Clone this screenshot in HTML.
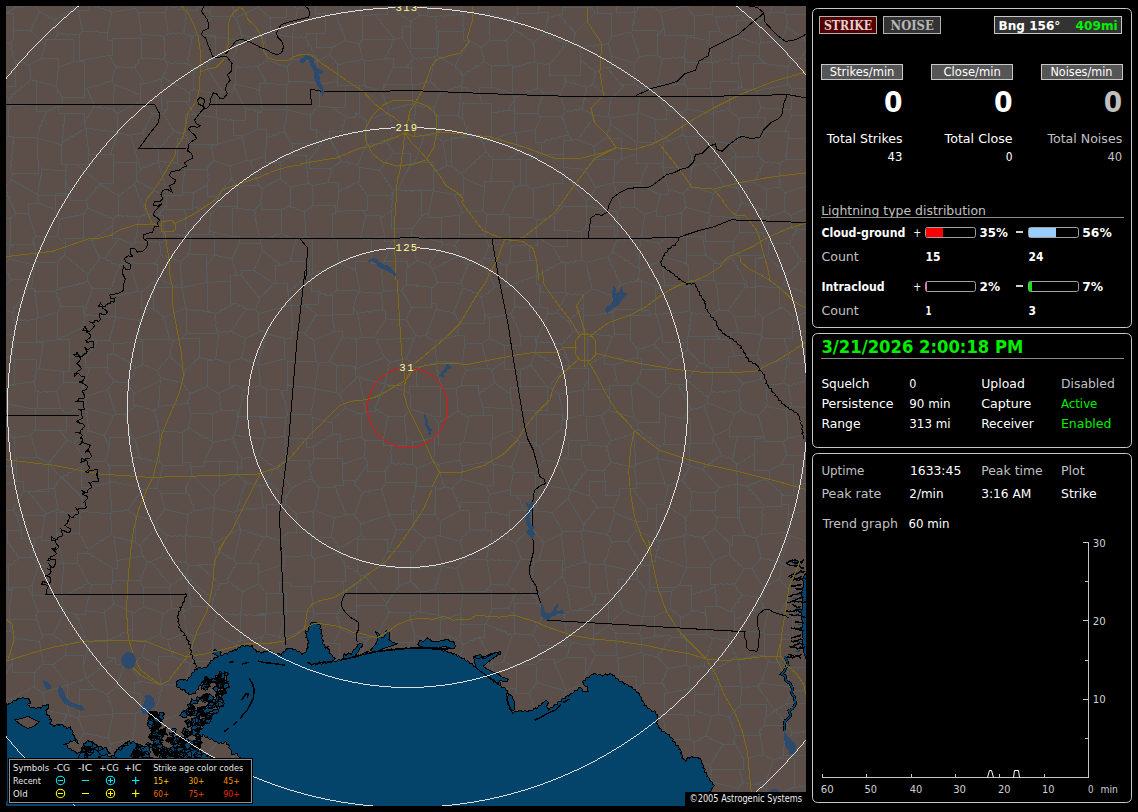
<!DOCTYPE html>
<html><head><meta charset="utf-8"><title>Lightning Monitor</title>
<style>
html,body{margin:0;padding:0;background:#000;overflow:hidden}
svg{display:block}
text{font-family:"DejaVu Sans","Liberation Sans",sans-serif;white-space:pre}
</style></head><body>
<svg width="1138" height="812" viewBox="0 0 1138 812">
<rect width="1138" height="812" fill="#000"/>
<defs><clipPath id="mc"><rect x="6" y="6" width="800" height="800"/></clipPath></defs>
<g clip-path="url(#mc)" shape-rendering="crispEdges">
<rect x="6" y="6" width="800" height="800" fill="#5c4f4a"/>
<path d="M804.5 -17.2 L819.6 13.0 M-13.0 487.7 L-11.2 487.8 L-8.1 486.2 L-5.6 487.2 L-3.4 485.2 L-0.1 485.9 L1.5 484.6 L5.0 484.3 L6.7 484.2 L9.9 482.7 L12.1 483.5 L14.7 481.4 L17.3 481.5 M-13.3 487.9 L-13.3 490.1 L-10.6 492.4 L-10.8 495.3 L-8.2 496.8 L-8.0 500.2 L-5.9 501.5 L-4.9 504.9 L-3.8 506.4 L-1.8 509.4 L-1.2 511.7 M23.1 491.3 L23.1 481.5 L17.3 481.5 M23.4 490.9 L22.3 494.4 L20.4 495.7 L20.0 499.1 L17.5 500.5 L17.4 503.6 L14.5 505.4 L14.5 507.9 L12.4 510.2 M12.4 510.2 L-1.2 511.7 M-9.7 739.9 L-10.9 741.3 L-10.9 744.6 L-13.2 746.3 L-12.6 749.1 L-15.0 751.4 L-14.7 753.4 L-16.3 756.5 L-17.2 757.9 L-17.6 761.3 L-18.6 763.3 M-9.3 739.6 L-13.9 737.3 M691.2 313.7 L694.4 312.8 L696.7 314.5 L698.9 313.2 L702.1 314.3 L703.7 314.4 L707.0 313.8 L709.0 315.2 L711.6 314.2 M690.8 313.6 L691.3 315.4 L690.7 318.8 L690.0 320.3 L690.6 323.7 L689.0 325.7 L690.2 328.2 L688.7 331.2 L689.0 332.9 L688.9 336.3 L687.7 337.9 L687.9 340.8 M711.6 314.2 L717.7 336.3 M717.7 336.3 L687.9 336.3 L687.9 340.8 M742.2 594.5 L744.4 596.3 L746.7 595.1 L749.9 596.4 L751.5 596.3 L754.9 596.1 L756.7 597.5 L759.5 597.3 M742.0 595.2 L734.2 584.8 M734.2 584.8 L744.5 568.7 M763.2 587.1 L763.2 597.3 L759.5 597.3 M763.2 587.1 L751.8 568.6 M751.8 568.6 L744.5 568.7 M781.7 564.6 L779.2 579.5 M781.7 564.6 L780.4 562.0 M780.4 562.0 L761.2 558.2 M761.2 558.2 L751.8 568.6 M779.2 579.5 L763.2 587.1 M813.3 297.9 L812.6 299.9 L814.3 302.8 L813.1 305.5 L814.6 307.9 M-15.7 35.5 L-15.7 9.3 L-9.3 9.3 M-9.3 9.3 L-10.2 8.3 M55.7 -14.9 L55.7 -9.0 L40.0 -9.0 M40.0 -9.0 L39.9 -9.1 M804.5 -17.2 L792.2 -17.2 L792.2 -17.6 M-7.6 808.1 L-15.1 820.3 M-18.6 763.3 L-18.6 769.7 L-11.1 769.7 M-9.4 781.4 L-8.2 778.1 L-10.3 775.6 L-9.6 772.4 L-11.1 769.7 M-7.5 708.1 L-11.8 710.7 M11.9 698.6 L11.9 707.0 L9.6 707.0 M11.9 698.6 L2.1 698.6 L2.1 682.2 M9.6 707.8 L6.7 706.1 L4.0 707.8 L0.9 706.4 L-1.5 708.2 L-4.9 707.4 L-7.5 708.1 M2.0 681.2 L-0.1 681.7 L-3.4 680.3 L-5.1 680.0 L-8.7 679.7 L-10.4 678.4 L-13.8 679.0 L-16.1 678.0 M-14.1 737.8 L-14.4 734.2 L-13.3 732.3 L-14.4 729.1 L-12.7 726.8 L-14.0 724.1 L-12.3 721.1 L-13.2 719.1 L-12.4 715.6 L-12.1 713.9 L-11.8 710.7 M780.4 562.0 L790.0 535.6 M761.2 558.2 L756.0 537.5 M790.0 535.6 L787.6 532.1 M787.6 532.1 L761.4 534.5 M756.0 537.5 L761.4 534.5 M715.2 561.1 L716.7 559.2 L720.3 558.7 L721.7 557.3 L725.0 556.0 L726.8 555.5 L729.5 554.0 M714.6 560.2 L702.7 537.8 M713.7 528.1 L712.6 531.0 L709.3 532.1 L708.2 535.0 L704.6 535.9 L702.7 537.8 M714.5 528.9 L732.9 545.9 M732.9 545.9 L729.5 545.9 L729.5 554.0 M744.5 569.3 L741.9 566.9 L741.0 565.3 L737.9 563.7 L737.4 561.2 L734.3 560.4 L733.3 557.3 L731.0 556.7 L729.5 554.0 M745.9 535.5 L747.6 535.9 L751.2 536.2 L752.8 537.7 L756.0 537.5 M745.5 535.1 L732.9 535.1 L732.9 545.9 M815.1 633.0 L813.7 631.4 L813.4 627.9 L813.4 626.2 L811.7 623.2 L812.7 620.7 L810.7 618.6 L810.6 615.8 M810.6 615.8 L814.4 610.3 M794.4 317.8 L792.1 331.2 M794.4 317.8 L813.9 308.5 M812.9 308.8 L813.9 310.7 L813.5 314.3 L813.2 316.0 L814.0 319.5 L812.8 321.6 L814.4 324.6 L812.9 327.1 L814.5 329.6 L813.2 332.7 L814.5 334.7 L813.8 338.2 L813.9 340.4 M792.1 331.2 L813.9 331.2 L813.9 340.4 M781.4 306.7 L784.4 308.9 L785.5 310.5 L788.8 312.1 L789.6 314.5 L792.8 315.7 L794.4 317.8 M782.0 308.0 L778.7 308.1 L777.4 310.2 L773.8 311.0 L772.5 312.5 L769.2 314.1 L767.5 314.8 L764.9 317.3 L762.8 318.4 M761.8 335.0 L762.8 318.4 M761.8 335.0 L762.2 335.6 M762.2 335.6 L762.2 338.9 L784.3 338.9 M784.3 338.9 L792.1 338.9 L792.1 331.2 M781.5 307.2 L779.9 307.2 L779.9 287.8 M810.7 295.0 L813.3 297.5 M810.7 295.0 L783.7 284.4 M814.6 307.9 L813.9 308.5 M783.7 284.4 L779.9 287.8 M813.9 340.4 L818.6 345.2 M-17.2 82.7 L-14.1 86.1 M10.0 -11.5 L-8.1 -11.5 L-8.1 -6.8 M10.0 -11.5 L14.4 -18.7 M-9.3 9.3 L-9.3 13.3 L6.7 13.3 M-10.2 8.3 L-8.1 8.3 L-8.1 -6.8 M6.7 13.3 L15.3 7.6 M15.3 7.6 L10.0 -11.5 M40.0 -9.0 L35.8 4.2 M36.3 5.0 L32.8 4.9 L31.2 5.2 L27.9 6.3 L25.8 5.5 L23.1 7.4 L20.3 6.2 L18.3 8.1 L15.3 7.6 M39.9 -9.1 L14.4 -18.7 M509.1 -15.2 L516.8 -12.4 M509.1 -15.2 L494.1 -16.6 M516.8 -12.4 L517.7 -12.4 L517.7 13.9 M494.1 -16.6 L493.8 -16.2 M493.8 -16.2 L488.5 13.3 M517.7 13.9 L513.1 19.8 M513.1 19.8 L490.1 14.4 M488.5 13.3 L490.1 14.4 M533.0 -19.2 L516.8 -12.4 M463.8 16.8 L461.1 14.0 M463.8 16.8 L463.8 13.3 L488.5 13.3 M464.2 -10.1 L464.2 -16.2 L493.8 -16.2 M464.2 -10.1 L459.7 -10.1 L459.7 -1.2 M459.7 -1.2 L461.1 -1.2 L461.1 14.0 M533.0 -19.2 L539.2 -12.1 M517.7 13.9 L538.4 13.9 L538.4 12.1 M539.0 -12.6 L539.9 -9.1 L538.7 -7.0 L540.1 -3.9 L538.5 -1.3 L539.9 1.2 L538.4 4.3 L539.3 6.3 L538.4 9.9 L538.4 12.1 M738.4 332.4 L734.4 316.2 M738.2 333.4 L741.1 332.1 L743.7 333.9 L746.0 332.7 L749.2 334.0 L750.9 333.9 L754.5 333.9 L756.2 335.0 L759.4 334.0 L761.8 335.0 M762.2 318.8 L761.8 315.7 L758.9 314.7 L757.9 311.4 L755.5 310.2 M734.4 316.2 L755.5 316.2 L755.5 310.2 M711.6 314.2 L719.3 309.6 M717.7 336.3 L720.7 339.0 M738.4 332.4 L730.1 332.4 L730.1 340.4 M730.1 340.4 L720.7 339.0 M719.3 309.6 L719.3 310.4 L728.0 310.4 M734.4 316.2 L728.0 310.4 M819.6 13.0 L818.4 14.1 M818.2 13.7 L819.3 17.0 L818.2 19.1 L819.9 21.9 L818.5 24.7 L820.0 26.8 L819.1 30.2 L819.7 31.9 L820.0 35.4 L819.5 37.6 M-15.9 332.9 L-19.8 332.9 L-19.8 317.2 M-15.9 332.9 L-12.1 335.2 M-14.7 358.1 L-14.7 335.2 L-12.1 335.2 M-14.0 440.2 L-14.0 413.5 L-10.6 413.5 M-14.0 440.2 L-9.7 444.7 M-9.7 444.7 L10.7 436.8 M10.8 436.3 L11.0 434.5 L9.0 431.8 L9.9 429.3 L7.7 427.4 L8.1 424.1 L7.0 422.7 L6.0 419.4 L6.3 417.6 L4.2 415.1 L4.9 412.3 L3.4 410.2 M3.4 410.2 L-10.6 410.2 L-10.6 413.5 M16.3 470.3 L14.4 468.6 M16.3 470.3 L16.3 457.3 L37.5 457.3 M14.4 468.6 L14.5 437.8 M14.1 436.8 L17.5 437.6 L19.3 436.7 L23.0 436.8 L24.7 436.7 L28.3 436.0 L30.5 435.7 M38.4 457.3 L36.2 455.1 L36.8 452.0 L35.2 450.5 L34.6 447.1 L34.5 445.5 L32.5 442.8 L33.2 440.1 L31.1 438.5 L30.5 435.7 M16.3 470.3 L16.3 481.5 L17.3 481.5 M23.1 491.3 L25.7 491.3 M25.7 491.3 L48.5 491.3 L48.5 463.1 M37.8 457.7 L39.8 458.7 L43.6 460.2 L45.5 461.1 L48.5 463.1 M14.5 437.8 L10.7 436.8 M8.8 404.1 L32.0 408.8 M8.8 404.1 L8.8 410.2 L3.4 410.2 M32.1 408.9 L32.0 408.8 M32.1 408.9 L35.0 408.9 L35.0 429.5 M30.5 435.7 L35.0 429.5 M159.1 430.8 L159.1 462.3 L160.3 462.3 M159.1 430.8 L158.8 430.5 M158.8 430.5 L135.0 439.4 M160.6 463.1 L157.2 462.0 L155.6 461.5 L152.0 461.4 L150.3 459.8 L147.1 460.6 L145.0 458.4 L142.3 459.4 L139.8 457.9 M135.0 439.4 L139.8 457.9 M564.1 205.1 L561.7 208.1 L560.1 209.3 L557.8 212.4 L555.8 213.3 L554.1 216.3 M563.5 205.2 L563.5 206.0 L585.7 206.0 M585.7 206.0 L586.1 206.0 L586.1 226.4 M567.1 230.4 L554.1 230.4 L554.1 216.3 M567.1 230.4 L581.3 231.8 M581.3 231.8 L586.1 226.4 M585.7 206.0 L585.9 205.7 M586.1 226.4 L614.6 226.4 L614.6 235.3 M614.6 235.3 L617.5 235.3 L617.5 211.6 M585.9 205.7 L617.5 211.6 M263.4 -15.2 L263.4 -14.7 L243.3 -14.7 M54.9 -14.4 L58.4 -13.7 L59.6 -11.0 L62.8 -10.5 L64.2 -7.4 L66.5 -5.9 M67.2 -5.2 L68.5 -7.0 L72.0 -7.9 L73.5 -8.9 L76.6 -10.8 L78.6 -11.0 L81.1 -13.7 L83.8 -13.5 L85.6 -16.2 L88.8 -16.2 L90.9 -17.7 M-16.3 486.2 L-14.9 483.0 L-14.6 481.4 L-14.3 477.9 L-12.9 476.2 L-13.6 473.0 L-11.5 470.9 L-12.4 468.3 L-10.5 465.5 L-10.9 463.5 L-9.8 460.6 M-10.5 459.4 L-9.8 460.6 M-13.5 487.5 L-15.4 486.1 M-1.2 511.7 L-10.5 511.7 L-10.5 521.1 M-9.7 444.7 L-9.7 459.4 L-10.5 459.4 M14.4 468.6 L-9.8 460.6 M-18.8 641.4 L-18.2 644.8 L-18.4 646.5 L-16.6 649.3 L-17.6 651.8 L-15.7 653.8 L-16.0 656.7 M-9.5 542.4 L-12.3 539.1 M-10.4 542.2 L-8.6 545.2 L-9.9 547.9 L-8.1 550.5 L-9.3 553.6 L-7.9 555.7 L-8.8 558.8 M-8.8 558.8 L-10.2 560.8 M-10.5 521.1 L-12.3 521.1 L-12.3 539.1 M15.2 638.4 L10.1 628.9 M15.2 638.4 L9.7 654.0 M9.7 654.0 L9.7 656.7 L-16.0 656.7 M-12.0 631.1 L10.1 631.1 L10.1 628.9 M-12.0 631.1 L-19.4 631.1 L-19.4 642.0 M1.1 682.0 L3.3 679.5 L4.0 678.0 L5.0 674.7 L7.1 673.6 L7.0 670.6 L9.6 668.6 L9.8 666.8 L11.4 663.8 L12.8 662.2 M12.8 662.2 L12.8 654.0 L9.7 654.0 M11.9 698.6 L33.9 686.6 M12.8 662.2 L12.8 672.1 L34.7 672.1 M34.8 686.3 L34.0 684.1 L34.8 680.4 L34.1 678.4 L34.4 674.5 L34.7 672.1 M67.0 714.6 L46.9 710.4 M67.0 714.6 L54.3 739.5 M54.6 738.7 L51.3 740.1 L48.9 738.7 L45.9 740.1 L43.1 738.4 L40.5 738.6 M40.5 738.6 L40.5 716.3 L41.0 716.3 M41.0 716.3 L41.0 710.4 L46.9 710.4 M9.6 707.0 L11.8 712.0 M11.4 711.4 L15.0 711.9 L16.7 712.8 L20.2 712.2 L22.2 714.0 L25.2 712.9 L27.8 714.9 L30.2 714.0 L33.3 715.8 L35.3 715.3 L38.7 716.2 L41.0 716.3 M33.9 686.6 L42.7 693.1 M42.7 693.1 L46.9 710.4 M12.4 510.2 L17.2 516.0 M-9.5 542.4 L7.5 542.4 L7.5 542.7 M17.2 516.0 L21.5 530.8 M7.5 542.7 L7.5 530.8 L21.5 530.8 M160.3 462.3 L163.4 465.4 M163.4 465.4 L156.6 488.1 M156.6 488.1 L142.0 489.4 M139.8 457.9 L131.6 457.9 L131.6 465.0 M131.6 465.0 L139.9 487.3 M142.0 489.4 L139.9 487.3 M487.0 823.6 L463.7 817.9 M487.0 823.6 L487.0 816.7 L494.1 816.7 M494.1 816.7 L480.6 789.2 M460.6 796.9 L480.6 789.2 M460.6 796.9 L459.5 796.9 L459.5 807.3 M459.5 807.3 L459.5 817.9 L463.7 817.9 M494.1 816.7 L494.1 814.3 L508.2 814.3 M480.6 789.2 L482.7 786.3 M482.4 786.9 L485.7 785.5 L488.0 786.7 L491.0 785.1 L493.8 786.6 L496.2 785.1 L499.5 786.4 L501.5 785.6 L505.1 786.3 L507.4 786.0 M515.5 797.1 L514.5 795.5 L512.3 792.5 L511.4 790.7 L508.6 788.1 L507.4 786.0 M515.6 797.6 L514.0 797.6 L514.0 806.6 M514.0 806.6 L508.2 806.6 L508.2 814.3 M459.8 757.1 L461.7 753.9 L461.6 751.9 L463.1 748.3 L463.6 746.5 L464.3 742.8 L465.0 741.1 L465.2 737.7 M460.8 757.0 L462.9 760.7 M462.9 760.7 L480.7 760.7 L480.7 768.6 M485.5 735.7 L471.6 733.5 M485.5 735.7 L492.0 758.5 M492.7 758.6 L490.2 760.9 L488.4 761.5 L486.9 764.5 L484.1 764.9 L483.4 767.3 L480.7 768.6 M465.2 737.7 L471.6 733.5 M460.2 796.7 L459.6 794.5 L456.5 793.6 L455.6 790.7 L453.2 790.2 L451.2 788.1 M450.7 788.4 L451.9 784.9 L453.2 783.5 L453.7 779.9 L455.8 778.5 L455.8 775.1 L458.4 773.5 L458.1 770.4 L460.7 768.3 L460.5 765.8 L462.8 763.1 L462.9 760.7 M483.3 785.8 L482.7 784.3 L481.8 780.9 L482.7 778.9 L480.9 776.2 L482.1 773.4 L480.6 771.6 L480.7 768.6 M484.7 624.2 L461.6 624.2 L461.6 615.2 M484.7 624.2 L484.7 637.1 L479.9 637.1 M462.1 615.5 L460.4 617.7 L461.9 620.4 L460.3 623.4 L461.2 625.4 L460.5 628.9 L460.5 630.6 L460.8 634.1 L459.7 636.1 L461.0 639.1 L460.5 641.7 M480.1 636.6 L477.6 638.9 L474.8 638.5 L473.1 640.9 L469.7 641.0 L468.3 642.5 L464.9 643.7 L462.8 644.2 M460.5 641.7 L462.8 644.2 M468.0 667.1 L492.3 664.2 M468.0 667.1 L460.4 656.6 M492.7 663.9 L492.3 664.2 M493.7 663.5 L491.1 661.8 L491.0 658.4 L489.0 657.1 L488.0 653.6 L487.1 652.2 L485.1 649.1 L484.9 647.1 L482.4 644.7 L482.6 641.9 L480.1 640.1 L479.9 637.1 M461.6 656.7 L460.6 654.4 L462.2 651.4 L462.2 649.7 L462.2 646.3 L462.8 644.2 M439.7 634.2 L443.2 633.9 L445.0 636.2 L448.1 635.5 L450.4 638.0 L452.9 637.6 L455.9 639.7 L457.6 640.2 L460.5 641.7 M440.2 633.5 L440.2 640.1 L433.5 640.1 M460.9 656.9 L457.5 657.5 L455.5 656.5 L452.8 658.1 L450.0 656.8 L448.1 658.1 L444.6 657.6 L443.0 657.5 L439.7 658.6 L437.4 658.1 M433.5 640.1 L437.4 640.1 L437.4 658.1 M487.9 702.4 L487.9 714.3 L499.9 714.3 M487.9 702.4 L469.0 713.0 M469.0 713.0 L471.6 713.0 L471.6 733.5 M485.5 735.7 L489.0 733.5 M489.0 733.5 L499.9 733.5 L499.9 714.3 M445.2 709.2 L463.6 709.0 M445.6 708.7 L444.9 707.0 L443.8 703.5 L444.2 701.4 L442.2 698.4 L443.0 695.8 L440.7 693.4 L441.4 690.3 L439.1 688.4 L439.2 685.3 M463.6 709.0 L465.1 709.0 L465.1 686.8 M439.2 685.3 L461.2 685.3 L461.2 681.4 M465.1 686.8 L461.2 681.4 M487.6 693.5 L465.1 686.8 M487.6 693.5 L487.6 702.4 L487.9 702.4 M469.0 713.0 L463.6 709.0 M487.6 693.5 L491.1 688.3 M491.5 687.8 L491.5 686.1 L491.4 682.5 L492.4 680.6 L491.4 677.3 L493.0 675.1 L491.5 672.3 L493.1 669.3 L492.2 667.3 L492.3 664.2 M469.0 667.2 L466.7 669.9 L466.3 671.6 L464.7 674.8 L463.4 676.2 L462.9 679.6 L461.2 681.4 M465.2 737.7 L441.7 729.6 M445.2 709.2 L441.9 714.3 M441.9 714.3 L441.7 729.6 M437.3 757.9 L434.0 757.9 L434.0 735.9 M437.3 757.9 L460.8 757.9 L460.8 757.0 M441.7 729.6 L434.0 735.9 M451.2 788.1 L440.6 788.1 L440.6 785.7 M437.3 757.9 L435.8 759.8 M440.6 785.7 L435.8 759.8 M565.9 263.1 L565.8 292.5 M566.0 262.5 L568.5 263.6 L570.8 261.5 L574.0 262.3 L575.7 260.9 L579.2 260.6 L581.2 259.8 M581.2 259.8 L586.6 262.3 M586.5 262.9 L586.7 264.6 L587.7 268.1 L587.3 270.2 L589.1 273.2 L588.2 275.8 L590.4 278.3 L589.5 281.3 L591.7 283.4 L591.2 286.8 L592.0 289.1 M566.8 294.3 L565.8 292.5 M566.4 294.1 L570.0 293.8 L571.9 294.9 L575.3 293.8 L577.5 295.4 L580.4 294.1 L583.1 295.4 M583.1 295.4 L592.0 289.1 M684.3 517.3 L686.0 520.4 L684.6 523.1 L686.3 525.7 L684.9 528.9 L686.2 531.1 L685.2 534.2 M685.2 517.5 L690.0 513.2 M685.2 534.2 L702.7 537.8 M690.0 513.2 L690.0 510.4 L711.2 510.4 M714.5 528.9 L717.7 518.7 M717.7 518.7 L711.2 510.4 M690.0 513.2 L691.6 491.9 M691.6 491.9 L715.2 492.5 M711.2 510.4 L715.2 510.4 L715.2 492.5 M811.4 589.0 L811.4 569.2 L812.7 569.2 M811.4 589.0 L815.5 594.2 M812.7 569.2 L813.4 568.1 M814.4 610.3 L815.5 610.3 L815.5 594.2 M781.7 564.6 L812.7 569.2 M792.1 592.1 L789.9 589.5 L788.8 588.3 L785.8 586.8 L785.1 584.2 L782.4 583.8 L780.9 580.8 L779.2 579.5 M792.4 591.2 L792.4 589.0 L811.4 589.0 M809.3 542.0 L813.4 568.1 M809.3 542.0 L821.0 534.9 M809.3 542.0 L790.0 535.6 M483.2 407.6 L478.9 394.2 M483.2 407.6 L512.0 408.6 M495.0 382.5 L492.0 384.7 L490.3 385.6 L487.9 388.3 L485.5 388.5 L483.5 391.4 L480.6 391.6 L478.9 394.2 M494.3 382.4 L510.5 394.2 M511.3 408.5 L512.8 405.8 L511.0 402.8 L512.1 399.9 L509.9 397.2 L510.5 394.2 M687.9 340.8 L687.0 342.6 M687.0 342.6 L687.5 349.7 M720.7 339.0 L704.8 339.0 L704.8 363.9 M687.5 349.7 L699.8 362.6 M704.8 363.9 L699.8 362.6 M818.6 345.2 L811.9 361.7 M784.3 338.9 L789.1 356.6 M789.1 356.6 L789.1 363.1 L809.3 363.1 M811.9 361.7 L809.3 363.1 M788.1 384.9 L791.1 385.8 L793.3 383.6 L796.7 384.3 L798.5 382.2 L802.1 382.3 L804.2 381.0 M788.2 385.6 L783.6 383.5 M789.1 356.6 L787.2 358.4 M804.2 381.0 L809.3 363.1 M784.7 383.7 L783.5 381.1 L785.3 378.3 L784.8 376.5 L785.3 373.0 L786.2 371.5 L785.5 368.2 L787.3 366.1 L786.2 363.6 L787.8 360.6 L787.2 358.4 M188.4 403.7 L187.5 400.9 L189.6 398.5 L189.2 396.5 L189.9 393.7 M187.4 403.4 L191.2 412.6 M189.9 393.7 L207.2 386.4 M207.2 386.4 L218.3 393.6 M218.4 393.1 L219.6 396.7 L219.1 398.8 L220.7 402.1 L219.6 404.5 L221.3 407.5 L221.1 410.2 M221.1 410.2 L211.9 413.8 M191.2 412.6 L191.2 413.8 L211.9 413.8 M-14.1 143.7 L-9.3 139.2 M35.8 4.2 L39.3 12.2 M38.9 11.9 L42.5 13.1 L43.8 14.8 L47.3 15.3 L48.7 17.7 L51.9 17.9 L53.8 20.0 M66.5 -5.9 L73.6 -5.9 L73.6 8.3 M54.5 21.0 L55.6 18.8 L58.9 17.6 L60.3 16.8 L62.9 14.5 L65.2 14.6 L66.8 11.8 L70.0 11.7 L71.1 9.7 L73.6 8.3 M-16.1 36.5 L-13.3 35.8 L-10.8 37.9 L-9.0 37.8 L-5.7 38.7 L-4.2 40.1 L-1.1 39.5 L1.0 41.7 L3.2 41.1 L6.3 42.5 L7.8 43.2 L10.8 43.6 M11.7 55.9 L13.2 52.9 L11.0 49.6 L11.4 47.0 L10.8 43.6 M-13.9 87.1 L-11.4 85.9 L-7.9 87.0 L-5.5 85.6 L-2.2 86.7 M-2.2 86.7 L15.4 86.7 L15.4 60.4 M12.4 56.0 L15.4 60.4 M6.7 13.3 L13.9 13.3 L13.9 37.1 M39.3 12.2 L30.5 30.8 M30.5 30.8 L13.9 30.8 L13.9 37.1 M10.8 43.6 L13.9 37.1 M459.7 -1.2 L433.8 -1.2 L433.8 -13.5 M539.2 -12.1 L561.1 -5.2 M560.4 -5.7 L563.3 -7.1 L563.5 -9.5 L566.2 -11.8 L567.0 -13.3 L568.7 -16.3 L570.2 -18.0 M469.2 134.9 L473.6 137.7 M469.2 134.9 L442.9 141.5 M473.6 137.7 L451.8 137.7 L451.8 166.6 M442.9 141.5 L446.9 165.5 M451.8 166.6 L446.9 165.5 M355.0 112.7 L357.8 114.9 L359.2 116.0 L362.6 117.1 L363.7 119.3 L366.3 120.4 M355.0 113.6 L355.0 117.9 L346.5 117.9 M347.5 118.2 L344.4 120.3 L344.5 123.4 L341.9 125.8 L342.6 129.0 L340.5 131.5 M366.1 145.3 L366.1 131.5 L340.5 131.5 M366.1 145.3 L368.1 143.7 M368.1 143.7 L366.3 143.7 L366.3 120.4 M368.4 144.8 L370.6 143.5 L374.1 144.3 L376.0 143.5 L379.8 143.5 L381.6 143.4 L385.3 142.7 L387.7 143.3 M388.3 112.3 L385.9 114.6 L382.9 113.9 L381.4 115.9 L378.0 116.0 L376.5 117.0 L373.3 118.3 L371.4 118.1 L368.7 120.3 L366.3 120.4 M387.8 113.7 L388.8 115.2 L390.1 118.6 L390.1 120.4 L392.2 123.3 L391.7 125.8 L394.1 127.8 L394.7 130.5 M387.4 143.7 L388.6 140.0 L390.4 138.6 L391.5 135.0 L393.8 133.7 L394.7 130.5 M270.3 17.7 L271.2 33.4 M269.9 18.6 L268.1 15.6 L266.5 14.7 L263.7 12.5 L263.0 10.7 L259.8 9.3 L258.6 7.1 M258.6 7.1 L235.5 17.8 M264.1 36.6 L262.2 37.1 L258.5 36.5 L256.7 36.4 L252.9 36.6 L251.1 36.0 L247.5 37.0 L245.4 35.8 L242.3 35.9 M264.5 37.3 L271.2 33.4 M235.8 17.2 L237.1 20.6 L237.3 22.5 L239.3 25.6 L238.8 28.1 L241.1 30.6 L240.4 33.6 L242.3 35.9 M719.3 309.6 L716.4 283.2 M728.0 310.4 L744.6 288.2 M716.4 283.2 L744.6 283.2 L744.6 288.2 M810.7 295.0 L809.2 261.3 M783.7 284.4 L786.4 274.3 M809.2 261.3 L809.2 261.1 L801.0 261.1 M786.7 273.9 L788.4 273.0 L791.0 270.3 L792.9 269.5 L794.8 266.3 L797.2 265.6 L798.5 262.3 L801.0 261.1 M809.2 261.3 L810.6 260.9 M810.6 260.9 L810.6 231.0 L813.8 231.0 M816.6 229.6 L813.8 231.0 M364.1 457.1 L342.6 464.3 M364.1 457.1 L367.9 462.9 M342.6 464.3 L342.6 480.3 L343.7 480.3 M343.7 480.3 L354.3 480.3 L354.3 483.8 M354.3 483.8 L367.9 462.9 M-7.6 808.1 L-7.6 806.0 L14.3 806.0 M-8.6 781.3 L-8.6 784.6 L6.1 784.6 M6.1 784.6 L14.5 797.9 M14.3 806.0 L14.3 797.9 L14.5 797.9 M14.3 806.0 L18.0 812.5 M34.1 743.2 L34.1 763.8 L35.2 763.8 M34.1 743.2 L10.5 743.2 L10.5 735.2 M5.3 755.1 L4.5 740.1 M5.3 755.1 L15.7 755.1 L15.7 768.4 M15.7 768.4 L15.7 766.4 L33.5 766.4 M4.5 740.1 L10.5 735.2 M33.5 766.4 L35.2 763.8 M11.8 712.0 L10.5 712.0 L10.5 735.2 M40.5 738.6 L34.1 743.2 M-9.3 739.6 L-9.3 740.1 L4.5 740.1 M-11.1 769.7 L5.3 755.1 M5.1 784.3 L7.9 782.1 L8.3 780.2 L10.4 777.2 L11.6 775.9 L12.8 772.5 L14.9 771.4 L15.7 768.4 M14.5 797.9 L36.5 783.5 M36.5 783.5 L33.5 783.5 L33.5 766.4 M135.9 760.8 L135.9 757.0 L109.7 757.0 M135.9 760.8 L137.5 763.9 M109.7 757.0 L109.7 779.1 L115.7 779.1 M138.5 763.7 L137.0 767.0 L136.9 768.7 L136.6 772.3 L135.2 774.0 L135.9 777.3 L133.9 779.4 L134.9 782.1 L133.6 784.8 M115.7 779.1 L133.6 779.1 L133.6 784.8 M139.2 320.6 L115.3 317.0 M139.2 320.6 L139.2 339.9 L143.8 339.9 M142.7 341.5 L143.8 339.9 M142.7 341.5 L113.3 343.9 M113.3 343.9 L109.4 340.5 M108.4 340.5 L110.5 337.7 L110.1 335.6 L111.7 332.4 L112.0 330.6 L112.7 327.1 L113.9 325.5 L113.6 322.0 L115.6 320.1 L115.1 317.1 M115.3 317.0 L115.1 317.1 M163.9 317.1 L153.5 309.0 M163.8 317.6 L163.5 319.5 L165.6 322.0 L164.8 324.7 L166.7 326.4 L166.8 329.8 L167.4 331.2 L168.9 334.3 L168.3 336.4 L169.8 338.8 M153.5 309.0 L148.4 308.6 M148.9 309.2 L146.2 310.3 L146.1 312.7 L143.5 315.0 L142.5 316.2 L141.4 319.4 L139.2 320.6 M169.8 338.8 L169.8 339.9 L143.8 339.9 M115.0 355.7 L118.0 355.6 L120.0 358.3 L122.7 358.3 L125.2 360.8 L127.3 361.1 L130.3 363.4 L131.7 364.4 L135.0 366.1 L136.7 367.8 M115.5 354.6 L113.3 354.6 L113.3 343.9 M136.7 367.8 L142.6 364.4 M142.6 364.4 L142.6 341.5 L142.7 341.5 M-10.1 299.7 L11.6 279.8 M-12.5 265.6 L4.3 264.9 M12.1 280.0 L9.5 277.4 L9.6 274.8 L6.9 272.9 L7.0 269.6 L4.7 268.0 L4.3 264.9 M-18.8 317.7 L-18.8 314.9 L-16.0 312.7 L-15.7 310.7 L-13.7 307.7 L-12.6 306.2 L-11.3 302.8 L-9.6 301.2 M-9.6 301.2 L-10.1 299.7 M-13.8 263.7 L-12.5 265.6 M-13.8 263.7 L-9.2 263.7 L-9.2 234.2 M9.2 259.0 L4.3 264.9 M9.2 259.0 L9.2 246.4 L12.0 246.4 M11.6 247.2 L9.8 244.3 L7.3 244.2 L4.9 241.5 L3.0 241.1 L-0.0 239.1 L-1.5 238.0 L-4.9 236.7 L-6.2 235.0 L-9.2 234.2 M34.8 265.2 L9.2 259.0 M34.8 265.2 L37.1 262.7 M38.2 262.5 L36.3 260.4 L37.0 257.1 L35.8 255.4 L35.5 251.9 L35.4 250.3 L34.0 247.0 L34.9 244.8 L32.9 242.3 L33.1 239.6 M33.1 239.6 L33.1 244.6 L14.1 244.6 M12.0 246.4 L14.1 244.6 M-9.2 234.2 L-10.5 232.0 M-10.4 362.9 L12.5 355.9 M-11.2 363.2 L-10.9 365.0 L-11.3 368.6 L-12.3 370.2 L-11.6 373.6 L-13.4 375.6 L-12.2 378.5 L-13.0 381.1 M-13.0 381.1 L5.2 388.0 M14.3 359.2 L12.5 355.9 M14.3 359.2 L14.3 385.3 L7.8 385.3 M7.8 385.3 L5.2 388.0 M-14.7 358.1 L-10.4 362.9 M10.5 333.6 L7.3 335.3 L4.7 334.1 L2.0 335.9 L-1.1 334.4 L-3.5 335.9 L-6.9 334.6 L-8.9 335.5 L-12.1 335.2 M10.2 334.4 L14.3 342.0 M14.9 341.6 L14.2 345.3 L13.8 347.1 L13.3 350.8 L12.4 352.6 L12.5 355.9 M-18.9 384.0 L-13.0 381.1 M8.6 403.8 L9.3 401.5 L7.2 398.6 L8.0 396.0 L5.6 393.5 L6.3 390.5 L5.2 388.0 M161.0 493.5 L185.5 493.5 L185.5 488.7 M161.0 493.5 L164.7 509.3 M164.7 509.3 L188.0 514.5 M188.0 514.5 L194.3 510.1 M186.2 488.0 L186.7 491.5 L187.5 492.9 L189.3 495.9 L189.0 498.1 L191.5 500.2 L191.1 503.3 L193.1 504.7 L193.6 508.1 L194.3 510.1 M159.1 430.8 L182.7 432.4 M163.4 465.4 L182.9 465.4 L182.9 462.2 M182.9 462.2 L182.7 432.4 M191.2 412.6 L188.2 427.8 M211.9 413.8 L212.0 413.8 L212.0 441.1 M212.6 440.5 L209.1 440.4 L207.5 437.9 L204.4 438.1 L202.5 435.4 L199.9 435.4 L197.3 432.9 L195.5 432.5 L192.4 430.5 L191.1 429.2 L188.2 427.8 M133.9 393.5 L160.3 380.5 M133.9 393.5 L133.9 405.8 L136.3 405.8 M136.2 404.8 L139.2 406.6 L141.0 406.6 L144.5 407.3 L146.0 408.6 L149.4 408.3 L151.3 410.4 L154.1 410.4 M160.3 380.5 L158.7 406.4 M158.7 406.4 L154.1 410.4 M158.8 430.0 L159.1 428.2 L157.3 425.3 L158.2 422.8 L156.2 420.7 L156.7 417.4 L155.5 415.9 L154.9 412.4 L154.1 410.4 M125.8 414.9 L126.1 416.6 L127.5 419.9 L126.9 422.2 L129.0 424.8 L128.2 427.7 L130.3 429.8 L129.8 433.1 L131.4 434.8 L132.1 437.8 M125.1 414.2 L128.0 412.0 L129.6 411.2 L131.8 408.3 L134.3 407.9 L136.3 405.8 M135.0 439.4 L132.1 437.8 M187.4 403.4 L158.7 406.4 M182.7 432.4 L188.2 427.8 M43.0 342.7 L39.3 368.7 M43.0 342.7 L14.3 342.7 L14.3 342.0 M14.3 359.2 L36.5 359.2 L36.5 370.4 M36.5 370.4 L39.3 368.7 M7.8 385.3 L33.6 381.6 M35.6 370.0 L36.6 373.6 L34.7 375.8 L35.4 379.2 L33.6 381.6 M32.0 408.8 L37.4 408.8 L37.4 392.5 M34.4 381.0 L34.3 384.8 L35.7 386.6 L35.8 390.4 L37.4 392.5 M125.9 414.4 L115.9 414.2 M104.6 435.2 L105.3 433.6 L106.6 430.2 L108.0 428.8 L108.6 425.2 L110.5 423.7 L110.3 420.3 L112.7 418.5 L113.0 415.6 M104.1 435.5 L109.4 446.5 M109.4 446.5 L109.4 437.8 L132.1 437.8 M115.9 414.2 L113.0 415.6 M104.1 435.5 L88.8 430.9 M89.8 430.9 L87.9 428.5 L89.0 425.4 L87.6 423.7 L87.6 420.2 L87.8 418.5 L86.3 415.5 L87.4 413.1 L85.5 410.8 L85.6 408.1 M113.0 415.6 L85.6 408.1 M60.5 430.9 L66.9 440.4 M60.5 430.9 L35.0 430.9 L35.0 429.5 M48.5 463.1 L48.8 463.2 M48.8 463.2 L66.9 440.4 M25.7 491.3 L28.6 492.2 M28.6 492.2 L54.5 488.1 M54.0 488.4 L56.0 484.8 L57.3 483.1 L59.8 479.9 L60.6 477.4 M47.9 464.0 L50.6 464.8 L51.7 468.0 L53.5 468.9 L55.7 471.8 L56.7 473.2 L59.5 475.4 L60.6 477.4 M567.1 230.4 L567.1 246.7 L553.4 246.7 M554.7 217.1 L551.2 217.0 L549.7 217.8 L546.2 218.6 L544.4 218.3 L541.5 220.2 L538.9 219.3 L536.5 220.4 M536.5 220.4 L536.5 237.3 L537.1 237.3 M537.1 237.3 L553.4 246.7 M581.3 231.8 L581.2 259.8 M565.9 263.1 L561.7 261.8 M562.4 261.8 L559.4 259.4 L559.3 256.8 L556.5 254.6 L556.8 251.6 L554.2 249.4 L553.4 246.7 M563.9 167.6 L563.9 154.2 L541.2 154.2 M563.9 167.6 L563.9 140.1 L572.6 140.1 M572.6 140.1 L568.1 135.3 M568.5 136.2 L565.1 135.3 L563.3 137.0 L559.7 136.9 L558.0 137.7 L554.5 138.8 L552.4 138.5 L549.4 140.5 L546.9 139.8 L544.4 142.2 L541.7 142.3 M541.2 154.2 L541.7 154.2 L541.7 142.3 M537.5 113.7 L540.6 119.0 M537.5 113.7 L514.2 113.7 L514.2 100.7 M540.6 119.0 L535.2 129.8 M535.2 129.8 L515.9 132.8 M515.9 132.8 L514.3 131.8 M514.3 131.8 L514.3 110.9 L507.4 110.9 M507.7 110.6 L509.3 109.0 L510.7 105.2 L512.0 103.5 L514.2 100.7 M562.3 116.0 L540.6 116.0 L540.6 119.0 M562.6 116.3 L562.0 118.5 L564.3 120.6 L563.6 123.7 L565.3 125.2 L565.8 128.6 L566.1 130.2 L568.1 133.0 L568.1 135.3 M541.7 142.3 L535.2 142.3 L535.2 129.8 M531.8 159.1 L541.2 154.2 M531.8 159.1 L531.8 153.1 L517.2 153.1 M517.2 152.7 L518.1 150.8 L516.5 148.0 L517.8 145.2 L516.4 143.3 L516.8 139.9 L516.7 138.3 L515.7 135.0 L515.9 132.8 M491.7 113.1 L491.7 139.3 L479.7 139.3 M491.1 112.8 L494.7 112.1 L496.6 112.6 L499.6 110.9 L502.2 112.0 L504.5 110.1 L507.4 110.9 M479.7 139.3 L483.3 142.9 M483.3 142.9 L514.3 131.8 M565.8 292.5 L540.4 292.5 L540.4 284.8 M537.1 276.2 L538.3 274.5 L541.5 273.1 L543.2 272.6 L545.7 270.1 L548.3 270.3 L549.9 267.7 L553.1 267.7 L554.4 265.4 L557.8 264.7 L559.1 263.6 L561.7 261.8 M536.3 275.5 L536.0 276.3 M536.0 276.3 L536.0 284.8 L540.4 284.8 M556.6 311.8 L555.0 313.0 L551.6 313.2 L550.0 313.1 L547.2 314.2 M557.0 313.2 L557.8 309.8 L559.8 308.5 L559.8 305.3 L562.4 303.6 L562.3 301.2 L564.6 298.5 L565.1 296.9 L566.8 294.3 M547.2 314.2 L547.2 307.3 L539.8 307.3 M540.4 284.8 L539.8 284.8 L539.8 307.3 M520.4 336.2 L535.9 336.2 L535.9 341.6 M520.3 335.8 L519.9 334.0 L518.2 330.7 L518.3 328.6 L516.0 325.9 L516.4 323.3 L513.7 321.1 L514.1 318.0 L511.5 316.4 L511.2 313.3 M535.9 341.6 L547.2 314.2 M511.2 313.3 L514.4 307.5 M540.1 306.5 L537.2 307.9 L534.6 306.4 L532.5 307.8 L529.2 306.8 L527.6 307.4 L524.1 307.6 L522.3 306.6 L519.4 308.0 L516.7 306.4 L514.4 307.5 M506.7 265.2 L504.9 265.0 L501.4 264.1 L499.9 262.5 L496.6 262.8 L494.7 260.4 L491.8 261.0 L489.4 258.7 L487.1 259.1 L484.3 258.0 M506.9 266.0 L506.9 285.2 L511.7 285.2 M495.8 286.6 L495.8 286.9 L510.5 286.9 M495.3 287.4 L494.0 284.0 L493.1 282.5 L491.1 279.5 L490.9 277.4 L488.2 275.3 L488.4 272.3 L485.8 270.8 L485.5 267.3 L483.6 266.1 L482.6 262.6 L480.9 261.0 M480.9 261.0 L484.3 258.0 M511.7 285.2 L510.5 286.9 M462.7 288.4 L466.3 288.1 L468.1 290.6 L471.3 290.2 L473.4 293.0 L476.2 292.9 L478.5 295.8 L481.1 296.3 M463.3 287.5 L461.2 283.3 M467.9 263.9 L468.0 267.1 L465.6 269.0 L466.0 271.3 L464.1 274.1 L463.6 275.6 L463.0 279.0 L461.0 280.4 L461.2 283.3 M468.3 264.5 L480.9 261.0 M481.7 296.3 L483.4 295.9 L485.4 293.2 L488.1 293.2 L489.1 290.7 L492.4 289.8 L493.4 288.5 L495.8 286.6 M535.4 275.4 L534.0 277.1 L530.5 277.7 L529.0 278.4 L525.9 280.0 L523.8 279.7 L521.5 282.0 L518.6 281.4 L516.9 283.6 L513.5 283.7 L511.7 285.2 M514.4 307.5 L514.4 286.9 L510.5 286.9 M509.6 262.1 L511.2 244.9 M510.1 262.4 L511.8 262.8 L514.9 261.4 L517.3 262.7 L519.4 261.1 L522.7 261.9 L524.3 261.3 L527.7 260.6 L529.8 260.6 M511.6 245.7 L513.3 245.1 L516.9 245.0 L518.6 245.9 L521.8 244.7 L524.1 246.3 L526.6 244.8 L529.4 245.3 M529.8 260.6 L529.4 245.3 M506.9 266.0 L509.6 262.1 M484.3 258.0 L488.8 246.0 M488.8 246.0 L509.2 243.4 M509.2 243.4 L511.2 244.9 M536.3 275.5 L536.3 260.6 L529.8 260.6 M537.1 237.3 L537.1 245.3 L529.4 245.3 M468.8 263.6 L466.1 262.7 L464.3 259.4 L461.4 258.6 L459.9 255.5 M461.2 283.3 L437.2 282.2 M437.4 281.6 L436.7 280.0 L435.2 276.6 L435.3 274.5 L433.0 271.7 L432.4 269.4 M459.3 254.5 L458.0 256.9 L454.6 257.2 L453.4 258.6 L450.2 260.1 L448.4 260.3 L446.1 262.8 L443.3 262.5 L441.9 265.0 L438.5 265.3 L437.3 266.7 L434.2 268.3 L432.4 269.4 M339.6 394.2 L357.8 376.9 M339.6 394.2 L336.6 392.7 M357.8 376.9 L355.9 376.9 L355.9 368.7 M354.0 366.0 L355.9 368.7 M354.4 365.9 L351.1 366.6 L349.0 365.0 L346.6 366.4 L343.6 365.0 L341.9 365.5 L338.4 365.4 L336.4 365.3 M336.6 392.7 L336.4 365.3 M342.5 336.9 L344.5 338.4 L348.4 337.8 L350.5 338.9 L354.3 338.3 L356.7 339.7 M342.1 337.1 L329.3 361.8 M354.0 366.0 L356.7 366.0 L356.7 339.7 M329.3 361.8 L336.4 365.3 M336.6 392.7 L315.4 389.1 M318.6 363.4 L314.8 388.3 M318.6 363.4 L329.3 361.8 M315.4 389.1 L314.8 388.3 M404.0 416.5 L406.8 438.8 M404.0 416.5 L388.0 416.2 M388.0 416.2 L383.1 440.8 M383.1 440.8 L383.1 445.6 L391.4 445.6 M391.4 445.6 L406.8 445.6 L406.8 438.8 M-2.1 588.2 L-12.3 580.9 M-10.2 560.8 L-12.3 580.9 M143.0 606.3 L143.5 587.2 M142.6 607.4 L145.5 606.7 L148.0 609.0 L150.2 608.7 L153.5 610.2 L155.2 610.5 L158.7 611.4 L160.2 612.8 L163.2 613.5 M143.5 587.2 L169.5 587.8 M169.5 587.8 L171.9 608.5 M171.9 608.5 L163.2 613.5 M139.7 580.8 L143.5 587.2 M139.7 580.8 L113.3 580.8 L113.3 582.1 M111.3 584.7 L113.3 582.1 M111.3 584.7 L113.5 603.5 M113.5 603.5 L133.2 612.8 M132.6 612.1 L136.3 612.0 L137.8 609.3 L141.3 608.7 L143.0 606.3 M10.1 628.9 L10.1 619.8 L11.8 619.8 M9.2 610.7 L9.2 619.8 L11.8 619.8 M-8.8 558.8 L8.1 567.0 M8.0 541.9 L9.5 545.1 L10.7 546.4 L13.2 548.8 L13.6 551.1 L16.5 552.6 L16.8 555.7 L18.9 557.4 M18.8 556.7 L17.1 560.2 L14.7 560.9 L12.9 564.0 L9.9 564.4 L8.1 567.0 M-2.1 588.2 L11.9 588.2 L11.9 590.7 M8.1 567.0 L8.1 590.7 L11.9 590.7 M9.2 610.7 L12.0 590.8 M11.9 590.7 L12.0 590.8 M21.5 530.8 L21.5 538.9 L35.1 538.9 M18.9 557.4 L31.5 557.6 M35.1 538.9 L31.5 557.6 M57.9 509.5 L46.4 513.8 M57.9 509.5 L65.2 512.8 M65.2 512.8 L56.6 512.8 L56.6 540.0 M45.1 515.4 L41.7 535.6 M45.1 515.4 L46.4 513.8 M41.7 535.6 L41.7 540.0 L56.6 540.0 M28.6 492.2 L46.4 513.8 M54.5 488.1 L57.9 509.5 M80.2 512.2 L78.2 513.3 L74.8 512.8 L73.3 512.5 L69.9 513.2 L67.9 511.8 L65.2 512.8 M80.4 513.3 L82.9 511.6 M61.8 477.4 L60.6 477.4 M61.8 477.4 L81.9 497.5 M81.9 497.5 L82.9 497.5 L82.9 511.6 M78.7 533.2 L80.3 530.7 L79.1 528.7 L79.6 525.4 L80.0 523.8 L79.1 520.5 L80.6 518.4 L79.2 516.0 L80.4 513.3 M79.5 533.3 L57.0 533.3 L57.0 540.4 M57.0 540.4 L56.6 540.0 M17.2 516.0 L45.1 515.4 M35.1 538.9 L41.7 535.6 M63.6 563.9 L60.9 562.6 L58.8 564.4 L55.5 563.7 L53.8 564.5 L50.4 565.1 L48.5 564.6 L45.6 566.3 L42.9 565.2 L40.9 566.9 L38.0 566.7 M63.6 563.2 L57.0 540.4 M31.5 557.0 L33.9 559.9 L34.5 561.8 L37.2 564.2 L38.0 566.7 M440.2 633.5 L440.2 619.0 L443.6 619.0 M461.6 615.2 L460.2 614.0 M443.0 618.2 L446.8 618.2 L448.6 617.2 L452.5 617.0 L454.3 616.0 L458.0 615.1 L460.2 614.0 M486.0 590.5 L486.0 591.1 L463.4 591.1 M486.0 590.5 L491.2 590.5 L491.2 609.7 M484.7 624.2 L485.7 623.7 M486.2 624.2 L486.1 621.0 L488.5 619.2 L488.1 617.0 L490.0 614.1 L490.8 612.7 L491.2 609.7 M460.2 614.0 L463.4 591.1 M364.6 575.7 L379.1 567.4 M364.6 575.7 L386.8 603.2 M379.1 567.4 L398.3 567.4 L398.3 586.5 M398.3 586.5 L386.8 603.2 M414.8 636.2 L414.8 642.5 L409.4 642.5 M415.1 635.6 L414.5 634.0 L413.2 630.7 L413.8 628.5 L411.7 625.8 L412.6 623.1 L410.5 621.0 L410.1 618.2 M409.4 642.5 L381.9 642.5 L381.9 638.4 M381.9 638.4 L377.3 635.2 M376.4 634.9 L379.0 632.8 L379.0 630.7 L381.1 627.8 L382.0 626.4 L383.0 623.1 L385.0 621.8 L385.0 618.6 L387.6 616.9 L387.4 614.4 L389.2 612.0 M410.1 618.2 L410.1 612.0 L389.2 612.0 M377.3 635.2 L370.6 637.5 M370.6 637.5 L356.4 637.5 L356.4 611.8 M364.2 605.7 L364.2 605.6 L386.5 605.6 M364.2 605.7 L356.4 605.7 L356.4 611.8 M389.2 612.0 L386.5 605.6 M414.8 636.2 L433.5 640.1 M409.4 642.5 L407.3 660.7 M437.4 658.1 L437.4 665.4 L433.4 665.4 M433.4 665.4 L433.4 660.7 L407.3 660.7 M439.2 685.3 L436.4 683.6 M433.4 665.4 L436.4 683.6 M394.0 665.1 L381.9 638.4 M394.0 665.1 L394.0 663.3 L404.5 663.3 M404.5 663.3 L407.3 660.7 M459.5 807.3 L437.0 814.2 M440.6 785.7 L430.1 785.7 L430.1 790.5 M430.1 790.5 L437.0 814.2 M437.0 814.2 L437.0 821.4 L431.9 821.4 M514.0 806.6 L542.7 818.7 M776.8 812.5 L780.3 816.0 M776.8 812.5 L776.8 792.9 L782.7 792.9 M780.3 816.0 L814.7 805.2 M782.7 792.9 L794.0 787.3 M794.0 787.3 L807.7 786.3 M808.6 785.9 L808.2 789.0 L809.9 790.4 L810.7 793.7 L811.0 795.4 L813.1 798.0 L812.5 800.6 L814.7 802.3 L814.7 805.2 M754.2 784.6 L763.3 784.6 L763.3 813.0 M754.2 784.6 L766.4 780.1 M763.3 814.0 L766.0 812.3 L769.0 813.6 L771.1 812.2 L774.6 812.8 L776.8 812.5 M766.4 780.1 L766.4 792.9 L782.7 792.9 M820.5 811.7 L814.7 811.7 L814.7 805.2 M808.7 784.4 L807.7 786.3 M807.5 760.5 L808.7 784.4 M807.5 760.5 L809.8 758.1 M809.8 758.1 L827.6 754.0 M817.1 681.9 L815.5 678.7 L816.0 676.5 L813.8 674.0 L814.6 671.0 L812.6 669.2 L812.7 665.7 L811.7 664.2 L811.4 661.0 M813.1 633.0 L812.6 635.3 L809.6 637.4 L808.8 639.1 L806.3 641.8 L804.8 643.5 M804.8 643.5 L809.1 659.6 M811.4 661.0 L809.1 659.6 M792.4 591.2 L781.3 610.0 M810.6 615.8 L792.6 618.7 M792.6 618.7 L792.6 610.0 L781.3 610.0 M791.9 691.2 L811.2 689.4 M791.9 691.2 L789.3 686.6 M817.1 681.4 L811.2 681.4 L811.2 689.4 M809.1 659.6 L809.1 667.8 L786.6 667.8 M789.3 686.6 L786.6 667.8 M491.1 688.3 L515.5 688.3 L515.5 691.7 M499.9 714.3 L504.7 713.9 M515.5 691.7 L504.7 713.9 M492.5 663.1 L495.7 664.1 L497.8 662.1 L501.3 662.6 L503.5 661.0 M485.7 624.7 L487.7 624.7 L490.8 626.4 L492.3 627.3 L495.8 628.0 L497.1 629.9 L500.4 629.7 L502.2 632.2 L505.0 631.7 L507.5 634.1 L509.5 634.0 L512.3 635.3 M503.5 661.0 L512.3 635.3 M491.2 609.7 L491.2 608.1 L508.6 608.1 M508.6 608.1 L514.7 615.7 M514.7 615.7 L514.7 633.7 L515.3 633.7 M512.3 635.3 L515.3 633.7 M513.9 469.3 L510.2 490.0 M513.9 469.3 L513.9 472.4 L534.9 472.4 M535.4 475.9 L534.9 472.4 M535.4 475.9 L535.4 495.1 L517.4 495.1 M517.4 495.1 L510.2 495.1 L510.2 490.0 M485.9 485.4 L489.6 494.3 M485.9 485.4 L493.4 485.4 L493.4 464.1 M489.6 494.3 L510.2 490.0 M493.4 464.1 L511.7 467.2 M511.7 467.2 L513.9 469.3 M525.0 510.3 L531.9 512.7 M525.9 510.1 L522.9 508.0 L522.9 505.1 L520.1 503.2 L520.2 499.9 L517.9 498.2 L517.4 495.1 M531.9 512.7 L536.1 510.9 M539.9 485.2 L540.0 487.0 L539.3 490.5 L538.5 492.2 L539.0 495.6 L537.2 497.6 L538.2 500.4 L536.3 503.2 L537.1 505.3 L535.9 508.6 L536.1 510.9 M540.5 484.9 L540.5 475.9 L535.4 475.9 M557.1 312.8 L568.2 321.6 M583.1 295.4 L583.9 307.6 M567.5 321.5 L570.1 319.1 L571.9 318.4 L573.6 315.4 L576.2 315.0 L577.2 312.0 L580.4 311.1 L581.1 309.0 L583.9 307.6 M691.6 491.9 L682.3 480.2 M719.2 487.9 L715.2 492.5 M719.2 487.9 L702.8 469.1 M702.8 469.1 L689.8 466.1 M681.4 479.9 L684.2 477.9 L684.2 475.6 L686.6 472.9 L687.2 471.2 L688.9 468.1 L689.8 466.1 M745.5 535.1 L739.0 519.2 M762.0 534.1 L761.7 532.2 L761.9 528.6 L762.5 526.8 L761.9 523.1 L763.0 521.1 L761.6 517.8 L763.1 515.4 L761.5 512.5 L763.1 509.7 L762.8 507.1 M739.0 519.2 L739.0 507.1 L762.8 507.1 M717.7 518.7 L717.7 517.5 L737.1 517.5 M739.0 519.2 L737.1 517.5 M714.5 435.4 L712.8 438.1 M715.2 436.2 L716.6 434.3 L720.1 433.4 L721.6 432.3 L724.8 430.5 L726.6 430.2 L729.2 428.3 M712.8 438.1 L722.0 455.2 M729.2 428.3 L729.2 436.9 L737.9 436.9 M736.7 436.9 L737.5 439.2 L736.0 442.4 L735.8 444.1 L735.4 447.6 L734.3 449.2 L734.7 452.7 L733.0 454.5 L733.9 457.6 L732.6 460.0 M721.6 456.3 L724.8 455.8 L727.2 458.2 L730.4 457.7 L732.6 460.0 M485.9 485.4 L461.7 479.2 M493.4 464.1 L491.7 461.3 M461.7 479.2 L462.2 465.8 M491.7 461.3 L462.2 465.8 M589.0 495.9 L589.0 481.8 L605.3 481.8 M589.0 495.9 L597.2 507.4 M597.2 507.4 L613.1 507.4 L613.1 509.5 M613.1 509.5 L619.3 495.1 M619.3 495.1 L605.3 495.1 L605.3 481.8 M656.2 509.0 L647.2 508.5 M656.2 509.0 L656.2 504.7 L664.2 504.7 M647.2 508.5 L633.0 488.8 M664.2 504.7 L668.2 485.9 M668.2 485.9 L665.1 483.7 M665.1 483.7 L636.3 483.7 L636.3 481.0 M636.3 481.0 L636.3 488.8 L633.0 488.8 M635.8 530.6 L659.8 540.2 M635.8 530.6 L634.5 521.0 M659.8 540.2 L656.2 540.2 L656.2 509.0 M634.5 521.0 L647.2 521.0 L647.2 508.5 M685.2 517.5 L664.2 504.7 M683.8 535.7 L685.2 534.2 M683.8 535.7 L660.3 540.8 M660.3 540.8 L659.8 540.2 M634.5 521.0 L614.8 513.1 M614.8 513.1 L613.1 509.5 M619.3 495.1 L619.3 488.8 L633.0 488.8 M682.3 480.2 L668.2 485.9 M540.5 484.9 L569.7 489.4 M536.1 510.9 L552.3 512.6 M568.0 497.9 L552.3 512.6 M568.0 497.9 L571.0 490.7 M569.7 489.4 L571.0 490.7 M589.0 495.9 L572.0 490.4 M603.9 470.9 L605.3 481.8 M603.9 470.9 L587.0 470.1 M571.2 489.9 L574.1 488.4 L574.3 486.4 L576.7 483.8 L577.8 482.7 L578.8 479.5 L581.4 478.5 L581.5 475.7 L584.3 473.9 L584.8 472.3 L587.0 470.1 M597.2 507.4 L583.9 525.0 M568.0 497.9 L583.9 525.0 M572.0 490.4 L571.0 490.7 M611.6 295.6 L614.2 309.6 M611.6 295.6 L620.6 284.7 M614.2 309.6 L641.3 309.6 L641.3 310.5 M641.3 310.5 L641.3 281.4 L635.5 281.4 M621.2 285.0 L622.7 284.6 L625.9 283.1 L628.1 283.8 L630.4 281.7 L633.4 282.5 L635.5 281.4 M586.6 262.3 L607.8 256.8 M611.3 295.1 L609.8 294.3 L606.3 294.1 L604.7 292.1 L601.8 292.8 L599.4 290.5 L597.4 290.8 L594.2 289.4 L592.0 289.1 M620.0 284.8 L620.4 282.0 L618.1 280.5 L617.9 277.1 L616.5 275.9 L615.2 272.6 L614.9 270.9 L612.5 268.5 L612.9 265.8 L610.5 264.2 L610.5 260.9 L608.9 259.6 L607.8 256.8 M614.6 235.3 L617.0 239.5 M616.4 239.0 L616.6 242.2 L614.2 244.0 L614.5 246.3 L612.6 249.2 L612.3 251.3 M607.8 256.8 L612.3 251.3 M691.7 313.3 L689.9 311.3 M689.9 311.3 L689.9 286.2 L687.7 286.2 M716.4 283.2 L713.8 280.3 M713.8 280.3 L688.1 280.3 L688.1 285.6 M687.7 286.2 L688.1 285.6 M531.3 364.9 L527.8 366.4 L525.9 366.9 L522.6 368.7 L520.3 369.3 M530.7 364.7 L547.1 386.5 M547.1 386.5 L515.7 386.5 L515.7 387.3 M520.3 369.3 L520.3 387.3 L515.7 387.3 M591.4 444.0 L594.2 445.7 L596.1 445.1 L599.5 445.7 L601.1 446.4 L604.4 445.8 L606.6 447.1 M591.4 445.0 L581.3 445.0 L581.3 459.5 M603.9 470.9 L610.7 462.4 M586.7 470.8 L585.4 467.0 L584.2 465.3 L583.1 461.4 L581.3 459.5 M607.4 446.8 L606.6 450.0 L608.3 451.7 L608.3 455.3 L609.0 456.9 L610.3 460.2 L610.7 462.4 M635.3 481.3 L636.5 477.9 L634.9 475.8 L635.6 472.2 L634.2 470.3 L633.7 467.2 M610.7 462.4 L633.7 467.2 M690.1 443.0 L712.8 443.0 L712.8 438.1 M690.1 443.0 L690.1 418.1 L682.9 418.1 M683.8 418.8 L684.5 416.0 L687.6 414.3 L688.2 411.7 L691.0 410.0 M714.5 435.4 L704.0 406.1 M691.0 410.0 L704.0 406.1 M810.2 466.9 L810.2 455.1 L785.9 455.1 M809.4 466.5 L810.4 469.9 L808.4 472.2 L809.5 475.0 L807.7 477.9 L808.4 480.2 L806.9 483.1 M781.6 464.0 L793.0 464.0 L793.0 485.5 M781.6 464.0 L785.9 455.1 M793.0 485.5 L806.9 483.1 M815.1 490.9 L809.5 508.8 M787.2 532.6 L787.2 528.9 L787.9 527.1 L787.4 523.5 L788.8 521.5 L788.0 518.1 L788.8 515.6 M820.7 534.6 L821.0 532.3 L818.4 530.4 L818.6 527.2 L816.8 525.9 L815.9 522.5 L815.3 520.9 L813.1 518.2 L813.5 515.7 L811.0 513.9 L811.2 510.7 L809.3 509.0 M788.1 515.1 L791.7 514.2 L793.4 514.0 L796.6 512.2 L798.9 512.8 L801.6 510.7 L804.4 511.5 L806.5 509.3 L809.3 509.0 M809.3 509.0 L809.5 508.8 M161.1 378.5 L157.4 370.5 M160.9 377.7 L164.3 378.8 L166.0 379.4 L169.6 379.4 L171.4 380.9 L174.7 380.1 L177.0 382.3 L179.6 381.4 L182.4 382.6 M157.4 370.5 L169.6 356.4 M169.6 356.4 L185.6 370.1 M182.4 382.6 L185.6 370.1 M135.8 367.2 L135.8 370.6 L133.1 372.5 L133.2 375.6 L130.2 377.6 L130.0 380.2 L127.6 382.5 M127.6 382.5 L133.9 393.5 M142.6 364.4 L157.4 370.5 M160.3 380.5 L161.1 378.5 M189.9 393.7 L182.4 382.6 M169.8 338.8 L172.9 340.5 M173.8 340.7 L171.7 343.3 L172.4 345.5 L170.8 348.8 L170.6 350.6 L170.2 354.2 L169.6 356.4 M199.0 357.7 L199.0 338.8 L181.9 338.8 M199.0 357.7 L185.6 370.1 M181.9 338.8 L172.9 340.5 M207.2 386.4 L207.2 360.1 L213.8 360.1 M213.8 360.1 L199.0 357.7 M54.6 39.5 L57.8 34.2 M54.6 39.5 L73.9 39.5 L73.9 61.7 M57.4 34.5 L60.9 33.6 L63.0 34.8 L66.0 33.4 L68.7 35.1 L71.0 33.7 L74.3 35.1 L76.2 34.4 L79.3 35.1 M79.3 35.1 L80.0 60.6 M73.9 61.7 L79.0 61.7 M80.0 60.6 L79.0 61.7 M53.8 20.0 L57.8 34.2 M45.7 45.6 L30.5 30.8 M45.7 45.6 L45.7 39.5 L54.6 39.5 M82.6 31.4 L79.3 35.1 M82.6 31.4 L78.3 10.3 M73.6 8.3 L78.3 10.3 M112.4 40.9 L107.7 40.9 L107.7 32.4 M112.4 40.9 L112.4 55.4 L109.2 55.4 M107.7 32.4 L82.6 31.4 M109.2 55.4 L80.0 60.6 M637.4 142.3 L655.7 142.3 L655.7 131.1 M637.4 142.3 L637.0 142.3 L637.0 113.8 M637.0 113.8 L638.5 112.7 M638.5 112.7 L655.5 119.6 M656.7 131.2 L654.8 128.1 L656.1 125.3 L654.3 122.5 L655.5 119.6 M433.8 -13.5 L432.9 -13.2 M421.9 -18.4 L432.9 -13.2 M390.0 -14.0 L390.7 -12.6 M390.7 -12.6 L408.3 -11.3 M421.9 -18.4 L421.9 -11.3 L408.3 -11.3 M393.7 39.9 L362.3 40.0 M393.4 39.4 L393.3 42.8 L391.0 44.3 L391.4 47.1 L389.2 49.6 L388.8 51.3 L387.9 54.6 L386.0 56.0 L385.8 58.9 M362.3 40.0 L358.9 44.1 M385.8 58.9 L364.4 61.0 M364.4 61.0 L363.7 59.8 M358.7 44.7 L359.3 46.4 L360.5 49.8 L360.4 51.8 L362.4 54.8 L361.9 57.2 L363.7 59.8 M570.2 -18.0 L589.2 -18.0 L589.2 -15.7 M593.2 -19.4 L589.2 -15.7 M561.1 -5.2 L562.9 -5.2 L562.9 5.8 M562.9 5.8 L562.9 7.9 L591.5 7.9 M589.2 -15.7 L591.5 7.9 M491.7 113.1 L491.7 103.4 L481.9 103.4 M479.7 139.3 L473.6 137.7 M469.0 134.6 L469.2 132.4 L466.7 129.8 L467.1 127.0 L464.4 125.1 L464.6 121.9 L462.9 119.8 M481.9 103.4 L462.9 103.4 L462.9 119.8 M491.5 87.5 L479.7 87.5 L479.7 95.3 M491.0 88.1 L494.4 87.6 L496.5 89.8 L499.3 88.9 L502.0 91.0 L504.2 90.6 L507.5 92.1 L509.2 92.5 L512.1 93.7 M514.2 100.7 L514.2 97.9 M514.2 97.9 L512.1 93.7 M481.9 103.4 L479.7 95.3 M337.8 211.4 L338.2 191.4 M337.8 211.4 L362.1 210.1 M367.0 195.3 L367.0 210.1 L362.1 210.1 M367.0 195.3 L357.6 181.7 M357.7 181.2 L355.3 183.8 L352.7 183.7 L350.8 186.4 L347.7 186.3 L346.2 188.7 L342.7 189.0 L341.3 190.6 L338.2 191.4 M366.1 145.3 L357.8 164.6 M329.9 138.4 L329.9 131.5 L340.5 131.5 M329.9 138.4 L341.4 160.9 M341.7 160.7 L343.6 162.5 L347.1 161.8 L349.2 163.7 L352.4 162.7 L355.0 164.6 L357.8 164.6 M357.6 181.7 L359.1 181.7 L359.1 167.2 M342.2 161.5 L338.6 162.6 L337.4 164.6 L333.8 166.0 L332.4 168.2 M359.1 167.2 L357.8 164.6 M338.2 191.4 L338.2 182.6 L327.8 182.6 M332.2 168.6 L330.7 170.0 L331.3 173.2 L329.1 175.3 L329.6 177.5 L328.3 180.6 L327.8 182.6 M386.6 143.9 L389.7 145.6 L390.0 148.9 L392.8 150.6 L393.2 153.8 M359.1 167.2 L379.3 170.3 M392.9 154.2 L390.8 155.0 L389.9 158.3 L387.1 159.3 L386.6 162.2 L383.6 163.8 L383.3 166.2 L380.5 168.4 L379.3 170.3 M393.0 191.1 L393.0 195.3 L367.0 195.3 M393.0 191.1 L393.4 190.7 M379.3 170.3 L393.4 190.7 M317.5 -2.3 L318.5 -4.2 L321.7 -5.8 L323.1 -6.8 L325.6 -9.3 L327.8 -9.6 L329.5 -12.5 L332.5 -12.8 L333.5 -15.5 L336.1 -16.7 M316.7 -2.9 L315.7 -0.5 M263.7 -14.8 L282.1 -8.3 M263.3 -15.3 L263.8 -12.1 L261.6 -10.1 L262.4 -7.8 L260.9 -4.7 L260.5 -3.2 L260.4 0.2 L258.7 1.8 L259.6 4.7 L258.6 7.1 M270.3 17.7 L286.8 17.7 L286.8 2.0 M286.8 2.0 L282.1 -8.3 M263.4 -15.2 L263.7 -14.8 M361.6 -19.2 L360.7 9.4 M361.1 -20.3 L359.5 -18.3 L356.1 -18.0 L354.6 -17.2 L351.5 -15.6 L349.4 -15.9 L347.2 -13.6 L344.2 -14.1 L342.3 -12.2 M342.3 -12.2 L341.5 9.8 M361.0 8.8 L357.7 10.3 L355.4 9.1 L352.4 10.8 L349.7 9.2 L347.2 10.8 L343.9 9.5 L341.5 9.8 M336.1 -16.7 L342.3 -12.2 M359.7 86.8 L359.7 113.6 L355.0 113.6 M359.7 86.8 L359.7 85.7 L345.8 85.7 M347.0 116.9 L344.8 116.6 L342.4 114.2 L341.2 113.1 L338.0 112.0 L337.1 109.6 L334.2 109.4 L332.4 107.3 M345.8 85.7 L345.8 107.3 L332.4 107.3 M243.3 -14.7 L243.3 -2.9 L233.8 -2.9 M216.6 -13.6 L216.6 -2.9 L233.8 -2.9 M235.5 17.8 L232.7 15.4 M234.6 -3.3 L233.9 0.2 L233.7 1.9 L234.2 5.3 L232.9 7.3 L234.2 10.2 L232.5 12.9 L232.7 15.4 M259.4 89.7 L235.1 84.1 M259.4 89.7 L259.4 83.5 L266.6 83.5 M238.1 67.4 L235.1 67.4 L235.1 84.1 M238.2 66.6 L240.7 68.1 L242.7 66.6 L246.0 67.5 L247.6 67.2 L250.9 66.4 L253.0 67.6 L255.5 66.0 L258.1 67.1 M258.1 67.1 L266.6 83.5 M286.7 109.6 L262.3 109.6 L262.3 111.2 M286.7 109.6 L286.9 84.8 M258.3 89.7 L260.3 92.2 L259.4 95.4 L261.0 97.3 L260.7 100.9 L261.5 102.6 L262.1 106.2 L261.8 108.1 L262.3 111.2 M266.6 83.5 L286.9 84.8 M809.4 43.3 L801.5 58.3 M809.1 42.9 L808.2 41.3 L804.9 40.6 L803.8 37.9 L801.3 37.8 L799.1 35.2 L797.7 34.4 L794.5 33.0 L793.6 30.9 L790.5 30.6 L789.0 27.9 L786.8 27.1 M801.5 58.3 L790.2 58.3 L790.2 62.7 M790.2 62.7 L781.0 40.9 M781.0 40.9 L786.8 27.1 M818.4 14.1 L786.6 15.0 M819.3 37.9 L816.9 38.1 L814.3 41.0 L812.0 41.3 L809.4 43.3 M786.8 26.6 L787.1 24.5 L787.0 20.6 L786.6 18.5 L786.6 15.0 M765.9 -19.3 L790.2 -15.5 M765.1 -19.7 L764.0 -17.7 L760.7 -15.7 L759.7 -13.8 L756.6 -11.5 L754.7 -10.0 M754.7 -10.0 L771.0 -10.0 L771.0 11.9 M791.0 -15.8 L789.9 -12.4 L789.6 -10.7 L789.5 -7.1 L788.0 -5.4 L788.7 -2.1 L786.6 -0.0 L787.6 2.9 L785.5 5.5 L786.3 7.7 L784.8 11.0 L785.0 13.3 M784.6 13.3 L782.6 12.2 L779.1 13.1 L776.9 11.7 L773.6 13.1 L771.0 11.9 M792.2 -17.6 L790.2 -15.5 M748.1 -10.7 L754.7 -10.0 M748.1 -10.7 L740.9 -10.7 L740.9 -6.0 M740.9 -6.0 L741.5 15.4 M741.5 15.4 L745.2 20.3 M745.2 20.3 L758.5 20.3 L758.5 21.3 M758.5 21.3 L771.0 11.9 M786.6 15.0 L785.0 13.3 M780.5 40.2 L778.9 41.0 L775.4 41.4 L773.6 40.9 L770.7 42.6 L768.1 41.4 L766.0 43.1 L762.6 42.4 L760.6 43.3 M760.6 43.3 L758.5 21.3 M686.3 36.4 L709.8 41.0 M686.7 35.9 L686.6 39.5 L685.3 41.2 L686.4 44.4 L684.5 46.7 L685.7 49.1 L684.1 52.1 L684.5 54.0 L683.6 56.9 M683.6 56.9 L685.7 59.5 M685.7 59.5 L685.7 62.2 L711.8 62.2 M712.1 62.6 L710.8 59.4 L712.0 56.9 L710.1 54.5 L711.1 51.3 L710.0 49.5 L710.0 45.9 L709.8 44.2 L709.8 41.0 M712.6 62.7 L712.6 81.5 L712.0 81.5 M712.6 62.7 L711.8 62.2 M712.0 81.5 L710.2 83.4 M687.8 88.3 L710.2 88.3 L710.2 83.4 M687.8 88.3 L684.9 84.4 M684.9 84.4 L684.9 59.5 L685.7 59.5 M566.7 43.7 L574.6 41.4 M566.7 43.7 L543.9 33.8 M574.6 41.4 L575.1 33.0 M575.1 33.0 L558.6 14.1 M543.9 33.8 L548.0 18.3 M548.0 18.3 L558.6 14.1 M580.4 47.0 L574.6 41.4 M580.7 48.1 L582.5 46.6 L586.0 46.7 L587.7 46.7 L590.8 45.3 L593.1 46.4 L595.5 44.5 L598.6 45.5 L600.3 44.3 L603.8 44.1 L605.5 44.3 L608.3 43.3 M608.3 43.3 L611.4 36.9 M611.4 36.9 L611.4 13.6 L597.8 13.6 M595.3 12.8 L597.8 13.6 M595.3 12.8 L575.1 33.0 M562.9 5.8 L562.9 14.1 L558.6 14.1 M591.5 7.9 L595.3 12.8 M538.4 12.1 L548.0 12.1 L548.0 18.3 M748.8 286.5 L746.2 284.8 L746.1 281.6 L744.3 280.4 L743.0 277.2 L742.5 275.5 L740.0 273.1 L740.2 270.6 L737.5 269.0 L737.5 265.8 L735.5 264.6 L734.4 261.3 L733.6 259.9 L731.8 257.4 M747.9 286.8 L752.9 287.5 M755.0 286.4 L755.0 258.9 L760.2 258.9 M755.0 286.4 L752.9 287.5 M760.2 258.9 L760.2 255.6 L733.0 255.6 M733.0 255.6 L731.8 257.4 M713.8 280.3 L713.8 263.9 L718.8 263.9 M744.6 288.2 L747.9 286.8 M718.8 263.9 L731.8 257.4 M755.5 310.2 L755.5 287.5 L752.9 287.5 M779.9 287.8 L755.0 286.4 M765.5 254.8 L786.4 274.3 M765.5 254.8 L760.2 258.9 M638.7 268.3 L639.6 270.8 M639.6 268.6 L638.3 265.6 L640.0 263.0 L638.6 260.6 L640.0 257.4 L639.2 255.5 L639.8 251.9 L640.0 250.2 L639.7 246.6 L640.9 244.8 L639.9 241.5 L641.1 239.1 M639.6 270.8 L662.1 259.9 M641.1 239.1 L641.3 239.0 M640.9 240.0 L644.0 239.1 L646.5 241.2 L648.9 240.4 L652.1 242.0 L653.9 242.0 L657.5 242.5 L659.6 243.5 M659.6 243.5 L663.6 257.1 M663.6 257.1 L662.1 259.9 M635.5 281.4 L637.9 279.8 M637.9 279.8 L639.6 270.8 M612.7 250.5 L614.4 253.3 L616.7 253.5 L619.1 256.1 L620.6 256.8 L623.9 258.3 L624.9 260.3 L628.1 260.8 L629.4 263.5 L632.2 263.6 L634.1 266.4 L636.1 266.8 L638.7 268.3 M617.5 239.9 L619.2 240.1 L622.7 239.2 L624.8 240.2 L627.9 238.7 L630.4 240.1 L632.9 238.3 L636.0 239.6 L638.0 238.4 L641.1 239.1 M659.0 288.0 L664.7 285.0 M658.7 287.8 L657.3 286.2 L654.1 286.5 L652.3 284.2 L649.8 284.7 L647.0 282.9 L645.5 282.4 L642.1 281.7 L640.7 280.0 L637.9 279.8 M664.7 285.0 L662.1 259.9 M816.6 229.6 L818.3 214.5 M813.8 231.0 L797.2 228.9 M818.3 214.5 L812.9 204.4 M813.0 203.8 L810.6 206.5 L807.9 206.3 L806.1 209.1 L802.9 209.0 L801.4 211.3 L797.9 211.7 L796.5 213.3 L793.0 214.4 L791.0 215.3 M791.0 215.3 L791.0 228.9 L797.2 228.9 M765.5 254.8 L768.8 254.8 L768.8 243.0 M800.3 261.4 L800.3 258.3 L797.8 257.2 L796.9 253.8 L795.6 252.6 L793.6 249.6 L793.3 247.7 L790.5 245.6 L789.6 243.4 M768.7 244.1 L771.2 242.6 L774.3 244.0 L776.1 243.1 L779.6 243.5 L781.3 243.8 L784.7 242.9 L786.8 244.2 L789.6 243.4 M790.5 244.0 L790.3 240.8 L792.9 238.7 L792.6 236.0 L795.1 233.5 L795.3 231.5 L797.2 228.9 M816.2 111.0 L809.6 117.6 M816.2 111.0 L808.2 88.5 M809.6 117.6 L809.6 115.4 L791.5 115.4 M808.2 88.5 L791.4 88.4 M791.4 88.4 L791.4 109.8 L789.3 109.8 M791.5 115.4 L789.3 109.8 M819.9 84.1 L819.9 68.0 L821.5 68.0 M807.5 87.8 L810.9 87.2 L812.4 86.8 L815.2 84.9 L817.5 85.4 L819.9 84.1 M788.6 84.6 L791.4 88.4 M788.6 84.6 L787.5 84.6 L787.5 67.4 M800.9 58.6 L804.6 58.9 L806.2 61.1 L809.6 60.9 L811.4 63.6 L814.3 63.3 L816.6 66.0 L818.9 66.2 L821.5 68.0 M787.5 67.4 L790.2 62.7 M80.0 533.4 L79.9 536.1 L82.4 537.5 L82.6 540.9 L84.6 542.0 L85.7 545.4 L86.5 546.9 L88.5 549.3 M82.9 511.6 L110.7 513.9 M110.7 513.9 L111.6 534.3 M110.9 533.8 L109.8 535.3 L107.1 537.4 L105.2 537.6 L103.5 540.4 L100.6 540.6 L99.6 542.8 L96.4 543.9 L95.2 545.0 L92.8 547.4 L90.4 547.5 L88.5 549.3 M111.3 584.7 L91.4 584.8 M112.4 582.6 L113.0 578.9 L112.5 577.0 L112.6 573.3 L112.7 571.4 L111.9 568.2 M91.4 584.8 L88.4 583.0 M88.4 583.0 L77.4 562.5 M77.4 562.5 L77.4 553.2 L87.4 553.2 M111.6 567.9 L110.5 566.2 L107.2 565.7 L105.7 563.0 L103.1 563.1 L100.9 560.4 L99.1 560.0 L96.0 558.3 L94.9 556.7 L91.5 556.0 L90.3 553.6 L87.4 553.2 M77.4 562.5 L77.4 563.4 L64.1 563.4 M64.1 563.4 L63.6 563.2 M88.5 549.3 L87.4 553.2 M148.3 561.5 L146.1 564.2 L146.0 566.0 L144.6 569.2 L143.5 570.7 L143.2 574.1 L141.1 575.7 L141.6 578.6 L139.7 580.8 M147.3 561.4 L142.8 556.1 M111.9 568.2 L117.0 568.2 L117.0 560.5 M142.8 556.1 L117.0 560.5 M111.6 534.3 L113.8 536.6 M117.0 560.5 L113.8 536.6 M147.3 561.4 L151.1 561.3 M169.5 587.8 L171.0 585.3 M150.7 562.1 L152.3 563.0 L154.6 565.7 L155.2 567.5 L158.1 569.2 L158.4 571.9 L161.3 572.9 L162.1 576.1 L164.1 576.9 L166.0 579.9 L166.9 581.3 L169.7 583.4 L171.0 585.3 M311.1 654.6 L312.9 654.6 L312.9 678.7 M311.1 654.6 L333.5 663.0 M312.9 678.7 L333.0 682.4 M333.5 663.0 L333.0 682.4 M315.7 643.0 L313.7 640.0 L314.1 637.6 L311.8 634.9 L312.7 632.1 L310.5 629.7 L310.6 626.8 M315.3 642.7 L310.6 653.8 M310.0 626.4 L308.6 627.5 L305.3 628.9 L303.4 629.0 L300.7 631.3 L298.0 630.9 L296.2 633.4 L292.9 633.2 L291.5 635.1 L288.0 635.8 L286.5 636.6 L283.4 638.5 L281.3 639.2 M310.6 653.8 L285.8 656.0 M285.8 656.0 L281.3 639.2 M279.2 637.2 L281.3 639.2 M280.3 637.4 L279.5 634.8 L281.5 632.0 L281.2 630.0 L282.3 626.6 L283.1 625.1 L283.0 621.6 L285.0 619.8 L284.1 616.9 L286.3 614.4 L286.1 611.9 M314.0 613.8 L313.5 615.5 L312.7 619.2 L311.6 620.8 L311.5 624.5 L310.6 626.8 M314.4 613.4 L313.3 611.9 M286.1 611.9 L286.7 611.2 M313.3 611.9 L286.7 611.2 M319.8 487.6 L318.1 490.5 L318.3 492.2 L317.9 495.7 L316.8 497.3 L317.6 500.4 L315.7 502.8 L316.5 505.0 L315.2 508.2 L314.7 510.2 M318.8 487.6 L335.0 487.6 L335.0 485.7 M334.2 486.4 L335.9 487.7 L336.6 491.2 L337.1 492.7 L339.1 495.6 L338.6 498.0 L341.0 499.8 L340.9 503.1 L342.3 504.5 L343.4 507.8 L343.6 509.6 L345.8 512.2 L346.3 514.5 M314.7 510.2 L333.7 517.8 M346.4 515.3 L343.4 514.5 L341.7 516.2 L338.2 516.3 L336.7 516.9 L333.7 517.8 M343.2 593.6 L343.2 581.4 L326.3 581.4 M343.2 593.6 L356.6 583.8 M326.3 581.4 L345.1 581.4 L345.1 566.0 M344.5 566.2 L348.2 566.6 L349.6 568.7 L353.0 568.7 L354.7 571.4 L357.3 572.2 M356.6 583.8 L360.6 583.8 L360.6 575.8 M360.6 575.8 L357.3 572.2 M340.3 611.7 L336.0 615.2 M339.3 611.9 L340.7 608.7 L340.7 607.0 L341.0 603.4 L342.2 601.8 L341.4 598.5 L343.4 596.3 L343.2 593.6 M314.4 613.4 L336.0 613.4 L336.0 615.2 M311.1 586.3 L313.3 611.9 M311.1 586.3 L315.0 581.9 M315.0 581.9 L326.3 581.4 M340.3 611.7 L356.4 611.7 L356.4 611.8 M364.2 605.7 L356.6 605.7 L356.6 583.8 M364.6 575.7 L360.6 575.8 M386.5 605.6 L386.8 603.2 M364.8 539.3 L357.3 539.3 L357.3 572.2 M364.8 539.3 L387.1 539.3 L387.1 551.6 M387.1 551.6 L379.1 567.4 M315.0 581.9 L314.1 558.5 M344.4 566.3 L344.8 562.9 L342.0 560.8 L341.8 557.7 L338.7 555.8 L338.4 552.7 M314.1 558.5 L338.4 552.7 M313.3 511.1 L314.7 510.2 M312.1 511.2 L313.8 513.6 L312.6 516.8 L313.7 518.7 L313.3 522.3 L313.4 524.0 L314.1 527.6 L313.2 529.6 L314.7 532.7 L313.2 535.3 L313.7 537.9 M334.6 517.5 L333.3 520.8 L333.5 522.6 L333.3 526.2 L332.2 527.9 L333.0 531.2 L331.2 533.3 L331.6 536.1 M313.7 537.9 L331.6 537.9 L331.6 536.1 M364.8 539.3 L361.3 535.2 M361.3 535.2 L339.8 548.2 M338.4 552.7 L339.8 548.2 M220.8 584.3 L218.0 586.1 L218.2 589.2 L215.6 591.4 L216.0 594.4 L213.7 597.1 L213.2 599.6 M220.1 583.9 L198.0 564.5 M198.0 564.5 L198.0 565.6 L188.7 565.6 M185.9 574.4 L188.7 565.6 M185.9 574.4 L187.0 576.5 M187.5 576.4 L188.1 578.9 L191.3 579.7 L192.4 582.8 L195.0 583.2 L196.8 586.2 L198.6 587.0 L201.3 589.4 L202.4 590.9 L205.7 592.4 L206.5 594.6 L209.9 595.4 L210.9 598.3 L213.2 599.6 M221.6 738.2 L221.6 739.8 L230.7 739.8 M221.6 738.2 L199.6 762.2 M230.7 739.8 L236.7 748.1 M229.2 762.5 L236.4 751.4 M229.2 762.5 L229.2 773.8 L213.5 773.8 M236.4 751.4 L236.7 748.1 M214.0 773.8 L210.9 772.6 L210.0 769.8 L207.4 769.4 L205.6 766.5 L204.0 765.8 L201.1 763.8 L199.6 762.2 M240.7 711.3 L240.7 739.8 L230.7 739.8 M240.7 711.3 L240.7 712.8 L214.7 712.8 M215.7 733.9 L216.6 731.9 L215.1 728.8 L216.5 726.2 L214.7 723.7 L215.9 720.6 L214.4 718.6 L215.1 715.0 L214.7 712.8 M215.7 734.4 L221.6 738.2 M215.7 734.4 L198.1 734.4 L198.1 732.3 M198.1 732.3 L194.5 738.1 M192.3 759.5 L191.5 757.2 L192.7 753.8 L192.6 752.0 L193.0 748.4 L193.6 746.6 L193.1 743.0 L194.7 741.0 L194.5 738.1 M191.2 759.6 L199.6 762.2 M215.3 784.9 L213.5 782.5 L214.5 779.1 L213.0 777.0 L213.5 773.8 M214.1 786.1 L216.7 784.4 L219.7 785.8 L221.7 784.4 L225.2 785.0 L226.9 784.7 L230.5 784.1 L232.4 784.9 L235.5 783.4 L238.0 784.8 L240.6 784.2 M240.6 784.2 L242.7 782.8 M242.7 782.8 L229.2 762.5 M188.0 514.5 L185.8 535.8 M185.8 535.8 L210.8 537.8 M194.8 510.7 L196.7 510.1 L200.4 510.1 L202.2 509.6 L206.0 508.9 L207.9 509.0 L211.4 507.7 L213.9 508.3 M212.8 508.4 L213.9 510.7 L212.5 513.9 L213.2 515.9 L212.6 519.5 L212.3 521.2 L212.7 524.8 L211.5 526.8 L212.7 530.0 L210.9 532.4 L212.2 535.1 L210.8 537.8 M363.1 457.2 L364.8 454.1 L364.0 452.0 L365.0 448.6 L365.0 446.8 L364.9 443.1 L365.1 440.9 M342.6 464.3 L342.6 458.3 L337.2 458.3 M365.1 440.9 L361.4 436.7 M361.7 437.6 L358.4 436.8 L356.6 438.2 L353.0 438.0 L351.4 438.7 L347.9 439.7 L345.9 439.2 L343.0 441.1 L340.5 441.2 M337.2 458.3 L337.2 441.2 L340.5 441.2 M264.0 507.3 L260.5 508.3 L258.5 507.8 L255.3 509.4 L252.8 508.2 L250.1 510.0 L247.1 508.7 L244.8 510.3 L241.4 509.4 L239.5 510.6 L236.4 511.0 M263.5 507.1 L260.3 485.7 M236.8 510.6 L237.9 509.0 L237.8 505.5 L239.9 503.8 L239.2 500.6 L241.4 498.4 L240.7 495.8 L242.6 492.9 L242.5 491.0 L243.7 487.5 L244.6 485.9 L245.4 483.0 M260.7 484.9 L257.8 485.8 L255.4 483.8 L253.2 484.6 L250.0 483.4 L248.5 483.0 L245.4 483.0 M318.8 487.6 L311.7 478.7 M343.7 480.3 L343.7 485.7 L335.0 485.7 M337.2 458.3 L313.6 458.3 L313.6 461.5 M313.6 461.5 L309.7 466.9 M312.8 478.5 L310.4 475.9 L311.2 472.7 L309.1 470.1 L309.7 466.9 M259.3 455.8 L257.6 456.9 L254.1 457.0 L252.3 456.7 L249.3 458.2 L246.8 457.0 L244.6 458.8 L241.8 458.7 M259.7 456.6 L264.7 438.6 M233.2 438.2 L233.2 441.8 L234.9 443.3 L235.7 446.9 L236.6 448.4 L238.2 451.8 L238.6 453.6 L240.9 456.5 L241.8 458.7 M232.4 438.8 L234.4 434.8 M234.5 435.9 L236.6 434.9 L239.8 436.1 L241.5 436.2 L244.9 436.1 L246.7 437.4 L249.6 436.3 L252.1 438.1 L254.3 437.1 L257.5 438.3 L259.1 438.4 L262.5 438.0 L264.7 438.6 M221.1 410.2 L237.3 410.2 L237.3 418.9 M212.0 441.1 L213.1 442.2 M232.4 438.8 L213.1 442.2 M233.9 434.5 L235.9 432.3 L234.9 429.6 L236.9 426.7 L236.2 424.6 L237.6 421.2 L237.3 418.9 M218.3 393.6 L236.4 385.2 M243.8 389.5 L236.4 385.2 M243.8 389.5 L237.9 418.4 M237.9 418.4 L237.3 418.9 M82.2 808.6 L78.7 794.1 M82.2 808.6 L109.5 808.6 L109.5 813.3 M109.5 813.3 L105.0 789.1 M105.4 789.4 L102.0 789.3 L100.3 787.7 L97.3 788.6 L94.9 786.6 L92.6 787.5 L89.5 786.1 L87.9 785.9 L84.9 785.2 M84.9 785.2 L78.7 794.1 M53.8 739.4 L57.0 740.7 L57.8 743.2 L60.8 743.7 L62.2 746.7 L64.3 747.8 M35.2 763.8 L62.5 765.2 M64.3 747.8 L64.3 764.8 L63.1 764.8 M62.5 765.2 L63.1 764.8 M48.4 791.8 L33.1 817.0 M48.4 791.8 L54.1 791.7 M54.1 791.7 L57.3 793.8 M57.3 794.3 L56.7 796.3 L58.1 799.6 L57.1 801.9 L59.0 804.9 L57.8 807.7 L59.7 810.1 L58.6 813.4 L59.9 815.4 L59.3 818.6 M59.3 818.6 L59.3 822.1 L38.0 822.1 M33.1 817.0 L38.0 822.1 M18.0 812.5 L18.0 817.0 L33.1 817.0 M36.5 783.5 L48.4 783.5 L48.4 791.8 M62.5 765.2 L54.1 765.2 L54.1 791.7 M82.3 772.2 L82.3 764.8 L63.1 764.8 M82.3 772.2 L84.9 785.2 M78.7 794.1 L57.3 793.8 M135.9 760.8 L135.9 744.8 L141.5 744.8 M109.7 757.0 L109.7 757.0 M141.5 744.8 L132.3 739.1 M132.3 739.1 L111.1 743.7 M108.7 757.0 L110.6 754.1 L109.7 752.0 L110.9 748.6 L111.0 746.9 L111.1 743.7 M115.6 779.5 L113.2 780.2 L111.5 783.7 L109.2 784.6 L107.6 788.1 L105.0 789.1 M82.3 772.2 L90.5 763.0 M109.6 756.1 L107.4 758.2 L104.3 757.6 L102.9 759.2 L99.5 759.8 L97.8 759.8 L95.2 761.8 L92.5 761.1 L90.5 763.0 M64.3 747.8 L64.3 741.4 L78.5 741.4 M90.5 763.0 L78.5 741.4 M34.8 265.2 L31.4 288.2 M11.6 279.8 L27.6 279.8 L27.6 289.1 M31.4 288.2 L27.6 289.1 M-9.6 301.2 L11.8 312.6 M27.2 288.5 L26.6 291.7 L24.0 292.9 L23.9 295.6 L21.2 297.7 L20.6 299.3 L18.9 302.4 L17.1 303.4 L16.6 306.6 L13.8 307.9 L13.7 310.3 L11.8 312.6 M10.2 334.4 L14.2 334.4 L14.2 320.2 M14.2 320.2 L11.8 312.6 M65.4 181.2 L70.7 193.3 M65.4 181.2 L65.4 195.8 L38.3 195.8 M70.7 193.3 L55.1 193.3 L55.1 209.7 M38.3 195.8 L38.9 203.4 M55.1 209.7 L38.9 203.4 M10.8 217.8 L-2.8 220.4 M10.8 217.8 L16.1 213.6 M16.6 213.8 L14.3 211.4 L14.7 208.7 L12.3 207.2 L12.2 203.9 L10.7 202.7 L9.5 199.4 L9.3 197.7 L7.0 195.4 L7.4 192.6 L5.1 191.2 L4.3 188.5 M-3.6 221.0 L-3.9 217.7 L-5.7 216.5 L-7.0 213.2 L-7.7 211.6 L-9.9 208.8 L-9.9 206.6 L-12.0 204.4 M-12.0 204.4 L-7.4 191.5 M-7.4 191.5 L4.3 188.5 M14.1 244.6 L10.8 244.6 L10.8 217.8 M-10.5 232.0 L-10.5 220.4 L-2.8 220.4 M33.1 239.6 L35.8 236.3 M35.8 236.3 L28.6 214.2 M28.6 214.2 L28.6 213.6 L16.1 213.6 M37.5 194.6 L38.3 195.8 M37.5 194.6 L11.6 179.8 M11.6 179.8 L4.3 188.5 M38.9 203.4 L28.6 203.4 L28.6 214.2 M-7.4 191.5 L-7.4 191.5 M10.9 170.4 L12.3 173.5 M12.3 173.5 L11.6 179.8 M166.2 536.3 L169.5 535.4 L171.8 536.8 L174.5 535.2 L177.3 536.8 L179.5 535.6 L182.9 536.5 L185.1 536.6 M166.6 536.1 L161.6 557.1 M185.1 536.6 L186.6 563.0 M162.0 556.9 L163.7 558.6 L166.7 557.8 L169.0 559.9 L171.3 559.2 L174.5 560.6 L176.1 561.0 L179.5 561.0 L181.2 562.7 L184.3 561.9 L186.6 563.0 M151.1 561.3 L161.6 557.1 M171.7 586.2 L172.7 583.6 L176.0 582.6 L177.0 580.9 L180.0 578.9 L181.6 578.2 L183.7 575.4 L185.9 574.4 M188.7 565.6 L186.6 563.0 M191.7 475.2 L214.3 496.1 M191.7 475.2 L190.8 466.4 M190.8 466.4 L204.8 466.4 L204.8 460.9 M219.4 486.5 L218.3 488.1 L216.6 491.4 L215.3 492.9 L214.3 496.1 M219.7 486.2 L219.7 461.9 L206.4 461.9 M206.4 461.9 L204.8 460.9 M185.5 488.7 L191.7 475.2 M213.9 508.3 L214.3 508.1 M214.4 507.6 L214.7 505.5 L213.9 501.6 L214.3 499.5 L214.3 496.1 M161.0 493.5 L156.6 488.1 M182.9 462.2 L190.8 462.2 L190.8 466.4 M213.1 442.2 L204.8 460.9 M214.3 508.1 L234.4 512.6 M236.4 511.0 L234.4 512.6 M245.8 482.2 L243.8 481.0 L241.8 477.8 L239.8 476.8 L237.9 474.0 M237.9 474.0 L219.7 486.2 M237.9 474.0 L237.7 468.6 M237.7 468.6 L237.7 461.9 L206.4 461.9 M237.7 468.6 L241.8 468.6 L241.8 458.7 M109.4 340.5 L96.5 340.5 L96.5 342.6 M114.7 316.7 L113.1 316.6 L109.7 317.1 L107.8 315.7 L105.0 317.0 L102.3 315.4 L100.4 316.2 L97.0 315.7 L95.4 315.1 L92.1 315.9 L90.0 314.2 L87.5 315.5 L84.9 314.2 M95.8 343.2 L95.1 340.1 L93.0 339.4 L91.2 336.5 L90.2 335.2 L87.5 333.1 L87.1 330.8 L84.2 329.8 L83.4 327.1 M83.7 326.7 L84.5 325.1 L83.7 321.7 L85.4 319.6 L84.2 316.9 L84.9 314.2 M39.3 368.7 L60.0 371.1 M37.0 391.6 L40.5 392.4 L42.3 391.8 L46.0 391.6 L47.9 392.1 L51.3 391.1 L53.5 392.2 L56.5 391.0 M60.0 371.1 L63.5 371.1 L63.5 382.3 M64.0 382.0 L62.0 385.2 L60.2 386.3 L58.7 389.6 L56.5 391.0 M32.1 408.9 L60.3 408.2 M56.5 391.0 L60.3 408.2 M88.8 430.9 L74.4 442.6 M60.5 430.9 L66.3 430.9 L66.3 413.2 M85.6 408.1 L84.0 406.4 M74.4 442.6 L66.9 440.4 M84.4 406.0 L81.5 408.2 L79.1 407.9 L76.8 410.4 L73.7 410.0 L72.0 412.2 L68.5 412.2 L66.3 413.2 M66.3 413.2 L60.3 408.2 M90.1 367.0 L107.4 367.0 L107.4 371.8 M90.1 367.0 L82.4 390.1 M82.4 390.1 L85.5 396.3 M85.5 396.3 L107.5 389.5 M106.6 372.0 L109.9 374.0 L110.1 376.8 L113.1 378.7 L113.6 381.7 M113.6 381.7 L107.5 389.5 M115.5 354.6 L107.4 354.6 L107.4 371.8 M84.3 358.1 L87.2 355.8 L87.9 354.0 L90.5 351.3 L91.7 349.9 L93.6 346.8 L95.3 345.6 L96.5 342.6 M85.3 358.4 L85.3 367.0 L90.1 367.0 M85.3 358.4 L85.3 356.9 L69.6 356.9 M69.6 356.9 L69.6 371.1 L60.0 371.1 M63.5 382.3 L82.4 382.3 L82.4 390.1 M84.2 405.9 L85.4 404.3 L84.4 401.2 L86.3 398.9 L85.5 396.3 M115.1 414.5 L115.6 411.4 L113.8 409.8 L113.5 406.3 L112.8 404.8 L111.3 401.6 L111.6 399.5 L109.4 397.0 L110.1 394.1 L108.0 392.4 L107.5 389.5 M128.0 382.5 L124.3 383.0 L122.4 382.1 L118.9 383.1 L116.6 381.4 L113.6 381.7 M451.8 166.6 L461.8 173.8 M483.3 142.9 L485.8 151.4 M461.4 174.1 L463.4 171.4 L466.0 171.0 L466.7 168.2 L469.9 167.1 L470.8 165.6 L473.1 163.1 L475.2 162.6 L476.3 159.6 L479.3 159.0 L479.9 156.7 L482.9 155.0 L484.0 153.8 L485.8 151.4 M506.9 159.8 L493.0 159.8 M506.9 159.8 L517.2 153.1 M485.1 151.6 L488.4 153.1 L489.0 155.8 L492.1 156.9 L493.0 159.8 M586.0 200.9 L588.9 198.9 L589.3 196.8 L591.9 194.1 L592.9 192.6 L594.6 189.4 L595.9 187.5 M586.9 201.3 L562.6 171.6 M595.9 187.5 L584.8 169.3 M584.8 169.3 L563.9 167.6 M562.6 171.6 L563.9 167.6 M585.9 205.7 L586.9 201.3 M617.5 211.6 L621.2 207.5 M621.2 207.5 L613.3 183.2 M613.0 182.1 L611.1 184.2 L607.7 183.7 L606.2 184.7 L602.9 185.6 L600.9 185.2 L598.3 187.2 L595.9 187.5 M563.5 205.2 L553.9 205.2 L553.9 183.9 M553.9 183.9 L562.6 183.9 L562.6 171.6 M577.9 140.7 L580.8 140.2 L583.4 142.6 L586.0 142.2 L588.9 144.4 L591.1 144.4 L593.8 146.4 M578.3 139.6 L572.6 140.1 M563.9 167.6 L563.9 167.6 M584.9 168.9 L587.3 168.3 L588.9 165.0 L591.6 164.2 L592.6 160.8 L595.3 159.6 M593.8 146.4 L595.3 159.6 M613.8 182.5 L613.3 183.2 M613.8 182.5 L614.4 166.4 M595.3 159.6 L614.4 159.6 L614.4 166.4 M461.8 173.8 L463.6 178.1 M463.6 178.1 L484.5 187.1 M493.0 159.8 L490.9 181.5 M490.9 181.5 L484.5 181.5 L484.5 187.1 M454.7 194.6 L462.1 212.2 M454.7 194.6 L463.6 194.6 L463.6 178.1 M462.1 212.2 L482.8 210.9 M484.5 187.1 L482.8 210.9 M441.4 242.0 L441.4 217.3 L440.4 217.3 M441.4 242.0 L443.2 243.8 M443.2 243.8 L454.9 245.8 M454.9 245.8 L459.0 238.7 M459.0 238.7 L459.3 238.7 L459.3 214.9 M440.4 217.3 L459.3 214.9 M459.1 256.0 L459.3 252.5 L457.1 251.1 L456.5 247.5 L454.9 245.8 M428.6 264.6 L432.4 269.4 M428.6 264.6 L443.2 243.8 M488.8 246.0 L484.8 234.9 M484.8 234.9 L459.0 234.9 L459.0 238.7 M484.8 234.9 L487.2 214.7 M462.1 212.2 L459.3 214.9 M482.8 210.9 L487.2 214.7 M433.3 190.8 L428.9 212.6 M433.3 190.8 L454.7 194.6 M428.9 212.6 L428.9 217.3 L440.4 217.3 M421.7 216.1 L428.9 212.6 M421.7 216.1 L412.2 228.8 M441.4 242.0 L411.5 234.7 M412.2 228.8 L411.5 234.7 M304.0 334.0 L307.2 335.7 L308.5 337.4 L311.9 338.4 L313.5 340.5 M304.2 334.5 L304.2 332.9 L291.5 332.9 M316.2 360.9 L316.2 361.5 L288.0 361.5 M316.2 360.9 L313.5 340.5 M284.3 338.2 L291.5 338.2 L291.5 332.9 M284.3 338.2 L284.3 358.6 L285.9 358.6 M285.9 358.6 L288.0 361.5 M318.6 363.4 L316.2 360.9 M314.8 388.3 L287.6 384.9 M287.6 384.9 L287.6 361.5 L288.0 361.5 M342.1 337.1 L342.1 331.4 L334.7 331.4 M334.7 331.4 L313.5 340.5 M258.7 365.4 L285.9 358.6 M258.7 365.4 L257.6 364.1 M258.7 364.4 L257.9 361.7 L260.0 358.9 L259.9 357.1 L260.9 353.7 L261.7 352.1 L261.7 348.6 L263.7 346.9 L262.9 343.9 L265.1 341.5 L264.7 339.4 L266.0 336.1 L266.5 334.0 M266.5 334.0 L284.3 338.2 M260.2 385.2 L261.3 383.2 L259.5 380.6 L260.7 377.7 L259.4 375.9 L259.5 372.5 L259.6 370.9 L258.3 367.7 L258.7 365.4 M260.4 385.6 L266.1 389.3 M287.6 384.9 L287.6 390.1 L281.4 390.1 M266.1 389.3 L281.4 390.1 M243.8 389.5 L260.4 385.6 M237.9 418.4 L237.9 416.7 L259.0 416.7 M266.1 389.3 L266.1 416.7 L259.0 416.7 M316.4 389.2 L314.4 391.8 L315.0 393.9 L313.9 397.2 L313.3 398.9 L313.7 402.3 L311.9 404.2 L312.8 407.1 L310.8 409.7 L311.5 411.8 L310.5 414.6 M310.5 414.6 L310.5 414.7 L287.5 414.7 M282.3 389.8 L281.6 392.9 L283.1 394.5 L283.6 397.9 L283.6 399.6 L285.5 402.3 L284.7 405.0 L286.6 406.8 L286.5 410.2 L287.1 411.7 L287.5 414.7 M375.0 408.7 L375.0 411.7 L366.2 411.7 M375.0 408.7 L385.1 384.0 M366.2 411.7 L359.1 377.6 M385.1 384.0 L359.1 377.6 M388.2 415.2 L385.4 415.2 L382.8 412.6 L380.0 412.7 L377.5 409.9 L375.0 408.7 M361.7 414.4 L366.2 411.7 M361.7 414.4 L361.4 414.4 L361.4 436.7 M383.1 440.8 L365.1 440.9 M404.0 416.5 L410.9 409.2 M385.4 383.8 L409.5 393.0 M385.4 383.8 L385.1 384.0 M410.9 409.2 L410.9 393.0 L409.5 393.0 M345.4 407.9 L339.6 394.2 M345.1 409.1 L347.5 408.6 L350.4 410.3 L351.8 411.1 L355.1 411.4 L356.6 413.5 L359.4 412.9 L361.7 414.4 M357.8 376.9 L359.1 377.6 M354.3 483.8 L362.6 492.5 M346.3 514.5 L354.4 514.5 L354.4 515.5 M362.6 492.5 L354.4 515.5 M362.2 535.4 L360.5 532.1 L361.7 529.6 L360.2 526.4 L361.3 523.7 M331.6 536.1 L339.8 548.2 M361.3 523.7 L354.4 515.5 M438.5 434.9 L435.0 438.2 M438.5 434.9 L438.1 423.1 M406.8 438.8 L412.9 442.0 M410.9 409.2 L432.2 416.1 M434.5 437.3 L432.6 438.7 L428.9 438.6 L427.1 439.5 L423.5 440.2 L421.7 440.6 L418.0 441.7 L416.1 441.5 L412.9 442.0 M438.1 423.1 L432.2 416.1 M355.9 368.7 L384.8 357.3 M385.1 384.2 L385.4 380.5 L386.5 378.8 L386.1 375.3 L388.0 373.3 L387.2 370.2 L389.4 367.8 L388.6 365.2 L389.8 362.4 M389.8 362.4 L384.8 357.3 M389.8 362.4 L406.5 358.3 M377.4 339.3 L377.0 342.6 L379.3 344.3 L379.4 347.9 L381.2 349.3 L382.1 352.9 L383.4 354.4 L384.8 357.3 M376.7 339.6 L414.2 338.3 M406.5 358.3 L414.2 338.3 M453.1 312.6 L456.0 315.3 L456.4 317.6 L458.6 320.8 L459.8 323.1 M453.6 312.7 L436.1 309.5 M436.1 309.5 L426.1 335.9 M434.6 341.9 L432.6 339.3 L430.7 339.1 L427.7 337.3 L426.1 335.9 M435.0 341.0 L457.5 335.5 M459.8 323.5 L458.3 325.2 L459.5 328.0 L457.7 330.8 L458.2 332.6 L457.5 335.5 M463.3 287.5 L453.6 312.7 M481.1 296.3 L484.7 314.5 M459.8 323.1 L484.7 323.1 L484.7 314.5 M436.3 361.3 L435.0 341.0 M436.3 361.3 L462.4 363.2 M462.4 363.2 L464.6 344.1 M457.5 335.5 L464.6 335.5 L464.6 344.1 M511.6 312.9 L508.4 314.8 L506.0 314.0 L503.3 316.2 L500.4 315.2 L498.1 317.2 L494.8 316.2 L492.9 317.8 L489.7 317.9 M489.7 317.9 L484.7 314.5 M89.5 4.6 L91.1 2.5 L89.9 -0.7 L91.8 -3.3 L90.5 -5.9 L91.9 -9.1 L90.8 -11.3 L91.8 -14.8 L91.9 -17.1 M89.5 6.0 L92.5 5.2 L95.1 7.3 L97.8 6.5 L100.7 8.6 L103.0 8.2 L106.2 10.1 L108.1 10.4 L111.1 11.7 M111.1 11.7 L110.9 11.7 L110.9 -17.9 M91.9 -17.1 L107.5 -19.8 M107.5 -19.8 L110.9 -17.9 M90.9 -17.7 L91.9 -17.1 M78.3 10.3 L89.8 10.3 L89.8 4.9 M107.7 32.4 L111.7 12.4 M111.7 12.4 L111.1 11.7 M148.4 308.6 L141.0 308.6 L141.0 292.4 M115.3 317.0 L115.3 296.2 L115.2 296.2 M115.2 296.2 L138.2 291.2 M141.0 292.4 L138.2 291.2 M42.7 693.1 L67.7 684.9 M67.0 714.6 L68.1 714.3 M67.7 684.9 L68.1 714.3 M141.5 744.8 L160.6 742.4 M132.6 738.7 L133.5 737.0 L132.8 733.6 L134.7 731.5 L133.4 728.8 L135.3 726.0 L134.5 724.0 L135.5 720.6 L135.8 718.9 L135.6 715.3 L136.2 713.2 M155.1 712.3 L155.1 711.1 L140.1 711.1 M155.1 712.3 L163.1 719.8 M162.4 720.2 L163.0 722.1 L162.6 725.8 L162.5 727.6 L163.1 731.2 L163.0 733.5 M160.6 742.4 L160.6 733.5 L163.0 733.5 M136.2 713.2 L140.1 711.1 M159.9 634.7 L163.2 613.5 M159.9 634.7 L145.9 640.3 M133.2 612.8 L132.0 612.8 L132.0 628.4 M145.9 640.3 L132.0 640.3 L132.0 628.4 M43.4 663.7 L43.4 664.9 L52.9 664.9 M44.4 663.2 L43.0 661.6 L42.7 658.1 L42.8 656.4 L41.0 653.5 L42.0 650.9 L40.1 648.9 L40.7 645.6 L39.7 644.0 L39.1 641.1 M52.9 664.9 L64.9 655.8 M53.2 634.6 L66.7 645.2 M53.2 634.6 L42.2 634.6 L42.2 638.1 M64.9 655.8 L66.7 645.2 M42.2 638.1 L39.1 641.1 M35.3 673.0 L36.4 669.2 L39.1 668.3 L40.9 665.0 L43.4 663.7 M67.7 684.9 L68.0 684.6 M68.0 684.6 L52.9 664.9 M15.2 637.5 L18.0 639.3 L20.1 638.5 L23.6 639.6 L25.3 639.8 L28.9 640.0 L30.6 640.9 L34.1 640.3 L36.1 641.9 L39.1 641.1 M85.9 678.1 L84.1 678.5 L80.9 680.4 L78.6 680.3 L76.0 682.8 L73.2 682.3 L71.0 684.8 L68.0 684.6 M86.5 678.2 L83.2 667.6 M83.2 667.6 L83.2 655.8 L64.9 655.8 M36.2 614.4 L36.2 619.8 L11.8 619.8 M35.0 614.8 L37.0 616.7 L36.8 620.2 L38.2 621.8 L38.8 625.4 L39.3 627.1 L40.9 630.5 L40.6 632.6 L42.6 635.5 L42.2 638.1 M107.9 640.4 L108.0 640.2 M107.9 640.4 L107.9 641.5 L89.5 641.5 M108.0 640.2 L104.2 612.6 M89.5 641.5 L84.8 638.7 M84.8 638.1 L85.0 636.3 L82.8 633.8 L83.4 631.0 L81.3 629.5 L81.3 626.1 L80.3 624.7 L78.9 621.5 L79.2 619.6 L76.9 617.2 L76.7 614.7 M104.2 612.6 L85.4 610.7 M85.4 610.7 L85.4 614.7 L76.7 614.7 M114.3 604.0 L111.3 605.6 L110.3 607.0 L108.0 609.7 L106.1 610.3 L104.2 612.6 M132.7 628.6 L129.5 630.3 L127.5 630.5 L125.0 633.0 L122.4 632.7 L120.5 635.3 L117.3 635.1 L115.9 637.2 L112.3 637.6 L110.9 639.0 L108.0 640.2 M83.2 667.6 L89.5 641.5 M66.7 645.2 L84.8 638.7 M65.0 610.9 L76.7 614.7 M65.0 610.9 L53.2 634.6 M92.4 584.7 L90.9 587.9 L90.6 589.6 L90.2 593.2 L88.8 594.8 L89.4 598.1 L87.3 600.3 L88.1 602.9 L86.1 605.8 L86.4 607.7 L85.4 610.7 M38.1 611.8 L28.5 587.4 M38.1 611.8 L63.3 611.8 L63.3 608.6 M63.3 608.6 L61.7 597.4 M32.0 584.8 L28.5 587.4 M32.0 584.8 L32.0 595.9 L60.8 595.9 M61.7 597.4 L60.8 595.9 M36.2 614.4 L38.1 611.8 M12.0 590.8 L12.0 587.4 L28.5 587.4 M65.0 610.9 L63.3 608.6 M88.6 582.6 L86.3 585.0 L83.6 584.7 L82.2 587.2 L78.9 587.4 L77.8 589.1 L74.6 590.4 L73.0 590.8 L70.6 593.2 L68.0 592.9 L66.5 595.5 L63.3 595.6 L61.7 597.4 M38.0 566.7 L32.0 584.8 M64.1 563.4 L60.8 595.9 M88.0 487.8 L91.3 486.5 L93.3 486.9 L96.3 485.0 L98.9 485.9 L101.2 483.8 L104.4 484.7 L106.2 483.0 L109.3 483.1 M88.5 487.9 L81.3 487.9 L81.3 467.1 M86.0 461.4 L81.3 467.1 M85.6 460.5 L89.2 461.6 L91.1 461.0 L94.8 461.5 L96.7 461.7 L100.4 461.5 L102.3 461.9 L105.5 461.2 M105.5 461.2 L109.4 466.1 M108.6 465.9 L110.1 468.7 L108.6 471.5 L109.9 473.4 L109.3 476.9 L109.4 478.5 L109.9 481.5 M109.9 481.5 L109.3 483.1 M82.8 497.7 L83.3 495.5 L85.9 492.6 L86.4 490.6 L88.5 487.9 M110.7 513.9 L112.2 512.5 M112.2 512.5 L109.3 483.1 M61.9 478.1 L64.0 475.3 L67.0 475.4 L68.5 472.7 L71.9 472.4 L73.2 470.4 L76.8 469.4 L78.3 468.2 L81.3 467.1 M74.4 442.6 L86.0 461.4 M108.5 446.7 L108.7 448.5 L108.1 451.9 L106.7 453.4 L107.5 456.6 L105.4 458.8 L105.5 461.2 M131.6 465.0 L109.4 465.0 L109.4 466.1 M139.9 486.2 L137.8 487.0 L134.6 485.7 L133.0 485.4 L129.5 485.5 L127.7 483.9 L125.0 484.9 L122.1 483.3 L120.4 483.5 L116.9 483.1 L115.3 481.9 L112.1 482.7 L109.9 481.5 M142.0 489.4 L127.7 510.2 M127.4 510.5 L125.2 509.5 L122.6 511.5 L119.6 510.3 L117.7 511.9 L114.2 511.6 L112.2 512.5 M515.5 798.3 L518.0 795.9 L520.7 796.4 L522.4 794.0 L525.8 794.0 L527.1 792.8 L530.0 791.8 M542.7 818.7 L550.1 807.9 M530.0 791.8 L530.0 807.9 L550.1 807.9 M531.1 792.2 L531.0 789.8 L533.3 787.3 L534.0 785.9 L535.0 782.7 L536.2 780.9 M550.1 807.9 L556.5 804.7 M536.2 780.9 L557.5 786.7 M557.5 786.7 L556.5 786.7 L556.5 804.7 M563.7 807.5 L556.5 804.7 M443.6 619.0 L439.9 615.6 M463.4 591.1 L463.3 590.9 M463.8 591.4 L460.1 591.8 L458.3 591.6 L454.9 592.7 L452.6 591.7 L449.7 593.4 L446.9 592.0 L444.5 593.7 L441.3 592.5 L438.9 593.8 M438.9 593.8 L438.9 615.6 L439.9 615.6 M409.4 618.0 L412.1 615.8 L413.9 615.3 L415.5 612.3 L418.0 611.6 M439.9 615.6 L418.0 611.6 M489.6 494.3 L487.8 502.3 M525.0 510.3 L509.5 510.3 L509.5 515.6 M509.1 515.4 L507.6 514.9 L504.2 515.2 L502.3 513.5 L499.7 514.5 L497.0 512.6 L495.1 513.2 L492.3 512.0 M491.5 512.6 L491.7 509.1 L489.7 507.7 L489.1 504.1 L487.8 502.3 M438.5 434.9 L438.5 444.2 L460.0 444.2 M461.0 444.0 L459.7 447.2 L460.2 449.0 L459.9 452.5 L459.3 454.2 L460.2 457.6 L459.2 459.9 M459.2 459.9 L438.4 464.4 M435.0 438.2 L433.8 461.2 M438.4 464.4 L433.8 461.2 M417.0 710.2 L412.1 716.5 M417.0 710.2 L417.9 710.2 L417.9 691.1 M412.1 716.5 L389.0 707.7 M417.9 691.1 L413.6 689.2 M413.1 688.6 L411.4 689.4 L407.8 690.0 L406.0 689.8 L402.8 691.3 L400.5 690.4 L397.8 692.4 L395.0 691.4 L392.5 692.8 M392.5 692.8 L389.0 692.8 L389.0 707.7 M441.9 714.3 L417.0 710.2 M434.0 735.9 L434.0 733.2 L412.9 733.2 M412.9 733.2 L412.1 716.5 M436.4 683.6 L417.9 691.1 M404.5 663.3 L413.6 689.2 M388.4 669.6 L394.0 665.1 M388.6 669.1 L389.3 672.7 L388.6 674.6 L390.0 677.9 L388.6 680.3 L390.2 683.1 L388.6 686.0 L389.4 688.5 M389.4 688.5 L392.5 692.8 M763.3 813.0 L757.1 816.7 M829.2 714.0 L823.4 713.4 M823.4 713.4 L810.5 722.5 M810.5 722.5 L808.3 727.9 M809.8 758.1 L809.8 731.0 L805.7 731.0 M805.7 731.0 L808.3 727.9 M811.2 689.4 L823.4 713.4 M786.1 703.7 L810.5 703.7 L810.5 722.5 M785.3 703.4 L788.0 701.3 L787.9 698.8 L790.5 696.2 L790.6 694.2 L791.9 691.2 M761.6 683.4 L761.0 680.8 L763.3 678.1 L763.2 676.1 L764.6 672.8 L765.6 671.3 L765.8 667.8 L767.9 666.2 L767.3 663.1 L769.0 660.8 M760.5 683.1 L789.3 686.6 M786.6 667.8 L780.0 662.5 M780.0 662.5 L769.0 662.5 L769.0 660.8 M804.8 643.5 L791.3 643.5 L791.3 639.5 M780.0 662.5 L780.0 639.5 L791.3 639.5 M792.6 618.7 L792.6 637.0 L789.4 637.0 M791.3 639.5 L789.4 637.0 M710.3 809.5 L710.1 807.9 L708.5 804.9 L709.5 802.5 L707.5 800.4 L708.1 797.2 L707.1 795.6 L707.0 792.6 M710.2 810.0 L700.2 814.3 M685.4 804.8 L700.2 814.3 M686.5 805.1 L685.7 802.2 L687.8 799.4 L687.0 796.9 L688.8 793.8 L688.6 791.7 L690.0 788.3 L690.9 786.1 M690.9 786.1 L707.0 792.6 M786.8 704.0 L783.2 705.7 L781.6 707.0 L777.8 708.5 L776.1 710.6 M806.0 730.5 L803.0 732.3 L800.6 731.4 L798.2 733.5 L795.1 732.6 L792.8 733.4 M776.7 710.5 L776.9 713.3 L779.5 714.2 L780.5 717.5 L781.9 718.5 L784.0 721.3 L784.5 723.1 L787.4 724.8 L787.7 727.7 L790.1 728.7 L791.2 731.9 L792.8 733.4 M760.5 683.1 L757.5 685.9 M757.5 685.9 L774.9 710.9 M776.1 710.6 L774.9 710.9 M486.0 590.5 L491.2 584.4 M491.6 585.3 L493.5 584.5 L497.1 584.9 L498.8 585.1 L502.4 584.5 L504.3 585.5 L507.3 584.6 M507.7 607.8 L510.7 605.7 L510.6 602.9 L513.3 600.5 L512.9 597.8 L515.2 594.9 L515.8 592.4 M506.8 584.5 L510.3 586.2 L511.2 588.3 L514.4 590.0 L515.8 592.4 M570.8 643.0 L571.1 645.1 L569.6 648.2 L568.5 649.5 L568.5 652.9 L566.3 654.5 L566.3 657.1 M571.9 643.2 L566.6 637.5 M566.6 637.5 L566.6 645.7 L539.6 645.7 M539.2 645.3 L540.5 648.8 L539.6 651.0 L540.9 654.4 L539.3 656.8 L540.0 659.8 M540.0 659.8 L554.2 659.8 L554.2 663.8 M566.3 657.1 L554.2 663.8 M511.0 665.3 L535.9 664.2 M511.0 665.3 L516.8 665.3 L516.8 690.9 M535.9 664.2 L537.1 682.7 M537.1 682.7 L528.7 693.2 M516.8 690.9 L516.8 693.2 L528.7 693.2 M538.9 646.3 L538.5 643.0 L536.5 641.9 L535.3 638.5 L534.2 637.3 L532.4 634.8 M540.0 659.8 L535.9 664.2 M531.9 634.4 L530.0 634.2 L526.2 634.6 L524.3 634.1 L520.6 634.9 L518.5 633.6 L515.3 633.7 M503.5 661.0 L511.0 665.3 M515.5 691.7 L516.8 690.9 M757.9 685.7 L754.7 687.0 L752.4 685.9 L749.9 687.8 L746.9 686.6 L745.0 688.2 L742.0 687.7 M742.0 687.7 L741.0 686.6 M740.2 686.5 L741.5 683.9 L740.1 681.9 L740.7 678.6 L740.4 677.0 L739.6 673.7 L740.6 671.7 L738.9 669.1 L740.1 666.3 L739.0 664.5 L738.9 661.1 L739.4 659.0 M769.0 660.8 L763.2 655.1 M739.4 659.0 L763.2 655.1 M789.4 637.0 L789.4 634.2 L764.8 634.2 M763.2 655.1 L764.8 655.1 L764.8 634.2 M571.7 642.2 L575.1 643.8 L577.3 643.3 L580.8 644.7 L582.9 644.1 L586.6 644.8 L589.1 644.6 M566.3 657.1 L585.0 657.1 L585.0 677.3 M585.0 677.3 L595.3 655.6 M589.1 644.6 L595.3 655.6 M615.8 513.2 L613.6 515.7 L613.8 517.6 L612.6 520.8 L611.5 522.2 L611.7 525.5 L609.5 527.3 L610.1 529.8 L608.2 532.6 L607.4 534.5 M583.9 525.0 L583.1 530.4 M607.4 534.5 L583.1 530.4 M552.3 512.6 L562.6 532.2 M562.6 532.2 L562.6 531.8 L581.6 531.8 M583.1 530.4 L581.6 531.8 M614.2 309.6 L613.1 312.6 M583.9 307.6 L583.9 315.5 L591.3 315.5 M612.7 311.6 L610.7 313.0 L607.1 312.7 L605.4 313.6 L601.7 314.1 L599.9 314.3 L596.4 315.5 L594.4 314.9 L591.3 315.5 M568.2 321.6 L573.3 331.5 M573.3 331.5 L583.0 333.3 M591.3 315.5 L583.0 315.5 L583.0 333.3 M689.4 444.2 L689.4 464.9 M689.4 444.2 L663.9 444.4 M689.4 464.9 L656.9 458.4 M663.9 444.4 L659.6 446.9 M659.2 447.3 L658.7 449.2 L657.8 453.0 L657.3 454.9 L656.8 458.3 M656.8 458.3 L656.9 458.4 M702.5 469.4 L704.8 466.8 L707.2 466.5 L708.6 463.6 L711.7 463.2 L712.7 460.7 L716.0 459.7 L717.0 458.1 L720.1 456.2 L722.0 455.2 M689.8 466.1 L689.4 464.9 M690.1 443.0 L689.4 444.2 M682.9 418.1 L666.0 415.7 M666.0 415.7 L663.9 444.4 M665.1 483.7 L656.9 458.4 M635.9 464.3 L633.7 467.2 M635.9 464.3 L656.8 458.3 M762.8 507.1 L763.6 506.0 M788.8 515.6 L788.8 504.6 L781.5 504.6 M763.6 506.0 L781.5 506.0 L781.5 504.6 M793.0 485.5 L793.0 495.5 L783.5 495.5 M815.7 490.8 L812.2 489.4 L811.4 486.9 L808.1 485.8 L806.9 483.1 M781.5 504.6 L781.5 495.5 L783.5 495.5 M737.2 484.2 L737.4 484.4 M737.2 484.2 L736.8 464.5 M737.4 484.4 L747.7 486.3 M747.0 485.6 L750.6 485.0 L752.2 483.9 L755.7 482.5 L757.7 482.2 L760.8 480.2 L763.1 480.3 L765.6 478.1 M754.2 454.2 L736.8 464.5 M754.2 454.2 L754.2 470.5 L769.0 470.5 M769.0 470.5 L769.0 478.1 L765.6 478.1 M718.7 487.1 L722.2 487.3 L723.8 486.7 L727.2 485.6 L729.3 486.2 L731.9 484.2 L734.8 485.3 L737.2 484.2 M737.1 517.5 L737.4 517.5 L737.4 484.4 M732.6 460.0 L736.8 464.5 M764.2 505.1 L762.3 504.3 L760.1 501.6 L759.6 499.9 L756.7 498.3 L756.4 495.5 L753.7 494.6 L752.7 491.5 L751.1 490.6 L748.9 488.0 L747.7 486.3 M784.2 494.5 L781.4 494.0 L779.8 490.8 L777.5 490.2 L775.3 487.4 L773.7 486.3 L770.8 484.0 L769.8 482.3 L766.7 480.4 L765.6 478.1 M761.4 438.5 L761.4 436.9 L737.9 436.9 M761.4 438.5 L754.2 438.5 L754.2 454.2 M781.6 464.0 L769.0 470.5 M767.5 406.7 L764.6 407.6 L764.1 410.1 L761.1 411.9 L760.3 413.5 L758.3 415.8 M767.1 405.1 L770.0 407.3 L772.3 406.7 L775.7 408.4 L777.7 408.1 L781.4 409.2 L783.3 409.1 L786.6 409.6 M758.3 415.8 L764.0 436.2 M786.6 409.6 L787.8 438.3 M764.0 436.2 L764.0 441.1 L784.2 441.1 M784.2 441.1 L787.8 438.3 M789.0 385.0 L788.8 388.5 L789.2 390.2 L790.1 393.6 L789.5 395.5 L791.3 398.4 L790.2 401.1 L791.9 403.1 L791.4 406.1 M783.6 383.5 L767.2 385.2 M766.0 385.3 L767.3 387.4 L766.5 390.9 L766.8 392.5 L767.0 396.1 L766.2 397.9 L767.5 401.0 L765.9 403.5 L767.0 406.1 M791.4 406.1 L786.6 409.6 M791.8 405.9 L793.7 407.3 L796.7 406.0 L799.3 407.8 L801.4 406.7 L804.8 407.7 L806.5 407.7 L809.6 407.5 M809.6 407.5 L808.7 434.0 M808.4 432.9 L806.4 434.8 L803.0 434.3 L801.3 435.7 L797.7 436.0 L796.0 436.3 L792.7 437.8 L790.7 437.4 L787.8 438.3 M785.6 454.8 L786.6 452.4 L784.8 449.4 L785.9 446.7 L783.7 444.0 L784.2 441.1 M761.4 438.5 L764.0 436.2 M492.7 439.1 L489.2 444.0 M492.7 439.1 L492.7 415.3 L477.5 415.3 M489.2 444.0 L463.4 442.4 M463.4 442.4 L469.0 417.2 M469.0 417.2 L469.0 415.3 L477.5 415.3 M491.7 461.3 L491.7 444.0 L489.2 444.0 M460.0 444.2 L463.4 442.4 M462.2 465.8 L459.2 459.9 M457.6 411.2 L438.1 423.1 M456.9 412.0 L460.1 411.9 L461.9 414.5 L464.2 414.4 L466.9 416.6 L469.0 417.2 M483.2 407.6 L483.2 415.3 L477.5 415.3 M478.9 394.2 L478.9 385.6 L460.7 385.6 M460.7 385.6 L456.7 388.3 M456.7 388.3 L457.6 411.2 M531.9 512.7 L531.0 512.7 L531.0 527.7 M509.5 515.6 L508.8 539.2 M531.8 528.3 L528.5 529.4 L527.7 531.6 L524.6 533.3 L523.5 534.8 L521.0 537.4 L519.2 538.1 L517.5 541.3 L515.6 542.8 M515.6 542.8 L508.8 539.2 M531.6 594.4 L528.1 594.1 L526.4 593.1 L523.2 594.2 L521.0 592.5 L518.3 593.8 L515.8 592.4 M532.1 594.1 L530.7 591.2 L532.4 588.6 L531.2 586.3 L532.3 583.0 L532.1 581.3 L531.9 577.7 L532.9 575.9 L531.8 572.8 L533.4 570.4 L532.0 567.9 L533.5 564.9 L533.2 562.5 M533.2 562.5 L533.2 559.6 L521.4 559.6 M507.3 584.6 L519.3 561.0 M519.3 561.0 L521.4 559.6 M491.2 584.4 L486.9 560.5 M519.4 562.0 L516.2 560.6 L514.3 561.4 L510.7 560.5 L509.0 560.7 L505.3 560.7 L503.5 559.9 L500.1 560.9 L497.9 559.6 L494.9 561.1 L492.2 559.6 L489.8 561.2 L486.9 560.5 M531.0 527.7 L543.9 542.6 M533.2 562.5 L538.8 560.8 M515.6 542.8 L521.4 559.6 M538.8 560.8 L543.9 542.6 M562.6 532.2 L561.1 534.2 M561.3 534.8 L558.2 534.5 L556.6 536.9 L553.0 537.1 L551.7 538.9 L548.1 539.7 L546.8 541.2 L543.9 542.6 M568.7 441.0 L568.7 456.6 L566.5 456.6 M569.6 440.2 L567.1 438.9 L566.2 435.5 L563.9 434.3 L562.7 430.9 L561.4 428.8 M560.7 427.9 L559.8 430.8 L556.5 431.7 L555.7 433.6 L552.8 435.6 L551.4 436.5 L549.4 439.3 L546.8 439.7 L545.8 442.5 L542.6 443.4 L541.8 445.3 L539.4 447.2 M558.3 462.3 L566.5 456.6 M558.3 462.3 L544.2 459.8 M544.2 459.8 L539.4 447.2 M591.4 445.0 L587.5 440.3 M587.5 440.3 L568.7 441.0 M581.3 459.5 L566.5 459.5 L566.5 456.6 M569.7 489.4 L558.3 462.3 M534.9 472.4 L544.2 459.8 M511.7 467.2 L520.2 442.7 M492.7 439.1 L507.3 431.7 M520.3 441.9 L518.5 441.1 L515.8 438.3 L514.3 437.2 L511.1 435.2 L509.8 433.7 L507.3 431.7 M539.4 447.2 L535.3 444.3 M520.2 442.7 L535.3 442.7 L535.3 444.3 M512.0 408.6 L512.9 409.9 M507.3 431.7 L512.9 431.7 L512.9 409.9 M510.5 394.2 L510.5 387.3 L515.7 387.3 M547.1 386.5 L547.3 386.6 M512.9 409.9 L533.0 410.9 M547.3 386.6 L547.3 410.9 L533.0 410.9 M535.3 444.3 L536.6 444.3 L536.6 414.5 M533.0 410.9 L536.6 414.5 M561.4 428.8 L562.2 421.2 M536.6 414.5 L562.2 414.5 L562.2 421.2 M641.3 310.5 L649.3 310.5 L649.3 315.1 M612.1 313.0 L613.2 315.0 L612.8 318.6 L613.4 320.4 L613.9 324.1 L613.7 325.9 L615.0 329.4 L614.1 331.6 L614.7 334.6 M614.7 334.6 L630.6 334.6 L630.6 340.2 M630.6 340.2 L630.6 315.1 L649.3 315.1 M689.8 310.2 L687.6 312.0 L684.3 311.1 L682.6 312.1 L679.1 312.3 L677.3 311.9 L674.3 313.4 L671.8 312.2 L669.6 313.9 L666.2 313.2 L664.6 313.8 L661.1 314.5 L659.2 313.8 L656.4 315.0 M687.0 342.6 L662.2 342.6 L662.2 334.6 M662.2 334.6 L656.4 315.0 M659.0 288.0 L655.6 288.0 L655.6 314.5 M649.3 315.1 L655.6 314.5 M664.7 285.0 L687.7 286.2 M656.4 315.0 L655.6 314.5 M666.0 415.7 L659.2 412.0 M659.2 412.0 L659.0 398.1 M678.5 384.2 L679.3 387.5 L680.3 388.9 L682.3 391.7 L682.3 393.9 L684.9 395.9 L684.7 398.8 L687.0 400.2 L687.3 403.6 L688.9 404.7 L690.2 408.0 L691.0 410.0 M677.8 384.9 L672.0 383.8 M672.0 383.8 L659.0 398.1 M562.1 369.6 L562.1 365.1 L569.9 365.1 M561.6 370.2 L560.2 367.5 L557.5 367.5 L555.4 364.8 L553.6 364.4 L550.5 362.7 L549.4 361.2 L546.0 360.4 L544.9 358.0 L541.8 357.9 L540.1 355.2 L537.8 355.1 L535.3 353.5 M569.7 365.7 L568.2 362.3 L568.0 360.4 L566.0 357.4 L566.4 355.0 L564.1 352.5 L564.8 349.6 L562.4 347.5 L561.9 344.8 M561.4 344.5 L559.8 343.7 L556.4 344.4 L554.3 342.7 L551.7 344.0 L548.7 342.4 L546.9 342.9 L543.4 342.4 L541.7 341.7 L538.4 342.4 L536.1 341.9 M535.8 353.0 L535.6 351.0 L536.2 347.2 L536.2 345.3 L536.1 341.9 M530.7 364.7 L535.3 353.5 M547.3 386.6 L549.4 386.4 M549.8 386.1 L551.0 384.9 L552.5 381.7 L554.7 380.8 L555.3 377.6 L558.2 376.4 L558.5 373.9 L561.3 371.8 L562.1 369.6 M535.9 341.6 L536.1 341.9 M573.3 331.5 L561.9 344.8 M587.5 440.3 L586.3 416.8 M606.6 447.1 L610.7 440.8 M586.3 416.8 L601.7 415.5 M601.9 415.9 L601.5 418.2 L603.9 420.5 L603.3 423.5 L605.7 425.4 L605.4 428.7 L607.1 430.2 L607.9 433.8 L608.7 435.3 L610.3 438.5 L610.7 440.8 M635.9 464.3 L633.5 433.5 M611.2 440.8 L612.9 440.5 L616.0 438.7 L618.4 439.3 L620.7 437.1 L623.8 437.8 L625.6 435.7 L629.1 435.9 L630.6 434.7 L633.5 433.5 M659.2 412.0 L659.2 422.5 L638.3 422.5 M659.9 446.0 L657.9 445.5 L655.3 443.1 L654.3 441.6 L651.0 440.4 L650.2 437.9 L647.3 437.5 L645.8 434.5 L643.7 434.0 L641.1 431.6 L640.0 430.2 L637.2 428.9 M638.3 422.5 L637.2 428.9 M633.5 433.5 L637.2 428.9 M734.7 356.8 L728.5 356.8 L728.5 367.5 M734.7 356.8 L734.7 355.9 L757.4 355.9 M728.5 367.5 L742.6 383.5 M743.1 384.6 L744.9 382.7 L748.4 382.8 L750.0 382.0 L753.4 380.8 L755.4 381.2 L758.2 379.1 L760.7 379.0 M760.7 379.0 L762.3 365.7 M758.3 355.4 L758.2 358.8 L760.1 360.2 L760.8 363.9 L762.3 365.7 M730.1 340.4 L734.7 356.8 M704.8 363.9 L712.9 369.9 M712.9 369.9 L712.9 367.5 L728.5 367.5 M761.1 335.6 L761.7 337.7 L760.4 341.0 L759.9 342.6 L759.9 346.1 L758.2 347.8 L759.0 350.9 L756.9 353.3 L757.4 355.9 M787.2 358.4 L762.3 365.7 M767.2 385.2 L760.7 379.0 M711.9 393.0 L713.7 391.8 L717.1 392.2 L718.8 392.2 L722.0 391.2 L724.1 392.4 L726.6 390.6 L729.6 391.8 L731.3 390.8 L734.7 390.6 L736.4 391.2 L739.3 390.5 M711.6 391.9 L708.3 397.7 M707.4 402.7 L708.3 397.7 M707.4 402.7 L734.9 413.7 M740.0 390.6 L738.6 393.1 L740.2 395.2 L739.5 398.5 L739.8 400.0 L740.7 403.3 L739.5 405.5 L741.2 407.9 L740.3 410.6 M734.9 413.7 L740.3 410.6 M712.9 369.9 L711.6 391.9 M742.6 383.5 L739.3 390.5 M699.8 362.6 L686.9 380.8 M686.6 380.5 L689.9 382.2 L690.9 384.0 L694.2 385.3 L695.0 387.8 L698.3 388.6 L699.2 391.6 L702.1 392.0 L703.7 395.2 L706.0 395.6 L708.3 397.7 M677.8 384.9 L686.9 384.9 L686.9 380.8 M704.0 406.1 L707.4 402.7 M729.9 428.9 L729.6 425.6 L731.9 423.6 L731.3 421.0 L733.5 418.3 L733.6 416.5 L734.9 413.7 M758.3 416.8 L755.3 414.9 L753.5 414.7 L750.0 413.9 L748.4 412.6 L745.0 412.7 L743.1 410.6 L740.3 410.6 M804.8 380.7 L804.9 383.8 L807.7 385.3 L808.2 388.6 L810.9 389.7 L811.8 393.0 L814.3 393.9 L815.4 396.9 M809.6 407.5 L813.4 403.9 M815.4 396.9 L813.4 403.9 M814.3 437.0 L814.3 459.3 L819.5 459.3 M808.7 434.0 L814.3 437.0 M810.2 466.9 L819.5 466.9 L819.5 459.3 M114.3 84.8 L113.4 110.0 M114.3 84.8 L111.6 80.3 M113.0 109.9 L111.2 108.5 L107.7 109.1 L105.5 107.3 L102.3 108.5 L99.9 106.6 L97.0 107.7 L94.4 106.1 M112.2 80.7 L108.8 81.8 L106.9 81.7 L104.2 83.9 L101.5 83.2 L99.5 85.5 L96.2 85.0 L94.6 86.7 L91.1 86.9 L89.5 87.7 L86.5 88.5 M93.5 106.6 L93.5 103.1 L91.9 101.6 L91.2 98.0 L90.4 96.3 L88.7 93.0 L88.5 91.1 L86.5 88.5 M112.7 80.6 L112.0 77.7 L114.1 75.0 L113.4 72.5 L115.3 69.4 L115.8 67.0 M109.2 55.4 L115.8 67.0 M79.0 61.7 L84.9 61.7 L84.9 87.7 M86.5 88.5 L84.9 87.7 M116.8 131.8 L114.9 132.2 L111.4 131.6 L109.8 130.9 L106.4 131.4 L104.4 129.8 L101.6 131.0 L98.7 129.3 L96.7 130.0 L93.3 129.1 L91.7 128.8 L88.2 129.1 L86.0 128.7 M117.1 132.6 L117.1 113.5 L116.8 113.5 M116.8 113.5 L113.4 110.0 M94.4 106.1 L84.1 123.0 M84.1 123.0 L85.8 128.5 M86.0 128.7 L85.8 128.5 M118.6 134.0 L116.0 136.2 L116.4 138.9 L114.1 141.7 L114.2 143.9 L112.5 147.1 L112.4 149.1 L111.2 152.6 L110.4 154.8 M117.8 133.8 L117.1 132.6 M110.4 154.8 L88.8 154.8 L88.8 153.3 M86.0 128.7 L88.8 153.3 M113.7 162.8 L113.7 154.8 L110.4 154.8 M113.7 162.8 L113.7 183.4 L99.4 183.4 M99.7 182.5 L97.8 182.0 L95.2 179.5 L94.1 178.2 L90.9 176.9 L90.1 174.5 L87.0 174.0 L85.7 171.1 L83.4 170.7 L81.0 168.2 L79.8 167.0 L76.7 165.5 L75.0 164.0 M88.8 153.3 L88.8 164.0 L75.0 164.0 M641.2 88.3 L635.3 84.7 M641.2 88.3 L653.6 88.3 L653.6 87.2 M635.5 85.1 L634.4 81.7 L635.4 79.5 L633.8 76.5 L635.2 73.7 L633.6 71.4 L634.9 68.1 L633.8 66.1 L634.3 63.0 M653.6 87.2 L657.0 84.3 M657.0 84.3 L662.3 59.1 M634.3 63.0 L640.0 56.5 M640.0 56.5 L657.0 54.9 M657.0 54.9 L662.3 59.1 M639.2 113.1 L638.0 109.7 L639.7 107.4 L638.4 104.6 L640.1 101.6 L639.0 99.4 L640.3 96.0 L640.2 94.1 L640.6 90.5 L641.2 88.3 M655.5 119.6 L666.7 119.6 L666.7 110.3 M666.7 110.3 L653.6 87.2 M606.4 67.2 L623.2 86.9 M606.4 67.2 L611.5 67.2 L611.5 56.0 M611.5 56.0 L634.3 63.0 M623.2 86.9 L623.2 84.7 L635.3 84.7 M684.5 83.7 L682.8 84.2 L679.4 84.7 L677.4 83.6 L674.8 85.2 L671.9 83.8 L670.1 84.9 L666.6 84.4 L665.0 84.2 L661.7 85.1 L659.6 83.8 L657.0 84.3 M683.8 56.2 L680.8 58.0 L678.2 56.8 L675.9 58.6 L672.5 57.7 L670.8 58.9 L667.2 58.9 L665.4 58.8 L662.3 59.1 M608.3 43.3 L611.5 56.0 M611.3 37.7 L613.8 35.5 L616.8 36.3 L618.4 34.5 L621.8 34.3 L623.4 33.8 L626.5 32.3 L628.7 32.9 L631.1 31.1 M630.2 31.7 L631.9 33.3 L632.4 36.8 L633.1 38.4 L634.8 41.7 L634.7 43.7 L637.0 46.4 L636.5 49.1 L638.9 51.0 L638.6 54.4 L640.0 56.5 M631.5 30.6 L631.1 31.1 M631.5 30.6 L657.2 30.6 L657.2 36.1 M657.2 36.1 L657.0 54.9 M656.4 35.5 L659.5 34.2 L660.2 32.4 L662.6 29.9 L664.5 28.8 M664.5 28.8 L664.5 35.2 L685.9 35.2 M685.9 35.2 L686.3 36.4 M359.7 86.8 L362.3 85.1 M388.2 113.1 L389.1 110.0 M361.8 85.7 L365.0 85.3 L367.0 87.7 L369.3 87.0 L372.2 88.9 L373.7 89.2 L377.1 89.8 L378.6 91.7 L381.5 91.4 M389.1 110.0 L381.5 91.4 M370.0 15.3 L374.5 14.3 M370.0 15.3 L360.7 15.3 L360.7 9.4 M390.6 -12.2 L390.0 -10.7 L390.2 -7.2 L388.6 -5.4 L389.7 -2.7 L388.0 0.1 L388.3 1.9 L387.3 4.7 M374.5 14.3 L387.3 14.3 L387.3 4.7 M393.7 39.9 L394.3 39.4 M362.3 40.0 L362.3 15.3 L370.0 15.3 M373.9 14.2 L376.9 16.1 L377.3 18.6 L380.3 19.8 L380.9 23.0 L383.1 23.9 L384.8 27.1 L386.0 28.3 L388.4 31.0 L389.0 32.9 L391.9 34.8 L392.2 37.5 L394.3 39.4 M419.7 15.0 L427.8 15.0 L427.8 12.8 M419.7 15.0 L411.3 21.4 M411.3 21.4 L410.2 26.9 M410.2 26.9 L410.2 48.3 L437.6 48.3 M436.8 48.8 L437.3 45.2 L436.9 43.4 L436.4 39.8 L437.2 37.9 L436.1 34.6 L437.3 32.3 L435.7 29.5 L437.1 26.6 L435.5 24.4 L436.5 21.0 L435.3 19.1 L435.2 16.0 M435.2 16.0 L427.8 16.0 L427.8 12.8 M433.9 -13.2 L432.1 -10.3 L432.3 -8.4 L431.5 -4.9 L430.6 -3.3 L430.8 0.2 L429.1 2.0 L429.9 5.2 L427.8 7.6 L428.7 10.0 L427.8 12.8 M408.3 -11.3 L419.7 15.0 M387.6 5.2 L389.0 6.2 L392.1 7.9 L393.1 9.9 L396.4 10.5 L397.7 13.3 L400.4 13.4 L402.4 16.3 L404.4 16.7 L407.1 19.0 L408.4 20.1 L411.3 21.4 M394.3 39.4 L402.2 37.5 M402.2 37.5 L402.2 26.9 L410.2 26.9 M464.6 16.9 L462.6 19.7 L464.0 22.8 L462.5 25.7 L464.3 28.6 L463.3 31.7 M463.3 31.7 L438.0 31.7 L438.0 49.1 M461.4 15.0 L458.1 14.0 L456.4 14.8 L452.9 15.2 L451.1 14.5 L448.1 16.1 L445.5 14.7 L443.3 16.4 L440.0 15.5 L438.3 16.2 L435.2 16.0 M438.0 49.1 L437.6 48.3 M562.3 116.0 L565.2 111.5 M537.0 114.1 L537.7 110.4 L538.7 108.8 L538.8 105.2 L540.7 103.4 L540.3 100.1 L542.6 98.0 L541.9 95.1 L543.1 92.4 M565.2 111.5 L560.3 93.2 M560.1 93.8 L557.5 92.0 L554.6 93.3 L551.7 91.7 L548.9 93.5 L545.9 92.1 L543.1 92.4 M513.7 97.7 L516.7 96.1 L518.9 96.4 L521.0 93.9 L524.1 94.3 L525.5 92.4 L528.9 91.7 L530.4 91.1 L533.3 89.2 L535.7 89.6 L537.9 88.0 M543.1 92.4 L537.9 88.0 M577.5 139.5 L579.8 136.8 L581.0 135.6 L582.4 132.3 L584.6 131.4 L585.1 128.1 L587.9 126.9 L588.1 124.3 L590.8 122.1 L591.6 120.4 L593.6 117.5 L595.1 115.9 M565.6 112.4 L567.2 111.2 L570.7 110.9 L572.4 111.2 L575.3 109.5 L577.8 110.6 L579.7 108.9 L582.6 109.1 M582.6 109.1 L595.1 115.9 M609.8 118.1 L608.2 116.2 M609.8 118.1 L637.0 113.8 M623.2 86.9 L610.7 98.7 M610.7 98.7 L608.2 116.2 M580.9 60.4 L580.9 75.7 L564.6 75.7 M580.9 60.4 L595.9 72.3 M595.9 72.3 L592.3 84.6 M564.6 75.7 L565.9 81.9 M565.5 81.7 L569.1 82.0 L570.8 83.4 L574.2 82.8 L576.3 85.0 L579.1 84.1 L581.7 86.4 L584.0 85.8 L586.8 87.3 M592.3 84.6 L586.8 87.3 M580.4 47.0 L580.9 60.4 M566.3 43.1 L565.4 46.3 L562.6 47.4 L562.2 50.1 L559.3 52.0 L558.8 53.9 L556.4 56.6 L555.0 57.7 L553.5 61.0 L551.3 61.8 L549.6 64.2 M549.6 64.2 L549.6 75.7 L564.6 75.7 M606.1 67.5 L603.6 67.5 L601.0 70.2 L598.5 70.4 L595.9 72.3 M610.7 98.7 L592.3 84.6 M561.0 93.1 L561.4 91.5 L562.4 88.2 L564.2 87.0 L564.1 83.8 L565.9 81.9 M537.9 88.0 L537.9 63.1 L536.9 63.1 M549.5 65.0 L546.9 63.4 L544.9 64.4 L541.5 63.5 L539.9 63.3 L536.9 63.1 M582.9 109.5 L582.4 105.9 L583.9 103.9 L583.1 100.5 L585.2 98.4 L584.3 95.3 L586.5 92.7 L585.8 90.2 L586.8 87.3 M595.1 115.9 L608.2 116.2 M593.2 -19.4 L605.0 -19.7 M442.9 141.5 L432.7 135.1 M432.7 135.1 L438.4 135.1 L438.4 115.4 M462.9 119.8 L458.4 115.9 M438.4 115.4 L458.4 115.4 L458.4 115.9 M479.3 96.1 L477.5 93.6 L475.4 93.7 L472.5 91.8 L471.2 90.6 L467.9 90.2 L466.5 87.8 L463.9 88.0 L461.8 85.8 M458.4 115.9 L461.8 85.8 M489.0 14.7 L490.1 16.7 L489.4 20.2 L489.5 21.8 L489.9 25.4 L488.9 27.3 L490.3 30.3 L488.8 33.0 L490.2 35.2 L489.1 38.5 L489.8 40.7 M463.3 31.7 L463.3 40.6 L470.1 40.6 M490.4 41.4 L487.0 41.9 L486.0 44.4 L482.6 45.6 L481.3 47.7 M470.1 40.6 L481.3 47.7 M515.2 67.3 L534.6 61.5 M515.2 67.3 L508.2 63.8 M507.7 63.6 L509.0 61.2 L507.3 58.8 L508.3 55.6 L507.3 53.8 L507.4 50.2 L507.5 48.6 L506.5 45.2 L507.6 43.0 L506.2 40.3 M534.6 61.5 L533.8 42.4 M534.0 43.1 L531.1 41.3 L530.1 39.6 L527.0 39.0 L525.8 36.2 L523.6 36.0 L521.1 33.6 L519.9 32.6 L516.8 31.4 L515.2 29.8 M515.2 29.8 L506.2 40.3 M512.1 93.7 L512.1 67.3 L515.2 67.3 M536.9 63.1 L534.6 61.5 M491.5 87.5 L491.2 87.5 L491.2 65.4 M491.2 65.4 L508.2 65.4 L508.2 63.8 M489.8 40.7 L506.2 40.7 L506.2 40.3 M491.2 65.4 L484.2 62.0 M484.2 62.0 L481.3 47.7 M543.9 33.8 L533.8 42.4 M513.1 19.8 L513.1 29.8 L515.2 29.8 M335.7 213.6 L337.8 211.4 M335.7 213.6 L335.7 205.1 L313.1 205.1 M327.8 182.6 L312.2 185.8 M312.7 185.4 L312.8 189.1 L312.4 190.9 L313.4 194.4 L312.2 196.6 L313.6 199.7 L312.0 202.3 L313.1 205.1 M335.7 213.6 L332.5 213.6 L332.5 237.7 M332.5 237.7 L332.5 238.9 L312.4 238.9 M312.4 238.9 L305.8 236.7 M305.8 236.7 L304.5 211.6 M313.1 205.1 L304.5 211.6 M414.7 162.8 L410.8 164.0 M414.7 162.8 L433.0 162.8 L433.0 172.7 M410.8 164.0 L398.0 189.1 M432.8 189.7 L430.9 190.6 L427.3 190.1 L425.6 190.0 L422.1 190.7 L420.0 189.6 L416.9 191.1 L414.4 189.6 L411.8 191.4 L408.8 190.0 L406.7 191.3 L403.2 190.6 L401.0 190.6 M433.2 190.6 L433.0 190.6 L433.0 172.7 M401.0 190.6 L398.0 189.1 M394.8 131.7 L397.0 130.4 L400.3 131.3 L402.0 131.2 L405.4 130.8 L407.3 131.9 L410.4 130.6 L412.8 131.0 M412.8 131.0 L423.6 138.1 M423.6 138.1 L414.7 162.8 M393.2 153.8 L410.8 153.8 L410.8 164.0 M446.9 165.5 L433.0 172.7 M432.7 135.1 L423.6 135.1 L423.6 138.1 M393.4 190.7 L398.0 189.1 M433.3 190.8 L433.2 190.6 M421.7 216.1 L421.7 190.6 L401.0 190.6 M393.5 191.4 L391.9 193.6 L393.2 195.9 L391.8 199.0 L392.3 200.7 L392.3 204.1 L391.3 205.8 L392.4 208.9 L391.3 211.2 M412.2 228.8 L391.3 228.8 L391.3 211.2 M358.9 44.1 L345.7 40.6 M341.5 9.8 L335.6 13.6 M336.5 13.1 L336.5 16.5 L337.7 17.9 L338.9 21.3 L338.9 23.2 L341.1 25.8 L340.6 28.6 L342.8 30.3 L342.6 33.7 L344.1 35.2 L344.9 38.7 L345.7 40.6 M262.3 111.2 L260.9 112.1 M233.9 85.8 L235.1 84.1 M233.9 85.8 L245.6 109.0 M245.3 108.2 L248.7 109.2 L250.3 109.9 L253.8 109.5 L255.7 111.4 L258.5 110.4 L260.9 112.1 M312.2 185.8 L308.5 183.2 M287.6 206.3 L290.7 206.3 L290.7 187.1 M287.7 205.3 L290.4 207.2 L292.1 207.3 L295.5 208.0 L297.0 209.6 L300.0 209.0 L302.3 211.2 L304.5 211.6 M291.0 186.7 L293.4 187.6 L295.6 185.5 L298.8 186.2 L300.4 184.8 L303.9 184.5 L305.6 184.4 L308.5 183.2 M329.9 138.4 L324.7 137.6 M332.4 107.3 L318.3 106.4 M317.3 105.8 L316.8 108.6 L313.6 110.3 L313.2 113.0 L310.5 114.8 M310.5 114.8 L310.5 129.5 L316.3 129.5 M324.7 137.6 L316.3 129.5 M332.4 168.2 L309.8 168.2 L309.8 159.1 M325.4 137.5 L323.5 140.5 L321.9 141.5 L320.9 144.9 L318.5 145.9 L318.3 149.0 L315.4 150.6 L315.2 152.8 L312.7 155.3 L311.8 156.7 L309.8 159.1 M308.5 183.2 L306.2 161.0 M309.8 159.1 L306.2 161.0 M265.0 36.8 L265.4 40.2 L264.8 42.1 L266.4 45.1 L265.1 47.5 L266.9 49.8 L265.9 53.0 L266.8 54.6 L267.0 58.1 L266.8 60.2 M242.3 35.9 L239.4 40.8 M238.1 67.4 L233.6 58.3 M267.4 60.9 L264.0 61.5 L262.9 63.8 L259.5 64.9 L258.1 67.1 M240.3 41.1 L237.9 43.2 L238.4 45.7 L236.4 48.6 L236.2 50.3 L235.1 53.7 L233.9 55.2 L233.6 58.3 M306.5 36.6 L303.3 38.3 L300.6 37.0 L297.7 38.6 L294.8 36.9 L292.0 37.4 M306.3 37.6 L306.3 33.6 L316.5 33.6 M316.5 33.6 L325.4 33.6 L325.4 13.0 M291.9 37.2 L297.7 9.0 M291.9 37.2 L292.0 37.4 M297.3 9.2 L300.4 7.5 L302.8 8.3 L305.0 6.1 L308.1 6.8 L309.8 5.1 L313.3 4.9 L315.4 4.5 M315.4 4.5 L315.4 13.0 L325.4 13.0 M335.3 13.9 L333.3 12.4 L330.5 13.8 L327.8 12.1 L325.4 13.0 M345.7 40.6 L332.3 47.7 M332.3 47.7 L316.5 47.7 L316.5 33.6 M271.2 33.4 L291.9 37.2 M287.0 1.0 L289.4 3.5 L290.9 4.3 L294.1 5.7 L295.2 7.8 L297.7 9.0 M315.7 -0.5 L315.4 4.5 M266.8 60.2 L287.5 67.1 M286.9 84.8 L289.0 81.5 M287.5 67.1 L289.0 81.5 M292.0 37.4 L292.0 59.3 L292.0 59.3 M287.5 67.1 L292.0 59.3 M731.3 58.6 L731.3 63.6 L738.0 63.6 M730.7 58.4 L732.6 56.0 L731.3 53.0 L733.0 50.2 L731.6 47.7 L733.0 44.4 L732.1 42.3 L732.6 39.1 M738.0 63.6 L738.0 55.9 L757.6 55.9 M732.6 39.1 L736.3 37.1 M736.3 37.1 L759.7 44.2 M759.7 44.2 L759.7 55.9 L757.6 55.9 M712.3 63.4 L715.3 61.3 L718.0 62.2 L720.3 59.9 L723.5 60.7 L725.4 58.9 L729.0 59.3 L731.3 58.6 M719.7 31.6 L709.8 31.6 L709.8 41.0 M720.1 32.0 L721.7 33.2 L725.5 34.6 L727.2 35.7 L730.7 37.4 L732.6 39.1 M741.3 14.2 L739.2 15.8 L735.8 15.1 L734.1 15.5 L730.7 16.3 L728.7 15.5 L725.8 17.1 L723.2 15.7 L720.9 17.5 L717.7 16.5 L715.5 17.5 M745.2 20.3 L736.3 20.3 L736.3 37.1 M719.7 31.6 L715.5 17.5 M760.6 43.3 L759.7 44.2 M787.3 66.6 L785.5 67.0 L782.1 66.4 L780.5 65.5 L777.3 66.3 L775.2 64.4 L772.7 65.5 L769.7 64.0 L768.0 64.2 L765.0 63.7 M765.0 63.7 L757.6 55.9 M666.7 110.3 L682.9 112.2 M687.8 88.3 L687.3 108.4 M682.9 112.2 L687.3 108.4 M655.7 131.1 L669.8 141.3 M682.9 112.2 L682.8 134.6 M669.1 140.8 L672.8 139.7 L674.5 138.6 L678.2 137.4 L679.9 136.4 L682.8 134.6 M621.2 207.5 L634.5 207.5 L634.5 206.8 M613.8 182.5 L640.9 182.8 M640.9 182.8 L641.8 185.7 M641.8 185.7 L634.5 185.7 L634.5 206.8 M641.3 239.0 L644.6 214.3 M644.6 214.3 L634.5 206.8 M715.5 17.5 L712.4 14.1 M685.9 35.2 L694.4 35.2 L694.4 16.1 M694.4 16.1 L712.4 14.1 M740.9 -6.0 L740.9 -6.9 L719.7 -6.9 M712.4 14.1 L712.4 -6.9 L719.7 -6.9 M717.3 -10.5 L719.7 -6.9 M653.3 7.3 L654.4 3.9 L655.0 2.2 L655.0 -1.4 L656.6 -3.1 L656.8 -6.1 M654.0 7.0 L660.4 12.2 M660.4 12.2 L686.3 5.8 M656.8 -6.1 L670.9 -6.1 L670.9 -15.8 M670.6 -16.2 L674.0 -14.9 L675.4 -13.6 L678.9 -12.5 L680.2 -10.5 L683.6 -10.1 L685.6 -8.3 M685.4 6.2 L686.2 2.7 L685.8 0.9 L685.7 -2.8 L686.4 -4.7 L685.9 -7.8 M685.6 -8.3 L685.9 -7.8 M664.3 29.3 L663.1 25.7 L663.2 23.7 L661.9 20.2 L662.4 18.0 L660.8 14.7 L660.4 12.2 M693.8 17.0 L692.6 13.7 L691.1 12.6 L688.9 9.8 L688.3 8.0 L686.3 5.8 M717.3 -10.5 L685.9 -7.8 M812.9 204.4 L816.6 190.4 M818.1 130.7 L816.5 134.1 L815.3 135.6 L814.2 139.2 L812.6 141.1 M813.5 140.5 L813.3 144.0 L814.6 145.5 L815.4 149.1 L815.7 150.8 L817.4 153.9 L816.9 156.2 L819.2 158.6 L819.5 161.2 M809.6 117.6 L817.5 130.9 M816.6 190.4 L812.4 184.1 M812.2 184.6 L811.9 180.6 L812.3 178.6 L812.2 174.6 L812.8 172.5 L812.1 169.1 M812.1 169.1 L819.5 161.2 M766.1 189.1 L766.1 209.8 L762.8 209.8 M766.1 189.1 L780.2 187.0 M785.4 192.5 L780.2 187.0 M784.2 192.5 L785.6 195.0 L784.1 198.2 L785.1 200.2 L784.4 203.8 L784.5 205.6 L784.8 209.3 L784.0 211.5 M784.0 211.5 L769.5 216.7 M769.5 216.7 L762.8 216.7 L762.8 209.8 M738.0 189.0 L741.4 202.6 M738.0 189.0 L738.0 182.3 L754.1 182.3 M753.9 183.3 L756.2 183.4 L759.0 185.8 L760.8 186.3 L764.1 188.0 L766.1 189.1 M741.4 202.6 L762.8 209.8 M791.0 215.3 L784.0 211.5 M812.4 184.1 L785.4 192.5 M769.4 243.1 L766.5 240.7 L766.4 238.0 L763.5 236.1 L763.2 233.2 M763.2 233.2 L769.5 216.7 M755.1 182.5 L755.0 180.4 L756.6 177.3 L757.9 176.0 L758.0 172.6 L760.4 171.1 L760.0 168.4 L762.4 166.0 L762.5 164.2 L763.7 161.4 M780.0 187.5 L779.6 183.9 L780.2 182.1 L779.1 178.7 L780.5 176.5 L778.9 173.7 L780.6 170.8 L779.2 168.6 L780.3 165.2 L779.9 163.0 M764.1 161.4 L766.0 162.6 L769.4 161.6 L771.6 163.3 L774.4 161.9 L777.3 163.6 L779.9 163.0 M812.1 169.1 L812.1 159.7 L785.3 159.7 M779.9 163.0 L785.3 159.7 M812.6 141.1 L812.6 138.4 L788.1 138.4 M785.1 159.3 L786.7 157.4 L785.6 154.2 L787.5 151.8 L786.2 149.1 L788.0 146.2 L787.0 144.0 L788.1 140.6 L788.1 138.4 M791.5 115.4 L784.9 131.0 M784.9 131.0 L788.1 131.0 L788.1 138.4 M710.2 83.4 L714.0 112.9 M687.5 109.2 L689.3 109.0 L692.9 109.5 L694.5 110.7 L697.9 110.1 L699.9 112.1 L702.6 111.1 L705.5 113.0 L707.4 112.6 L710.9 113.4 L713.1 113.6 M714.0 112.9 L713.1 113.6 M685.5 136.3 L682.8 134.6 M685.5 136.3 L712.4 136.5 M713.1 113.6 L713.1 136.5 L712.4 136.5 M140.2 545.5 L135.6 542.0 M139.3 545.2 L142.1 543.2 L143.2 542.0 L144.9 539.0 L147.2 538.4 L147.8 535.5 L150.8 534.3 L151.3 532.3 L153.9 530.0 L155.2 529.1 L157.2 526.8 M135.6 542.0 L135.8 515.9 M135.8 515.9 L156.4 520.9 M156.4 520.9 L157.2 526.8 M143.9 555.8 L141.8 553.8 L142.3 550.4 L140.5 548.7 L140.2 545.5 M113.8 536.6 L135.6 542.0 M167.0 535.2 L165.0 534.5 L162.8 531.7 L161.7 530.4 L158.7 528.6 L157.2 526.8 M127.7 510.2 L135.8 515.9 M164.7 509.3 L156.4 520.9 M185.8 535.8 L185.1 536.6 M365.9 641.5 L361.2 654.7 M365.9 641.5 L341.0 629.2 M361.2 654.7 L361.2 654.8 L339.6 654.8 M339.6 654.8 L339.6 643.7 L333.5 643.7 M333.5 643.7 L341.0 629.2 M388.4 669.6 L364.7 666.0 M370.6 637.5 L365.9 641.5 M365.5 665.4 L363.8 663.6 L363.5 659.8 L361.5 658.1 L361.2 654.7 M335.3 615.9 L337.2 617.6 L337.6 621.3 L339.7 623.0 L340.1 626.8 L341.0 629.2 M311.1 654.6 L310.6 653.8 M334.5 663.6 L334.7 661.2 L337.3 658.9 L338.2 657.6 L339.6 654.8 M315.3 642.7 L315.3 643.7 L333.5 643.7 M311.6 540.9 L311.6 540.9 L311.6 555.9 M311.6 540.9 L311.6 532.1 L289.0 532.1 M311.6 555.9 L284.8 556.2 M284.8 556.2 L278.7 540.6 M289.0 532.1 L278.7 540.6 M314.1 558.5 L311.6 555.9 M313.7 537.9 L311.6 540.9 M296.5 513.5 L296.5 532.1 L289.0 532.1 M296.5 513.5 L313.3 511.1 M296.2 514.4 L294.2 511.3 L292.4 510.4 L289.9 507.6 L288.7 506.3 L285.9 504.5 M285.9 504.5 L266.7 504.5 L266.7 509.5 M266.7 509.5 L266.6 536.4 M266.1 537.2 L269.2 536.7 L271.3 539.0 L273.7 538.4 L276.5 540.3 L278.7 540.6 M159.9 634.7 L167.8 640.0 M167.7 640.5 L168.2 642.3 L169.2 645.9 L169.6 647.8 L171.3 651.2 L171.3 653.3 L172.6 656.2 M145.9 640.3 L142.0 656.8 M141.4 657.3 L144.9 657.5 L146.3 659.9 L149.2 659.7 L151.4 662.2 L153.4 662.3 L156.4 664.1 L158.2 665.3 M172.6 656.2 L158.2 656.2 L158.2 665.3 M191.9 635.5 L195.2 636.0 L196.8 634.6 L200.4 634.0 L202.1 633.8 L205.2 632.2 L207.5 632.8 L210.1 630.6 L212.6 630.4 M192.3 636.4 L187.3 632.8 M187.0 633.3 L186.3 629.7 L186.4 627.9 L185.1 624.5 L186.0 622.3 L184.1 619.4 L185.4 616.6 L183.5 614.3 L183.7 611.4 M212.6 630.4 L217.3 612.7 M183.7 611.4 L191.4 607.9 M191.4 607.9 L191.4 606.6 L212.4 606.6 M212.4 606.6 L217.3 612.7 M192.7 662.6 L192.7 661.5 L211.5 661.5 M192.7 662.6 L192.3 636.4 M211.5 661.5 L213.6 632.5 M213.6 632.5 L212.6 630.4 M167.8 640.0 L187.3 632.8 M192.7 662.6 L190.9 663.8 M190.9 663.8 L172.6 656.2 M171.9 608.5 L183.7 608.5 L183.7 611.4 M187.0 576.5 L191.4 607.9 M213.2 599.6 L212.4 606.6 M236.1 644.6 L238.0 641.5 M236.1 644.6 L213.6 632.5 M217.1 613.9 L219.8 612.5 L222.7 614.1 L224.6 613.4 L228.0 613.9 L229.7 614.6 L233.0 613.7 L235.1 615.4 L237.7 614.1 L240.4 614.7 M238.0 641.5 L240.4 641.5 L240.4 614.7 M278.9 637.9 L276.7 635.4 L273.6 636.2 L271.0 634.0 L268.2 635.0 L265.4 633.7 M285.8 656.0 L282.7 662.8 M253.8 661.8 L255.5 662.5 L259.0 663.9 L260.7 664.9 L264.4 665.5 L266.0 666.8 L269.2 667.6 M253.4 661.4 L262.1 637.2 M265.4 633.7 L262.1 637.2 M283.0 662.2 L279.9 664.6 L277.6 664.5 L274.5 666.6 L271.9 665.9 L269.2 667.6 M298.7 686.5 L312.9 686.5 L312.9 678.7 M298.7 686.5 L296.9 686.5 M282.7 662.8 L296.9 686.5 M237.0 644.2 L236.2 647.8 L236.5 649.6 L236.3 653.3 L236.0 655.1 L236.5 658.4 M253.4 661.4 L253.4 662.8 L244.8 662.8 M238.0 641.5 L262.1 637.2 M236.5 658.4 L244.8 658.4 L244.8 662.8 M211.5 661.5 L218.2 664.9 M236.5 658.4 L218.2 664.9 M214.1 690.9 L186.4 681.4 M214.1 690.9 L214.1 707.4 L206.8 707.4 M206.9 706.6 L204.1 709.1 L201.4 708.6 L199.0 711.1 L195.7 710.4 L193.6 712.4 L190.5 712.4 M184.5 683.7 L186.4 681.4 M184.5 683.7 L189.0 683.7 L189.0 711.8 M189.0 711.8 L190.5 712.4 M190.9 663.8 L186.4 681.4 M217.4 665.3 L218.4 667.3 L218.1 671.0 L218.7 672.8 L219.2 676.5 L219.2 678.4 L220.3 682.0 L219.6 684.1 L220.0 687.2 M220.0 687.2 L214.1 690.9 M198.1 732.3 L190.5 712.4 M214.7 712.8 L214.7 707.4 L206.8 707.4 M158.2 665.3 L160.8 684.0 M160.8 684.0 L162.2 685.5 M161.8 684.6 L165.4 685.6 L167.3 684.8 L171.1 685.1 L172.9 685.1 L176.6 684.5 L178.6 685.1 L182.0 683.6 L184.5 683.7 M155.1 712.8 L155.2 709.4 L157.1 707.7 L156.4 705.0 L158.4 702.3 L158.3 700.6 L159.1 697.3 L160.3 695.8 L159.8 692.6 L162.0 690.5 L161.4 688.4 L162.2 685.5 M162.5 719.0 L166.1 719.2 L167.7 718.0 L171.3 717.2 L173.1 717.1 L176.4 715.6 L178.6 716.0 L181.3 713.8 L184.2 714.5 L186.2 712.2 L189.0 711.8 M195.0 738.0 L191.4 738.4 L189.6 737.0 L186.4 738.1 L184.0 736.2 L181.5 737.3 L178.4 735.7 L176.5 736.1 L173.0 735.4 L171.3 734.8 L167.8 734.9 L165.9 733.4 L163.0 733.5 M233.8 559.9 L241.0 529.5 M233.5 559.5 L232.0 558.6 L228.6 557.6 L227.4 555.6 L224.1 555.5 L222.4 552.8 L219.7 553.0 L217.4 550.5 L215.0 550.2 M215.0 550.2 L214.1 543.3 M214.1 543.3 L240.0 528.4 M241.0 529.5 L240.0 528.4 M264.8 537.6 L262.2 539.7 L261.9 541.5 L260.2 544.6 L258.7 545.7 L258.4 549.0 L255.8 550.4 L256.0 553.0 L253.5 555.4 L252.9 557.0 L251.6 560.2 L249.8 561.3 L248.6 563.9 M264.0 536.1 L261.5 536.7 L258.6 534.7 L256.7 534.7 L253.2 533.6 L251.7 532.4 L248.1 532.5 L246.4 530.5 L243.2 531.2 L241.0 529.5 M236.3 563.3 L248.6 563.3 L248.6 563.9 M236.3 563.3 L233.8 559.9 M220.1 583.9 L227.3 583.9 L227.3 579.9 M198.0 564.5 L215.0 564.5 L215.0 550.2 M227.3 579.9 L236.3 563.3 M210.8 537.8 L214.1 543.3 M233.4 512.7 L236.1 515.0 L235.7 518.1 L238.2 520.0 L237.9 523.4 L239.9 525.2 L240.0 528.4 M266.7 509.5 L263.5 507.1 M266.6 536.4 L263.8 537.3 M248.6 563.9 L258.4 563.9 L258.4 572.7 M284.8 556.2 L284.8 565.1 L282.0 565.1 M258.4 572.7 L282.0 565.1 M311.1 586.3 L290.4 586.3 L290.4 582.1 M286.7 611.2 L286.7 593.9 L279.7 593.9 M279.7 593.9 L279.7 582.1 L290.4 582.1 M290.4 582.1 L282.0 582.1 L282.0 565.1 M306.0 438.2 L312.5 438.2 L312.5 417.3 M306.0 438.2 L306.0 447.3 L313.2 447.3 M312.4 446.6 L315.7 445.7 L316.8 444.4 L319.5 442.2 L321.6 442.0 L323.2 439.2 L326.3 439.0 L327.2 436.8 L330.5 435.6 L332.3 434.5 M312.5 417.3 L329.2 422.6 M329.2 422.6 L332.3 422.6 L332.3 434.5 M286.1 439.7 L288.0 438.4 L291.4 439.1 L293.0 439.1 L296.2 438.1 L298.4 439.4 L300.8 437.8 L303.8 439.1 L306.0 438.2 M285.9 438.6 L285.6 460.4 M313.6 461.5 L313.2 447.3 M285.6 460.4 L309.7 460.4 L309.7 466.9 M340.5 441.2 L340.5 434.5 L332.3 434.5 M345.4 407.9 L329.2 422.6 M310.5 414.6 L312.5 417.3 M274.2 466.9 L267.2 480.9 M274.2 466.9 L276.7 466.3 M276.7 466.3 L291.6 488.0 M267.6 480.0 L269.3 483.2 L271.4 483.9 L273.7 486.8 L275.0 488.0 L278.0 490.2 L279.0 492.0 L282.3 493.4 L283.2 495.7 L286.1 496.9 M286.1 496.9 L291.6 488.0 M260.3 485.7 L267.2 485.7 L267.2 480.9 M259.2 456.8 L262.4 457.6 L263.4 460.4 L266.0 460.5 L268.0 463.2 L269.5 464.0 L272.5 465.5 L274.2 466.9 M285.6 460.4 L276.7 466.3 M311.9 479.5 L308.7 479.0 L307.1 481.4 L303.5 481.5 L302.0 483.2 L298.5 484.3 L296.9 485.0 L293.8 487.2 L291.6 488.0 M285.9 504.5 L286.1 496.9 M413.4 813.2 L413.4 821.4 L431.9 821.4 M81.8 810.1 L78.9 809.6 L77.3 811.9 L73.9 812.3 L72.5 813.4 L69.4 815.1 L67.3 815.0 L65.0 817.5 L62.1 817.0 L60.2 819.0 M82.2 808.6 L81.7 809.4 M59.3 818.6 L60.2 819.0 M83.8 733.0 L107.9 738.2 M83.8 733.0 L78.3 717.5 M78.3 717.5 L79.3 716.8 M79.3 716.8 L113.0 714.0 M113.0 714.0 L107.9 738.2 M111.1 743.7 L107.9 738.2 M78.5 741.4 L83.8 733.0 M68.4 713.5 L70.5 716.0 L73.2 715.4 L75.9 717.6 L78.3 717.5 M113.7 713.0 L113.7 713.2 L136.2 713.2 M113.7 713.0 L113.0 714.0 M55.8 291.2 L35.1 291.2 L35.1 289.8 M55.8 291.2 L57.1 289.5 M37.1 262.7 L37.1 262.4 L57.4 262.4 M35.1 289.8 L31.4 288.2 M57.4 262.4 L57.4 289.5 L57.1 289.5 M54.8 291.4 L57.3 293.6 L56.8 296.7 L59.2 298.5 L58.9 301.9 L60.5 303.5 L60.8 306.7 M83.8 312.1 L83.8 306.7 L60.8 306.7 M84.9 312.5 L84.3 309.8 L86.4 307.2 L86.5 305.4 L87.6 302.1 L89.0 300.7 L88.7 297.4 L91.0 295.5 L90.5 293.1 L92.4 290.2 L92.5 288.0 M57.0 288.8 L60.0 289.6 L61.8 287.7 L65.2 287.9 L66.7 286.9 L70.2 286.2 L72.0 286.1 L75.0 284.4 L77.4 285.1 L79.6 282.9 L82.8 283.6 L84.4 281.9 L87.3 281.3 M92.5 288.0 L87.3 281.3 M115.2 296.2 L110.2 291.2 M84.9 314.2 L83.8 312.1 M92.5 288.0 L110.2 288.0 L110.2 291.2 M57.4 262.4 L64.4 254.9 M64.4 254.9 L87.3 274.1 M87.3 281.3 L87.3 274.1 M35.8 236.3 L57.6 236.3 L57.6 236.5 M54.8 210.4 L55.9 211.7 L57.9 214.5 L57.9 216.6 L59.9 218.7 M57.6 236.5 L59.9 218.7 M64.4 254.9 L65.6 244.8 M57.6 236.5 L65.6 244.8 M57.3 313.0 L57.3 338.3 L60.2 338.3 M57.3 313.7 L54.3 312.6 L52.0 314.7 L48.7 313.9 L46.6 316.2 L43.1 315.7 L41.3 317.6 L38.0 317.6 M36.3 319.4 L38.0 317.6 M36.3 319.4 L36.3 341.3 L44.8 341.3 M44.8 341.3 L59.6 339.5 M59.6 339.5 L60.2 338.3 M83.4 327.1 L60.2 338.3 M60.8 306.7 L57.3 313.0 M33.9 290.1 L35.4 292.0 L35.0 295.4 L35.2 297.0 L36.3 300.3 L35.3 302.3 L37.1 304.9 L36.0 307.9 L37.3 309.6 L37.3 313.0 L37.1 314.7 L38.0 317.6 M14.2 319.3 L17.1 320.9 L19.5 319.6 L22.8 320.9 L24.8 319.8 L28.5 320.3 L30.3 320.0 L34.0 319.4 L36.3 319.4 M43.0 342.7 L44.8 341.3 M69.6 356.9 L69.6 339.5 L59.6 339.5 M611.0 124.7 L609.0 126.4 L609.2 130.2 L607.3 132.1 L607.9 135.8 L606.0 138.0 M610.8 124.3 L637.1 142.7 M606.0 138.0 L621.5 138.0 L621.5 158.7 M622.1 159.2 L623.6 158.2 L627.0 157.3 L628.7 157.1 L631.8 155.4 L634.1 156.0 L636.5 154.1 M636.5 154.1 L636.5 142.7 L637.1 142.7 M609.8 118.1 L610.8 124.3 M593.8 146.4 L606.0 138.0 M637.4 142.3 L637.1 142.7 M613.8 166.5 L616.1 163.7 L617.7 162.9 L619.0 159.7 L621.5 158.7 M646.6 163.3 L647.3 166.1 L645.0 168.5 L645.1 170.4 L643.9 173.6 L642.6 175.0 L642.9 178.2 L640.6 180.2 L640.9 182.8 M647.7 163.7 L636.5 163.7 L636.5 154.1 M520.6 185.0 L513.7 187.4 M520.6 185.0 L526.5 185.4 M513.7 187.4 L501.1 214.7 M526.5 185.4 L531.6 189.4 M531.6 189.4 L533.1 189.4 L533.1 217.2 M533.1 217.2 L509.0 217.2 L509.0 218.9 M509.0 218.9 L509.0 214.7 L501.1 214.7 M506.9 159.8 L520.6 159.8 L520.6 185.0 M490.9 181.5 L513.7 181.5 L513.7 187.4 M531.8 159.1 L526.5 159.1 L526.5 185.4 M487.2 214.7 L501.1 214.7 M553.3 183.7 L551.6 183.6 L548.8 185.5 L546.2 184.6 L544.2 186.7 L541.0 186.1 L539.5 187.3 L536.1 188.1 L534.2 187.8 L531.6 189.4 M536.5 220.4 L533.1 217.2 M509.2 243.4 L509.2 218.9 L509.0 218.9 M358.0 313.7 L359.6 313.3 L362.8 312.0 L365.0 313.1 L367.3 311.2 L370.3 312.3 L372.0 310.9 L375.5 310.9 L377.0 310.8 L380.2 309.5 L382.5 310.0 M357.5 313.3 L361.9 337.0 M374.5 337.2 L361.9 337.0 M374.5 337.2 L385.7 318.9 M385.7 318.9 L385.7 310.0 L382.5 310.0 M356.7 339.7 L361.9 337.0 M376.7 339.6 L374.5 337.2 M406.5 320.1 L416.0 336.0 M406.5 320.1 L385.7 318.9 M416.0 336.0 L414.2 338.3 M411.6 307.7 L431.1 307.7 L431.1 303.2 M411.6 307.7 L401.9 289.9 M406.0 284.9 L401.9 289.9 M405.6 285.3 L409.1 284.4 L411.3 285.9 L414.2 284.5 L417.0 286.3 L419.3 285.1 L422.6 286.6 L424.5 286.1 L428.2 286.7 L429.9 287.3 L433.1 287.4 M433.1 287.4 L431.1 287.4 L431.1 303.2 M406.5 320.1 L411.6 307.7 M436.1 309.5 L436.1 303.2 L431.1 303.2 M425.7 335.3 L424.1 335.7 L420.7 336.3 L418.8 335.2 L416.0 336.0 M437.2 282.2 L433.1 287.4 M417.3 260.9 L413.7 262.4 L412.6 264.2 L409.2 266.1 L407.8 268.1 M416.4 260.5 L410.9 235.7 M407.8 268.1 L407.8 261.5 L384.1 261.5 M385.2 261.6 L384.8 259.2 L386.8 256.2 L387.1 254.4 L388.1 250.9 L389.1 249.3 L389.4 245.7 L391.2 244.1 L391.7 241.2 M410.9 235.7 L391.7 241.2 M428.6 264.6 L416.4 260.5 M406.0 284.9 L406.0 268.1 L407.8 268.1 M411.5 234.7 L410.9 235.7 M381.9 292.3 L378.9 293.8 L376.3 292.1 L373.8 293.5 L370.6 292.2 L368.6 293.0 L365.0 292.2 L363.3 292.2 L360.1 291.6 M381.7 293.3 L383.5 291.6 M383.5 291.6 L380.9 263.5 M360.1 291.6 L355.6 270.0 M355.6 270.0 L355.6 261.6 L371.7 261.6 M371.7 261.6 L371.7 263.5 L380.9 263.5 M357.2 294.1 L353.6 307.6 M357.2 294.1 L360.1 291.6 M353.6 307.6 L357.5 313.3 M382.5 310.0 L381.7 293.3 M402.1 290.8 L398.9 289.7 L397.1 290.8 L393.5 290.5 L391.8 290.6 L388.4 291.6 L386.4 290.5 L383.5 291.6 M384.1 261.5 L380.9 263.5 M365.8 215.6 L380.4 215.6 L380.4 218.6 M365.8 215.6 L360.5 238.2 M380.4 218.6 L384.8 236.5 M384.8 236.5 L362.5 239.5 M360.5 238.2 L362.5 239.5 M362.1 210.1 L365.8 215.6 M390.6 210.3 L389.5 212.8 L386.2 213.8 L385.0 215.1 L382.2 217.3 L380.4 218.6 M332.5 237.7 L337.1 242.2 M337.1 242.2 L337.1 238.2 L360.5 238.2 M391.7 241.2 L384.8 241.2 L384.8 236.5 M371.7 261.6 L371.7 239.5 L362.5 239.5 M339.0 262.6 L337.1 242.2 M339.0 262.6 L355.6 270.0 M242.1 358.2 L241.7 356.3 L242.5 352.9 L243.4 351.4 L242.8 348.1 L244.8 346.0 L243.8 343.5 L245.4 340.5 L245.4 338.3 M240.6 357.3 L239.1 359.5 L235.7 359.7 L234.4 360.8 L231.2 362.3 L229.4 363.2 M215.8 359.1 L218.9 331.6 M215.8 359.1 L229.4 363.2 M245.0 339.1 L243.1 336.5 L240.7 336.7 L237.9 334.4 L236.3 333.9 L232.9 332.5 L231.0 331.5 M231.1 330.5 L227.8 332.4 L225.1 331.2 L221.7 332.5 L218.9 331.6 M257.6 364.1 L241.1 358.4 M262.1 330.7 L266.5 334.0 M262.1 330.7 L245.4 338.3 M236.4 385.2 L229.4 385.2 L229.4 363.2 M213.8 360.1 L215.8 359.1 M186.4 333.0 L216.0 333.0 L216.0 327.7 M186.4 333.0 L181.9 338.8 M216.0 327.7 L218.9 331.6 M262.1 330.7 L258.5 330.7 L258.5 313.7 M291.3 332.5 L292.6 330.5 L291.3 327.3 L292.8 324.7 L291.2 322.1 L292.6 319.1 L291.3 316.9 L292.1 313.4 L291.7 311.6 L291.4 307.9 L292.0 305.6 M292.0 305.6 L291.4 305.0 M258.5 313.7 L291.4 305.0 M266.0 437.0 L265.3 435.4 L263.9 432.1 L264.3 430.1 L262.3 427.2 L263.1 424.7 L260.8 422.5 L261.4 419.3 L259.7 417.2 M265.9 438.7 L268.0 437.3 L271.5 438.0 L273.3 437.5 L276.9 437.3 L278.7 437.6 L282.1 436.4 L284.5 436.9 M259.7 417.2 L285.8 417.1 M284.5 436.9 L285.8 417.1 M264.7 438.6 L265.6 437.6 M259.0 416.7 L259.7 417.2 M285.9 438.6 L284.5 436.9 M287.5 414.7 L285.8 417.1 M436.1 362.5 L432.9 363.9 L430.8 363.3 L428.5 365.4 L425.5 364.6 L423.9 366.2 L420.5 366.5 L418.8 366.7 L416.0 367.7 M435.2 363.1 L435.8 364.6 L437.2 367.7 L436.4 369.9 L438.6 372.2 L437.7 375.2 L439.3 376.8 L439.5 380.3 L439.8 381.8 L441.3 384.9 L441.1 387.2 M441.1 387.2 L440.2 387.7 M440.2 387.7 L440.2 386.6 L416.0 386.6 M416.0 386.6 L416.0 367.7 M436.3 361.3 L435.6 362.5 M406.5 358.3 L416.0 367.7 M460.7 385.6 L465.5 370.3 M456.7 388.3 L441.1 388.3 L441.1 387.2 M465.5 370.3 L462.4 363.2 M432.2 416.1 L440.2 416.1 L440.2 387.7 M409.5 393.0 L409.5 386.6 L416.0 386.6 M504.6 345.5 L504.0 361.6 M504.6 345.5 L489.7 338.7 M489.7 338.7 L482.1 343.4 M482.1 343.4 L487.8 368.3 M504.0 361.6 L491.9 370.1 M491.9 370.1 L487.8 368.3 M520.4 336.2 L520.4 345.5 L504.6 345.5 M520.3 369.3 L504.0 369.3 L504.0 361.6 M489.7 317.9 L489.7 338.7 M464.6 344.1 L482.1 343.4 M465.5 371.4 L468.2 369.5 L471.3 370.5 L473.5 368.8 L477.1 369.4 L478.9 368.4 L482.6 368.7 L484.5 368.3 L487.8 368.3 M495.3 381.9 L494.0 380.4 L493.4 377.0 L493.7 375.3 L491.8 372.5 L491.9 370.1 M86.5 678.2 L86.7 678.3 M79.3 716.8 L79.3 689.3 L95.0 689.3 M86.7 678.3 L95.0 689.3 M107.9 640.4 L107.9 657.7 L115.0 657.7 M86.7 678.3 L115.0 657.7 M113.3 713.6 L112.1 710.4 L112.4 708.4 L110.2 706.2 L110.8 703.1 L109.0 701.7 L108.6 698.4 L108.2 696.8 L106.9 694.1 M94.8 688.7 L98.0 689.9 L99.4 691.2 L102.8 691.3 L104.4 693.6 L106.9 694.1 M460.8 478.6 L460.1 480.8 L457.1 482.7 L455.9 483.9 L453.7 486.7 L452.1 488.3 M437.3 464.6 L439.4 466.7 L438.8 470.0 L440.2 471.5 L440.7 475.1 L441.0 476.7 L442.6 479.8 L441.9 482.2 L444.0 484.5 L444.0 487.2 M452.1 488.3 L444.0 487.2 M487.8 502.3 L460.4 502.3 L460.4 507.7 M452.0 488.8 L452.7 490.4 L454.4 493.5 L454.3 495.5 L456.6 498.0 L456.2 500.8 L458.6 502.5 L458.5 505.9 L460.4 507.7 M430.1 790.5 L418.6 790.8 M413.4 813.2 L409.7 808.6 M410.6 808.4 L410.4 806.5 L411.5 803.1 L412.4 801.5 L412.4 797.9 L413.1 795.7 M418.6 790.8 L413.1 795.7 M435.8 759.8 L411.8 759.8 L411.8 763.3 M418.6 790.8 L411.8 763.3 M720.4 812.8 L723.9 812.0 L725.6 811.7 L728.8 810.1 L731.2 810.2 M737.4 813.7 L731.2 810.2 M757.1 816.7 L737.4 813.7 M710.4 809.1 L712.9 811.6 L715.5 811.2 L718.4 813.5 L721.1 813.3 M737.8 788.1 L712.7 782.3 M738.8 788.2 L736.9 791.0 L736.8 792.7 L736.2 796.1 L734.7 797.6 L735.2 800.8 L732.9 802.7 L733.7 805.4 L731.6 808.0 L731.2 810.2 M707.0 792.6 L712.7 782.3 M754.2 784.6 L743.0 782.4 M743.0 782.4 L737.8 788.1 M638.6 806.9 L662.0 806.9 L662.0 815.5 M688.9 784.7 L690.6 781.8 L689.8 779.9 L690.4 776.4 L691.0 774.7 L690.3 771.4 L692.0 769.3 L690.7 766.5 L691.8 764.0 M689.9 784.6 L669.5 784.6 L669.5 787.9 M691.8 764.0 L667.2 764.0 L667.2 764.4 M667.2 764.4 L664.4 781.5 M664.4 781.5 L664.4 787.9 L669.5 787.9 M685.4 804.8 L671.4 804.8 L671.4 804.3 M671.4 804.3 L669.5 804.3 L669.5 787.9 M690.9 786.1 L689.9 784.6 M667.1 739.7 L664.0 760.5 M667.1 739.7 L690.3 739.7 L690.3 739.3 M664.0 760.5 L667.2 764.4 M690.3 739.3 L693.8 742.3 M693.8 742.3 L695.4 761.6 M695.4 761.6 L691.8 764.0 M694.5 743.1 L695.9 741.0 L699.5 740.3 L700.8 738.5 L704.2 737.1 L706.3 736.0 M695.4 761.6 L709.8 765.2 M705.7 737.0 L708.7 736.8 L710.8 739.5 L713.0 739.5 L716.0 741.4 L717.4 742.6 L720.9 743.2 L722.7 744.8 M722.7 744.8 L709.8 765.2 M743.0 782.4 L739.5 769.7 M712.4 782.8 L711.7 779.1 L711.9 777.2 L710.7 773.7 L711.7 771.4 L710.1 768.3 L710.2 765.7 M739.5 769.7 L710.2 769.7 L710.2 765.7 M710.2 765.7 L709.8 765.2 M742.0 687.7 L740.1 704.8 M774.7 711.2 L772.4 711.7 L770.7 714.9 L768.2 715.5 L766.4 718.1 M766.4 718.1 L766.4 704.8 L740.1 704.8 M597.6 705.8 L597.6 716.0 L592.0 716.0 M597.6 705.8 L597.6 685.9 L586.2 685.9 M591.6 716.1 L589.7 714.7 L586.9 716.0 L584.1 714.2 L582.1 715.1 L578.7 714.2 L577.1 713.9 L573.7 714.5 L571.6 712.9 L569.0 714.2 L566.0 712.6 L564.2 713.2 L560.7 712.8 L558.6 712.5 M586.2 685.9 L584.5 684.7 M584.5 684.7 L566.5 690.4 M558.0 711.6 L558.6 712.5 M557.5 711.2 L560.0 709.5 L559.6 706.3 L562.1 704.2 L561.5 701.4 L563.8 698.7 L563.2 696.3 L565.2 693.2 L565.9 691.0 M565.9 691.0 L566.5 690.4 M615.8 679.1 L611.7 707.2 M616.0 679.9 L613.1 679.0 L611.4 680.8 L608.0 680.8 L606.4 681.2 L603.3 682.7 L601.1 681.9 L598.8 684.1 L595.8 683.2 L594.2 684.8 L590.7 685.0 L589.2 685.3 L586.2 685.9 M611.7 707.2 L597.6 705.8 M554.6 663.1 L556.0 666.4 L556.4 668.2 L558.6 671.0 L558.2 673.4 L560.8 675.5 L560.4 678.6 L562.7 680.2 L562.9 683.7 L564.3 685.1 L565.5 688.5 L566.5 690.4 M585.0 677.3 L584.5 684.7 M537.1 682.7 L565.9 691.0 M528.7 693.2 L536.4 711.5 M536.5 712.7 L538.9 711.1 L542.1 712.4 L544.1 711.4 L547.7 711.7 L549.4 711.5 L553.1 711.1 L555.0 711.8 L558.0 711.6 M646.6 590.9 L671.4 591.5 M645.4 590.7 L646.8 593.3 L645.1 596.2 L645.9 598.0 L645.2 601.4 L644.7 603.0 L645.2 606.4 L643.6 608.4 L644.9 611.0 L643.3 613.9 L644.0 616.2 M654.7 617.0 L644.0 616.2 M654.7 617.0 L670.2 608.4 M671.4 591.5 L670.2 608.4 M781.3 610.0 L767.9 611.5 M764.8 634.2 L763.8 632.3 M763.8 632.3 L767.9 611.5 M758.4 597.7 L760.9 599.4 L760.8 602.7 L762.5 604.1 L763.5 606.9 M763.5 606.9 L767.9 611.5 M615.8 679.1 L619.0 676.9 M595.3 655.6 L617.0 655.6 L617.0 657.8 M617.0 657.8 L618.2 658.8 M618.9 658.9 L617.4 661.4 L619.0 663.7 L618.0 666.9 L618.7 668.7 L618.6 672.2 L618.2 673.9 L619.0 676.9 M639.5 633.1 L642.9 617.0 M639.5 633.1 L641.3 638.9 M654.7 617.0 L654.7 635.1 L668.2 635.1 M642.9 617.0 L644.0 616.2 M640.8 638.1 L644.4 638.1 L646.2 638.0 L649.8 637.2 L651.7 637.8 L655.0 636.4 L657.4 637.6 L660.2 635.8 L663.1 637.0 L665.3 635.2 L668.2 635.1 M616.0 634.2 L615.3 636.0 L616.6 639.3 L615.3 641.6 L617.0 644.4 L615.7 647.3 L617.3 649.5 L616.4 652.9 L617.5 654.7 L617.0 657.8 M616.1 633.7 L616.1 633.1 L639.5 633.1 M618.2 658.8 L641.2 652.5 M642.3 638.6 L641.0 642.0 L641.6 643.9 L641.3 647.6 L640.9 649.3 L641.2 652.5 M616.6 632.8 L614.5 632.0 L612.5 628.9 L611.0 627.8 L608.7 625.6 M589.1 644.6 L593.2 644.6 L593.2 636.3 M593.2 636.3 L608.7 625.6 M538.8 560.8 L562.9 560.8 L562.9 570.6 M561.1 534.2 L565.5 568.5 M562.9 570.6 L565.5 568.5 M581.2 532.3 L581.6 533.9 L582.3 537.3 L581.6 539.1 L583.4 541.8 L582.2 544.6 L583.7 546.5 L583.6 549.9 L583.6 551.5 L584.9 554.7 L583.8 556.9 L585.6 559.2 L584.9 562.0 M564.8 568.1 L568.2 567.0 L570.0 567.1 L572.6 564.9 L575.4 565.7 L577.0 563.6 L580.4 563.6 L581.9 562.6 L584.9 562.0 M635.8 530.6 L627.6 541.4 M659.7 540.3 L660.1 543.8 L658.0 545.7 L658.8 548.7 L656.5 551.2 L657.0 553.6 L655.2 556.2 M655.2 556.2 L655.2 561.9 L649.5 561.9 M649.5 561.9 L649.5 565.5 L641.9 565.5 M628.2 541.3 L628.2 544.1 L630.6 545.2 L631.4 548.5 L632.6 549.7 L634.7 552.6 L634.8 554.6 L637.5 556.4 L637.5 559.4 L639.8 560.5 L640.6 563.8 L641.9 565.5 M607.4 534.5 L612.0 542.1 M627.6 541.4 L612.0 542.1 M646.6 590.9 L637.7 579.7 M649.5 561.9 L649.5 587.1 L675.8 587.1 M637.7 579.7 L637.4 571.8 M671.4 591.5 L675.8 587.1 M641.9 565.5 L637.4 571.8 M612.4 336.2 L583.5 333.6 M612.4 336.2 L604.2 357.0 M583.5 333.6 L587.6 333.6 L587.6 364.7 M603.5 356.2 L602.2 357.9 L598.9 359.0 L597.2 359.5 L594.5 361.7 L592.0 361.4 L590.2 364.0 L587.6 364.7 M614.7 334.6 L612.4 336.2 M583.0 333.3 L583.5 333.6 M584.5 368.7 L569.9 368.7 L569.9 365.1 M584.5 368.7 L587.6 364.7 M469.1 529.5 L472.6 530.0 L474.3 530.1 L477.8 529.5 L479.9 530.8 L482.8 529.4 L485.4 530.5 M470.4 530.8 L466.9 532.1 L466.2 534.7 L462.9 536.4 L462.4 538.9 L460.1 541.2 M460.1 541.2 L465.6 559.4 M485.4 530.5 L491.1 530.5 L491.1 540.2 M490.4 540.4 L490.3 542.4 L489.1 546.0 L488.5 547.7 L488.0 551.5 L487.2 553.2 L487.2 557.0 L485.8 559.1 M465.6 559.4 L485.8 559.1 M492.3 512.0 L485.4 512.0 L485.4 530.5 M460.4 507.7 L459.1 510.9 M459.1 510.9 L469.5 510.9 L469.5 530.2 M508.8 538.1 L506.5 539.7 L503.3 538.6 L501.7 539.4 L498.2 539.5 L496.5 539.0 L493.4 540.4 L491.1 540.2 M486.9 560.5 L485.8 559.1 M463.3 590.9 L457.0 568.6 M456.1 568.0 L459.0 566.5 L459.8 565.0 L461.9 562.3 L463.9 561.6 L465.6 559.4 M581.8 390.5 L583.2 390.5 L583.2 415.2 M581.8 390.5 L558.8 393.7 M558.8 393.7 L564.2 419.3 M582.7 414.3 L580.8 415.8 L577.2 415.8 L575.5 416.9 L571.9 417.6 L570.1 418.1 L566.6 419.4 L564.2 419.3 M584.5 368.7 L588.0 368.7 L588.0 380.7 M588.0 380.7 L581.8 390.5 M549.4 386.4 L558.8 393.7 M562.2 421.2 L564.2 419.3 M586.3 416.8 L583.2 415.2 M630.6 340.2 L637.7 349.6 M661.6 334.7 L660.7 336.2 L658.5 339.0 L656.8 340.0 L655.7 343.3 L653.9 345.0 M653.5 345.0 L651.4 344.9 L648.3 347.0 L646.0 346.7 L643.2 349.0 L640.4 348.4 L637.7 349.6 M688.3 350.3 L684.9 351.6 L683.6 352.7 L680.7 354.9 L678.6 355.2 L676.6 358.0 L673.6 358.1 L672.4 360.7 L669.6 361.7 M654.6 344.3 L655.5 347.4 L657.5 348.0 L659.8 350.6 L660.5 352.3 L663.5 353.7 L664.1 356.5 L666.7 357.1 L668.0 360.2 L669.6 361.7 M672.0 383.8 L665.8 383.8 L665.8 369.3 M669.6 361.7 L665.8 369.3 M659.0 398.1 L636.6 382.0 M665.8 369.3 L665.8 369.5 L641.2 369.5 M637.1 381.7 L637.6 380.0 L638.6 376.6 L640.1 375.1 L640.1 371.6 L641.2 369.5 M604.2 357.0 L604.2 364.4 L613.2 364.4 M637.7 349.6 L637.3 358.3 M613.8 364.6 L615.5 364.1 L619.1 363.1 L621.0 363.2 L624.3 361.5 L626.5 361.8 L629.4 359.6 L632.0 360.2 L634.4 357.9 L637.3 358.3 M637.3 358.3 L641.2 358.3 L641.2 369.5 M633.5 417.5 L607.7 410.3 M633.5 417.5 L631.2 385.3 M607.7 410.3 L609.1 410.3 L609.1 389.8 M609.1 389.8 L609.1 385.3 L617.1 385.3 M617.1 385.3 L631.2 385.3 M601.7 415.5 L607.7 410.3 M638.3 422.5 L633.5 417.5 M636.6 382.0 L631.2 385.3 M588.0 380.7 L588.0 389.8 L609.1 389.8 M613.5 363.9 L614.4 367.4 L614.0 369.3 L615.8 372.3 L614.8 374.8 L616.8 377.2 L615.7 380.4 L617.4 382.3 L617.1 385.3 M73.9 61.7 L58.4 67.0 M84.9 87.7 L84.9 97.6 L62.4 97.6 M62.1 98.3 L60.6 95.1 L60.2 93.4 L57.7 91.1 L57.9 88.4 L56.3 86.4 M58.4 67.0 L56.3 86.4 M46.5 45.8 L44.0 48.1 L44.5 50.7 L42.1 53.5 L42.5 55.8 L41.5 58.7 M58.4 67.0 L58.4 58.7 L41.5 58.7 M14.9 60.7 L18.6 60.7 L20.4 62.8 L23.8 62.3 L25.7 64.8 L28.5 65.3 M41.5 58.7 L28.5 65.3 M-9.3 139.2 L11.8 136.5 M8.7 111.3 L8.7 136.5 L11.8 136.5 M11.1 170.8 L10.3 167.5 L12.0 165.5 L10.7 162.9 L12.2 159.9 L11.8 158.2 L11.9 154.7 L12.8 153.1 L11.8 149.9 L13.5 147.6 L12.3 145.4 L13.5 142.1 L13.3 140.5 L13.2 137.5 M11.8 136.5 L13.2 137.5 M84.1 123.0 L84.1 113.3 L65.4 113.3 M62.4 97.6 L62.4 106.3 L58.7 106.3 M65.4 113.3 L58.7 113.3 L58.7 106.3 M85.2 127.5 L84.0 130.1 L80.7 130.6 L79.6 132.2 L76.6 134.0 L74.7 134.2 L72.8 137.0 L70.0 136.9 L68.7 139.5 L65.4 140.1 L64.3 141.4 L61.9 143.3 M64.2 113.3 L65.2 115.4 L64.3 118.7 L64.0 120.3 L64.5 123.6 L62.9 125.6 L64.2 128.2 L62.6 131.1 L63.1 132.8 L63.0 136.3 L61.9 138.0 L63.1 141.0 L61.9 143.3 M411.4 84.1 L383.0 84.1 L383.0 90.2 M411.4 84.1 L411.4 67.4 L406.5 67.4 M383.0 90.2 L393.4 66.5 M406.5 67.4 L393.4 67.4 L393.4 66.5 M385.8 58.9 L393.4 58.9 L393.4 66.5 M362.3 85.1 L364.4 85.1 L364.4 61.0 M381.5 91.4 L383.0 90.2 M413.7 58.2 L402.2 37.5 M413.7 58.2 L406.5 67.4 M616.4 2.7 L616.4 -7.8 M616.4 2.7 L616.4 12.3 L635.7 12.3 M617.2 -7.0 L618.2 -9.1 L621.5 -10.3 L622.8 -11.5 L625.6 -13.7 L627.5 -14.1 L629.5 -16.9 L632.4 -16.9 L634.0 -19.3 M634.0 -19.3 L634.0 11.3 L637.1 11.3 M635.7 12.3 L637.1 11.3 M597.8 13.6 L597.8 2.7 L616.4 2.7 M605.0 -19.7 L616.4 -7.8 M631.8 30.2 L632.8 28.6 L632.5 25.0 L634.2 23.2 L633.3 19.9 L635.4 17.6 L634.4 15.0 L635.7 12.3 M654.0 7.0 L637.1 7.0 L637.1 11.3 M413.9 131.0 L412.9 128.8 L414.0 125.6 L414.1 123.9 L413.9 120.5 L415.3 118.6 L414.1 115.8 L415.9 113.1 L415.0 111.1 L415.8 107.7 L415.7 105.6 M438.4 115.4 L434.4 115.4 L434.4 108.1 M434.0 107.8 L432.3 107.1 L428.7 107.6 L426.7 106.1 L423.6 107.3 L421.0 105.5 L418.6 106.6 L415.7 105.6 M388.7 109.1 L392.0 109.3 L393.4 108.5 L396.6 107.3 L398.6 107.8 L401.1 105.7 L403.9 106.5 L405.6 104.8 L409.0 104.7 L410.6 104.5 L413.4 103.7 M411.4 84.1 L412.7 85.2 M412.7 85.2 L412.7 103.7 L413.4 103.7 M415.7 105.6 L413.4 103.7 M140.2 170.5 L142.8 167.8 L145.5 168.1 L147.7 165.4 L150.9 165.8 L152.8 163.5 L156.4 163.9 L158.5 162.1 M140.3 169.8 L131.0 135.6 M158.0 149.5 L158.0 161.9 L158.8 161.9 M158.0 149.5 L142.2 132.8 M158.5 162.1 L158.8 161.9 M130.4 134.9 L134.2 134.7 L136.1 134.1 L139.9 133.5 L142.2 132.8 M113.7 162.8 L136.9 162.8 L136.9 172.8 M117.5 133.0 L121.0 133.9 L122.7 134.2 L126.3 134.2 L128.0 135.5 L131.0 135.6 M136.9 172.8 L140.3 169.8 M173.8 131.7 L172.1 132.7 L170.6 135.9 L168.3 136.7 L167.4 140.1 L164.7 141.0 L164.2 144.0 L161.2 145.4 L160.7 147.8 L158.0 149.5 M174.2 131.5 L185.2 134.6 M185.2 134.6 L188.8 138.8 M188.8 138.8 L177.4 138.8 L177.4 163.7 M177.1 164.3 L174.8 162.4 L172.1 163.7 L169.2 161.9 L167.1 162.7 L163.7 161.8 L161.9 161.6 L158.8 161.9 M99.4 183.4 L99.5 184.0 M99.5 184.0 L118.4 196.0 M136.9 172.8 L136.3 181.0 M118.4 196.0 L134.9 184.1 M136.3 181.0 L134.9 184.1 M304.2 335.1 L305.0 331.8 L307.5 330.7 L307.5 327.9 L310.2 326.0 L310.6 324.2 L312.4 321.2 L313.8 320.2 L314.5 316.9 L316.2 315.2 M292.0 305.6 L305.8 304.9 M306.0 305.4 L307.2 306.9 L310.5 309.1 L311.7 310.7 L315.0 312.9 L316.2 315.2 M334.7 331.4 L332.0 316.0 M316.2 315.2 L332.0 316.0 M353.6 307.6 L353.6 314.5 L332.7 314.5 M332.0 316.0 L332.7 314.5 M282.8 209.1 L281.9 209.1 L281.9 233.6 M282.8 209.1 L287.6 206.3 M305.2 236.0 L303.8 237.2 L300.4 238.1 L298.6 238.0 L296.0 239.6 M281.9 233.6 L296.0 239.6 M312.4 238.9 L312.4 274.3 L310.7 274.3 M310.7 274.3 L309.7 274.3 M309.7 274.3 L309.7 261.6 L290.2 261.6 M295.2 239.1 L295.9 242.2 L293.7 244.4 L294.4 246.6 L292.9 249.7 L292.4 251.2 L292.3 254.7 L290.4 256.3 L291.2 259.1 L290.2 261.6 M309.7 274.3 L287.8 292.5 M287.8 292.5 L287.8 283.4 L275.6 283.4 M275.6 283.4 L275.6 265.5 L281.6 265.5 M281.6 265.5 L290.2 261.6 M233.1 120.7 L233.1 135.8 L242.9 135.8 M232.8 121.2 L230.6 119.4 L227.8 120.6 L225.0 118.7 L222.8 119.7 L219.4 118.5 L217.2 118.9 M217.2 118.9 L217.2 144.3 L210.4 144.3 M242.4 137.3 L242.9 135.8 M242.4 137.3 L211.2 145.9 M210.4 144.3 L211.2 145.9 M245.6 109.0 L245.6 120.7 L233.1 120.7 M260.9 112.1 L257.8 112.1 L257.8 129.6 M257.8 129.6 L242.9 135.8 M185.2 134.6 L185.2 114.3 L194.6 114.3 M188.8 138.8 L188.8 144.3 L210.4 144.3 M194.6 114.3 L216.5 117.9 M216.5 117.9 L217.2 118.9 M247.1 160.2 L242.4 137.3 M247.4 161.1 L244.2 160.6 L242.7 162.3 L239.3 163.0 L237.7 163.5 L234.6 165.1 L232.5 164.8 L230.0 166.4 M214.1 160.4 L230.0 166.4 M214.1 160.4 L211.2 145.9 M266.9 138.6 L265.2 155.4 M266.2 138.3 L269.6 137.0 L271.4 136.9 L274.0 134.6 L276.8 135.1 L278.5 132.7 L281.9 132.8 L284.0 131.8 M265.2 155.4 L265.2 162.1 L281.0 162.1 M283.1 132.1 L286.3 133.9 L286.7 136.7 L289.7 138.3 L290.0 141.7 L291.8 143.8 M291.8 143.8 L292.0 143.8 L292.0 155.5 M280.9 161.5 L283.7 161.5 L284.9 159.1 L288.2 158.4 L289.4 157.1 L292.0 155.5 M257.8 129.6 L266.9 129.6 L266.9 138.6 M247.1 160.2 L250.2 161.1 M250.8 162.1 L252.3 160.1 L255.9 159.7 L257.3 158.6 L260.7 157.2 L262.6 157.2 L265.2 155.4 M286.7 109.6 L287.4 110.4 M288.3 110.2 L286.9 113.5 L287.0 115.3 L286.3 118.9 L285.4 120.6 L285.5 124.2 L283.9 126.1 L284.8 129.3 L284.0 131.8 M310.5 114.8 L287.4 110.4 M316.3 129.5 L316.3 143.8 L291.8 143.8 M306.2 161.0 L306.2 155.5 L292.0 155.5 M280.3 178.8 L281.0 162.1 M280.3 178.8 L290.7 187.1 M216.6 -13.6 L216.1 -13.2 M232.7 15.4 L232.7 16.1 L211.9 16.1 M211.9 16.1 L209.4 12.9 M216.1 -13.2 L209.4 12.9 M239.0 40.4 L237.5 39.7 L234.1 40.3 L232.1 38.5 L229.4 39.7 L226.7 37.9 L224.8 38.5 L221.4 37.7 L219.8 37.0 L216.5 37.6 L214.4 35.8 L211.9 37.0 L208.9 35.4 L207.2 35.7 L203.7 35.4 L201.6 35.1 M233.6 58.3 L215.6 58.3 L215.6 57.4 M215.6 57.4 L215.6 35.1 L201.6 35.1 M211.7 15.5 L211.2 19.0 L208.8 20.4 L209.0 23.6 L206.3 25.6 L206.4 28.0 L204.0 30.6 L203.5 32.4 L201.6 35.0 M201.6 35.0 L201.6 35.1 M233.9 85.8 L233.9 91.1 L222.2 91.1 M215.0 57.4 L213.8 58.5 L211.7 61.3 L209.3 61.7 L208.2 64.6 L205.8 65.7 M221.8 91.8 L220.3 88.7 L219.6 87.3 L217.1 85.0 L217.1 82.5 L214.4 81.2 L214.1 78.0 L212.5 76.9 L210.7 73.9 L210.3 72.2 L207.7 70.2 L207.7 67.3 L205.8 65.7 M216.5 117.9 L216.5 94.5 L218.2 94.5 M222.2 91.1 L218.2 94.5 M319.4 84.6 L321.3 83.2 L324.9 83.6 L326.6 83.2 L330.1 82.5 L332.0 83.0 L335.2 81.5 L337.6 81.8 M319.1 83.5 L317.7 82.3 M317.7 82.3 L317.7 61.5 L317.7 61.5 M337.6 81.8 L337.5 64.5 M338.3 64.1 L335.4 62.9 L334.9 59.8 L332.8 59.0 L331.1 55.9 L329.5 54.6 M329.5 54.6 L317.9 61.3 M317.9 61.3 L317.7 61.5 M345.8 85.7 L337.6 85.7 L337.6 81.8 M318.3 106.4 L319.1 106.4 L319.1 83.5 M289.0 81.5 L317.7 82.3 M292.0 59.3 L317.7 61.5 M363.4 60.0 L361.1 59.2 L358.5 61.1 L355.5 60.1 L353.5 61.8 L350.0 61.4 L348.4 62.3 L344.8 63.0 L343.0 62.9 L339.8 64.5 L337.5 64.5 M332.3 47.7 L329.5 54.6 M306.3 38.1 L306.5 40.0 L309.0 42.3 L308.7 45.1 L311.2 46.7 L311.3 50.1 L313.4 51.3 L314.2 54.7 L315.4 56.1 L317.1 59.2 L317.9 61.3 M710.6 216.2 L708.6 218.0 L709.5 220.8 L707.5 223.5 L707.8 225.5 L706.8 228.9 L705.8 230.4 L705.7 233.5 M710.3 215.8 L734.4 217.8 M705.7 233.5 L705.7 241.9 L733.6 241.9 M734.4 217.8 L739.7 217.8 L739.7 232.8 M733.6 241.9 L739.7 232.8 M762.8 233.3 L760.9 232.1 L757.8 233.5 L755.4 231.9 L752.9 233.4 L749.9 232.0 L747.9 233.0 L744.4 232.5 L742.7 232.3 L739.7 232.8 M741.4 202.6 L734.4 217.8 M734.0 255.7 L732.5 252.9 L734.0 249.9 L732.7 247.7 L733.7 244.2 L733.6 241.9 M684.4 136.6 L686.6 138.5 L686.3 141.8 L687.5 143.2 L688.4 146.6 L688.3 148.4 L690.4 151.1 L689.6 153.7 L691.8 155.5 L691.5 158.9 L692.7 160.3 L693.6 163.6 L694.5 165.5 M715.8 141.5 L712.4 136.5 M715.8 141.5 L715.8 163.3 L705.0 163.3 M705.0 163.3 L694.5 165.5 M702.2 236.6 L687.1 236.3 M702.2 236.6 L706.2 255.3 M706.2 255.3 L686.2 255.3 L686.2 265.0 M686.9 236.3 L687.1 236.3 M686.9 236.3 L686.9 262.4 L683.9 262.4 M683.9 262.4 L686.2 265.0 M718.8 264.7 L716.0 262.6 L714.9 261.3 L711.7 260.3 L710.7 257.9 L707.8 257.7 L706.2 255.3 M705.7 233.5 L702.2 236.6 M688.1 285.6 L688.1 265.0 L686.2 265.0 M664.9 238.9 L659.6 243.5 M664.9 238.9 L686.9 236.3 M663.6 257.1 L683.9 262.4 M270.1 691.1 L270.1 683.4 L265.8 683.4 M270.1 691.1 L249.3 710.6 M265.8 684.1 L263.0 682.9 L260.5 685.0 L257.3 684.1 L255.3 686.2 L251.8 685.8 L250.0 687.3 L246.3 687.7 L244.1 688.2 M242.9 709.0 L249.3 710.6 M242.9 709.0 L239.1 696.2 M239.1 696.2 L244.1 688.2 M268.0 667.4 L269.1 670.2 L267.2 673.0 L267.8 675.2 L266.6 678.6 L266.5 680.3 L265.8 683.4 M297.8 687.0 L294.5 688.4 L293.9 690.8 L290.8 692.8 L290.0 694.5 L287.4 697.1 L286.2 699.1 M286.2 699.1 L270.1 691.1 M285.8 705.5 L283.4 710.7 M285.8 705.5 L286.2 699.1 M283.4 710.7 L283.4 716.3 L258.3 716.3 M257.8 717.1 L256.1 714.2 L253.8 714.0 L251.4 711.4 L249.3 710.6 M244.8 662.8 L244.1 688.2 M262.6 734.0 L258.3 734.0 L258.3 716.3 M262.6 734.0 L262.6 743.6 L254.9 743.6 M240.7 711.3 L242.9 709.0 M255.2 744.5 L252.0 743.5 L250.1 745.3 L246.6 744.8 L244.9 745.9 L241.3 746.5 L239.6 746.7 L236.7 748.1 M219.7 686.7 L223.1 688.0 L224.4 689.4 L227.9 689.7 L229.3 692.0 L232.4 691.8 L234.4 694.4 L236.8 694.2 L239.1 696.2 M266.1 593.7 L258.8 583.7 M266.1 593.7 L266.1 614.3 L256.7 614.3 M258.8 583.7 L242.3 592.1 M242.3 592.1 L240.8 614.6 M240.6 615.7 L243.8 614.1 L246.5 615.6 L249.5 614.1 L252.3 616.1 L255.2 615.8 M256.7 614.3 L255.2 615.8 M257.2 572.9 L258.8 575.1 L257.8 578.6 L258.8 580.5 L258.8 583.7 M279.7 593.9 L279.7 593.7 L266.1 593.7 M286.1 611.9 L256.7 614.3 M227.5 580.4 L228.6 581.9 L232.0 583.3 L233.0 585.7 L236.4 586.3 L237.6 589.2 L240.7 589.4 L242.3 592.1 M240.4 614.7 L240.8 614.6 M265.4 633.7 L265.4 615.8 L255.2 615.8 M410.4 808.9 L407.0 810.2 L405.1 810.4 L402.3 812.6 L399.7 812.1 L397.6 814.6 L394.4 814.0 L392.7 816.1 L389.2 816.1 L387.3 817.5 M252.9 809.5 L239.9 815.7 M252.9 809.5 L273.6 816.8 M214.1 785.1 L211.6 785.1 L211.6 793.2 M240.6 784.2 L232.9 810.4 M232.9 810.4 L216.6 804.2 M216.6 804.2 L211.6 804.2 L211.6 793.2 M65.6 244.8 L65.6 238.5 L83.9 238.5 M60.3 218.5 L62.5 219.3 L65.3 217.3 L68.0 218.3 L70.2 216.3 L73.6 217.0 L75.3 215.4 L78.9 215.3 L80.6 214.9 L83.7 214.1 M83.9 238.5 L83.7 214.1 M70.7 193.3 L70.7 200.8 L86.3 200.8 M86.3 200.8 L87.8 208.0 M87.8 208.0 L83.7 214.1 M116.1 687.3 L124.7 664.2 M116.1 687.3 L134.9 693.1 M140.4 682.2 L134.9 682.2 L134.9 693.1 M140.4 682.2 L130.5 664.1 M130.5 664.1 L124.7 664.2 M106.9 694.1 L116.1 687.3 M115.0 657.7 L115.0 664.2 L124.7 664.2 M140.1 711.1 L140.1 693.1 L134.9 693.1 M161.0 682.9 L158.4 684.2 L155.5 682.6 L153.6 683.3 L150.1 682.9 L148.5 682.1 L145.2 683.0 L143.0 681.3 L140.4 682.2 M141.7 657.1 L139.9 657.7 L137.2 660.2 L134.9 660.2 L132.9 663.1 L130.5 664.1 M504.7 713.9 L512.5 717.9 M536.4 711.5 L534.0 714.1 M512.9 718.9 L514.8 717.4 L518.4 717.5 L520.2 716.9 L523.7 715.9 L525.7 716.1 L528.9 714.3 L531.3 715.1 L534.0 714.1 M592.0 716.0 L591.7 716.0 L591.7 726.6 M558.6 712.5 L563.8 712.5 L563.8 737.3 M577.9 738.3 L578.9 736.8 L581.9 734.7 L583.5 734.0 L585.6 731.1 L588.2 730.9 L589.3 728.0 L591.7 726.6 M577.1 738.0 L563.9 738.0 L563.9 737.4 M563.9 737.4 L563.8 737.3 M576.9 738.7 L578.3 739.8 L580.8 742.2 L581.2 744.3 L584.2 745.6 L584.5 748.7 L587.0 749.5 L588.4 752.6 L589.6 753.7 L592.1 756.3 L592.5 758.2 L594.9 760.0 M594.9 760.0 L594.9 770.8 L587.2 770.8 M563.9 737.4 L561.5 757.8 M587.2 770.8 L561.5 757.8 M590.8 828.2 L591.2 815.4 M563.7 807.5 L563.7 804.9 L580.4 804.9 M592.0 814.7 L589.1 814.1 L588.0 811.0 L586.3 810.3 L583.8 808.0 L583.1 806.2 L580.4 804.9 M557.5 786.7 L559.9 783.7 M559.9 783.7 L586.2 783.7 L586.2 780.4 M580.7 804.5 L581.8 803.0 L581.2 799.8 L583.2 797.7 L582.4 795.4 L583.7 792.3 L584.1 790.7 L584.3 787.3 L585.8 785.7 L584.9 782.7 L586.2 780.4 M587.2 770.8 L586.3 780.3 M559.9 783.7 L556.2 763.0 M561.5 757.8 L556.2 763.0 M586.2 780.4 L586.3 780.3 M441.7 566.0 L439.6 567.5 L436.3 566.6 L434.6 567.1 L431.2 567.7 L429.3 566.7 L426.4 568.2 L423.8 566.8 L421.7 568.2 L418.3 567.7 L416.7 567.8 L413.7 568.4 M441.4 567.6 L440.9 569.3 L439.9 572.8 L438.8 574.4 L438.6 578.0 L436.9 579.7 L437.5 583.2 L435.3 585.2 L436.2 588.3 L434.4 590.7 M434.4 590.7 L420.6 591.5 M420.6 591.5 L410.9 581.1 M410.9 581.1 L410.9 568.4 L413.7 568.4 M438.9 593.8 L434.4 590.7 M457.0 568.6 L442.8 566.6 M442.8 566.6 L441.8 567.2 M418.0 611.6 L420.6 611.6 L420.6 591.5 M398.3 586.5 L410.9 581.1 M387.1 551.6 L388.8 551.0 M413.7 568.4 L410.4 568.4 L410.4 560.1 M388.8 551.0 L410.4 551.0 L410.4 560.1 M412.9 733.2 L405.8 733.2 L405.8 740.1 M411.8 763.3 L411.1 762.8 M405.8 740.1 L411.1 740.1 L411.1 762.8 M700.2 814.3 L692.3 828.6 M671.2 804.6 L669.1 805.7 L667.8 809.3 L665.6 810.5 L664.5 814.1 L662.0 815.5 M722.7 744.8 L733.6 744.8 L733.6 740.9 M739.5 769.7 L743.1 769.7 L743.1 758.8 M743.4 758.1 L742.2 756.9 L740.3 754.0 L740.3 752.0 L737.7 750.0 L737.9 747.1 L735.6 745.8 L734.9 742.5 L733.6 740.9 M654.8 556.2 L658.2 556.5 L659.7 558.6 L662.7 558.1 L664.9 560.4 L667.0 560.2 L670.1 561.8 L671.5 562.6 L675.0 562.9 L676.5 564.9 L679.6 564.4 L681.6 566.8 L684.0 566.3 L686.4 568.0 M675.8 587.1 L678.5 585.9 M677.6 585.6 L680.5 583.6 L680.3 580.8 L683.0 578.4 L682.7 575.9 L684.9 573.0 L685.0 570.9 L686.4 568.0 M683.8 535.7 L687.2 567.3 M714.6 560.2 L710.1 567.4 M687.2 567.3 L710.1 567.4 M687.2 567.3 L686.4 568.0 M733.8 584.6 L732.0 583.8 L728.8 584.9 L726.3 583.3 L724.0 584.6 L720.7 583.4 L719.0 584.0 L715.9 584.1 M710.1 567.4 L710.1 584.1 L715.9 584.1 M763.8 632.3 L734.8 631.1 M763.5 606.9 L734.6 619.8 M734.8 631.1 L734.6 631.1 L734.6 619.8 M742.2 594.8 L740.9 598.0 L738.8 598.9 L738.5 602.0 L735.7 603.3 L735.6 605.7 L733.1 608.0 L732.2 609.3 L730.6 611.9 M734.6 619.8 L734.6 611.9 L730.6 611.9 M690.3 739.3 L687.7 715.2 M706.3 736.0 L711.5 716.2 M687.7 715.2 L694.8 715.2 L694.8 710.5 M694.3 710.8 L697.6 710.7 L699.3 713.0 L701.9 712.3 L704.5 714.4 L706.2 714.5 L709.6 715.5 L711.5 716.2 M728.2 716.5 L730.6 719.3 L730.4 721.8 L732.8 724.4 L732.1 727.3 L734.4 729.6 L733.8 732.9 L735.7 735.1 M728.7 716.7 L718.0 714.5 M733.6 740.9 L735.7 735.1 M718.0 714.5 L711.5 716.2 M665.8 737.5 L635.0 740.9 M665.8 737.5 L663.2 715.0 M634.1 740.9 L635.7 738.1 L634.7 736.2 L635.2 732.9 L635.7 731.3 L635.0 728.0 L636.5 726.0 L635.0 723.4 L636.6 720.5 L635.8 718.7 L636.1 715.3 L636.8 713.3 M663.6 714.4 L660.4 715.6 L657.9 713.9 L655.5 715.2 L652.3 713.9 L650.4 714.6 L646.9 714.3 L645.2 713.7 L641.7 714.5 L639.6 713.1 L636.8 713.3 M665.8 737.5 L667.1 739.7 M687.7 715.2 L664.5 714.1 M663.2 715.0 L664.5 714.1 M611.6 706.5 L614.8 708.0 L616.2 709.4 L619.7 709.7 L621.4 711.7 M619.0 676.9 L636.8 676.9 L636.8 687.9 M621.4 711.7 L634.7 711.3 M634.0 711.7 L634.5 708.2 L635.0 706.5 L634.5 703.1 L636.0 701.1 L634.7 698.2 L636.5 695.6 L635.4 693.4 L636.7 690.1 L636.8 687.9 M641.2 652.5 L643.6 654.5 M643.6 654.5 L643.6 683.6 L642.5 683.6 M636.8 687.9 L642.5 683.6 M643.3 655.5 L646.7 654.2 L649.2 655.9 L652.2 654.6 L654.9 656.7 L657.7 656.6 M668.2 635.1 L672.1 637.4 M657.6 657.1 L658.8 653.8 L661.1 652.8 L661.6 649.6 L664.5 648.2 L664.7 645.6 L667.6 643.5 L668.2 641.8 L670.3 638.8 L672.1 637.4 M670.2 608.4 L680.9 617.2 M680.9 617.2 L680.4 617.2 L680.4 636.5 M680.4 636.5 L680.4 637.4 L672.1 637.4 M643.4 616.6 L640.1 616.8 L638.2 614.6 L635.7 615.3 L632.9 613.3 L631.1 613.3 L627.8 612.4 L626.3 610.9 L623.4 610.9 M637.7 579.7 L618.7 579.7 L618.7 596.5 M618.7 596.5 L623.4 610.9 M608.7 625.6 L608.9 624.1 M623.4 610.9 L608.9 624.1 M531.2 593.9 L536.2 598.4 M562.9 570.6 L562.6 576.2 M562.6 576.2 L536.2 598.4 M567.3 637.0 L566.5 635.4 L566.0 632.0 L566.6 630.1 L564.8 627.4 L566.0 624.6 L564.4 622.7 L564.8 619.3 L564.4 617.7 L563.9 614.7 M531.4 634.5 L533.8 632.2 L534.4 630.7 L535.5 627.4 L537.4 626.4 L537.5 623.2 L540.2 621.6 L540.2 619.4 L542.3 616.7 L543.4 615.5 L544.7 612.9 M545.1 613.4 L547.0 613.3 L550.7 613.8 L552.4 614.1 L556.1 613.9 L558.0 614.7 L561.5 613.7 L563.9 614.7 M514.7 615.7 L514.7 603.2 L537.7 603.2 M544.7 612.9 L537.7 603.2 M537.7 603.2 L536.2 598.4 M36.1 104.9 L10.8 105.2 M36.1 104.9 L36.1 80.4 L32.8 80.4 M31.8 79.0 L32.8 80.4 M31.2 79.1 L29.5 79.8 L28.0 82.8 L25.2 83.2 L24.5 85.7 L21.3 87.1 L20.4 88.5 L17.8 90.8 L16.1 91.4 L14.6 94.4 L11.8 94.8 L11.0 97.5 L8.7 99.0 M8.7 99.0 L10.8 105.2 M8.7 111.3 L10.8 105.2 M13.2 137.5 L36.8 137.6 M46.1 111.3 L45.2 114.9 L44.0 116.4 L43.8 120.0 L41.8 121.6 L41.9 125.0 L39.5 126.9 L39.9 130.0 L37.5 132.2 L38.0 134.8 L36.8 137.6 M45.7 111.6 L36.1 111.6 L36.1 104.9 M56.3 86.4 L32.8 80.4 M58.7 106.3 L45.7 111.6 M29.1 64.7 L29.6 68.4 L29.8 70.3 L31.0 73.9 L30.4 76.1 L31.8 79.0 M-2.2 86.7 L8.7 99.0 M61.0 144.5 L37.3 138.2 M61.0 144.5 L61.0 164.4 L71.3 164.4 M66.0 170.9 L66.0 164.4 L71.3 164.4 M66.0 170.9 L42.2 169.2 M37.3 138.2 L38.2 165.6 M42.2 169.2 L38.2 165.6 M36.8 137.6 L37.3 138.2 M61.9 143.3 L61.0 144.5 M75.0 164.0 L71.3 164.4 M65.4 181.2 L66.0 170.9 M87.3 201.2 L87.7 199.0 L90.3 196.5 L91.3 195.2 L93.2 192.1 L95.0 191.1 L95.9 187.7 L98.5 186.7 L99.5 184.0 M37.5 194.6 L42.2 169.2 M12.3 173.5 L38.2 173.5 L38.2 165.6 M430.8 80.6 L431.7 83.6 L433.9 84.1 L436.0 86.8 L437.0 88.0 L439.9 89.7 L440.9 91.8 M430.2 81.3 L435.1 56.9 M440.9 91.8 L461.8 85.8 M436.9 55.5 L435.1 56.9 M436.9 55.5 L454.7 65.9 M455.4 65.2 L456.2 68.3 L458.0 69.0 L460.3 71.6 L460.8 73.5 L462.8 75.5 M461.8 85.8 L462.8 75.5 M433.5 107.9 L435.7 105.5 L435.6 103.7 L436.8 100.5 L438.1 99.2 L438.0 95.9 L440.3 94.1 L440.9 91.8 M412.9 86.3 L414.9 84.4 L418.2 84.8 L419.8 83.8 L423.2 83.1 L425.0 83.3 L427.8 81.4 L430.2 81.3 M413.8 57.5 L416.5 59.0 L418.9 57.4 L422.0 58.8 L424.0 57.5 L427.6 57.9 L429.3 57.9 L432.8 57.0 L435.1 56.9 M461.8 85.8 L461.8 85.8 M438.0 49.1 L436.9 55.5 M470.1 40.6 L454.7 65.9 M483.7 62.0 L481.9 62.3 L480.1 65.1 L477.1 65.1 L476.1 67.4 L472.8 68.5 L471.6 69.5 L469.0 71.8 L466.8 71.9 L465.3 74.7 L462.8 75.5 M177.4 163.7 L184.8 169.9 M214.1 160.4 L207.4 167.0 M184.8 169.9 L207.4 169.9 L207.4 167.0 M230.0 166.4 L231.6 178.8 M208.3 166.7 L207.7 170.1 L207.6 171.7 L208.3 175.1 L207.0 177.2 L208.5 179.8 L207.1 182.8 L207.2 185.1 M207.2 185.1 L207.2 196.4 L216.5 196.4 M231.6 178.8 L216.5 196.4 M153.5 309.0 L153.5 287.9 L178.9 287.9 M141.0 292.4 L157.9 278.6 M178.9 287.9 L157.9 278.6 M163.9 317.1 L185.8 308.1 M178.9 287.9 L182.0 287.9 M185.8 308.1 L182.0 287.9 M186.4 333.0 L186.5 333.0 L186.5 309.1 M185.8 308.1 L186.5 309.1 M216.6 328.0 L215.1 324.9 L216.5 322.5 L214.8 320.0 L215.9 316.9 L215.4 314.6 M186.4 310.3 L189.0 309.1 L192.1 310.6 L194.2 309.9 L197.7 310.7 L199.5 310.9 L203.1 310.7 L205.0 311.8 L208.4 310.9 L210.6 312.7 L213.4 312.6 M215.4 314.6 L213.4 312.6 M318.5 290.5 L320.8 293.4 L323.6 293.2 L326.2 295.7 L329.0 295.8 M318.3 291.5 L311.5 291.5 L311.5 274.6 M337.0 264.8 L311.5 274.6 M337.0 264.8 L336.8 290.0 M336.8 290.0 L329.0 295.8 M305.8 304.9 L318.3 304.9 L318.3 291.5 M332.7 314.5 L332.7 295.8 L329.0 295.8 M310.7 274.3 L311.5 274.6 M291.8 305.4 L289.9 302.5 L290.5 300.1 L288.2 297.8 L288.9 294.7 L287.8 292.5 M339.0 262.6 L337.0 264.8 M357.2 294.1 L357.2 290.0 L336.8 290.0 M216.1 -13.2 L194.2 -9.1 M209.4 12.9 L197.1 4.7 M197.1 4.7 L194.2 4.7 L194.2 -9.1 M191.8 -11.9 L194.2 -9.1 M114.1 83.9 L117.2 85.6 L118.6 86.3 L121.9 86.7 L123.4 88.8 L126.2 88.3 L128.6 90.6 L130.3 90.8 L133.5 91.8 L134.8 93.6 L137.9 93.2 L140.0 94.8 M116.8 113.5 L140.5 101.8 M140.0 94.8 L140.5 101.8 M143.2 133.4 L143.0 130.4 L145.7 128.2 L145.7 125.9 L147.9 123.0 L148.5 121.3 L150.0 118.0 L151.3 116.6 L152.9 113.9 M140.9 101.9 L141.6 104.4 L145.0 105.7 L146.0 108.4 L149.5 109.2 L150.5 112.2 L152.9 113.9 M174.2 131.5 L163.3 113.5 M152.9 113.9 L163.3 113.5 M194.6 114.3 L185.7 101.2 M185.7 101.2 L167.2 101.2 L167.2 109.3 M163.3 113.5 L167.2 109.3 M137.7 38.1 L141.6 34.3 M137.7 38.1 L141.1 38.1 L141.1 58.3 M165.0 35.9 L162.0 37.0 L159.5 35.2 L157.3 36.2 L154.0 35.1 L152.3 34.9 L148.9 35.3 L147.0 33.9 L144.1 35.0 L141.6 34.3 M165.2 36.8 L163.7 39.2 L165.3 41.5 L164.2 44.6 L164.8 46.3 L165.0 49.8 L164.2 51.5 L165.5 54.6 L164.1 57.0 L164.8 59.5 M164.5 58.7 L162.7 59.2 L159.1 58.9 L157.3 58.3 L154.0 59.3 L151.7 57.7 L149.1 59.1 L146.1 57.5 L144.2 58.5 L141.1 58.3 M140.0 94.8 L140.0 83.8 L145.0 83.8 M167.2 109.3 L161.4 109.3 L161.4 79.0 M161.4 79.0 L145.0 83.8 M115.7 66.1 L118.7 67.7 L120.7 66.6 L124.1 67.4 L125.8 67.3 L129.3 67.1 L131.1 68.1 L134.1 67.4 M145.0 83.8 L134.1 67.4 M112.4 40.9 L112.4 38.1 L137.7 38.1 M135.1 68.1 L135.4 65.0 L138.3 63.1 L138.4 60.2 L141.1 58.3 M192.6 36.9 L192.6 35.0 L201.6 35.0 M192.6 36.9 L183.9 33.0 M197.1 4.7 L197.1 10.4 L187.0 10.4 M183.0 32.9 L184.9 30.3 L183.9 28.2 L185.2 25.0 L185.2 23.4 L184.9 20.0 L186.4 18.1 L185.2 15.3 L186.9 12.6 L187.0 10.4 M664.9 238.9 L665.4 238.9 L665.4 216.2 M687.1 236.3 L681.9 236.3 L681.9 212.7 M681.9 212.7 L665.4 216.2 M641.8 185.7 L660.3 194.9 M644.6 214.3 L656.5 210.7 M660.3 194.9 L656.5 210.7 M665.4 216.2 L656.5 216.2 L656.5 210.7 M760.7 107.8 L756.7 117.4 M760.7 107.8 L756.2 90.7 M756.7 117.4 L739.9 117.4 L739.9 119.6 M728.3 110.1 L730.6 110.6 L732.6 113.4 L733.7 114.6 L736.7 116.1 L737.3 118.6 L739.9 119.6 M729.0 109.2 L729.0 89.5 L738.0 89.5 M738.0 89.5 L742.1 86.7 M742.1 86.7 L742.1 89.1 L753.9 89.1 M756.2 90.7 L753.9 89.1 M789.3 109.8 L760.7 107.8 M784.9 131.0 L784.9 131.2 L765.0 131.2 M765.0 131.2 L765.0 117.4 L756.7 117.4 M788.6 84.6 L756.2 90.7 M712.0 81.5 L738.0 81.5 L738.0 89.5 M713.4 112.3 L716.9 111.8 L718.5 111.6 L721.6 110.0 L723.9 110.8 L726.2 108.6 L729.0 109.2 M738.0 63.6 L742.1 86.7 M765.0 63.7 L753.9 63.7 L753.9 89.1 M758.9 156.1 L757.6 153.2 L759.2 150.6 L758.1 148.6 L758.9 145.3 L759.1 143.7 L758.6 140.7 M758.5 155.4 L755.1 156.9 L752.8 155.9 L749.8 157.6 L747.1 156.2 L744.5 157.9 L741.4 156.5 L738.8 157.4 M759.1 140.3 L755.5 140.5 L753.7 138.6 L750.4 139.3 L748.2 137.0 L745.4 137.6 L742.7 135.3 L740.5 135.6 L737.7 134.1 M738.8 157.4 L736.4 155.4 M736.4 155.4 L728.7 143.5 M728.7 143.5 L737.7 143.5 L737.7 134.1 M763.7 161.4 L758.1 155.8 M765.0 131.2 L758.6 140.7 M738.0 189.0 L735.0 187.0 M735.0 187.0 L735.0 157.4 L738.8 157.4 M739.9 119.6 L737.7 134.1 M735.4 187.4 L731.7 187.2 L729.9 186.5 L726.3 187.0 L724.0 185.8 M723.4 186.0 L723.3 183.0 L720.8 181.8 L720.1 178.3 L718.5 177.2 L716.8 173.9 L716.0 172.4 L713.7 170.1 M713.7 170.1 L736.4 155.4 M715.8 141.5 L728.7 143.5 M713.7 170.1 L705.0 163.3 M298.7 686.5 L298.7 709.5 L319.7 709.5 M285.3 706.4 L288.3 705.8 L290.6 708.1 L292.7 707.8 L295.8 709.2 L297.3 710.0 L300.7 710.2 L302.3 712.2 L305.3 711.5 L307.6 713.8 L309.7 713.4 L312.8 715.0 L314.9 715.2 M319.7 709.5 L314.9 715.2 M273.6 816.8 L285.3 812.5 M285.3 812.5 L290.7 818.3 M137.5 763.9 L159.7 765.0 M133.6 784.8 L134.1 785.3 M133.6 784.5 L137.3 784.8 L139.1 784.0 L142.9 783.7 L144.8 783.7 L148.4 782.6 L150.5 782.9 L153.5 781.5 M153.5 781.5 L159.7 765.0 M191.2 759.6 L191.2 763.0 L181.3 763.0 M160.6 742.4 L160.6 757.4 L167.5 757.4 M181.3 763.0 L181.3 757.4 L167.5 757.4 M159.7 765.0 L167.5 757.4 M109.5 813.3 L110.4 814.2 M134.1 785.3 L134.1 804.1 L134.8 804.1 M134.8 804.1 L134.8 814.2 L110.4 814.2 M110.2 814.6 L110.0 816.6 L110.0 820.4 L109.5 822.3 L110.4 826.1 L110.1 828.5 M213.4 808.8 L213.4 816.9 L188.4 816.9 M239.9 815.7 L232.9 815.7 L232.9 810.4 M216.6 804.2 L213.4 808.8 M118.4 196.0 L118.4 215.1 L117.5 215.1 M134.6 184.7 L135.5 186.3 L136.8 189.7 L136.9 191.6 L139.0 194.5 L138.6 197.0 L141.1 199.1 L140.7 202.2 L143.0 203.9 L143.1 207.3 L144.6 208.8 L145.7 212.2 L146.4 214.4 M146.4 214.4 L139.2 217.3 M139.1 216.3 L136.9 217.1 L133.4 216.1 L131.6 216.3 L127.9 216.1 L126.1 215.6 L122.5 216.3 L120.5 215.1 L117.5 215.1 M87.3 208.8 L90.3 208.4 L92.3 210.9 L94.5 210.6 L97.4 212.4 L98.8 213.1 L102.2 213.7 L103.5 215.7 L106.5 215.3 L108.6 217.7 L110.6 217.5 L113.4 218.6 M117.5 215.1 L113.4 218.6 M634.1 751.8 L630.9 751.4 L629.2 753.6 L625.7 753.6 L624.3 755.4 L620.7 756.2 L619.3 757.3 L616.0 759.0 L614.0 760.0 M633.8 751.1 L634.5 742.0 M634.5 742.0 L634.5 733.6 L608.9 733.6 M614.0 760.0 L603.9 756.7 M603.9 756.7 L605.5 735.4 M608.9 733.6 L605.5 735.4 M664.0 760.5 L664.0 759.1 L642.0 759.1 M642.0 759.1 L642.0 751.1 L633.8 751.1 M635.0 740.9 L634.5 742.0 M622.1 712.2 L619.5 713.7 L619.7 716.0 L617.6 718.8 L616.6 720.1 L615.9 723.4 L613.6 724.5 L613.7 727.4 L611.1 729.4 L610.9 731.3 L608.9 733.6 M636.8 713.3 L634.7 711.3 M591.1 727.4 L594.3 727.5 L596.1 730.3 L598.6 730.4 L601.2 732.9 L603.0 733.3 L605.5 735.4 M594.9 760.0 L603.9 756.7 M514.9 741.4 L515.9 740.1 M514.9 741.4 L512.6 761.9 M515.9 740.1 L533.0 736.2 M533.0 736.2 L538.6 741.0 M539.1 741.2 L537.3 743.4 L538.6 745.9 L536.9 748.8 L537.4 750.6 L537.0 754.0 L536.1 755.7 L537.1 758.8 L535.2 761.0 L535.6 763.6 M512.6 761.9 L513.2 762.7 M513.1 761.7 L516.2 763.0 L517.8 763.0 L521.2 762.9 L523.0 764.4 L525.9 763.2 L528.4 765.1 L530.5 764.3 L533.2 765.5 M533.2 765.5 L535.6 763.6 M489.2 734.3 L491.1 734.3 L494.5 735.7 L496.1 736.2 L499.8 736.8 L501.4 738.2 L504.8 737.7 L506.8 739.9 L509.8 739.0 L512.4 741.1 L514.9 741.4 M512.5 717.9 L512.5 740.1 L515.9 740.1 M492.0 758.5 L492.0 761.9 L512.6 761.9 M533.6 713.7 L534.7 717.2 L533.4 719.4 L534.8 722.6 L533.1 725.2 L534.4 727.9 L532.5 730.8 L533.7 733.2 L533.0 736.2 M563.8 737.3 L538.6 741.0 M556.2 763.0 L535.6 763.6 M507.4 786.0 L513.2 786.0 L513.2 762.7 M535.3 781.3 L535.9 777.9 L534.9 776.3 L534.2 772.8 L534.5 770.9 L532.8 768.0 L533.2 765.5 M604.0 806.9 L605.9 804.7 L604.8 801.4 L606.6 799.0 L605.2 796.0 L606.9 793.1 L606.7 790.4 M604.2 808.3 L606.6 808.2 L609.5 810.4 L611.4 810.7 L614.7 812.3 L616.3 813.1 L619.3 814.5 M606.7 790.4 L620.6 784.9 M620.6 784.9 L635.7 790.7 M619.3 814.5 L638.2 806.4 M638.2 806.4 L636.2 806.4 L636.2 791.2 M636.2 791.2 L635.7 790.7 M591.2 815.4 L604.4 807.2 M586.3 780.3 L606.7 790.4 M613.0 760.5 L614.5 762.1 L615.0 765.5 L615.2 767.2 L616.9 770.2 L616.1 772.6 L618.3 774.8 L617.7 778.0 L619.2 779.5 L619.6 783.0 L620.6 784.9 M642.0 759.1 L642.0 790.7 L635.7 790.7 M638.6 806.9 L638.2 806.4 M664.4 781.5 L636.2 791.2 M459.1 510.9 L440.1 521.3 M460.1 541.2 L437.0 535.2 M440.1 521.3 L440.1 535.2 L437.0 535.2 M442.8 566.6 L434.5 537.3 M410.8 559.8 L411.8 558.5 L413.5 555.4 L415.4 554.4 L416.2 551.1 L418.8 550.1 L419.0 547.0 L421.9 545.5 L422.0 543.1 L424.7 540.8 L425.4 538.6 M425.4 538.6 L425.4 537.3 L434.5 537.3 M437.0 535.2 L434.5 537.3 M412.9 442.0 L412.9 464.6 L413.8 464.6 M433.8 461.2 L417.5 468.8 M413.8 464.6 L417.5 468.8 M390.5 445.9 L391.4 448.1 L390.5 451.8 L391.5 453.8 L391.0 457.6 L391.5 459.6 L390.8 462.9 M414.0 465.6 L410.9 464.1 L409.1 464.7 L405.6 464.4 L404.0 463.7 L400.7 464.6 L398.5 462.9 L395.9 464.3 L393.0 462.7 L390.8 462.9 M367.9 462.9 L367.9 471.3 L384.4 471.3 M362.6 493.5 L365.2 491.3 L368.3 492.2 L370.3 490.2 L373.8 490.7 L375.6 489.4 L379.3 489.2 L381.6 489.0 M381.6 489.0 L385.8 482.9 M385.8 482.9 L385.8 471.3 L384.4 471.3 M384.4 471.3 L390.8 462.9 M389.0 707.7 L383.6 711.9 M383.6 711.9 L383.6 727.8 L381.4 727.8 M405.8 740.1 L405.8 739.1 L395.9 739.1 M381.4 727.8 L395.9 739.1 M387.3 817.5 L378.6 810.9 M359.0 817.0 L367.0 817.0 L367.0 812.5 M367.5 812.7 L369.5 812.6 L373.2 811.3 L375.3 811.4 L378.6 810.9 M764.1 725.9 L759.6 730.9 M764.1 725.9 L784.4 725.9 L784.4 742.8 M759.6 730.9 L763.4 754.7 M763.4 754.7 L773.4 760.2 M783.2 742.7 L784.4 745.1 L782.9 748.1 L783.3 749.9 L783.1 753.4 L783.0 755.5 M773.4 760.2 L778.4 758.7 M783.0 755.5 L778.4 758.7 M766.4 718.1 L764.1 718.1 L764.1 725.9 M740.2 704.3 L738.5 707.6 L736.2 708.3 L735.1 711.6 L732.2 712.4 L731.5 715.3 L728.7 716.7 M735.7 735.1 L759.6 735.1 L759.6 730.9 M791.8 732.7 L791.4 735.2 L788.6 737.1 L787.7 738.4 L785.7 741.2 L784.4 742.8 M743.1 758.8 L763.4 754.7 M766.4 780.1 L773.4 760.2 M807.5 760.5 L807.5 755.5 L783.0 755.5 M794.0 787.3 L794.0 758.7 L778.4 758.7 M692.2 594.7 L693.9 594.2 L697.1 592.6 L699.4 593.0 L701.9 590.8 L704.8 591.5 L706.7 589.2 L710.1 589.5 L711.6 587.7 L714.6 586.9 M691.7 594.6 L691.7 610.1 L694.7 610.1 M694.2 611.1 L697.7 610.6 L699.8 613.0 L703.3 612.8 L705.4 615.1 M705.4 615.1 L705.4 606.1 L716.9 606.1 M714.1 586.6 L715.8 589.9 L714.9 592.2 L716.8 595.1 L715.5 598.0 L717.3 600.4 L716.1 603.7 L716.9 606.1 M678.5 585.9 L691.7 585.9 L691.7 594.6 M715.9 584.1 L714.6 586.9 M681.3 617.0 L683.5 617.0 L685.4 614.4 L688.5 614.6 L689.7 612.4 L693.1 611.6 L694.7 610.1 M730.8 612.6 L727.3 610.8 L725.5 609.8 L722.1 607.9 L720.2 607.2 L716.9 606.1 M680.4 636.5 L684.2 639.1 M705.4 615.1 L706.9 615.1 L706.9 634.7 M684.2 639.1 L684.2 634.7 L706.9 634.7 M637.4 571.8 L605.4 565.0 M618.7 596.5 L608.5 593.2 M608.5 593.2 L605.4 565.0 M584.9 562.0 L591.8 564.5 M611.6 542.5 L611.0 544.0 L610.5 547.4 L608.6 548.9 L609.2 552.0 L606.8 554.1 L607.2 556.4 L605.4 559.4 L604.9 560.9 L604.1 563.9 M591.8 564.5 L604.1 564.5 L604.1 563.9 M605.4 565.0 L604.1 563.9 M566.2 585.7 L567.1 587.3 L567.7 590.6 L567.1 592.5 L568.9 595.2 L567.8 597.9 L569.4 599.7 L569.3 603.1 L569.3 604.7 L570.8 607.7 L570.1 610.0 M566.9 585.2 L589.4 588.0 M588.7 588.7 L590.3 590.0 L591.6 593.2 L591.9 595.0 L594.4 597.4 L595.1 599.7 M577.6 610.2 L592.4 604.3 M577.6 610.2 L570.1 610.0 M592.4 604.3 L595.1 599.7 M561.6 576.7 L563.9 578.1 L564.2 581.4 L565.3 582.7 L566.9 585.2 M563.9 614.7 L570.1 610.0 M591.8 564.5 L589.4 564.5 L589.4 588.0 M608.5 593.2 L595.1 593.2 L595.1 599.7 M593.2 636.3 L593.2 610.2 L577.6 610.2 M608.9 624.1 L608.9 604.3 L592.4 604.3 M136.5 180.0 L139.0 182.5 L140.7 182.9 L144.0 184.4 L145.1 186.0 L148.5 186.4 L150.0 188.9 L152.7 188.7 L155.0 191.3 L156.9 191.6 L159.9 193.4 L161.2 194.7 L164.6 195.6 L166.3 197.1 M146.4 214.4 L157.2 215.6 M157.1 215.2 L159.8 214.4 L160.6 211.2 L163.6 210.2 L164.1 207.2 L166.4 205.3 M166.4 205.3 L166.3 197.1 M157.6 162.2 L159.8 164.6 L159.0 167.5 L161.1 169.3 L160.9 172.8 L162.2 174.3 L162.8 177.8 L163.0 179.5 L164.8 182.5 L164.0 185.0 L166.2 187.2 L165.6 190.4 L167.3 192.0 L167.2 195.1 M184.8 169.9 L182.9 183.4 M167.2 195.1 L182.9 195.1 L182.9 183.4 M167.2 195.1 L166.3 197.1 M207.2 185.1 L193.2 192.5 M193.2 192.5 L182.9 192.5 L182.9 183.4 M231.6 178.8 L237.6 186.4 M216.5 196.4 L218.3 206.7 M218.3 206.7 L236.9 206.7 L236.9 207.6 M237.6 186.4 L237.6 207.6 L236.9 207.6 M250.2 161.1 L258.6 184.9 M237.6 186.4 L258.6 184.9 M282.8 209.1 L261.2 209.1 L261.2 203.4 M280.4 179.4 L277.5 179.3 L276.2 181.6 L272.9 182.2 L271.6 183.4 L268.6 185.1 L266.7 185.3 L264.5 187.9 L262.1 188.5 M261.5 203.8 L260.5 200.0 L261.7 197.8 L261.2 194.1 L262.8 191.8 L262.1 188.5 M258.6 184.9 L262.1 188.5 M207.3 282.5 L207.3 312.6 L213.4 312.6 M207.3 282.5 L230.7 281.0 M214.6 314.2 L217.7 312.7 L219.4 312.3 L221.6 309.8 L224.3 309.9 L225.6 307.5 L228.9 306.9 L230.2 305.9 L232.9 303.8 L235.0 303.2 M230.7 281.0 L230.7 303.2 L235.0 303.2 M230.6 331.0 L233.1 329.9 L233.2 327.3 L235.8 325.2 L236.4 323.7 L238.1 320.6 L239.9 319.7 L240.2 316.5 L243.0 315.1 L243.2 313.0 L245.3 310.4 L246.9 309.0 M234.5 303.5 L237.9 303.7 L239.4 306.1 L242.5 305.7 L244.6 308.3 L246.9 309.0 M258.5 313.7 L255.4 309.8 M246.9 309.0 L255.4 309.8 M275.6 283.4 L274.2 283.6 M274.2 283.6 L259.1 298.0 M254.5 309.9 L256.9 306.6 L256.9 304.1 L259.1 300.9 L259.1 298.0 M167.4 -4.5 L167.4 5.7 L168.3 5.7 M166.9 -3.6 L165.6 -6.8 L164.0 -7.7 L161.7 -10.3 L161.1 -12.2 L158.1 -13.7 L157.3 -16.1 M157.3 -16.1 L139.8 -10.2 M164.9 12.3 L168.3 5.7 M164.9 12.3 L138.1 12.4 M139.8 -10.2 L134.9 -10.2 L134.9 8.5 M134.9 8.5 L138.1 12.4 M191.8 -11.9 L167.4 -4.5 M187.4 10.3 L183.7 10.4 L182.0 9.0 L178.5 9.4 L176.5 7.3 L173.5 8.1 L171.0 5.7 L168.3 5.7 M184.3 32.6 L181.1 33.8 L178.8 32.3 L176.3 33.9 L173.3 32.5 L171.4 33.5 L168.4 33.1 M168.4 33.1 L164.9 12.3 M164.6 36.6 L168.4 33.1 M141.6 34.3 L138.1 12.4 M111.7 12.4 L134.9 8.5 M167.4 63.1 L167.1 66.9 L165.6 68.7 L165.2 72.4 L163.3 74.1 L163.0 77.5 M166.9 63.1 L170.3 62.8 L172.2 64.0 L174.9 62.5 L177.7 64.0 L179.5 63.1 L182.9 63.4 L184.5 63.9 L187.4 63.3 M163.3 76.5 L165.4 79.1 L167.2 79.4 L170.2 81.2 L171.3 82.5 L174.6 83.0 L175.9 85.5 L178.6 85.4 L180.8 87.9 L182.3 88.5 L185.5 89.7 L186.6 91.8 L189.1 92.8 M187.4 63.3 L194.2 69.1 M194.2 69.1 L193.2 89.4 M189.1 92.8 L193.2 89.4 M164.8 59.5 L167.4 63.5 M161.4 79.0 L163.0 77.5 M193.2 37.2 L191.1 39.4 L192.1 42.0 L190.2 45.0 L190.5 47.0 L189.5 50.5 L188.9 52.1 L189.1 55.7 L187.4 57.6 L188.4 60.7 L187.4 63.3 M185.7 101.2 L189.1 101.2 L189.1 92.8 M205.8 65.7 L194.2 69.1 M218.2 94.5 L193.2 89.4 M647.7 163.7 L661.7 163.2 M660.3 194.9 L668.4 194.9 L668.4 189.6 M668.4 189.6 L661.7 163.2 M669.8 141.3 L663.6 141.3 L663.6 162.0 M694.5 165.5 L692.2 167.4 M692.2 167.4 L663.6 167.4 L663.6 162.0 M661.7 163.2 L663.6 162.0 M685.7 207.4 L683.6 193.4 M685.7 207.4 L708.8 213.2 M707.8 213.2 L709.6 210.3 L709.5 208.6 L710.2 205.2 L711.5 203.7 L711.0 200.4 L713.1 198.4 L712.3 196.0 L714.0 193.5 M714.0 193.5 L689.9 186.4 M689.9 186.4 L683.6 193.4 M681.9 212.7 L685.7 207.4 M668.4 189.6 L683.6 193.4 M710.3 215.8 L708.8 213.2 M724.0 185.8 L714.0 193.5 M692.5 167.8 L690.8 169.8 L691.9 173.0 L690.1 175.4 L691.4 178.2 L689.7 181.2 L690.8 183.4 L689.9 186.4 M282.9 711.3 L283.8 712.7 L285.2 715.8 L284.8 717.9 L287.1 720.0 L286.7 723.1 L288.0 724.5 L289.0 727.8 L288.7 729.7 L289.8 732.3 M314.9 715.2 L310.6 732.4 M310.6 732.4 L289.8 732.4 L289.8 732.3 M262.6 734.0 L284.8 738.3 M284.8 738.3 L289.8 732.3 M288.6 798.6 L297.3 798.6 L297.3 788.3 M288.6 798.6 L258.1 785.4 M297.3 788.3 L297.3 764.8 L287.1 764.8 M259.2 775.1 L273.6 764.1 M259.2 775.1 L256.9 782.0 M273.6 764.1 L283.5 762.3 M256.9 782.0 L258.1 785.4 M283.5 762.3 L287.1 764.8 M252.9 809.5 L258.1 785.4 M285.1 812.1 L286.8 810.2 L286.3 806.5 L287.8 804.5 L287.0 801.0 L288.6 798.6 M255.0 742.9 L257.3 745.4 L257.9 747.2 L260.9 748.6 L261.4 751.4 L263.9 752.1 L265.3 755.2 L266.7 756.1 L269.1 758.5 L269.5 760.6 L272.5 761.7 L273.6 764.1 M236.4 751.4 L259.2 775.1 M242.7 782.8 L242.7 782.0 L256.9 782.0 M284.8 738.3 L284.8 762.3 L283.5 762.3 M165.2 803.0 L165.2 795.1 L166.5 795.1 M165.5 802.3 L167.6 804.7 L170.2 804.1 L173.0 806.4 L174.9 806.3 L178.2 807.9 L179.8 808.6 L183.4 809.1 L185.6 809.9 M166.5 795.1 L166.5 784.5 L180.6 784.5 M185.6 809.9 L195.2 809.9 L195.2 793.9 M195.2 793.9 L180.6 784.5 M153.5 781.5 L166.5 795.1 M181.3 763.0 L180.6 784.5 M211.6 793.2 L211.6 793.9 L195.2 793.9 M188.4 816.9 L185.6 809.9 M156.0 814.3 L147.3 814.3 L147.3 813.7 M134.8 804.1 L147.3 804.1 L147.3 813.7 M165.9 802.9 L163.3 805.9 L161.9 807.2 L159.2 810.0 L157.8 811.4 L156.0 814.3 M83.9 238.5 L91.2 241.0 M113.4 218.6 L112.1 225.7 M91.2 241.0 L112.1 225.7 M87.2 273.6 L89.7 272.8 L90.2 269.8 L93.2 268.4 L93.5 266.2 L96.1 263.9 L97.3 262.7 L98.8 259.5 L100.4 257.9 M91.8 240.2 L92.6 243.8 L93.9 245.2 L95.2 248.8 L96.0 250.4 L97.9 253.5 L98.2 255.5 L100.4 257.9 M444.0 487.2 L435.3 490.3 M440.1 521.3 L434.6 514.0 M434.3 513.6 L435.7 511.6 L434.3 508.7 L435.9 505.9 L434.6 503.8 L435.8 500.4 L435.1 498.6 L435.4 495.1 L435.9 493.3 L435.3 490.3 M417.5 468.8 L416.7 468.8 L416.7 486.6 M435.3 490.3 L435.3 486.6 L416.7 486.6 M385.8 482.9 L415.4 482.9 L415.4 487.7 M416.7 486.6 L415.4 487.7 M413.7 529.5 L413.7 510.8 L416.5 510.8 M413.7 529.5 L413.7 529.5 L396.5 529.5 M395.7 530.0 L395.7 526.6 L393.6 525.2 L393.1 521.6 L391.4 520.3 L390.2 516.9 L388.6 515.2 M411.7 503.7 L411.7 510.8 L416.5 510.8 M411.7 503.7 L411.7 514.0 L389.0 514.0 M388.6 515.2 L389.0 514.0 M425.4 538.6 L413.7 529.5 M434.6 514.0 L416.5 514.0 L416.5 510.8 M388.8 551.0 L396.5 529.5 M361.3 523.7 L388.6 515.2 M415.9 487.3 L415.2 490.9 L414.3 492.6 L414.3 496.2 L412.5 498.0 L413.1 501.3 L411.7 503.7 M381.6 489.0 L389.0 514.0 M381.4 727.8 L369.0 733.3 M395.9 739.1 L378.9 760.0 M366.4 738.2 L369.0 733.3 M367.1 738.4 L365.6 741.0 L367.1 743.4 L365.9 746.6 L366.8 748.4 L366.6 752.0 L366.5 753.8 L367.2 756.8 M378.5 760.3 L376.5 758.3 L372.7 758.9 L370.5 757.3 L367.2 756.8 M411.1 762.8 L411.1 771.8 L388.2 771.8 M378.9 760.0 L378.9 771.8 L388.2 771.8 M413.1 795.7 L386.0 783.5 M388.2 771.8 L386.0 783.5 M378.1 810.6 L379.9 808.5 L378.7 805.8 L380.4 802.9 L379.7 801.0 L380.4 797.5 L381.0 795.9 L380.5 792.4 L382.1 790.5 L381.4 787.6 M386.0 783.5 L381.4 787.6 M734.8 631.1 L728.6 631.1 L728.6 639.4 M706.9 634.7 L712.8 638.8 M728.6 639.4 L712.8 638.8 M739.4 659.0 L736.3 656.6 M728.0 640.1 L729.4 641.5 L730.6 644.9 L731.1 646.6 L733.2 649.5 L733.1 651.8 L735.7 654.0 L736.3 656.6 M656.9 657.5 L659.5 658.2 L660.8 661.4 L662.5 662.2 L664.8 664.9 L665.6 666.5 L668.1 668.3 M684.2 639.1 L686.3 639.1 L686.3 665.3 M686.3 665.3 L668.1 668.3 M642.5 683.6 L661.8 683.1 M667.0 667.9 L667.5 670.7 L665.1 673.3 L665.1 675.3 L663.6 678.6 L662.6 680.1 L661.8 683.1 M664.5 714.1 L664.5 693.0 L667.8 693.0 M661.3 682.9 L664.2 685.5 L664.5 687.8 L667.3 690.2 L667.8 693.0 M274.2 283.6 L253.7 270.5 M281.6 265.5 L262.7 250.7 M262.7 250.7 L253.7 270.5 M259.1 298.0 L241.4 275.4 M253.7 270.5 L241.4 270.5 L241.4 275.4 M230.7 281.0 L230.7 275.3 L236.4 275.3 M241.4 275.4 L236.4 275.3 M261.2 203.4 L254.0 210.2 M236.9 207.6 L238.4 208.5 M254.0 210.2 L238.4 208.5 M281.3 232.9 L279.9 234.0 L276.7 235.1 L274.7 234.8 L272.4 237.0 L269.5 236.2 L267.9 238.1 L264.5 238.1 L263.0 238.9 L260.1 239.7 M253.8 209.8 L255.3 212.9 L254.3 215.2 L256.2 217.3 L255.5 220.5 L256.4 222.1 L257.2 225.4 L256.7 227.3 L258.6 229.9 L257.5 232.6 L259.4 234.4 L259.0 237.8 L260.1 239.7 M262.7 250.7 L260.1 239.7 M260.1 239.7 L260.1 239.7 M182.0 287.9 L182.3 287.5 M207.3 282.5 L206.8 282.2 M206.8 282.2 L182.3 287.5 M181.1 261.2 L182.4 259.9 L184.9 257.4 L186.9 256.8 L188.6 254.1 M179.5 261.6 L180.8 263.4 L180.5 267.0 L180.4 268.7 L181.4 272.1 L180.4 274.2 L182.0 277.0 L180.7 279.9 L182.2 281.9 L181.5 285.3 L182.3 287.5 M206.2 282.0 L207.7 279.5 L206.0 277.0 L207.3 273.8 L206.2 271.9 L206.8 268.3 L206.0 266.1 M188.6 254.1 L206.0 254.1 L206.0 266.1 M157.2 215.6 L163.6 215.6 L163.6 233.9 M139.2 217.3 L135.4 242.3 M163.6 233.9 L163.6 242.2 L159.6 242.2 M159.4 242.8 L157.0 241.2 L154.2 242.7 L151.4 241.1 L149.2 242.4 L145.7 241.5 L143.9 242.1 L140.3 242.1 L138.5 241.7 L135.4 242.3 M157.9 278.6 L157.9 264.0 L154.2 264.0 M180.4 262.2 L177.7 260.1 L176.0 260.1 L172.6 259.2 L171.1 257.8 L167.8 258.1 L165.9 255.8 L163.3 256.4 L160.9 254.6 M160.3 254.7 L159.4 256.5 L156.9 259.4 L156.0 261.2 L154.2 264.0 M353.6 717.0 L353.6 719.7 L342.5 719.7 M353.6 717.0 L353.6 702.6 L362.8 702.6 M342.5 719.7 L329.3 706.1 M328.7 705.8 L331.1 703.9 L330.5 701.2 L332.9 698.6 L332.8 696.5 L334.2 693.2 L335.2 691.7 L335.5 688.2 L336.4 686.1 M336.9 686.1 L338.8 686.3 L342.6 686.0 L344.6 686.3 L348.2 685.2 L350.3 685.8 L353.7 684.3 L356.3 685.1 M362.8 702.6 L362.8 688.5 L358.9 688.5 M356.3 685.1 L358.9 688.5 M336.3 738.6 L338.8 736.2 L338.2 733.4 L340.5 730.7 L339.8 728.2 L341.6 725.0 L341.2 722.8 L342.5 719.7 M336.9 737.9 L340.1 739.2 L342.0 738.3 L345.6 738.7 L347.3 738.9 L350.8 738.2 L352.9 739.4 L355.9 737.9 L358.5 739.5 L360.9 738.0 L364.1 739.3 L366.4 738.2 M369.0 733.3 L369.0 717.0 L353.6 717.0 M383.6 711.9 L383.6 702.6 L362.8 702.6 M333.0 682.4 L336.4 686.1 M319.7 709.5 L319.7 706.1 L329.3 706.1 M364.7 666.0 L356.3 685.1 M389.5 687.4 L387.1 688.9 L384.0 687.6 L382.3 688.4 L378.8 688.3 L377.1 687.6 L374.0 688.8 L371.7 687.3 L369.3 688.8 L366.2 687.5 L364.5 688.3 L361.0 688.2 L358.9 688.5 M310.6 732.4 L317.3 740.0 M287.1 764.8 L311.6 755.2 M317.3 740.0 L311.6 755.2 M337.1 738.8 L335.4 741.0 M317.5 741.0 L319.4 740.1 L322.9 740.6 L324.6 741.1 L327.9 740.2 L330.1 741.8 L332.7 740.4 L335.4 741.0 M310.5 786.3 L307.7 788.7 M310.5 786.3 L314.7 786.3 L314.7 759.9 M307.7 787.5 L305.3 788.9 L302.1 787.6 L300.3 788.3 L297.3 788.3 M314.7 759.9 L311.6 755.2 M333.3 811.2 L322.9 807.3 M322.9 807.3 L305.4 807.3 L305.4 819.8 M359.0 817.0 L337.1 809.3 M337.1 809.3 L333.3 811.2 M290.7 818.3 L305.4 819.8 M307.7 788.7 L322.9 807.3 M704.3 666.0 L711.6 670.9 M704.4 666.9 L701.1 665.3 L698.5 667.0 L695.3 666.0 L692.7 668.2 L689.5 667.5 M689.5 667.5 L689.1 688.8 M712.3 670.7 L711.6 674.0 L713.9 676.0 L713.6 679.5 L716.0 681.2 L716.7 684.3 M694.5 694.9 L714.8 694.9 L714.8 686.9 M694.5 694.9 L694.5 688.8 L689.1 688.8 M716.7 684.3 L714.8 686.9 M712.2 639.1 L712.0 640.8 L711.1 644.2 L709.8 645.7 L710.1 649.0 L707.9 650.8 L708.6 653.6 L706.4 656.1 L706.7 658.1 L705.3 661.4 L704.5 662.9 L704.3 666.0 M737.0 657.3 L733.6 658.1 L732.4 659.3 L729.4 661.2 L727.4 661.4 L725.4 664.1 L722.5 664.0 L721.3 666.4 L717.9 667.1 L716.7 668.4 L713.8 670.4 L711.6 670.9 M686.3 665.3 L689.5 667.5 M667.8 693.0 L689.1 688.8 M741.0 686.6 L716.7 686.6 L716.7 684.3 M694.8 710.5 L694.8 694.9 L694.5 694.9 M718.0 714.5 L718.0 686.9 L714.8 686.9 M163.2 234.4 L166.3 233.4 L168.7 235.1 L170.9 233.9 L174.1 235.1 L175.8 234.9 L179.2 234.8 L181.0 236.0 L183.9 234.7 L186.4 235.4 M187.6 254.1 L189.4 251.2 L189.1 249.4 L189.9 245.9 L190.8 244.3 L190.4 240.9 L191.7 238.8 M159.6 242.2 L160.9 254.6 M186.4 235.4 L191.7 238.8 M166.4 205.3 L166.4 209.5 L184.9 209.5 M186.4 235.4 L184.9 209.5 M194.2 192.3 L192.8 195.7 L193.4 197.7 L192.7 201.4 L192.4 203.2 L192.7 206.5 M218.3 206.7 L211.2 213.6 M211.0 214.6 L208.3 212.1 L206.1 212.0 L203.0 209.8 L201.2 209.4 L197.6 208.1 L195.9 207.1 L192.7 206.5 M192.7 206.5 L192.7 209.5 L184.9 209.5 M214.2 255.2 L214.2 234.4 L207.4 234.4 M214.2 255.2 L232.0 258.7 M232.0 258.7 L239.5 243.1 M210.0 231.6 L207.4 234.4 M210.0 231.6 L232.0 236.3 M232.0 236.3 L239.5 236.3 L239.5 243.1 M206.0 266.1 L214.2 255.2 M191.7 238.8 L191.7 234.4 L207.4 234.4 M237.4 274.8 L235.3 272.8 L235.5 269.2 L233.7 267.5 L233.3 263.8 L232.2 262.0 L232.0 258.7 M260.1 239.7 L260.1 243.1 L239.5 243.1 M211.4 214.0 L210.0 216.0 L211.3 218.7 L209.6 221.5 L210.7 223.5 L209.7 226.9 L209.8 228.5 L210.0 231.6 M238.4 208.5 L232.0 208.5 L232.0 236.3 M119.2 238.0 L105.0 258.2 M119.5 238.5 L121.1 239.8 L124.8 240.6 L126.3 242.4 L130.1 242.7 L131.9 244.9 M131.5 245.3 L131.5 246.9 L132.0 250.4 L130.8 252.2 L132.1 255.2 L130.5 257.8 L131.8 259.9 L131.2 262.8 M120.1 266.1 L116.5 265.5 L115.1 263.4 L111.6 263.2 L110.1 260.5 L107.1 260.5 L105.0 258.2 M119.6 266.2 L119.6 264.0 L130.0 264.0 M130.0 264.0 L131.2 262.8 M112.1 225.7 L112.1 238.0 L119.2 238.0 M100.4 257.9 L105.0 258.2 M135.4 242.3 L131.9 244.9 M154.2 264.0 L131.2 262.8 M110.6 291.8 L110.5 288.3 L112.6 286.5 L112.0 283.4 L114.4 281.1 L114.0 278.7 L115.9 275.7 L116.3 274.0 L117.3 270.6 L118.7 269.1 L119.6 266.2 M138.2 291.2 L130.0 264.0 M343.9 788.6 L343.9 775.8 L334.2 775.8 M343.9 788.6 L355.9 788.6 L355.9 786.7 M334.2 775.8 L334.8 770.5 M334.8 770.5 L342.4 770.5 L342.4 758.8 M361.4 760.2 L361.8 763.9 L361.2 765.8 L362.2 769.3 L360.8 771.5 L362.2 774.6 L360.5 777.3 L361.9 779.9 L361.5 782.8 M361.2 760.7 L361.2 758.8 L342.4 758.8 M355.9 786.7 L361.5 782.8 M337.1 809.3 L343.9 809.3 L343.9 788.6 M310.0 786.1 L313.0 784.4 L315.1 784.6 L317.3 782.1 L320.3 782.5 L321.7 780.3 L325.1 779.9 L326.5 778.8 L329.6 777.1 L331.7 777.3 L334.2 775.8 M367.0 812.5 L355.9 786.7 M314.7 759.9 L334.8 770.5 M335.8 740.3 L336.9 743.8 L337.3 745.6 L339.1 748.8 L338.8 751.0 L341.1 753.7 L340.4 756.5 L342.4 758.8 M367.2 756.8 L361.2 760.7 M381.4 788.6 L378.5 786.9 L376.8 786.9 L373.3 786.4 L371.8 785.0 L368.6 785.7 L366.4 783.6 L364.0 784.4 L361.5 782.8" fill="none" stroke="#565d5e" stroke-width="1"/>
<path d="M6.3 703.6 L7.0 704.4 L8.2 704.9 L8.9 703.2 L10.7 703.2 L11.5 702.8 L12.3 702.8 L12.5 701.1 L14.1 700.6 L15.3 700.2 L16.2 700.7 L16.5 699.5 L17.5 699.0 L18.7 698.0 L20.0 699.0 L20.7 698.6 L21.6 698.5 L23.0 697.3 L24.5 698.2 L25.3 698.3 L25.9 698.9 L27.5 698.1 L28.8 699.2 L29.4 700.0 L29.1 700.8 L30.2 701.3 L30.6 702.9 L29.7 704.0 L28.2 703.8 L27.8 704.9 L29.3 705.6 L30.3 707.4 L31.1 707.8 L31.9 708.1 L33.5 707.3 L35.0 708.1 L36.0 708.8 L36.6 708.4 L37.7 707.7 L39.3 707.2 L40.8 708.1 L41.3 707.7 L41.9 707.2 L42.7 705.9 L44.1 705.5 L45.3 705.7 L46.1 705.8 L46.8 704.6 L48.7 704.6 L48.9 706.0 L48.5 706.1 L48.9 707.6 L47.8 708.6 L47.2 709.5 L45.8 710.2 L46.4 710.9 L46.4 712.0 L46.7 712.9 L46.8 714.6 L47.4 715.0 L47.7 715.6 L49.7 715.6 L49.8 717.3 L50.2 718.3 L49.7 719.3 L51.2 719.6 L51.1 721.1 L51.0 722.6 L49.8 723.5 L50.3 724.5 L51.5 724.7 L52.9 725.0 L53.8 726.4 L54.5 726.0 L55.3 725.2 L56.8 724.4 L58.4 724.6 L59.1 725.6 L60.1 724.6 L61.5 724.7 L63.3 725.1 L63.2 726.6 L64.4 726.5 L65.9 727.1 L66.8 728.3 L67.9 728.2 L68.7 727.9 L70.9 726.7 L71.0 728.4 L70.9 729.5 L72.1 729.9 L72.7 731.2 L73.3 732.8 L72.3 734.1 L73.3 734.6 L74.1 735.5 L75.0 736.7 L74.5 738.2 L75.0 738.6 L75.6 739.3 L77.2 740.1 L77.4 741.8 L77.6 742.8 L79.1 743.3 L77.6 743.2 L76.3 742.4 L75.6 741.0 L74.8 740.9 L73.6 740.9 L72.3 741.3 L70.7 740.8 L70.1 741.2 L69.4 741.4 L68.9 743.0 L67.3 743.1 L66.2 743.5 L64.8 744.3 L66.5 744.4 L67.5 745.9 L67.8 747.6 L68.2 748.0 L69.2 748.1 L70.6 748.4 L71.6 749.5 L72.0 750.6 L72.6 750.9 L73.8 750.8 L75.3 751.4 L76.1 752.6 L76.3 753.6 L77.3 753.6 L78.8 752.6 L80.5 751.9 L81.2 751.5 L81.0 750.4 L81.2 748.7 L82.6 747.7 L83.2 747.1 L83.5 746.5 L83.1 745.4 L83.3 744.0 L84.6 743.2 L85.5 743.1 L86.0 742.5 L86.7 741.2 L88.4 740.6 L89.2 741.9 L90.1 741.6 L91.3 741.8 L93.3 742.0 L93.5 743.8 L94.2 743.9 L95.3 744.2 L96.8 744.8 L97.7 745.8 L98.2 746.4 L98.8 746.8 L100.1 746.0 L101.4 746.9 L102.5 747.7 L102.5 749.0 L103.7 748.6 L105.1 749.2 L105.9 750.7 L105.5 752.1 L105.9 752.6 L107.0 753.2 L107.8 754.4 L108.0 755.8 L108.6 756.4 L109.0 756.8 L110.5 756.3 L111.4 757.0 L112.6 756.4 L113.8 756.8 L114.1 755.8 L114.0 754.2 L114.9 752.7 L115.4 752.0 L116.1 751.5 L116.4 749.6 L118.3 749.3 L119.3 749.0 L119.8 748.4 L120.5 746.9 L121.7 745.6 L123.2 745.9 L123.3 744.7 L124.2 743.6 L125.5 742.6 L126.8 742.7 L127.3 742.4 L127.9 741.3 L129.7 740.6 L130.0 742.1 L130.1 742.9 L131.0 743.8 L131.5 742.3 L133.0 741.6 L133.8 741.9 L134.1 742.5 L135.2 743.0 L136.7 743.9 L136.7 745.7 L137.4 746.3 L138.3 746.8 L139.4 747.5 L140.8 747.3 L141.7 747.4 L142.4 745.7 L143.3 746.9 L144.2 748.1 L143.8 749.5 L145.0 749.6 L146.4 750.5 L147.3 752.0 L147.6 752.9 L147.8 753.5 L149.0 754.2 L149.7 755.4 L149.4 756.8 L149.8 757.8 L150.5 758.0 L152.0 757.6 L153.6 758.2 L154.3 759.5 L155.1 759.4 L156.2 759.4 L156.9 759.3 L158.7 758.9 L158.9 758.2 L159.4 757.5 L159.2 755.6 L160.9 754.9 L161.5 754.3 L162.3 754.3 L162.2 752.7 L163.5 752.0 L164.6 751.1 L165.9 751.5 L165.8 750.4 L166.6 749.5 L167.7 748.4 L169.2 749.1 L169.8 748.9 L170.4 748.6 L171.1 747.3 L172.5 746.9 L173.8 747.2 L174.4 747.3 L175.0 746.8 L176.3 745.9 L177.8 746.2 L178.8 746.7 L179.4 746.8 L180.2 745.8 L181.7 745.5 L183.0 745.7 L183.6 746.6 L184.4 746.2 L185.7 746.1 L187.2 746.3 L188.1 747.5 L188.7 747.8 L189.6 747.7 L191.1 747.3 L192.4 748.3 L193.1 749.1 L193.5 749.5 L194.8 749.1 L196.1 749.7 L197.3 750.4 L197.5 751.7 L198.4 751.5 L199.3 751.8 L201.0 751.6 L201.7 753.3 L202.4 753.6 L202.8 754.2 L204.4 753.5 L205.5 754.6 L206.6 755.2 L206.8 756.4 L207.8 755.8 L208.9 756.0 L210.3 756.2 L211.1 757.5 L211.6 758.1 L212.3 758.0 L213.5 757.9 L215.0 758.0 L216.0 759.0 L216.7 759.2 L217.4 759.2 L218.7 758.3 L220.1 759.0 L221.1 759.4 L221.6 760.3 L222.5 759.3 L223.8 759.4 L225.2 759.2 L226.3 760.5 L226.8 759.8 L227.8 759.6 L229.2 758.6 L230.6 759.7 L231.3 759.5 L232.0 759.7 L233.2 758.2 L234.7 758.8 L235.8 758.9 L236.5 759.6 L237.3 758.2 L238.7 758.2 L240.1 758.0 L241.3 757.7 L240.3 757.7 L239.2 757.0 L237.8 756.1 L237.9 754.4 L237.4 754.0 L236.5 753.5 L234.8 754.1 L233.4 754.2 L233.2 754.6 L231.6 754.1 L231.3 752.6 L231.0 751.2 L231.6 750.1 L230.6 749.8 L229.9 748.9 L228.8 747.8 L229.5 746.2 L229.0 745.7 L228.8 744.9 L226.9 744.5 L226.5 742.7 L225.6 741.6 L224.9 742.4 L223.5 743.2 L221.7 743.5 L221.1 742.4 L220.1 743.1 L218.5 743.4 L217.2 742.4 L216.6 741.6 L216.1 741.2 L214.4 741.5 L213.4 740.3 L212.2 739.5 L211.6 738.8 L209.9 739.5 L208.6 738.7 L207.8 737.9 L207.4 737.0 L206.4 737.7 L205.0 736.8 L204.0 735.3 L203.1 734.3 L202.4 734.6 L202.1 736.4 L200.3 736.4 L199.6 735.2 L199.3 734.4 L197.2 733.7 L197.8 731.9 L199.4 731.2 L198.9 730.1 L199.9 729.0 L201.5 728.3 L202.8 728.1 L203.2 727.6 L202.7 726.1 L203.6 724.9 L204.5 724.0 L205.4 723.7 L204.9 722.6 L205.3 721.4 L206.1 720.0 L207.5 720.0 L207.8 719.4 L208.1 718.5 L208.7 717.0 L210.1 716.4 L211.2 716.3 L211.8 715.9 L212.1 714.1 L213.8 713.7 L214.9 713.1 L215.6 712.6 L216.0 710.9 L217.2 709.9 L218.5 709.9 L218.9 709.3 L219.1 708.3 L219.6 707.6 L220.0 705.8 L219.9 704.9 L219.3 704.1 L219.3 702.2 L221.0 701.6 L221.8 701.1 L222.2 700.3 L221.4 698.8 L221.1 697.1 L221.8 696.8 L221.5 695.6 L222.4 694.6 L223.2 693.3 L224.8 693.5 L225.2 692.5 L224.8 691.6 L223.7 690.1 L224.4 688.5 L224.3 688.3 L224.4 686.8 L225.8 685.6 L226.8 684.6 L227.2 683.8 L226.1 683.0 L225.4 681.4 L226.3 680.1 L226.6 679.5 L226.7 678.8 L226.5 677.5 L226.9 676.1 L227.9 675.2 L228.1 674.4 L226.6 673.5 L226.6 672.1 L225.6 672.4 L224.6 671.7 L224.3 672.9 L223.3 673.5 L222.0 674.4 L220.5 673.4 L219.9 674.0 L218.9 674.3 L217.9 675.3 L216.0 675.5 L215.2 675.9 L215.2 677.8 L213.6 678.4 L212.5 678.9 L212.1 678.5 L210.8 679.5 L209.0 679.2 L208.0 677.9 L207.4 677.5 L206.5 677.2 L206.0 676.7 L204.5 678.0 L204.3 678.9 L204.6 680.1 L204.0 681.5 L202.6 682.0 L201.6 682.3 L201.2 682.7 L201.1 684.0 L200.3 685.4 L199.0 686.1 L198.6 686.7 L198.5 687.7 L198.4 689.6 L196.9 690.2 L196.1 690.7 L195.6 691.1 L195.8 692.6 L194.5 693.8 L193.2 693.9 L192.2 693.2 L191.8 694.5 L190.2 695.0 L188.7 694.5 L188.3 693.0 L187.3 693.6 L186.6 692.8 L185.1 692.2 L185.2 690.6 L184.6 689.8 L183.9 689.3 L182.1 690.3 L180.6 689.0 L180.0 688.2 L179.7 687.4 L178.3 687.9 L177.0 686.9 L176.7 685.4 L177.2 684.4 L176.1 683.8 L176.2 682.0 L177.8 681.0 L178.1 680.4 L178.8 680.3 L179.9 678.9 L181.4 679.4 L182.5 679.5 L183.0 680.3 L184.3 679.3 L185.8 679.8 L186.9 680.2 L187.9 680.1 L187.9 679.0 L188.4 677.5 L190.0 676.9 L190.7 676.4 L191.1 675.9 L191.1 674.7 L191.6 673.3 L193.0 672.7 L193.8 672.4 L194.1 671.7 L194.3 670.2 L195.6 669.1 L196.8 669.3 L197.5 669.3 L197.8 668.2 L198.9 667.4 L200.4 667.1 L201.4 668.5 L202.0 668.2 L202.9 668.1 L203.9 667.3 L205.7 667.5 L206.6 667.2 L207.3 667.0 L207.8 665.8 L208.6 664.6 L209.4 663.7 L210.3 663.4 L209.6 662.2 L210.4 661.2 L211.4 660.1 L213.0 660.4 L213.3 659.7 L213.8 659.1 L214.5 657.5 L216.2 657.6 L217.0 657.2 L217.8 657.4 L218.6 656.8 L217.2 655.8 L216.0 654.9 L215.7 654.3 L214.5 654.2 L213.0 653.6 L212.8 652.1 L213.6 651.6 L213.7 650.9 L215.1 649.5 L216.9 650.3 L217.7 650.5 L218.5 650.8 L220.2 651.0 L221.4 652.4 L220.0 653.0 L220.7 654.2 L219.9 655.0 L221.5 655.6 L222.3 655.6 L223.0 655.3 L223.9 654.0 L225.4 653.9 L226.6 653.8 L227.3 654.0 L227.8 653.1 L228.7 652.1 L230.1 651.7 L231.3 651.9 L231.9 651.9 L232.3 650.7 L233.6 650.1 L234.8 649.6 L236.1 650.3 L236.4 649.6 L237.2 649.3 L237.8 648.0 L239.7 647.7 L240.4 647.2 L240.7 646.1 L242.0 645.3 L243.4 645.8 L244.3 646.3 L244.9 646.7 L245.8 645.7 L247.1 645.7 L248.5 645.4 L249.4 646.7 L250.1 646.2 L250.9 646.2 L253.0 645.5 L252.9 647.5 L253.3 648.3 L253.9 648.9 L255.1 649.5 L256.3 650.6 L256.7 651.9 L257.7 651.5 L259.0 651.9 L260.3 652.0 L261.6 653.1 L262.2 652.6 L263.2 652.3 L264.5 651.1 L266.1 652.0 L266.9 651.8 L267.5 651.9 L268.4 650.4 L270.1 650.8 L271.0 651.7 L271.2 652.7 L272.6 652.2 L273.9 653.1 L274.9 654.0 L275.6 654.8 L276.4 654.4 L277.6 653.9 L279.2 653.9 L280.3 654.9 L281.4 655.1 L281.5 654.0 L282.1 652.7 L283.5 652.0 L284.5 651.9 L285.0 651.5 L285.1 650.2 L286.1 649.3 L287.0 648.3 L287.9 649.0 L288.7 648.5 L290.1 648.2 L291.8 648.5 L292.7 649.4 L293.2 649.9 L294.9 649.1 L296.1 650.3 L297.1 650.9 L297.3 651.8 L298.9 651.3 L300.1 652.3 L301.2 653.4 L301.4 654.4 L302.6 654.9 L303.0 653.4 L304.4 652.7 L305.5 652.5 L306.0 652.1 L306.3 651.1 L306.3 649.5 L307.1 648.2 L308.0 647.6 L307.5 646.7 L307.5 645.4 L307.4 643.9 L308.6 642.9 L308.5 642.3 L308.3 641.4 L308.7 640.7 L307.5 640.2 L307.3 639.4 L307.4 638.6 L306.0 637.4 L306.6 635.8 L306.7 634.7 L306.8 633.9 L305.5 632.9 L305.0 631.3 L304.9 631.0 L306.1 630.9 L306.8 632.0 L308.2 630.7 L308.5 629.9 L308.8 629.0 L308.3 627.0 L309.8 626.3 L310.5 625.6 L310.9 625.2 L310.7 623.4 L312.1 622.5 L313.2 622.7 L313.7 623.0 L314.7 622.7 L316.1 622.8 L317.5 624.0 L318.3 624.5 L319.5 624.3 L320.7 625.6 L320.0 627.2 L320.0 628.1 L319.9 628.8 L321.3 629.7 L321.3 631.3 L321.2 632.6 L320.5 633.4 L321.5 634.0 L322.0 635.3 L322.4 636.8 L321.3 638.0 L321.8 638.6 L322.3 639.5 L323.3 640.9 L322.8 642.4 L322.5 643.3 L323.2 644.0 L324.4 645.0 L325.3 646.2 L324.9 647.7 L326.0 648.3 L326.9 647.1 L328.5 646.5 L327.7 647.7 L327.9 648.4 L329.1 649.4 L329.2 651.1 L329.5 652.1 L329.2 653.0 L330.4 653.3 L331.1 654.3 L332.2 655.3 L332.2 656.7 L332.8 656.9 L333.7 657.3 L335.3 658.6 L334.2 659.7 L333.9 660.0 L333.3 660.2 L332.4 661.2 L331.1 661.6 L329.7 661.1 L328.9 660.9 L328.4 661.2 L327.3 662.3 L325.8 662.1 L324.7 661.7 L324.0 661.3 L323.3 662.4 L321.9 662.7 L320.5 662.8 L319.5 661.8 L319.0 662.4 L318.0 663.1 L316.5 663.7 L315.1 663.0 L314.4 663.0 L313.7 663.6 L312.5 664.6 L310.9 664.2 L310.0 662.9 L308.3 662.9 L309.6 663.7 L310.7 664.6 L311.4 665.8 L312.0 665.0 L313.1 664.5 L314.6 663.9 L315.9 664.9 L316.5 664.7 L317.3 664.3 L318.6 663.3 L320.1 663.8 L321.0 664.0 L321.7 664.2 L322.5 663.0 L323.9 663.0 L325.3 662.9 L326.2 663.9 L326.7 663.0 L327.8 662.7 L329.2 661.8 L330.7 662.7 L331.4 662.5 L332.2 662.1 L333.3 660.9 L335.0 661.2 L336.0 661.3 L336.7 661.5 L337.4 660.2 L338.9 659.9 L340.3 660.0 L341.1 660.4 L341.7 659.6 L342.8 658.8 L344.3 658.7 L345.4 659.2 L346.0 659.0 L346.7 658.1 L348.1 657.4 L349.5 657.7 L350.3 657.9 L351.0 657.8 L351.7 656.4 L353.3 656.3 L354.5 656.4 L355.3 657.0 L355.8 655.9 L357.0 655.4 L358.4 654.8 L359.7 655.8 L360.2 655.3 L361.0 655.0 L362.1 653.7 L363.7 654.4 L364.6 654.3 L365.3 654.7 L366.0 653.2 L367.5 653.2 L368.7 653.0 L369.7 653.9 L370.1 652.8 L371.2 652.5 L372.6 651.6 L374.0 652.5 L374.6 652.3 L375.3 652.1 L376.3 650.9 L377.8 650.9 L379.0 651.2 L379.6 651.6 L380.3 650.8 L381.5 650.2 L383.0 650.3 L384.0 650.8 L384.6 651.1 L385.3 650.1 L386.6 649.9 L388.0 649.7 L389.0 650.7 L389.6 650.2 L390.4 649.9 L391.7 648.9 L393.1 649.8 L393.9 649.8 L394.5 650.1 L395.4 648.7 L396.9 648.9 L398.2 648.9 L398.9 649.8 L399.5 649.1 L400.6 648.5 L402.0 648.1 L403.2 648.9 L403.8 649.1 L404.5 648.5 L405.8 647.8 L407.3 648.2 L408.3 648.7 L408.9 648.7 L409.9 647.9 L411.3 647.5 L412.7 648.0 L413.5 648.6 L414.2 648.1 L415.3 647.4 L416.8 647.4 L418.0 648.0 L418.7 648.3 L419.5 647.6 L420.9 647.1 L422.3 647.8 L423.1 648.5 L423.7 648.4 L424.8 647.8 L426.3 647.6 L427.5 648.4 L428.2 648.8 L428.9 648.9 L430.0 647.9 L431.5 648.3 L432.7 648.6 L433.3 649.6 L434.1 648.8 L435.2 648.7 L436.8 648.2 L437.8 649.7 L438.4 649.4 L439.1 649.6 L440.8 649.0 L441.8 650.3 L442.7 650.7 L443.1 651.5 L444.3 650.7 L445.6 651.0 L447.0 651.4 L447.5 652.8 L448.2 652.6 L449.2 652.5 L450.7 652.4 L451.8 653.5 L452.4 654.1 L453.0 654.2 L454.4 653.7 L455.8 654.3 L456.5 655.4 L456.9 656.1 L457.7 656.1 L459.1 655.9 L460.1 657.0 L461.1 657.6 L461.1 658.9 L462.2 658.3 L463.2 658.8 L464.7 659.0 L465.1 660.6 L465.7 660.9 L466.3 661.2 L467.8 660.9 L468.9 661.9 L469.6 663.0 L470.0 663.7 L470.7 663.8 L472.2 663.8 L473.2 664.9 L473.8 665.9 L474.1 666.7 L475.3 666.3 L476.5 666.9 L477.8 667.6 L477.9 669.1 L478.6 669.2 L479.4 669.5 L481.1 669.6 L481.5 671.3 L482.1 672.0 L482.2 672.7 L483.9 672.4 L484.7 673.6 L485.7 674.5 L485.5 675.9 L486.6 675.6 L487.6 676.3 L489.0 676.9 L489.1 678.6 L489.7 678.9 L490.4 679.2 L492.1 679.1 L492.8 680.5 L493.4 681.4 L493.7 682.1 L494.8 681.9 L496.1 682.3 L497.1 683.4 L497.5 684.5 L497.8 685.0 L499.1 684.8 L500.2 685.5 L501.4 686.2 L501.7 687.6 L502.5 687.3 L503.5 687.5 L505.2 688.0 L505.7 689.6 L506.2 690.2 L507.5 690.2 L507.9 691.7 L507.3 693.2 L506.2 694.0 L506.6 694.7 L506.7 695.9 L507.4 697.3 L506.4 698.7 L506.5 699.4 L506.7 700.1 L507.8 701.3 L507.6 702.8 L507.4 704.0 L507.2 704.8 L508.1 705.2 L509.1 706.2 L509.4 707.6 L509.3 708.7 L509.2 709.4 L510.3 709.8 L511.3 710.9 L512.0 712.2 L512.5 713.6 L512.9 713.0 L513.7 712.3 L514.7 711.1 L516.3 711.7 L517.2 711.6 L517.9 711.6 L519.1 710.4 L520.9 710.5 L521.9 711.4 L522.5 711.4 L523.6 711.0 L525.2 710.7 L526.6 711.6 L527.4 711.7 L528.2 711.5 L529.3 710.1 L531.0 710.6 L532.1 710.5 L532.9 710.7 L533.1 709.0 L534.5 708.6 L535.7 707.9 L537.0 708.6 L537.3 707.7 L538.1 706.7 L539.0 705.2 L540.8 705.5 L541.1 704.8 L541.7 703.6 L543.1 702.4 L544.3 701.8 L544.5 701.3 L546.2 700.5 L547.8 701.3 L547.8 701.5 L548.4 702.5 L548.0 703.6 L547.8 705.1 L546.3 706.0 L546.8 706.6 L547.2 707.6 L548.3 709.0 L548.2 710.3 L548.9 709.9 L549.4 709.3 L550.0 707.8 L551.6 707.4 L552.8 707.4 L553.3 706.9 L553.9 705.7 L555.0 704.6 L556.6 704.7 L557.3 704.3 L557.7 703.6 L558.1 702.0 L559.7 701.6 L560.7 701.3 L561.4 701.1 L561.5 699.7 L562.6 698.7 L563.9 698.1 L565.0 698.6 L565.1 697.3 L566.2 696.5 L567.3 695.5 L568.9 696.2 L569.2 695.3 L569.9 694.7 L570.7 693.1 L572.6 693.4 L573.2 692.9 L573.8 692.6 L574.3 690.8 L576.1 690.7 L577.1 690.4 L577.8 690.2 L578.2 688.5 L579.4 687.2 L579.8 687.3 L580.8 687.5 L581.4 688.4 L582.7 689.4 L582.5 691.1 L583.2 691.3 L583.7 691.6 L585.2 691.0 L586.4 691.7 L587.1 692.1 L588.0 691.5 L587.1 690.4 L587.5 688.8 L587.5 687.8 L587.5 686.3 L586.4 686.6 L585.0 686.0 L583.8 684.8 L583.9 683.6 L583.5 683.1 L581.9 682.0 L582.9 680.9 L584.2 680.5 L585.1 680.3 L585.3 679.5 L585.7 678.0 L587.1 677.5 L588.3 677.4 L589.2 677.7 L589.5 676.7 L590.4 675.4 L591.9 674.8 L593.0 674.7 L593.2 674.0 L594.9 673.2 L596.4 674.5 L597.3 675.1 L598.2 674.9 L599.9 674.9 L601.4 675.1 L602.5 676.1 L603.1 675.4 L604.2 675.0 L605.6 674.0 L607.1 675.2 L607.7 674.8 L608.6 674.6 L610.0 673.5 L611.6 674.2 L612.1 674.4 L612.4 675.0 L614.0 675.2 L614.8 676.5 L615.5 677.6 L615.6 678.7 L616.8 678.7 L618.5 679.1 L619.0 680.9 L619.7 681.5 L620.2 681.9 L621.9 681.3 L622.9 682.6 L623.8 683.3 L624.0 684.2 L625.2 683.7 L626.4 684.0 L627.8 684.6 L628.4 685.8 L628.8 686.3 L629.8 686.2 L631.4 686.3 L632.2 687.8 L632.8 688.6 L633.3 689.2 L635.2 689.1 L635.9 690.8 L636.5 691.6 L636.5 692.4 L638.1 692.2 L639.0 693.4 L639.9 694.5 L639.1 695.7 L640.0 696.0 L640.5 696.8 L641.7 697.8 L641.4 699.4 L641.6 700.2 L641.9 700.8 L643.5 701.3 L644.0 702.8 L644.3 704.0 L644.1 705.0 L645.7 705.0 L646.5 706.4 L647.4 707.5 L647.4 708.8 L648.6 708.5 L650.0 709.1 L651.1 710.1 L651.7 711.2 L652.3 711.2 L653.1 711.3 L654.8 710.9 L655.5 712.5 L655.8 713.3 L656.0 714.0 L657.8 714.6 L657.8 716.1 L657.7 717.3 L657.0 717.9 L657.8 718.8 L657.9 720.3 L657.3 721.8 L656.5 722.6 L656.3 723.6 L657.8 724.1 L658.3 725.6 L658.5 726.8 L658.3 727.7 L659.5 727.9 L660.8 728.9 L662.0 729.8 L661.9 731.3 L663.2 731.0 L664.5 731.7 L665.8 732.4 L666.0 733.9 L666.8 733.9 L667.8 734.2 L669.6 734.5 L669.8 736.2 L670.0 737.1 L671.1 737.4 L672.3 738.3 L673.3 739.7 L672.7 741.1 L673.6 741.2 L674.4 742.1 L675.8 743.1 L675.4 744.9 L676.0 745.2 L676.6 745.7 L678.4 745.9 L678.7 747.5 L679.2 748.3 L678.9 749.1 L680.2 749.4 L680.8 750.7 L681.2 752.0 L680.8 753.0 L681.1 753.7 L681.7 754.7 L682.6 756.3 L681.7 758.0 L682.5 758.2 L683.4 758.9 L684.9 759.9 L685.4 761.1 L686.0 760.7 L686.3 760.1 L686.5 758.5 L687.9 757.8 L689.0 757.5 L689.6 758.1 L690.6 757.1 L692.0 756.9 L693.5 757.2 L694.3 758.0 L695.0 757.8 L696.4 757.2 L697.9 757.7 L699.0 758.4 L699.1 758.4 L700.4 758.8 L701.1 759.9 L701.4 761.3 L701.1 762.4 L701.2 763.0 L702.3 763.5 L702.9 764.7 L703.4 766.0 L702.7 767.2 L703.4 767.5 L703.9 768.3 L705.2 769.3 L704.7 770.9 L705.0 771.7 L704.8 772.5 L706.2 772.8 L706.8 774.1 L707.3 775.4 L706.7 776.5 L707.6 776.8 L708.4 777.6 L709.7 778.7 L709.3 780.5 L710.2 780.7 L711.0 781.5 L712.6 782.5 L712.9 784.0 L713.5 784.0 L714.3 785.5 L713.4 786.7 L712.8 787.7 L711.7 788.1 L712.1 788.8 L711.4 790.3 L710.3 791.7 L708.6 792.4 L709.4 792.7 L710.0 793.6 L711.2 794.7 L710.5 796.2 L710.9 796.9 L710.8 797.6 L712.3 798.1 L712.7 799.5 L712.9 800.7 L712.5 801.7 L713.0 802.1 L714.1 802.9 L714.6 804.2 L714.7 805.4 L714.9 806.1 L6.0 806.0 Z" fill="#04446b" stroke="#000" stroke-width="1"/>
<path d="M805.9 573.5 L804.3 575.5 L802.7 579.4 L803.9 585.3 L801.9 591.6 L801.5 596.2 L802.7 601.1 L802.3 608.0 L801.5 614.9 L802.3 622.8 L801.9 630.6 L803.1 638.5 L802.3 646.4 L804.3 654.3 L805.9 658.2 L807.0 660.0 L807.0 570.0 Z" fill="#04446b" stroke="#000" stroke-width="1"/>
<path d="M343.1 659.3 L344.0 653.7 L345.9 655.5 L348.7 652.7 L351.5 654.6 L353.4 649.9 L356.2 648.1 L358.1 644.3 L361.8 643.4 L362.7 646.2 L359.9 648.1 L358.1 651.8 L355.2 655.5 L359.9 655.5 L364.6 652.7 L369.3 650.9 L364.6 654.2 L356.2 656.7 Z" fill="#04446b" stroke="#000" stroke-width="1"/>
<path d="M370.2 650.3 L374.0 646.2 L376.8 642.4 L377.7 636.8 L375.8 632.1 L378.7 633.1 L380.5 636.8 L383.3 637.8 L385.2 634.9 L386.1 630.3 L389.0 632.1 L389.9 636.8 L389.0 639.6 L392.7 642.4 L397.4 643.9 L393.6 645.2 L388.0 647.1 L382.4 649.0 L378.7 650.9 L374.0 652.2 Z" fill="#04446b" stroke="#000" stroke-width="1"/>
<path d="M418.0 644.3 L419.9 640.6 L423.6 641.5 L427.3 637.8 L430.1 639.6 L432.0 641.5 L436.7 641.5 L442.3 640.6 L447.9 639.1 L449.8 641.5 L453.6 641.5 L455.4 646.2 L454.5 649.0 L449.8 648.1 L444.2 646.2 L438.6 648.1 L431.1 647.1 L423.6 647.1 L419.9 646.2 Z" fill="#04446b" stroke="#000" stroke-width="1"/>
<path d="M474.2 656.5 L477.0 655.5 L480.7 654.6 L482.6 657.4 L487.3 655.5 L491.0 653.7 L494.8 652.7 L500.0 651.8 L500.0 654.6 L494.8 655.9 L491.0 660.2 L487.3 660.2 L484.5 662.1 L482.6 665.8 L487.3 670.5 L494.8 676.1 L500.0 681.8 L500.0 685.5 L489.1 678.0 L479.8 669.6 L475.1 661.2 Z" fill="#04446b" stroke="#000" stroke-width="1"/>
<path d="M473.7 656.9 L477.5 658.7 L481.2 657.8 L485.0 658.7 L488.7 655.9 L492.5 654.0 L496.2 652.2 L499.0 654.0 L495.3 656.9 L492.5 658.7 L488.7 661.5 L485.9 664.3 L483.1 666.2 L486.9 669.0 L490.6 670.9 L494.3 672.8 L498.1 673.7 L500.9 676.5 L505.6 678.4 L508.4 679.3 L507.5 681.2 L503.7 681.6 L500.0 680.3 L498.1 683.4 L492.5 679.3 L486.9 675.6 L481.2 671.8 L475.6 667.2 Z" fill="#04446b" stroke="#000" stroke-width="1"/>
<path d="M508.4 693.4 L512.1 696.2 L514.9 703.7 L514.9 709.7 L512.1 710.8 L509.3 705.5 L507.5 699.9 Z" fill="#04446b" stroke="#000" stroke-width="1"/>
<path d="M15.0 719.9 L22.5 718.1 L28.1 716.2 L34.6 719.9 L39.3 721.8 L33.7 726.5 L28.1 728.4 L20.6 724.6 Z" fill="#5c4f4a" stroke="#000" stroke-width="1"/>
<path d="M187.1 740.1 L187.7 739.2 L188.4 740.1 L190.1 740.8 L188.3 741.1 L186.9 743.0 L185.6 741.3 Z M201.1 741.3 L200.5 742.8 L200.2 744.8 L197.9 745.4 L195.2 744.8 L194.2 742.4 L196.5 740.9 L197.5 738.6 L200.3 738.9 Z M155.1 738.5 L153.3 740.7 L150.3 739.6 L148.0 737.0 L151.0 735.0 L153.0 732.7 L155.9 734.3 L155.7 736.8 Z M174.4 753.9 L174.9 751.0 L174.5 748.5 L177.4 748.1 L179.7 747.0 L180.9 749.2 L184.0 750.7 L182.7 753.4 L180.2 754.9 L178.0 752.4 Z M154.8 748.8 L154.3 746.4 L157.3 746.4 L158.9 748.1 L158.2 750.3 L156.0 749.7 Z M194.5 741.0 L198.1 739.5 L197.5 742.6 L196.7 744.3 L195.8 746.1 L193.1 748.0 L191.8 745.1 L189.2 743.7 L191.2 741.7 L193.5 741.9 Z M177.4 745.8 L176.9 746.4 L176.4 747.7 L174.6 748.0 L173.4 746.7 L173.2 745.1 L174.0 743.7 L175.9 744.3 L177.5 743.2 L178.4 744.6 Z M149.0 742.9 L150.0 743.6 L149.4 744.6 L148.3 745.0 L145.9 744.5 L147.2 742.4 Z M183.5 730.3 L183.6 729.5 L184.0 729.1 L184.7 727.6 L185.6 728.7 L185.4 729.6 L185.6 730.7 L184.4 731.4 Z M154.8 740.5 L155.7 740.9 L157.4 740.3 L157.7 741.6 L157.0 742.5 L156.0 742.7 L155.2 743.5 L154.6 742.7 L153.8 742.1 L154.5 741.3 Z M191.8 727.4 L192.6 725.9 L194.2 725.6 L196.4 723.9 L197.6 726.0 L197.1 727.7 L196.3 728.6 L196.0 731.4 L193.9 729.9 L191.8 729.4 Z M168.0 754.5 L162.5 754.6 L160.7 750.5 L163.7 748.7 L166.4 747.5 L167.6 750.1 Z M148.5 723.5 L151.4 722.2 L151.5 720.1 L153.2 721.9 L154.2 722.1 L157.1 722.7 L154.5 723.9 L154.4 726.1 L152.3 725.8 L150.0 725.5 Z M165.2 752.2 L163.1 751.4 L162.3 750.9 L161.7 750.3 L159.3 748.2 L161.6 746.7 L164.4 746.5 L165.1 748.9 L166.4 750.5 Z M184.6 721.4 L188.0 721.0 L189.9 721.5 L191.6 722.9 L189.6 724.0 L187.8 726.8 L187.4 723.6 Z M161.0 742.0 L162.2 742.3 L162.0 743.5 L161.7 744.5 L160.5 744.2 L159.9 743.9 L159.4 743.4 L160.0 743.0 L159.9 741.6 Z M195.8 743.1 L193.3 743.6 L192.9 741.6 L194.1 739.9 L196.2 741.3 L197.0 741.4 L198.5 742.0 L198.9 743.9 L196.8 744.2 Z M184.1 739.7 L183.2 740.0 L181.5 740.0 L182.8 738.7 L181.8 737.3 L183.5 737.9 L184.5 736.9 L185.0 737.9 L185.0 738.8 L186.1 740.4 Z M187.1 737.3 L184.9 734.7 L186.0 731.4 L189.4 731.7 L190.5 733.3 L191.8 734.8 L189.9 735.7 Z M149.0 737.4 L151.0 736.5 L151.8 735.4 L153.7 735.4 L152.8 737.2 L154.1 739.1 L151.9 738.3 L150.0 739.0 Z M190.6 744.5 L192.0 746.3 L190.3 747.9 L190.3 749.4 L188.6 749.0 L186.5 750.4 L185.1 748.7 L186.5 747.0 L187.7 746.5 L188.2 743.2 Z M187.7 733.1 L187.9 731.8 L188.9 731.1 L190.0 731.5 L192.0 730.1 L192.4 731.8 L192.9 733.4 L190.7 733.4 L190.0 734.5 L189.1 733.6 Z M152.5 715.7 L153.6 715.0 L155.3 713.3 L156.2 715.3 L157.3 716.6 L158.4 719.8 L155.1 721.4 L151.4 720.7 L150.4 717.6 Z M179.1 753.3 L181.7 750.9 L184.6 753.0 L187.3 753.6 L185.0 755.5 L184.3 756.2 L182.5 757.8 L179.3 756.7 Z M155.4 746.9 L152.6 746.1 L154.1 743.9 L154.0 740.7 L157.3 741.3 L157.9 743.7 L158.2 745.0 L158.2 747.9 Z M194.4 757.1 L195.1 752.9 L199.1 753.4 L202.6 754.4 L200.8 757.3 L198.4 757.2 Z M193.1 754.7 L194.1 754.0 L195.1 754.2 L195.9 754.2 L196.7 754.6 L197.5 755.6 L196.3 756.2 L195.4 756.6 L194.9 755.6 L193.1 756.0 Z M185.0 747.5 L186.0 745.1 L189.0 745.5 L190.0 747.7 L188.9 749.4 L187.3 749.7 L186.3 748.8 Z M189.9 733.7 L188.0 737.2 L184.4 734.8 L181.9 732.2 L183.6 728.4 L187.6 729.5 L188.8 731.5 Z M184.9 734.6 L183.7 733.8 L184.7 732.8 L185.6 732.1 L186.9 732.2 L187.7 733.1 L186.9 733.9 L187.2 735.4 L185.8 735.2 Z M176.1 756.1 L178.2 753.1 L182.1 752.9 L184.1 755.8 L181.9 758.1 L178.6 759.0 Z M181.5 749.5 L184.3 752.0 L183.6 754.7 L181.8 756.0 L178.6 757.3 L175.8 754.4 L178.3 751.6 Z M154.0 748.0 L154.9 747.3 L155.5 745.6 L156.5 747.2 L157.0 747.8 L158.1 749.0 L156.5 749.4 L155.1 751.0 L154.6 749.0 Z M153.1 738.3 L151.3 739.5 L151.4 737.6 L152.0 736.9 L152.1 734.9 L153.8 735.7 L154.4 736.9 L154.5 738.2 Z M179.1 744.9 L178.8 741.9 L179.5 739.8 L181.5 738.4 L183.5 739.8 L186.0 741.1 L185.5 744.1 L182.2 743.8 Z M187.2 737.6 L185.6 738.2 L184.7 736.8 L184.4 735.9 L184.3 735.1 L185.3 734.9 L185.9 734.5 L187.4 734.0 L186.7 735.4 L187.0 736.1 Z M168.9 754.8 L165.7 758.7 L162.7 754.9 L163.1 752.9 L163.8 749.0 L169.0 750.2 Z M200.1 737.6 L198.2 737.0 L196.9 737.3 L196.0 736.1 L196.8 734.9 L198.1 734.9 L199.1 735.1 L201.1 735.9 Z M171.1 735.7 L169.5 734.8 L169.5 732.9 L171.8 733.5 L173.2 732.3 L174.5 733.5 L173.2 734.8 L172.4 735.5 Z M178.4 752.1 L180.0 752.2 L181.2 754.4 L178.6 755.1 L176.5 754.6 L176.5 752.8 L177.5 752.1 Z M196.3 736.4 L198.4 736.6 L199.9 736.9 L200.4 738.7 L198.4 739.5 L195.8 738.8 Z M192.1 733.7 L191.6 731.9 L192.5 730.1 L194.5 729.2 L196.7 729.4 L196.7 731.6 L199.4 732.9 L196.2 733.3 L195.7 736.1 L193.3 735.5 Z M154.3 748.1 L152.9 748.3 L152.1 747.8 L149.7 747.5 L149.6 745.1 L152.1 744.1 L154.9 744.3 L155.0 746.7 Z M163.4 750.2 L162.0 750.2 L162.0 749.0 L162.9 748.1 L164.0 748.8 L164.7 749.2 L164.5 749.9 L164.2 750.8 Z M191.5 757.6 L187.9 757.5 L185.7 755.6 L185.9 752.3 L189.6 752.2 L191.6 754.3 Z" fill="#04446b" stroke="#000" stroke-width="1"/>
<path d="M158.3 751.7 L155.1 751.9 L153.0 750.9 L152.7 749.0 L152.4 746.9 L154.7 744.3 L156.9 747.0 L158.8 748.8 Z M154.0 752.6 L156.2 751.0 L158.1 750.6 L159.5 751.5 L161.2 752.3 L162.3 754.6 L158.8 753.8 L157.4 756.2 L155.1 755.0 Z M165.1 756.3 L165.4 760.5 L162.3 757.9 L161.4 756.3 L159.8 754.0 L162.8 753.9 L165.2 752.3 L168.6 754.0 Z M151.6 719.2 L150.1 722.4 L149.2 719.0 L148.6 717.5 L150.6 714.2 L152.7 717.4 Z M198.5 744.9 L200.9 746.0 L200.3 747.8 L199.6 748.7 L197.6 748.9 L196.6 746.9 Z M152.6 725.8 L153.6 722.1 L157.7 723.0 L161.7 725.5 L158.3 728.9 L153.0 730.8 Z M173.9 751.3 L176.7 750.8 L176.8 753.4 L177.8 755.4 L176.0 757.4 L173.2 756.8 L169.9 755.3 L172.5 752.8 Z M180.9 752.0 L177.9 751.2 L177.4 748.1 L181.0 747.5 L182.6 745.3 L183.9 747.8 L188.3 748.6 L185.2 750.9 L183.9 754.1 Z M199.3 745.7 L198.1 747.8 L195.4 747.8 L193.2 746.1 L194.2 743.7 L196.4 743.4 L198.6 743.6 Z M198.7 743.1 L198.6 742.3 L199.5 741.5 L200.0 742.7 L201.9 742.7 L201.4 744.0 L200.0 744.3 L199.2 744.3 L198.4 743.9 Z" fill="#000" stroke="#000" stroke-width="1"/>
<path d="M172.4 751.8 L174.9 754.1 L172.0 756.7 L169.3 754.8 L167.1 752.4 L170.5 751.9 Z M161.1 722.7 L159.5 723.9 L158.2 722.4 L159.1 721.2 L159.3 719.4 L161.3 719.9 L162.1 721.4 Z M157.8 743.4 L159.3 742.9 L161.4 743.0 L162.4 744.8 L162.7 747.4 L160.0 748.5 L157.7 747.6 L154.6 746.9 L156.5 744.4 Z M178.9 737.9 L180.9 741.3 L177.7 743.7 L174.6 743.3 L170.5 742.4 L170.9 738.0 L175.2 736.9 Z M176.5 739.0 L176.5 736.9 L179.0 735.8 L181.3 737.4 L180.3 739.5 L178.8 739.6 L176.7 741.3 Z M156.0 714.6 L154.6 713.8 L156.0 712.8 L157.4 713.4 L156.9 714.3 L156.8 715.4 Z M181.0 736.7 L182.1 737.4 L182.2 738.4 L181.5 738.9 L180.9 739.7 L180.3 739.0 L180.4 738.3 L180.2 737.6 Z M151.0 737.0 L150.2 736.6 L149.8 735.6 L151.0 735.3 L153.1 735.2 L152.7 737.1 Z M151.7 725.5 L148.5 723.9 L147.9 720.2 L151.8 718.5 L153.8 721.2 L154.3 723.6 Z M152.0 730.2 L151.3 730.0 L151.1 729.1 L151.9 728.7 L153.2 728.8 L153.2 730.1 Z M156.4 747.0 L157.0 747.9 L156.7 749.3 L155.1 750.3 L154.2 748.4 L152.1 748.0 L153.4 746.6 L154.7 746.4 L155.4 746.0 L157.2 745.2 Z M194.5 748.1 L195.1 747.1 L196.2 747.2 L196.5 747.2 L197.2 747.2 L198.0 747.8 L196.9 748.2 L196.4 748.8 L196.0 748.1 Z M170.3 743.8 L170.2 743.2 L170.5 742.8 L171.3 741.4 L172.4 742.3 L173.4 743.6 L172.1 744.7 L170.9 743.9 Z M185.7 750.6 L185.5 747.1 L184.2 745.9 L184.7 744.0 L186.6 741.8 L189.4 743.0 L191.1 745.1 L189.7 747.2 L188.4 748.8 Z M155.5 736.2 L158.8 736.7 L160.8 737.0 L162.7 740.1 L158.8 739.4 L156.6 739.1 Z M159.7 737.6 L157.6 739.9 L155.1 737.8 L150.9 737.8 L152.6 734.6 L153.4 731.8 L156.6 732.3 L160.8 731.3 L161.7 735.0 Z M184.6 751.1 L184.1 751.6 L183.4 752.7 L182.5 751.9 L181.6 751.3 L182.1 750.4 L182.4 749.5 L183.5 748.9 L185.0 749.0 L184.2 750.6 Z M198.8 749.6 L200.4 750.2 L201.9 750.9 L200.3 752.3 L201.9 754.1 L200.1 754.6 L198.6 754.2 L196.9 753.8 L196.4 752.1 L198.7 751.7 Z M194.3 744.9 L195.0 744.0 L195.9 745.0 L197.4 744.3 L197.5 745.4 L197.4 746.4 L196.3 746.5 L195.4 747.6 L193.8 747.3 L193.6 745.9 Z M169.7 749.4 L172.6 750.4 L171.5 752.9 L169.6 753.6 L167.3 753.0 L168.7 751.3 Z M161.6 744.1 L158.2 744.3 L155.7 745.2 L153.2 743.4 L154.0 740.5 L156.6 739.7 L159.7 738.4 L159.0 741.7 Z M179.0 751.4 L176.5 749.9 L178.3 747.8 L180.7 747.2 L185.3 748.6 L181.0 750.7 Z M155.4 730.7 L155.2 731.6 L156.1 732.7 L155.1 734.0 L153.9 732.6 L153.3 732.2 L153.4 731.5 L152.9 730.0 L154.4 730.3 Z M192.6 748.2 L194.4 748.4 L194.0 750.0 L192.5 750.5 L190.7 750.8 L190.9 749.1 L190.8 747.4 Z M184.9 753.1 L187.9 752.6 L189.3 751.5 L191.5 752.2 L191.1 754.2 L191.6 757.6 L188.1 756.6 L187.4 754.6 Z M168.0 751.8 L168.5 752.5 L168.8 753.2 L167.9 753.4 L167.2 753.4 L166.0 752.8 L166.6 751.5 Z M150.8 730.7 L152.6 730.0 L153.9 728.8 L155.3 729.9 L155.2 731.3 L155.4 733.4 L153.3 732.6 L152.0 732.1 Z M171.8 735.1 L172.6 734.3 L173.5 733.1 L174.3 734.4 L173.7 735.2 L172.9 735.7 Z M175.9 743.6 L174.7 744.2 L172.8 743.5 L174.5 742.2 L175.2 740.6 L176.7 741.6 L178.4 742.5 L177.2 743.9 Z M153.1 717.3 L152.8 716.5 L153.6 717.0 L154.5 716.2 L154.5 717.1 L154.8 717.7 L154.1 718.0 L153.7 718.3 L153.4 717.8 L152.5 717.8 Z M175.1 728.3 L176.3 729.6 L175.8 731.0 L175.4 732.9 L172.8 733.5 L172.8 730.9 L171.5 729.4 L173.1 728.0 Z M160.7 733.8 L163.4 735.8 L162.1 737.8 L161.1 740.9 L157.3 739.3 L157.0 735.4 Z M164.5 714.2 L162.5 716.2 L163.8 718.3 L161.9 719.9 L159.6 718.9 L156.8 718.2 L159.3 715.9 L159.2 714.6 L160.1 712.3 L162.8 712.4 Z M153.3 724.1 L154.9 725.8 L152.8 726.8 L149.9 728.5 L148.0 725.8 L147.4 722.7 L150.0 719.8 L153.3 721.7 Z M160.4 718.3 L161.0 720.7 L158.8 722.5 L155.9 722.4 L154.2 720.5 L152.3 718.1 L153.7 715.1 L157.2 716.1 L158.3 717.6 Z M154.0 733.8 L156.5 734.1 L157.3 736.9 L154.1 737.3 L151.6 738.3 L151.1 735.8 L151.5 734.3 L151.8 731.1 Z M156.2 734.6 L153.1 737.5 L149.7 734.5 L152.7 731.7 L153.9 728.8 L158.0 729.2 L158.5 732.9 Z" fill="#04446b" stroke="#000" stroke-width="1"/>
<path d="M153.2 717.1 L152.1 716.0 L148.7 714.9 L149.0 711.2 L153.2 711.1 L156.8 711.8 L158.5 715.0 L155.8 717.4 Z M185.1 743.7 L183.7 746.8 L180.1 746.5 L181.6 742.5 L177.6 740.6 L179.9 738.3 L183.1 740.3 L184.9 739.3 L185.7 740.9 L184.8 742.2 Z M167.2 738.6 L168.6 738.8 L169.3 740.2 L167.8 740.6 L166.9 741.4 L165.7 740.6 L166.5 739.5 Z M155.7 716.9 L153.0 717.2 L149.2 716.0 L150.5 712.0 L154.7 712.0 L157.6 714.2 Z M154.4 746.8 L152.9 746.6 L152.4 745.3 L153.9 744.7 L154.0 743.6 L155.5 742.8 L156.2 744.2 L155.4 745.2 L155.2 745.9 Z M169.9 756.2 L169.2 754.6 L170.1 753.3 L171.6 753.5 L172.7 754.1 L172.2 755.1 L171.7 756.4 Z M164.5 734.8 L162.2 735.5 L159.4 734.5 L158.6 731.7 L160.5 729.4 L163.1 729.0 L166.0 727.7 L165.6 731.2 L165.7 732.3 L167.6 735.1 Z M169.2 737.2 L170.8 738.1 L173.1 736.5 L174.3 738.3 L173.3 740.1 L172.8 742.0 L170.7 740.5 L168.7 741.8 L169.7 739.6 L166.9 738.1 Z" fill="#000" stroke="#000" stroke-width="1"/>
<path d="M220.9 687.4 L219.2 687.2 L220.6 686.6 L220.4 685.0 L221.5 686.4 L223.0 685.8 L223.5 686.9 L222.3 687.6 L222.0 688.5 L220.7 689.1 Z M196.1 724.6 L196.2 722.6 L198.9 722.6 L199.6 722.3 L200.5 722.3 L203.2 722.3 L201.8 724.0 L201.3 725.5 L199.7 725.1 L198.3 725.3 Z M212.5 705.7 L213.3 710.7 L209.5 712.0 L205.2 714.1 L202.6 709.4 L206.5 705.3 Z M207.8 719.5 L206.8 719.8 L205.9 719.0 L206.4 718.0 L207.2 717.5 L208.0 717.9 L209.7 716.9 L208.6 718.5 L209.4 719.2 L208.7 719.8 Z M186.8 709.1 L189.7 707.5 L192.4 709.7 L190.6 712.5 L190.2 715.8 L186.9 713.8 L186.1 712.5 L183.4 711.6 L186.2 710.7 Z M207.9 699.0 L207.1 701.1 L205.5 702.3 L203.4 701.9 L200.6 699.9 L202.0 696.2 L205.8 697.9 Z M197.3 710.8 L198.1 709.9 L198.7 708.8 L200.2 709.0 L199.7 710.3 L199.7 710.8 L199.5 712.1 L197.8 712.3 Z M194.1 703.2 L192.1 705.0 L189.6 703.4 L191.4 701.1 L191.6 698.5 L193.8 700.5 L197.0 700.1 L197.7 703.1 Z M213.3 681.9 L211.6 682.1 L209.9 680.7 L212.2 679.7 L213.1 678.6 L214.6 679.0 L216.9 680.2 L215.0 681.9 Z M222.6 681.7 L222.5 683.1 L221.6 683.8 L220.2 684.8 L219.8 683.3 L218.7 681.4 L220.9 680.2 Z M213.0 705.8 L212.1 708.2 L208.9 708.3 L206.1 706.2 L208.0 703.7 L210.3 701.5 L213.5 702.9 Z M204.0 684.2 L203.4 680.7 L206.0 682.9 L207.8 683.5 L209.9 685.4 L208.0 687.5 L205.5 687.9 L201.7 689.0 L201.1 685.7 Z M218.4 694.4 L218.9 694.8 L218.8 695.5 L218.7 697.0 L217.5 695.7 L215.7 696.4 L216.0 695.0 L216.1 694.0 L217.2 693.6 L218.3 692.9 Z M189.7 712.9 L192.6 711.6 L193.6 711.3 L194.6 712.1 L194.1 713.3 L192.8 713.4 Z M197.5 718.4 L195.9 715.8 L196.4 714.1 L197.2 713.5 L198.3 710.9 L201.0 712.0 L201.1 714.5 L198.8 715.1 Z M206.5 718.0 L206.1 717.8 L205.4 717.7 L204.5 716.7 L205.7 716.3 L206.8 715.7 L207.0 717.0 L208.1 717.4 L208.0 718.6 Z M205.5 696.3 L205.6 695.2 L206.4 696.0 L206.9 696.2 L207.9 697.2 L206.4 697.0 L205.9 697.1 L205.5 696.8 Z M222.8 683.7 L222.6 684.5 L221.3 684.6 L221.4 683.5 L221.9 682.8 L222.6 683.2 Z M207.3 687.0 L207.9 688.6 L205.8 690.2 L202.5 688.9 L204.6 686.4 L206.3 685.9 Z M193.2 715.7 L189.8 715.8 L189.7 712.7 L188.7 709.7 L192.4 709.8 L194.1 710.3 L197.9 709.9 L198.1 713.0 L196.7 716.0 Z M187.7 722.0 L186.4 722.0 L185.7 720.9 L187.2 720.4 L187.7 719.4 L188.6 720.0 L190.0 720.1 L189.8 721.3 L188.9 721.8 L188.3 722.0 Z M216.6 679.0 L219.1 677.5 L222.9 678.7 L222.2 682.2 L218.4 682.5 L217.1 687.2 L216.0 682.5 L211.0 682.0 L212.6 678.6 Z M219.2 671.1 L222.8 673.3 L224.6 673.9 L224.7 676.0 L223.4 679.9 L218.9 678.4 L220.2 674.8 Z M210.6 716.5 L210.2 716.7 L209.8 716.3 L208.8 715.7 L210.1 715.6 L210.6 715.3 L212.0 715.3 L210.9 716.2 Z M201.6 721.5 L200.5 719.9 L201.9 718.9 L203.8 718.1 L205.9 720.0 L203.5 721.4 Z M192.0 720.8 L191.4 718.5 L193.7 718.3 L196.7 717.3 L198.6 719.5 L198.3 722.1 L195.6 722.9 L194.4 725.5 L191.6 724.9 L191.8 722.1 Z M212.8 711.5 L213.5 710.1 L214.8 709.8 L217.6 708.9 L218.5 711.6 L216.3 713.3 L213.5 714.0 Z M199.2 730.4 L198.6 729.8 L197.6 729.3 L197.7 728.3 L198.9 728.1 L199.7 727.5 L199.8 728.6 L200.6 728.8 L201.2 729.8 L199.8 729.6 Z M209.6 717.9 L207.4 718.3 L205.2 716.1 L207.3 713.2 L211.1 713.8 L212.0 716.8 Z M192.3 704.8 L192.8 706.5 L193.0 709.4 L190.0 708.7 L188.4 707.3 L187.3 704.7 L190.4 704.5 Z M204.2 716.8 L203.8 715.0 L202.4 714.4 L203.8 713.6 L203.3 711.1 L205.0 713.3 L206.9 712.5 L207.3 713.9 L206.9 715.3 L205.2 715.0 Z M197.7 716.8 L198.1 716.9 L199.8 717.0 L199.6 718.2 L198.0 718.0 L197.5 717.8 L197.0 717.8 L195.9 717.5 L196.8 716.9 L197.1 716.4 Z M215.2 700.6 L216.3 698.3 L215.6 694.3 L218.9 696.7 L221.5 697.8 L219.1 699.4 L218.0 701.8 Z M213.2 698.7 L215.1 699.3 L216.0 701.3 L214.1 703.0 L212.3 701.5 L212.6 700.3 Z M190.6 723.0 L191.0 722.7 L191.5 721.6 L192.5 722.1 L193.2 722.9 L192.1 723.6 L192.0 724.7 L190.9 724.4 L190.6 723.6 Z M186.9 711.1 L189.5 711.2 L192.5 711.3 L192.2 714.3 L189.2 715.3 L186.3 714.0 Z M203.6 708.0 L204.3 708.1 L205.3 707.7 L206.2 708.7 L205.2 709.5 L204.2 709.0 L203.9 708.9 L203.7 708.6 Z M188.4 712.0 L187.3 715.5 L185.8 717.8 L182.8 717.2 L179.8 715.5 L181.8 712.8 L184.5 710.2 Z M212.0 696.2 L214.3 697.5 L212.9 699.8 L210.0 702.0 L205.4 700.3 L208.6 696.8 L209.4 693.2 Z M197.1 700.9 L196.7 699.5 L196.3 698.1 L197.3 696.8 L199.0 697.1 L200.8 697.5 L199.3 699.1 L199.2 699.7 L198.7 701.1 Z M188.9 722.7 L190.1 721.8 L192.7 719.6 L193.3 722.6 L192.3 724.1 L191.5 725.3 L188.9 727.2 L186.7 724.8 Z M222.0 686.1 L224.6 684.9 L225.6 682.5 L228.2 683.3 L228.8 685.5 L229.2 687.3 L226.8 687.2 L225.4 689.7 L223.7 688.0 Z M224.5 680.2 L221.9 680.8 L218.4 682.8 L216.8 679.5 L217.2 676.3 L219.9 673.9 L224.2 674.0 L224.4 677.8 Z M208.4 701.4 L208.8 700.9 L209.2 700.6 L209.5 700.1 L210.5 699.8 L210.6 700.7 L210.4 701.3 L210.7 702.4 L209.6 703.0 L208.5 702.4 Z M198.8 724.2 L197.7 725.0 L197.7 723.7 L197.4 723.1 L198.1 722.9 L198.4 722.5 L198.9 722.6 L200.3 722.3 L200.2 723.4 L200.0 724.4 Z M199.6 722.7 L197.1 725.0 L195.2 722.2 L195.5 720.3 L195.6 718.1 L198.2 716.3 L199.6 719.1 L200.5 720.8 Z M200.2 726.4 L201.0 728.3 L199.2 729.4 L197.6 728.0 L197.1 727.0 L196.2 726.2 L194.8 723.7 L197.5 723.5 L200.3 721.8 L202.2 724.1 Z M226.3 676.4 L224.5 674.9 L225.3 673.1 L227.1 672.1 L228.2 673.6 L227.7 674.8 Z M215.6 705.3 L214.5 707.5 L211.6 708.0 L208.3 706.7 L208.3 703.4 L211.6 702.7 L213.2 702.9 L216.5 702.6 Z M219.0 706.2 L218.2 706.6 L216.3 708.0 L216.5 705.8 L213.1 704.2 L215.7 702.9 L217.7 701.8 L220.5 701.4 L222.9 703.3 L223.7 706.3 Z M227.8 682.4 L226.7 683.0 L226.0 683.8 L224.6 683.8 L224.5 682.5 L224.3 681.7 L224.3 680.4 L225.8 681.0 L226.4 681.2 L228.4 681.1 Z M214.7 691.0 L212.9 688.6 L215.3 686.1 L218.4 687.5 L217.9 689.7 L217.5 692.6 Z M221.2 692.1 L221.1 693.5 L219.6 693.8 L218.8 692.9 L218.8 691.8 L220.3 689.8 Z M211.4 718.7 L209.5 723.1 L205.5 723.5 L200.5 722.4 L203.3 718.6 L206.4 718.1 Z M209.9 686.0 L207.1 684.6 L203.7 684.9 L204.7 682.0 L206.8 680.6 L208.4 682.3 L208.7 683.3 Z M199.1 731.9 L198.4 732.3 L197.7 732.9 L197.4 732.0 L196.8 731.2 L197.6 730.0 L198.5 731.3 Z M220.6 698.7 L222.8 700.1 L223.7 701.9 L224.1 703.8 L222.6 705.1 L220.7 706.0 L217.9 706.3 L218.7 703.4 L217.1 701.8 L217.6 699.1 Z M218.4 688.3 L218.6 684.1 L217.1 681.1 L220.7 682.0 L224.3 680.9 L223.1 684.0 L222.8 687.1 Z" fill="#04446b" stroke="#000" stroke-width="1"/>
<path d="M190.3 707.9 L190.5 706.5 L191.2 704.8 L193.1 705.6 L194.4 706.0 L194.1 707.3 L195.3 708.7 L193.8 709.4 L192.4 709.6 L191.4 708.8 Z M209.1 683.7 L208.1 682.7 L208.9 681.7 L209.4 681.1 L210.3 681.0 L211.2 681.6 L211.1 682.6 L210.3 683.2 Z M216.7 694.2 L217.9 693.5 L219.0 692.9 L219.7 693.8 L220.4 694.6 L219.2 694.9 L218.7 695.7 L218.1 695.0 Z M201.2 712.9 L203.5 712.4 L205.6 713.8 L205.5 716.6 L202.4 716.6 L199.7 715.3 Z M200.2 707.7 L201.4 706.9 L204.1 706.6 L202.6 709.0 L203.4 710.4 L202.0 711.4 L200.1 712.2 L197.5 711.8 L197.7 709.4 L197.3 707.2 Z M209.0 681.3 L207.3 682.3 L206.3 680.4 L204.0 680.6 L205.3 679.1 L205.5 677.6 L207.3 677.4 L207.9 678.8 L209.2 679.7 Z M222.6 690.5 L224.3 688.8 L225.4 690.6 L226.4 691.9 L226.3 693.7 L223.8 693.0 L222.6 695.2 L221.0 694.0 L220.8 692.3 L221.1 690.9 Z M220.2 697.5 L221.7 697.1 L222.2 698.6 L220.7 699.0 L218.2 700.4 L219.1 698.0 Z M218.0 680.8 L215.2 678.2 L218.8 676.8 L221.1 674.9 L221.0 677.8 L221.3 680.1 Z M205.6 721.8 L207.6 722.9 L205.1 723.4 L204.3 723.6 L202.8 725.0 L202.5 723.3 L201.7 722.3 L202.0 720.8 L203.9 721.6 L205.4 720.0 Z M207.0 699.2 L203.7 700.3 L202.5 697.3 L203.0 695.3 L204.5 694.1 L206.5 693.7 L209.3 694.6 L208.1 697.1 Z M217.2 682.9 L219.3 683.6 L217.6 684.7 L216.2 684.6 L215.9 683.6 L215.4 682.7 L216.4 681.0 Z" fill="#000" stroke="#000" stroke-width="1"/>
<path d="M139.6 756.3 L136.4 758.7 L133.0 755.8 L134.0 751.8 L138.0 751.6 L142.0 751.2 L141.1 754.6 Z M149.0 754.6 L149.4 757.8 L145.9 757.2 L142.2 757.7 L143.6 754.4 L143.6 752.1 L146.2 751.8 L148.8 752.2 Z M113.1 756.0 L114.8 754.6 L114.7 756.8 L117.6 758.1 L115.5 759.6 L113.5 759.6 L112.5 758.4 L111.1 757.6 L111.1 755.9 Z M124.8 743.3 L126.8 743.1 L128.1 745.3 L125.5 745.6 L122.9 746.7 L123.7 744.3 Z M83.9 745.2 L84.5 746.8 L85.1 747.1 L85.8 748.4 L84.3 748.8 L83.4 748.0 L82.0 747.3 L82.9 746.2 Z M121.5 748.9 L120.8 750.5 L119.4 749.5 L118.3 747.8 L120.1 746.8 L121.8 747.0 L122.8 748.1 Z M98.7 746.1 L98.4 748.1 L99.2 749.1 L98.2 750.1 L96.9 750.3 L95.6 749.7 L92.7 748.6 L95.8 747.6 L96.9 747.3 Z M149.7 749.4 L150.4 752.9 L147.1 754.8 L144.5 752.0 L142.0 752.2 L141.2 750.1 L140.6 746.3 L144.7 746.4 L148.8 745.8 Z M94.6 744.0 L96.4 745.2 L96.4 747.3 L94.2 747.7 L92.0 749.4 L89.8 747.5 L92.4 745.8 L92.0 742.8 Z M85.1 755.2 L85.6 755.0 L86.9 755.0 L87.0 756.2 L86.4 757.3 L84.8 757.8 L84.6 756.2 L84.8 755.6 Z M90.9 750.6 L91.1 752.7 L88.7 752.7 L88.6 750.6 L88.8 749.5 L90.0 749.6 L92.4 748.8 Z M135.6 756.7 L132.9 758.1 L131.3 755.8 L131.9 753.8 L134.2 752.1 L136.5 754.2 Z M88.4 754.8 L87.8 755.8 L87.7 757.0 L86.4 756.7 L86.0 755.9 L84.9 754.8 L86.3 754.4 L87.7 753.4 Z M100.7 757.0 L100.5 757.8 L99.5 757.9 L98.5 757.5 L98.9 756.5 L99.7 756.5 L100.3 756.4 Z M137.8 744.0 L141.0 745.2 L144.7 747.4 L141.0 749.8 L136.7 751.1 L136.9 747.0 Z M131.1 755.2 L133.8 751.3 L135.5 748.1 L138.4 750.7 L138.5 753.3 L136.1 753.6 Z M85.7 751.8 L85.7 755.8 L87.5 757.8 L85.3 759.5 L82.4 759.9 L78.6 758.7 L79.2 755.1 L81.4 751.9 Z M87.0 749.1 L90.4 749.7 L94.3 749.3 L93.0 752.6 L91.6 754.8 L87.9 755.5 L86.3 752.4 Z M97.8 751.2 L102.1 749.5 L103.9 748.0 L106.9 747.9 L107.1 750.6 L110.2 753.5 L106.3 754.6 L103.5 755.4 L99.8 754.7 Z M82.7 748.6 L84.1 748.5 L85.3 748.3 L85.9 749.4 L87.3 751.7 L84.8 752.9 L82.2 752.0 L82.9 749.8 Z" fill="#04446b" stroke="#000" stroke-width="1"/>
<path d="M87.6 751.5 L84.7 749.5 L84.7 747.1 L86.5 746.1 L88.8 746.4 L92.5 749.7 Z M137.2 747.1 L136.0 747.1 L136.6 746.1 L136.2 745.0 L137.4 744.9 L138.5 745.0 L138.9 745.8 L139.7 747.0 L138.7 748.4 Z M142.6 755.7 L138.2 755.5 L136.9 757.8 L133.8 757.7 L133.1 755.0 L132.2 752.4 L133.7 749.7 L137.1 750.8 L138.1 752.6 L141.5 752.7 Z M139.3 755.2 L137.5 753.9 L137.3 751.2 L140.5 751.9 L142.3 751.9 L144.1 753.0 L144.3 755.2 L142.5 756.7 L140.5 755.9 Z M135.5 754.9 L134.7 753.4 L134.3 752.6 L134.6 751.9 L134.6 750.7 L135.8 751.0 L136.5 751.4 L140.0 751.3 L137.6 753.0 L137.8 755.5 Z" fill="#000" stroke="#000" stroke-width="1"/>
<path d="M801.3 561.0 L794.2 561.5 L797.0 562.5 L804.1 562.0 Z M799.2 564.2 L791.1 564.7 L794.4 565.7 L802.4 565.2 Z M801.7 572.0 L794.0 572.5 L797.1 573.5 L804.7 573.0 Z M799.5 577.4 L794.6 577.9 L796.6 578.9 L801.5 578.4 Z M799.4 584.9 L794.0 585.4 L796.1 586.4 L801.5 585.9 Z M799.9 593.4 L792.6 593.9 L795.5 594.9 L802.8 594.4 Z M800.3 597.9 L792.8 598.4 L795.8 599.4 L803.3 598.9 Z M799.6 607.6 L795.7 608.1 L797.3 609.1 L801.1 608.6 Z M800.7 610.6 L797.5 611.1 L798.8 612.1 L802.0 611.6 Z M798.5 614.3 L791.0 614.8 L794.0 615.8 L801.6 615.3 Z M802.2 623.8 L797.8 624.3 L799.6 625.3 L804.0 624.8 Z M799.4 635.8 L795.0 636.3 L796.8 637.3 L801.2 636.8 Z M800.9 641.0 L795.7 641.5 L797.8 642.5 L802.9 642.0 Z M799.5 650.4 L794.4 650.9 L796.5 651.9 L801.5 651.4 Z" fill="#04446b"/>
<path d="M804.1 560.0 L801.5 561.4 L799.0 562.8 L798.0 562.7 L795.1 563.1 L792.3 561.9 L790.4 561.1 L788.3 561.3 M802.4 563.2 L799.9 562.1 L797.3 560.9 L795.0 559.7 L794.0 560.9 L792.6 560.0 L789.6 561.2 L788.1 562.7 L786.0 563.2 M804.5 568.5 L801.7 567.8 L799.9 566.8 L798.7 565.4 L797.0 565.7 L796.0 566.3 L794.4 565.7 L791.7 565.6 L790.1 565.5 L787.7 564.1 M804.7 571.0 L803.7 572.0 L802.0 572.2 L801.0 570.8 L799.6 572.2 L798.2 573.0 L795.3 574.5 L793.7 574.0 L791.6 574.9 L790.4 575.7 L787.8 576.8 M801.5 576.4 L799.2 577.7 L797.6 579.1 L795.5 578.5 L793.8 577.4 L792.7 576.3 L790.3 577.9 M805.9 579.0 L804.1 578.2 L801.9 579.2 L800.0 579.0 L798.9 580.3 L797.8 580.3 L795.2 579.1 L792.7 580.5 M801.5 583.9 L800.2 585.0 L798.6 584.8 L795.6 586.0 L792.7 585.8 L790.7 586.6 M803.0 587.3 L801.3 588.8 L798.3 589.2 L796.3 588.7 L795.2 588.0 M802.8 592.4 L800.3 593.0 L797.9 593.8 L796.2 594.5 L794.6 594.4 L792.1 595.0 L790.5 596.5 L788.2 596.7 L787.2 596.9 M803.3 596.9 L801.0 597.8 L799.3 598.3 L796.8 599.3 L795.1 600.4 L792.4 601.0 L789.5 602.5 L787.4 602.6 M805.7 601.9 L803.3 602.6 L800.8 601.5 L798.3 601.8 L796.0 601.5 L793.7 602.4 M801.1 606.6 L799.3 607.0 L797.8 607.6 L795.6 606.2 L793.6 605.3 L792.5 604.1 M802.0 609.6 L800.0 609.2 L797.8 609.5 L796.3 610.8 L795.3 610.5 M801.6 613.3 L799.8 611.8 L797.6 610.5 L795.5 610.0 L793.3 611.5 L790.7 611.2 L788.1 611.7 L786.3 610.5 M805.8 617.5 L803.6 617.0 L800.8 615.4 L799.6 615.7 L797.3 614.5 L795.1 615.8 L793.3 615.5 L791.9 614.9 L788.9 614.5 M804.0 622.8 L801.0 622.7 L799.2 622.2 L796.2 622.1 L794.6 622.1 M803.2 627.1 L800.7 628.2 L799.6 628.3 L798.1 629.7 L795.5 628.9 L794.0 627.7 M804.0 630.5 L801.8 630.8 L799.3 629.6 L796.7 629.0 L794.7 628.5 L793.1 628.5 L791.2 628.1 M801.2 634.8 L799.3 636.1 L796.5 636.3 L795.5 637.1 L793.6 637.4 L791.2 637.8 M802.9 640.0 L800.2 639.0 L798.6 640.1 L797.5 641.2 L795.1 641.0 L793.5 641.9 L790.7 640.7 M803.5 644.2 L802.2 644.4 L799.6 643.1 L798.1 644.1 L795.5 644.6 L794.5 645.3 L791.5 646.9 M805.2 646.8 L802.9 648.3 L800.5 647.1 L798.9 648.4 L797.6 648.8 L795.8 647.7 M801.5 649.4 L800.4 648.0 L798.2 648.8 L795.5 647.6 L793.6 647.0 L791.4 647.0 L788.5 646.6 M801.8 654.0 L799.7 655.3 L797.6 655.7 L796.1 655.9 L794.6 656.7 L792.6 655.5 L791.1 655.1 L788.6 654.1 M801.4 658.5 L800.2 657.3 L798.1 656.5 L795.3 656.4 L793.7 657.3 L792.6 658.1 L791.5 656.9 L788.6 657.5 L787.1 656.3" fill="none" stroke="#000" stroke-width="1.5"/>
<path d="M784.6 656.3 L786.9 660.6 L787.9 665.1 L787.0 665.6 L784.2 671.2 L781.3 674.0 L785.1 675.9 L786.0 680.6 L789.8 683.4 L792.6 688.1 L791.6 692.8 L794.5 697.5 L795.4 704.0 L792.6 708.7 L788.8 710.6 L790.7 715.2 L787.9 719.0 L785.1 720.9 L784.2 725.5 L785.1 731.2" fill="none" stroke="#000" stroke-width="3"/>
<path d="M784.6 656.3 L786.9 660.6 L787.9 665.1 L787.0 665.6 L784.2 671.2 L781.3 674.0 L785.1 675.9 L786.0 680.6 L789.8 683.4 L792.6 688.1 L791.6 692.8 L794.5 697.5 L795.4 704.0 L792.6 708.7 L788.8 710.6 L790.7 715.2 L787.9 719.0 L785.1 720.9 L784.2 725.5 L785.1 731.2" fill="none" stroke="#04446b" stroke-width="1.5"/>
<path d="M343.4 659.9 L356.2 656.1 L378.7 651.2 L404.9 648.6 L419.9 647.9 L438.6 649.2 L455.4 648.4 M534.6 720.1 L540.2 717.7 L544.9 714.9 L550.5 712.1 L555.2 710.2 L558.0 707.4 L560.8 704.6 M562.7 702.7 L566.4 700.9 L569.3 699.0 M257.7 661.0 L264.2 662.5 L271.7 663.4 L279.2 664.3 L284.8 665.3 M249.3 678.4 L252.6 684.0 L254.1 689.6 L253.4 698.1 L250.2 704.6 L247.4 709.7 L243.6 714.0 L239.9 718.7 M237.1 721.5 L233.3 725.2 M228.7 728.0 L224.0 731.8 M241.8 699.9 L245.5 694.3 L248.3 693.4 L247.4 698.1 M228.7 662.5 L234.3 661.5 M241.8 664.0 L249.3 662.1" fill="none" stroke="#000" stroke-width="1.5"/>
<path d="M181.5 6.0 L188.1 13.1 L193.7 24.3 L198.4 37.5 L200.3 50.6 L200.3 71.2 L199.3 89.9 L196.5 101.1 L188.1 112.4 L185.3 127.3 L182.5 138.6 L175.9 147.9 L175.0 152.1 L175.8 150.0 L174.9 155.6 L169.3 165.0 L161.8 178.1 L154.3 189.3 L146.8 199.6 L144.9 205.2 L147.8 213.7 L151.5 222.1 L156.2 224.9 L161.8 225.8 M240.5 6.6 L234.0 12.2 L229.3 18.7 L228.4 30.0 L228.4 43.1 L226.5 54.3 L223.7 59.9 L216.2 67.4 L206.8 69.3 L200.3 72.1 M240.5 6.6 L245.2 12.2 L248.0 19.7 L255.5 26.2 L261.1 35.6 L263.4 44.9 L263.9 51.5 L268.6 58.1 L276.1 60.3 L287.3 60.9 L294.8 56.2 L302.3 54.3 L309.8 54.3 L311.4 55.1 L321.9 63.5 L334.4 71.9 L349.1 82.3 L363.7 91.8 L374.2 103.3 L384.7 111.6 L395.1 117.9 L401.4 124.2 L404.6 132.6 M6.3 256.6 L52.7 251.3 L87.9 239.0 L100.0 238.0 L111.2 235.2 L118.7 230.5 L135.6 224.9 L150.6 224.0 L161.8 225.8 M175.8 223.0 L184.3 219.3 L197.4 211.8 L208.6 204.3 L218.0 197.8 L221.7 190.3 L231.1 186.5 L242.3 182.8 L259.2 177.2 L272.3 171.5 L287.3 166.9 L300.0 165.0 L302.3 163.4 L333.9 158.2 L334.4 158.7 L347.0 153.5 L359.5 148.3 L372.1 146.2 L384.7 140.9 L397.2 136.8 L404.6 132.6 M164.6 231.5 L166.5 243.6 L168.4 254.9 L169.3 266.1 L170.2 277.3 L173.0 288.6 L172.1 302.1 M161.8 221.2 L172.1 220.8 L175.5 224.0 L175.5 229.6 L173.0 231.5 L161.8 231.5 L160.9 225.8 L161.8 221.2 M394.1 100.1 L409.8 100.1 L426.5 105.4 L436.0 113.7 L437.0 130.5 L433.9 147.2 L426.5 159.8 L414.0 164.0 L397.2 166.1 L382.6 161.9 L372.1 153.5 L365.8 140.9 L365.8 128.4 L372.1 115.8 L382.6 105.4 L394.1 100.1 M409.8 111.6 L408.7 117.9 L416.1 128.4 L414.0 136.8 M472.0 6.5 L472.0 21.6 L467.7 36.0 L468.4 42.6 L460.0 53.0 L447.5 56.2 L437.0 59.3 L430.7 67.7 L426.5 80.2 L422.3 90.7 L416.1 101.2 L409.8 111.6 L407.7 122.1 L404.6 132.6 M404.6 132.6 L411.9 143.0 L422.3 153.5 L430.7 164.0 L439.1 174.4 L445.4 184.9 L457.9 193.3 L464.2 200.0 L461.2 201.7 L472.0 216.1 L482.9 230.5 L504.5 239.6 M404.6 132.6 L414.0 136.8 L426.5 134.7 L439.1 132.6 L436.0 131.5 L490.1 136.9 L526.1 147.7 L554.9 158.5 L580.1 158.5 L601.7 153.1 L616.1 147.7 L634.1 149.5 L652.2 144.1 L666.6 136.9 L688.2 122.5 L713.4 108.1 L742.2 93.7 L774.6 81.1 L806.0 72.0 M587.3 6.5 L587.3 21.6 L601.7 43.2 L599.9 72.0 L603.5 95.5 L590.9 108.1 L594.5 122.5 L608.9 136.9 L616.1 147.7 M616.1 147.7 L594.5 158.5 L572.9 187.3 L554.9 212.5 L536.9 226.9 L522.5 237.8 L504.5 239.6 M659.4 144.1 L673.8 162.1 L684.6 176.5 L691.8 187.3 L713.4 189.1 L742.2 181.9 L774.6 176.5 L806.0 172.9 M713.4 189.1 L724.2 201.7 L721.9 200.0 L728.2 208.4 L736.5 215.7 L744.9 215.7 L751.2 223.0 L757.5 231.4 L760.6 241.9 L763.7 254.4 L767.9 269.1 L770.0 280.6 L778.4 286.9 L786.8 294.2 L793.1 300.5 L799.3 304.7 L806.0 307.8 M739.7 255.5 L740.7 261.8 L749.1 269.1 L759.6 274.3 L770.0 280.6 M504.5 239.6 L497.3 259.4 L486.5 279.9 M504.5 239.6 L522.5 241.4 L533.3 248.6 L536.9 263.0 L538.7 279.9 M397.1 280.0 L398.5 301.8 L399.8 323.6 L401.2 345.4 L402.5 361.7 L405.3 380.8 M404.6 132.6 L403.5 147.2 L401.4 159.8 L400.4 168.2 L397.2 180.7 L396.2 200.0 L394.0 230.0 L396.0 280.0 M405.3 380.8 L403.9 394.4 L408.0 408.0 L416.2 424.4 L424.3 440.7 L432.5 459.8 L439.3 472.0 M405.3 380.8 L413.4 364.4 L427.1 353.5 L446.1 337.2 L459.8 323.6 L467.9 310.0 L476.1 296.3 L487.0 280.0 M405.3 380.8 L413.4 369.9 L424.3 365.8 L440.7 363.1 L467.9 364.4 L495.2 359.0 L517.0 354.9 L536.0 352.2 L560.0 352.2 M405.3 380.8 L397.1 384.9 L386.2 391.7 L375.3 397.1 L364.4 399.9 L350.8 401.2 L339.9 405.3 L329.0 416.2 L318.1 427.1 L304.5 440.7 L290.9 457.1 L277.2 468.0 L263.6 472.0 L259.8 474.0 M387.6 386.2 L402.5 384.9 M439.3 472.0 L462.5 472.0 L484.3 465.2 L503.3 454.3 L517.0 440.7 L525.1 427.1 L536.0 413.5 L549.6 399.9 M558.5 350.7 L565.7 347.4 L576.5 347.4 M580.1 358.3 L569.3 367.3 L558.5 378.1 L553.1 388.9 L549.9 399.0 M580.1 336.6 L572.9 324.0 L562.1 309.6 L551.3 295.2 L544.1 284.4 L542.3 270.0 M585.5 334.8 L580.1 316.8 L576.5 306.0 L583.7 295.2 M592.7 336.6 L590.0 336.1 L598.4 329.8 L608.8 322.5 L621.4 318.3 L631.9 314.1 L644.4 307.8 L657.0 298.4 L669.5 290.0 L682.1 283.7 L694.7 280.6 L707.2 275.4 L719.8 267.0 L728.2 256.5 L740.7 252.3 L753.3 246.1 L761.7 240.8 L774.2 234.5 L788.9 228.3 L806.0 223.0 M594.5 352.9 L616.1 358.3 L645.0 364.4 L673.8 369.1 L706.2 372.7 L735.0 372.7 L756.6 370.9 L774.6 361.9 L792.7 351.1 L806.0 342.0 M587.3 360.1 L596.3 374.5 L605.3 392.5 L616.1 410.5 L626.9 421.3 L634.1 430.3 M634.1 430.3 L645.0 439.3 L659.4 450.1 L681.0 457.3 L706.2 464.5 L731.4 469.9 L760.2 477.1 L781.8 482.5 L806.0 489.7 M634.1 430.3 L630.5 450.1 L628.7 471.7 L630.5 493.3 L634.1 515.0 L641.4 536.6 L648.6 549.9 M439.6 471.7 L432.4 486.1 M580.1 334.8 L590.9 334.8 L595.2 340.2 L595.6 354.7 L590.9 360.1 L580.1 360.1 L575.8 354.7 L575.8 340.2 L580.1 334.8 M584.8 327.6 L584.8 367.3 M500.1 616.4 L515.3 615.6 L533.3 621.1 L551.3 628.3 L572.9 635.5 L594.5 639.1 L616.1 640.9 L645.0 645.2 L666.6 649.9 L688.2 653.5 L706.2 658.9 L724.2 660.7 L745.8 658.9 L767.4 656.0 L781.8 656.0 M648.6 540.0 L652.2 561.6 L657.6 586.8 L666.6 612.0 L681.0 633.7 L695.4 648.1 L706.2 658.9 L717.0 676.9 L724.2 694.9 L735.0 712.9 L742.2 730.9 L747.6 752.5 L749.4 774.1 L751.2 792.2 M799.9 561.6 L789.0 586.8 L785.4 612.0 L781.8 633.7 L780.0 655.3 L787.2 666.1 L796.3 673.3 L803.5 684.1 L806.0 694.9 M780.0 644.5 L776.4 658.9 L781.8 669.7 L787.2 666.1 M131.8 540.0 L128.3 575.1 L126.5 610.3 L128.3 638.4 L135.3 659.5 L140.6 670.1 L154.7 680.6 L159.9 684.8 M225.0 540.0 L214.4 561.1 L212.7 585.7 L207.4 610.3 L196.8 631.4 L189.8 652.5 L186.3 657.8 M128.3 640.2 L147.6 641.9 L165.2 649.0 L186.3 656.7 M6.3 661.3 L28.1 654.2 L52.7 647.2 L80.8 641.9 L105.4 640.2 L128.3 640.2 M186.3 656.7 L203.9 654.2 L225.0 649.0 L246.0 643.7 L267.1 643.7 L283.0 641.2 M130.1 664.8 L140.6 675.3 L159.9 684.8 L168.7 680.6 L186.3 657.8 M432.0 490.0 L423.6 508.7 L410.4 529.3 L399.2 545.2 L386.1 561.2 L373.0 570.5 L358.0 581.8 L344.9 591.1 L333.7 597.7 L320.6 600.5 L312.1 604.2 L307.5 609.9 L305.6 621.1 L304.6 628.6 M283.1 641.3 L294.3 636.1 L304.6 628.6 L313.1 623.9 L322.4 623.9 L335.5 625.8 L344.9 628.6 L352.4 632.3 L359.9 633.3 L367.4 635.1 L376.7 637.9 L382.4 635.1 L388.0 631.4 L397.3 624.8 L408.6 620.1 L419.8 618.3 L432.9 619.2 L444.2 616.4 L453.5 620.1 L470.0 619.2 L476.0 615.3 L500.0 617.2 M6.3 619.1 L12.3 624.4 L14.1 638.4 L10.5 652.5 L7.0 661.3 M172.1 302.0 L175.7 322.7 L181.0 350.8 L183.5 375.4 L179.3 393.0 L168.7 417.6 L161.7 435.2 L158.2 456.3 L152.9 477.4 L147.6 487.9 L138.8 509.0 L133.6 530.1 L130.8 550.1 M6.3 459.8 L52.7 465.1 L98.4 473.9 L151.1 477.4 L210.9 475.6 L260.1 473.9 M260.1 473.9 L246.0 502.0 L232.0 530.1 L217.9 550.1" fill="none" stroke="#7e6914" stroke-width="1"/>
<path d="M6.3 104.7 L154.7 104.7 L159.9 114.2 L158.2 123.0 L151.1 131.8 L145.9 138.8 L138.8 148.7 L186.3 148.7 M209.1 104.7 L281.2 104.7 L280.0 104.9 L311.4 104.9 L310.4 89.2 L325.0 91.8 L363.7 91.3 L400.2 90.9 M225.5 54.3 L229.3 49.6 L232.1 45.9 L235.8 41.2 L240.5 39.3 L246.1 40.3 L249.9 42.1 L255.5 44.9 L261.1 47.8 L266.7 49.6 L272.4 53.4 L278.0 54.7 L281.7 52.4 L283.6 46.8 L281.7 41.2 L278.0 37.5 L276.5 33.7 L278.0 29.0 L281.7 24.3 L287.3 22.5 L294.8 20.6 L302.3 18.7 L308.9 16.9 L309.8 12.2 L307.9 8.4 L305.1 6.0 M145.9 238.3 L400.0 239.0 M299.5 238.3 L307.6 247.8 L305.8 280.1 M400.0 90.1 L508.1 94.4 L572.9 96.5 L634.1 96.5 L688.2 96.5 L760.2 95.5 L787.2 94.4 L806.0 98.0 M636.0 95.5 L652.2 88.3 L666.6 84.7 L677.4 81.1 L684.6 73.8 L695.4 70.2 L699.0 61.2 L708.0 55.8 L709.8 48.6 L724.2 41.4 L738.6 34.2 L751.2 23.4 L760.2 16.2 L763.8 12.6 L756.6 7.2 L747.6 5.8 M763.8 12.6 L764.6 21.6 L771.0 28.8 L778.2 36.0 L785.4 41.4 L796.3 39.6 L806.0 34.2 M787.2 94.4 L783.6 104.5 L781.8 115.3 L778.2 118.9 L771.0 122.5 L763.8 129.7 L760.2 136.9 L751.2 138.7 L742.2 136.2 L736.8 138.7 L729.6 144.1 L722.4 151.3 L717.0 149.5 L715.2 144.1 L709.8 145.9 L702.6 153.1 L695.4 154.9 L693.6 162.1 L688.2 167.5 L681.0 169.3 L673.8 172.9 L666.6 174.7 L659.4 180.1 L652.2 185.5 L648.6 187.3 L637.8 187.3 L626.9 189.1 L619.7 192.7 L612.5 198.1 L608.9 205.3 L607.1 212.5 L601.7 215.4 L596.3 214.3 L590.9 217.9 L589.1 230.5 L588.0 238.5 M400.0 237.8 L493.7 238.8 L588.0 238.5 L677.4 237.8 L688.2 234.1 L699.0 230.5 L713.4 226.9 L724.2 222.6 L731.4 219.7 L742.2 220.5 L760.2 220.8 L806.0 222.6 M678.2 238.1 L678.5 239.2 L678.2 240.7 L677.1 242.1 L676.1 242.7 L675.9 243.5 L675.3 245.3 L673.4 245.5 L672.3 245.6 L671.9 246.5 L670.9 247.7 L669.7 248.7 L668.0 248.7 L668.1 250.0 L667.5 251.8 L665.5 252.4 L665.0 253.1 L664.7 254.3 L663.8 256.0 L662.8 257.0 L662.4 257.8 L662.2 259.5 L661.5 261.1 L660.4 262.1 L661.2 263.1 L661.8 264.3 L662.1 266.4 L662.8 266.8 L664.5 266.9 L665.6 268.5 L666.3 269.6 L667.1 270.1 L668.6 270.4 L670.1 271.3 L670.2 273.0 L671.4 272.7 L672.7 273.2 L674.1 274.3 L674.6 275.5 L675.3 276.1 L677.4 276.3 L678.2 278.1 L678.3 279.2 L680.1 278.9 L681.4 280.1 L682.1 281.5 L682.8 281.7 L684.1 282.1 L685.9 282.6 L686.5 284.4 L687.4 284.1 L689.0 282.9 L690.8 283.9 L691.8 284.3 L692.9 283.4 L695.0 283.8 L695.2 285.3 L695.6 286.1 L696.7 287.2 L697.7 288.9 L697.4 290.4 L698.0 291.1 L699.8 292.2 L699.6 294.2 L699.6 295.2 L701.4 295.7 L702.0 297.5 L702.1 298.8 L702.7 299.3 L703.8 300.2 L705.1 301.4 L704.5 302.9 L705.1 303.6 L705.9 304.8 L706.0 306.6 L705.8 307.8 L705.5 308.9 L707.4 309.3 L707.9 311.0 L708.1 312.4 L708.6 312.9 L709.7 313.8 L711.1 314.9 L710.8 316.8 L711.7 317.1 L713.7 317.7 L713.8 319.8 L714.2 320.6 L716.0 320.9 L716.2 322.9 L716.2 324.2 L716.6 324.9 L717.5 326.2 L718.3 327.6 L718.1 329.3 L719.2 329.3 L720.7 329.9 L721.6 331.5 L722.1 332.5 L722.5 333.1 L724.3 333.3 L725.3 334.8 L725.8 335.9 L726.8 335.8 L728.2 336.3 L729.8 336.9 L730.0 338.7 L731.0 338.5 L732.4 338.8 L733.7 339.9 L734.1 341.2 L734.5 341.9 L736.5 341.7 L737.3 343.4 L737.8 344.5 L738.4 344.9 L739.9 345.3 L741.4 346.5 L740.8 348.1 L741.7 348.4 L742.6 349.4 L743.7 350.7 L743.4 352.2 L743.8 352.8 L745.3 353.3 L745.8 355.1 L746.2 356.2 L745.9 357.2 L747.6 357.5 L748.3 359.1 L748.5 360.5 L748.8 361.6 L750.1 361.6 L752.0 361.8 L752.7 363.6 L753.4 363.9 L755.3 363.4 L756.5 365.0 L757.2 365.6 L757.6 366.3 L758.9 367.4 L759.5 369.0 L759.0 370.6 L760.2 370.6 L761.4 371.4 L762.6 372.6 L762.8 374.0 L763.3 374.4 L764.9 375.2 L764.7 377.2 L764.8 378.3 L764.9 379.1 L766.2 380.1 L766.8 381.8 L766.0 383.3 L766.9 383.8 L767.4 385.0 L768.8 386.2 L768.8 387.7 L769.2 388.4 L771.1 388.6 L771.6 390.5 L772.0 391.6 L772.7 392.1 L774.1 393.0 L775.2 394.3 L774.8 395.9 L776.1 396.0 L777.4 396.9 L778.1 398.5 L778.4 399.5 L778.9 400.3 L780.9 400.7 L781.2 402.6 L781.5 403.8 L782.7 403.8 L784.1 404.6 L785.4 405.6 L785.5 407.0 L786.7 406.9 L788.5 407.3 L789.1 409.3 L789.9 409.6 L791.1 409.8 L792.8 410.4 L793.8 411.6 L794.1 412.6 L795.9 412.1 L797.4 413.2 L797.4 414.5 L798.4 415.0 L799.0 416.2 L799.8 417.8 L799.2 419.2 L799.6 419.9 L801.2 420.9 L800.8 422.9 L801.0 423.9 L801.2 424.6 L802.3 425.8 L802.4 427.6 L801.4 428.8 L802.1 429.4 L802.6 430.7 L803.3 432.3 L802.1 433.6 L802.5 434.3 L803.3 435.4 L803.6 437.0 L803.2 438.4 L803.5 439.3 M491.9 238.8 L499.1 279.9 M497.3 270.0 L500.9 288.0 L508.1 324.0 L513.5 360.1 L518.9 392.5 L524.3 424.9 L527.9 439.3 L533.3 450.1 L538.6 470.0 L539.2 476.3 L544.5 479.4 L545.5 483.6 L540.3 485.7 L535.0 489.9 L533.4 495.1 L532.9 501.4 L532.9 539.1 L534.0 549.6 L531.9 558.0 L529.8 566.3 L529.8 574.7 L531.9 579.9 L536.1 586.2 L537.7 593.6 L539.2 598.8 L541.3 604.0 L544.9 616.6 L547.6 620.2 L745.8 631.9 M6.3 415.2 L79.1 415.2 M305.1 270.0 L297.0 340.3 L288.2 445.7 L279.4 516.0 L281.2 550.1 M204.0 6.0 L201.2 11.2 L204.9 15.9 L207.8 20.6 L208.7 28.1 L203.1 30.9 L201.2 34.6 L205.9 38.4 L207.8 44.9 L210.6 50.6 L212.4 56.2 L217.1 58.1 L221.8 56.2 L226.5 56.2 L229.3 59.9 L232.1 63.7 L231.2 71.2 L227.4 74.9 L230.2 80.5 L226.5 84.3 L225.5 89.9 L227.4 93.6 L223.7 98.3 L219.9 98.3 L216.2 93.6 L213.4 92.7 L210.6 99.3 L209.6 104.9 L206.8 108.6 L203.1 107.7 L204.0 103.0 L204.0 99.3 L200.3 97.4 L197.5 100.2 L198.4 103.9 L202.1 105.8 L204.9 107.7 L201.2 111.4 L197.5 116.1 L194.6 119.9 L196.5 123.6 L200.3 125.5 L197.5 127.3 L191.8 126.4 L188.1 128.3 L190.9 132.0 L194.6 134.8 L196.5 138.6 L191.8 141.4 L189.0 144.2 L187.2 152.1 L187.1 150.0 L191.8 153.7 L192.7 158.4 L188.0 160.3 L184.3 163.1 L187.1 165.9 L182.4 167.8 L178.7 170.6 L171.2 171.5 L169.3 175.3 L172.1 178.1 L175.8 180.0 L174.0 183.7 L169.3 185.6 L172.1 192.1 L167.4 189.3 L162.7 190.3 L160.9 194.9 L162.7 198.7 L159.9 201.5 L154.3 201.5 L153.4 205.2 L158.1 206.2 L161.8 203.4 L158.1 208.1 L154.3 211.8 L153.4 215.5 L157.1 217.4 L159.9 220.2 L157.1 223.0 L159.0 226.8 L154.3 226.8 L152.4 232.4 L147.8 233.3 L143.1 235.2 L144.0 239.0 L147.8 241.8 L146.8 247.4 L143.1 251.1 L137.5 252.1 L134.6 248.3 L130.9 248.3 L130.0 253.0 L132.8 256.7 L128.1 255.8 L124.3 258.6 L126.2 262.4 L130.9 264.2 L130.0 268.9 L126.2 269.9 L123.4 266.1 L122.5 273.6 L125.3 279.2 L123.4 284.8 L123.4 290.4 L118.7 293.3 L114.0 294.2 L109.4 295.1 L111.2 298.9 L115.0 297.9 L114.0 302.1 L110.7 301.5 L110.6 303.5 L109.4 303.9 L107.8 303.9 L106.4 304.6 L105.3 306.1 L104.1 306.9 L102.3 305.7 L100.5 303.3 L98.2 306.6 L98.9 306.5 L100.5 306.4 L101.8 306.3 L102.1 306.8 L102.2 307.6 L102.9 308.6 L105.1 309.7 L106.8 310.8 L107.3 312.3 L105.9 314.0 L102.1 314.5 L100.5 313.3 L100.1 313.7 L100.1 314.4 L100.1 314.2 L99.6 313.5 L99.1 313.5 L99.6 315.4 L100.2 318.8 L99.8 320.7 L98.3 321.2 L96.2 320.7 L95.1 320.5 L94.3 321.6 L94.2 322.6 L93.1 322.7 L91.4 322.4 L89.7 322.0 L89.8 321.9 L91.6 322.9 L93.7 324.4 L94.5 325.7 L93.7 326.8 L92.2 329.1 L90.9 330.2 L89.5 331.7 L87.8 331.1 L85.9 328.2 L84.9 326.2 L82.8 330.4 L84.4 330.3 L85.8 330.2 L86.0 330.6 L86.0 331.4 L86.8 332.4 L88.7 333.5 L90.8 334.7 L91.0 336.4 L89.3 338.1 L87.4 339.5 L85.9 340.6 L86.1 341.0 L87.0 341.6 L86.9 341.8 L86.2 342.5 L86.3 342.8 L88.7 342.1 L91.4 341.6 L93.6 342.0 L93.7 347.6 L91.3 347.6 L89.8 348.0 L89.0 348.9 L88.5 349.7 L87.3 349.3 L85.7 348.3 L84.4 347.1 L84.1 347.1 L85.1 348.4 L86.6 350.3 L87.2 352.0 L86.2 353.5 L84.6 353.9 L83.4 355.0 L82.1 356.7 L80.7 356.9 L79.1 355.5 L77.3 352.9 L76.7 351.7 L76.7 352.5 L77.1 353.9 L77.4 354.7 L74.2 354.9 L74.6 355.7 L76.1 356.3 L78.4 356.7 L80.6 357.6 L80.5 359.7 L78.3 362.2 L77.1 363.8 L77.2 364.5 L77.8 364.7 L77.4 364.9 L76.8 363.2 L76.5 363.3 L77.7 364.4 L80.0 366.3 L81.4 368.3 L80.7 369.7 L78.9 370.7 L77.0 371.8 L76.5 373.0 L76.2 373.9 L74.9 373.9 L74.2 376.4 L73.6 377.4 L74.4 376.3 L76.4 374.4 L78.2 373.3 L79.2 374.1 L80.1 375.4 L81.6 376.1 L83.4 376.3 L84.7 377.1 L83.5 380.5 L81.2 381.5 L79.3 382.1 L79.7 382.1 L81.1 382.1 L82.4 382.0 L82.7 382.3 L82.8 383.2 L84.0 384.2 L86.5 385.5 L87.8 387.1 L86.6 388.9 L84.2 390.4 L82.3 391.5 L82.0 391.9 L82.8 390.6 L83.0 390.7 L82.3 390.5 L82.0 390.8 L83.0 392.6 L84.5 395.3 L84.8 397.3 L83.2 398.3 L80.3 398.4 L78.3 398.7 L79.2 400.0 L78.9 400.3 L77.7 400.9 L76.3 401.3 L76.7 401.4 L78.8 401.2 L81.5 401.1 L83.2 401.7 L83.4 403.4 L83.0 405.3 L83.4 406.9 L84.2 408.1 L84.3 409.1 L81.6 410.0 L79.0 409.3 L78.0 409.1 L79.0 409.6 L80.9 410.6 L82.0 411.5 L81.9 412.3 L81.3 413.3 L81.4 414.8 L82.3 416.9 L82.7 418.9 L81.8 418.6 L79.2 420.1 L76.9 421.2 L76.8 421.5 L77.7 421.7 L78.4 421.6 L78.2 421.8 L77.7 422.2 L78.4 422.7 L80.5 423.3 L82.9 424.1 L84.5 425.3 L83.9 427.2 L82.2 429.3 L80.5 430.4 L80.0 431.4 L80.1 432.2 L79.7 432.6 L78.3 432.6 L76.5 432.2 L76.4 432.3 L78.5 432.9 L80.7 433.9 L82.1 435.1 L81.9 436.4 L80.8 437.9 L80.4 438.0 L81.9 438.6 L82.9 439.6 L82.1 441.5 L80.8 443.5 L79.7 444.9 L80.0 444.6 L81.4 443.3 L82.8 442.3 L83.6 442.4 L84.4 443.2 L85.9 443.7 L88.7 444.5 L90.2 445.6 L89.6 447.6 L87.7 449.8 L86.0 451.4 L85.9 451.9 L86.9 451.6 L87.5 451.5 L87.3 451.8 L88.6 450.4 L88.9 451.4 L90.1 453.2 L91.7 455.9 L91.5 457.5 L89.2 458.3 L86.6 458.5 L85.3 459.1 L84.9 459.7 L84.4 459.7 L83.1 459.1 L81.9 458.6 L80.9 462.3 L83.4 461.3 L86.2 460.6 L87.7 461.2 L87.8 462.9 L87.9 464.9 L88.7 466.2 L89.8 467.1 L89.8 468.2 L88.4 469.8 L86.5 471.3 L85.7 471.8 L88.0 472.8 L89.0 471.1 L89.9 470.1 L90.7 470.1 L91.9 470.6 L93.5 470.4 L95.8 469.4 L97.5 469.7 L98.0 472.3 L97.8 475.2 L97.6 476.9 L95.9 472.8 L96.6 473.6 L96.9 473.8 L96.5 473.8 L96.3 474.6 L97.5 477.0 L98.3 479.3 L98.2 481.2 L96.5 481.8 L94.0 481.8 L92.1 482.0 L91.2 482.6 L90.9 483.2 L90.2 483.1 L88.7 482.3 L87.7 481.7 L88.5 482.4 L90.5 484.6 L91.6 486.5 L91.2 487.9 L89.6 488.7 L88.2 489.8 L87.6 491.4 L87.0 492.5 L85.0 492.2 L82.5 490.9 L81.2 490.0 L81.8 490.6 L83.6 492.0 L84.4 493.2 L82.3 493.2 L82.8 494.3 L84.6 495.3 L86.7 496.0 L87.8 497.5 L86.7 499.5 L84.2 501.8 L83.1 502.9 L83.7 502.6 L85.6 500.7 L85.5 500.9 L85.0 500.9 L84.9 501.9 L85.6 504.3 L86.2 507.2 L85.5 508.5 L83.7 508.7 L81.3 508.3 L79.5 508.1 L78.6 508.5 L78.3 509.3 L77.8 509.5 L76.9 509.0 L75.7 507.7 L75.3 507.5 L76.7 509.1 L78.4 511.9 L78.6 513.8 L77.1 514.5 L75.4 514.9 L74.2 515.7 L73.4 517.1 L72.5 517.7 L70.8 517.0 L68.9 514.9 L67.9 513.9 L68.5 514.7 L69.6 516.6 L70.1 518.1 L69.6 518.7 L68.5 519.3 L67.8 521.1 L67.3 523.6 L68.5 521.0 L66.8 523.3 L64.7 525.2 L63.8 526.2 L64.5 525.9 L65.6 525.3 L65.9 525.3 L65.8 526.0 L66.4 526.6 L70.2 528.5 L70.2 531.4 L69.0 532.8 L66.5 532.0 L64.2 530.8 L62.8 530.3 L62.4 530.7 L62.3 530.7 L61.7 529.9 L61.0 529.1 L61.1 529.6 L61.8 532.1 L62.5 533.8 L62.6 535.5 L61.1 536.4 L59.0 537.0 L57.8 537.9 L57.2 539.2 L56.1 539.5 L54.1 538.5 L52.3 537.4 L51.9 537.2 L51.8 540.2 L54.3 540.0 L55.8 540.3 L55.9 541.3 L55.9 542.6 L56.6 544.0 L58.1 545.4 L59.0 546.7 L58.3 548.0 L56.3 549.4 L53.5 550.5 L52.9 550.9 L55.7 547.5 L55.8 548.9 L55.5 549.2 L55.0 549.0 L52.0 548.7 L53.4 550.1 L55.3 551.8 L56.4 553.5 L55.2 555.0 L52.9 556.0 L50.9 556.8 L50.1 557.5 L50.3 558.1 L50.1 558.3 L48.9 558.0 L47.8 560.7 L48.2 560.6 L50.3 560.0 L53.1 559.2 L55.1 559.6 L55.3 561.7 L55.3 563.9 L54.1 566.4 L53.3 567.3 L52.1 567.1 L50.2 565.2 L48.9 563.8 L48.8 563.9 L50.0 565.6 L51.1 567.7 L50.9 568.8 L49.7 569.3 L48.7 569.1 L50.2 570.4 L51.2 571.9 L50.4 573.4 L48.1 574.8 L46.0 575.8 L45.2 576.2 L46.2 576.0 L47.4 575.9 L47.8 576.0 L47.6 576.5 L50.2 577.2 L50.2 579.7 L50.1 582.6 L48.6 583.7 L46.1 582.8 L43.8 581.6 L42.5 581.4 L42.9 583.6 L42.8 583.6 L41.9 583.9 L41.1 584.0 L42.4 584.1 L44.8 584.6 L47.6 585.4 L48.3 586.8 L47.4 588.5 L46.3 590.2 L46.0 591.7 L46.5 592.8 L46.7 593.6 L45.7 594.4 L45.7 593.8 M45.7 594.5 L186.3 594.5 L185.4 593.4 L186.2 594.7 L186.1 596.5 L184.5 597.6 L184.2 598.3 L184.0 599.2 L184.6 601.3 L182.9 602.4 L182.1 603.0 L182.6 604.1 L182.2 605.6 L181.6 607.2 L179.9 607.4 L180.7 608.5 L180.4 610.1 L179.6 611.6 L178.3 612.1 L178.1 612.8 L178.9 614.6 L177.6 615.9 L177.4 617.0 L177.3 617.7 L178.7 619.0 L178.6 620.8 L177.4 621.9 L178.7 622.5 L179.1 624.1 L179.2 625.8 L178.4 626.8 L178.8 627.7 L180.8 628.2 L180.9 630.3 L181.4 631.1 L181.8 631.7 L183.7 632.2 L184.4 633.9 L184.0 635.4 L185.5 635.2 L186.7 636.5 L186.9 638.3 L186.9 639.2 L187.6 640.1 L189.2 641.6 L188.5 643.4 L188.5 644.2 L190.6 645.0 L190.2 647.1 L189.8 648.4 L190.2 649.1 L191.0 650.5 L191.5 652.3 L190.3 653.6 L191.0 654.3 L192.4 655.5 L192.1 657.6 L192.4 658.6 L193.0 659.2 L194.4 660.4 L195.0 662.1 L194.1 663.2 L195.6 663.7 L196.2 665.3 L196.0 667.0 L195.6 667.9 L196.2 668.5 L196.8 670.1 M280.5 540.0 L283.0 592.7 L285.4 645.4 M470.0 593.9 L344.9 593.9 L342.1 600.5 L341.2 606.1 L344.9 611.7 L350.5 617.3 L358.0 622.0 L359.0 628.6 L356.1 634.2 L357.1 642.1 M470.0 593.9 L536.5 593.9 M690.0 628.7 L744.2 631.6 L744.2 636.6 L746.2 640.5 L746.2 647.4 L749.1 650.3 L757.0 651.3 L758.6 646.4 L759.0 638.5 L760.0 632.6 L758.0 626.7 L757.0 618.8 L759.0 613.9 L763.9 610.0 L768.8 609.4 L772.8 611.9 L778.7 613.9 L785.6 615.9 L788.5 617.8" fill="none" stroke="#000" stroke-width="1"/>
<path d="M123.0 655.0 L128.0 652.0 L134.0 654.0 L136.0 660.0 L134.0 667.0 L128.0 669.0 L123.0 666.0 L121.0 660.0 Z" fill="#2c4a6c"/>
<path d="M144.2 695.6 L149.8 694.6 L153.9 698.4 L155.1 704.9 L151.7 708.7 L147.9 713.4 L143.3 714.3 L140.4 709.6 L143.3 704.0 L145.1 700.3 Z" fill="#2c4a6c"/>
<path d="M42.7 680.2 L46.8 681.0 L50.6 685.3 L51.5 689.0 L46.8 689.6 L44.0 685.3 Z" fill="#2c4a6c"/>
<path d="M59.6 684.3 L61.8 688.1 L64.6 693.7 L66.5 698.4 L71.2 702.1 L76.8 704.6 L82.4 705.9 L84.6 709.6 L80.5 710.6 L74.9 707.8 L69.3 705.9 L64.6 704.0 L60.9 698.4 L57.7 691.8 Z" fill="#2c4a6c"/>
<path d="M784.2 732.1 L787.0 734.9 L789.8 738.7 L794.5 743.3 L796.3 747.1 L794.5 753.6 L789.8 754.6 L787.9 749.9 L785.1 745.2 L784.2 738.7 Z" fill="#2c4a6c"/>
<path d="M769.2 791.1 L772.9 789.2 L778.5 789.6 L779.5 792.0 L769.2 792.0 Z" fill="#2c4a6c"/>
<path d="M540.9 602.4 L543.4 606.1 L544.9 612.4 L549.7 613.5 L552.8 610.3 L555.3 606.1 L557.0 603.0 L558.1 606.1 L556.6 610.7 L563.3 610.3 L563.7 613.5 L557.0 614.5 L551.8 616.6 L548.6 620.4 L544.9 619.1 L541.3 615.5 L541.3 608.2 Z" fill="#2c4a6c"/>
<path d="M526.0 501.8 L528.7 504.6 L531.9 501.4 L534.0 503.5 L531.9 508.7 L530.2 514.0 L529.8 520.3 L531.9 525.5 L536.1 525.5 L532.9 529.7 L535.0 533.9 L532.9 539.1 L529.8 536.0 L525.6 531.8 L528.7 528.6 L526.6 524.5 L525.2 519.2 L526.6 512.9 L528.7 508.7 L526.6 505.6 Z" fill="#2c4a6c"/>
<path d="M613.0 285.8 L616.2 289.0 L615.1 293.2 L619.3 292.1 L621.4 286.9 L623.5 292.1 L627.7 293.2 L624.5 297.3 L621.4 300.5 L619.3 304.7 L615.1 306.8 L610.9 309.9 L607.8 313.0 L604.7 309.9 L606.7 306.8 L610.9 304.7 L613.0 299.4 L612.0 294.2 Z" fill="#2c4a6c"/>
<path d="M446.8 363.3 L449.0 364.0 L448.3 366.3 L452.0 365.5 L450.5 368.5 L447.5 369.9 L446.1 372.9 L443.8 373.6 L444.6 376.6 L441.6 377.3 L440.9 375.9 L438.7 377.3 L438.4 375.9 L440.9 373.6 L442.4 370.7 L444.6 368.5 L446.1 365.5 Z" fill="#2c4a6c"/>
<path d="M424.2 413.5 L426.1 415.8 L426.8 419.5 L428.3 420.2 L427.6 422.4 L429.1 426.8 L432.0 429.1 L431.3 432.0 L430.5 435.0 L428.3 434.2 L429.1 431.3 L426.8 429.1 L425.4 425.4 L425.1 420.9 L424.2 417.2 Z" fill="#2c4a6c"/>
<path d="M299.5 59.9 L303.3 58.1 L305.1 55.2 L309.8 56.2 L313.6 58.1 L314.5 63.7 L317.3 68.4 L322.9 71.2 L322.9 74.0 L319.2 74.0 L320.1 80.5 L322.9 88.0 L323.9 93.6 L322.5 96.4 L320.1 89.9 L316.4 84.3 L314.5 78.7 L313.6 71.2 L310.7 65.5 L308.9 59.9 L306.1 59.9 L304.2 62.7 L300.4 62.7 Z" fill="#2c4a6c"/>
<path d="M367.9 261.6 L370.1 259.5 L373.7 257.9 L376.9 259.5 L380.1 262.2 L383.2 264.3 L387.5 265.3 L390.6 267.4 L392.7 270.6 L395.4 273.2 L396.9 276.4 L393.8 275.3 L390.6 272.7 L386.4 270.6 L382.2 269.0 L378.0 266.4 L375.3 262.7 L371.6 261.1 L369.0 262.7 Z" fill="#2c4a6c"/>
<path d="M395 247.5h25M386 248.5h9M420 248.5h9M379 249.5h7M429 249.5h7M374 250.5h5M436 250.5h5M370 251.5h4M441 251.5h4M366 252.5h4M445 252.5h4M362 253.5h4M449 253.5h4M359 254.5h3M453 254.5h3M356 255.5h3M456 255.5h3M353 256.5h3M459 256.5h3M350 257.5h3M462 257.5h3M348 258.5h2M465 258.5h2M346 259.5h2M467 259.5h2M343 260.5h3M469 260.5h3M341 261.5h2M472 261.5h2M339 262.5h2M474 262.5h2M337 263.5h2M476 263.5h2M335 264.5h2M478 264.5h2M333 265.5h2M480 265.5h2M331 266.5h2M482 266.5h2M329 267.5h2M484 267.5h2M327 268.5h2M486 268.5h2M326 269.5h1M488 269.5h1M324 270.5h2M489 270.5h2M322 271.5h2M491 271.5h2M321 272.5h1M493 272.5h1M319 273.5h2M494 273.5h2M318 274.5h1M496 274.5h1M316 275.5h2M497 275.5h2M315 276.5h1M499 276.5h1M314 277.5h1M500 277.5h1M312 278.5h2M501 278.5h2M311 279.5h1M503 279.5h1M310 280.5h1M504 280.5h1M308 281.5h2M505 281.5h2M307 282.5h1M507 282.5h1M306 283.5h1M508 283.5h1M305 284.5h1M509 284.5h1M303 285.5h2M510 285.5h2M302 286.5h1M512 286.5h1M301 287.5h1M513 287.5h1M300 288.5h1M514 288.5h1M299 289.5h1M515 289.5h1M298 290.5h1M516 290.5h1M297 291.5h1M517 291.5h1M296 292.5h1M518 292.5h1M295 293.5h1M519 293.5h1M294 294.5h1M520 294.5h1M293 295.5h1M521 295.5h1M292 296.5h1M522 296.5h1M291 297.5h1M523 297.5h1M290 298.5h1M524 298.5h1M289 299.5h1M525 299.5h1M288 300.5h1M526 300.5h1M287 301.5h1M527 301.5h1M286 302.5h1M528 302.5h1M285 303.5h1M529 303.5h1M285 304.5h1M529 304.5h1M284 305.5h1M530 305.5h1M283 306.5h1M531 306.5h1M282 307.5h1M532 307.5h1M281 308.5h1M533 308.5h1M281 309.5h1M533 309.5h1M280 310.5h1M534 310.5h1M279 311.5h1M535 311.5h1M278 312.5h1M536 312.5h1M278 313.5h1M536 313.5h1M277 314.5h1M537 314.5h1M276 315.5h1M538 315.5h1M275 316.5h1M539 316.5h1M275 317.5h1M539 317.5h1M274 318.5h1M540 318.5h1M273 319.5h1M541 319.5h1M273 320.5h1M541 320.5h1M272 321.5h1M542 321.5h1M271 322.5h1M543 322.5h1M271 323.5h1M543 323.5h1M270 324.5h1M544 324.5h1M270 325.5h1M544 325.5h1M269 326.5h1M545 326.5h1M268 327.5h1M546 327.5h1M268 328.5h1M546 328.5h1M267 329.5h1M547 329.5h1M267 330.5h1M547 330.5h1M266 331.5h1M548 331.5h1M266 332.5h1M548 332.5h1M265 333.5h1M549 333.5h1M265 334.5h1M549 334.5h1M264 335.5h1M550 335.5h1M264 336.5h1M550 336.5h1M263 337.5h1M551 337.5h1M263 338.5h1M551 338.5h1M262 339.5h1M552 339.5h1M262 340.5h1M552 340.5h1M261 341.5h1M553 341.5h1M261 342.5h1M553 342.5h1M260 343.5h1M554 343.5h1M260 344.5h1M554 344.5h1M260 345.5h1M554 345.5h1M259 346.5h1M555 346.5h1M259 347.5h1M555 347.5h1M258 348.5h1M556 348.5h1M258 349.5h1M556 349.5h1M257 350.5h1M557 350.5h1M257 351.5h1M557 351.5h1M257 352.5h1M557 352.5h1M256 353.5h1M558 353.5h1M256 354.5h1M558 354.5h1M256 355.5h1M558 355.5h1M255 356.5h1M559 356.5h1M255 357.5h1M559 357.5h1M255 358.5h1M559 358.5h1M254 359.5h1M560 359.5h1M254 360.5h1M560 360.5h1M254 361.5h1M560 361.5h1M253 362.5h1M561 362.5h1M253 363.5h1M561 363.5h1M253 364.5h1M561 364.5h1M253 365.5h1M561 365.5h1M252 366.5h1M562 366.5h1M252 367.5h1M562 367.5h1M252 368.5h1M562 368.5h1M252 369.5h1M562 369.5h1M251 370.5h1M563 370.5h1M251 371.5h1M563 371.5h1M251 372.5h1M563 372.5h1M251 373.5h1M563 373.5h1M250 374.5h1M564 374.5h1M250 375.5h1M564 375.5h1M250 376.5h1M564 376.5h1M250 377.5h1M564 377.5h1M250 378.5h1M564 378.5h1M249 379.5h1M565 379.5h1M249 380.5h1M565 380.5h1M249 381.5h1M565 381.5h1M249 382.5h1M565 382.5h1M249 383.5h1M565 383.5h1M249 384.5h1M565 384.5h1M249 385.5h1M565 385.5h1M248 386.5h1M566 386.5h1M248 387.5h1M566 387.5h1M248 388.5h1M566 388.5h1M248 389.5h1M566 389.5h1M248 390.5h1M566 390.5h1M248 391.5h1M566 391.5h1M248 392.5h1M566 392.5h1M248 393.5h1M566 393.5h1M248 394.5h1M566 394.5h1M247 395.5h1M567 395.5h1M247 396.5h1M567 396.5h1M247 397.5h1M567 397.5h1M247 398.5h1M567 398.5h1M247 399.5h1M567 399.5h1M247 400.5h1M567 400.5h1M247 401.5h1M567 401.5h1M247 402.5h1M567 402.5h1M247 403.5h1M567 403.5h1M247 404.5h1M567 404.5h1M247 405.5h1M567 405.5h1M247 406.5h1M567 406.5h1M247 407.5h1M567 407.5h1M247 408.5h1M567 408.5h1M247 409.5h1M567 409.5h1M247 410.5h1M567 410.5h1M247 411.5h1M567 411.5h1M247 412.5h1M567 412.5h1M247 413.5h1M567 413.5h1M247 414.5h1M567 414.5h1M247 415.5h1M567 415.5h1M247 416.5h1M567 416.5h1M247 417.5h1M567 417.5h1M247 418.5h1M567 418.5h1M247 419.5h1M567 419.5h1M248 420.5h1M566 420.5h1M248 421.5h1M566 421.5h1M248 422.5h1M566 422.5h1M248 423.5h1M566 423.5h1M248 424.5h1M566 424.5h1M248 425.5h1M566 425.5h1M248 426.5h1M566 426.5h1M248 427.5h1M566 427.5h1M248 428.5h1M566 428.5h1M249 429.5h1M565 429.5h1M249 430.5h1M565 430.5h1M249 431.5h1M565 431.5h1M249 432.5h1M565 432.5h1M249 433.5h1M565 433.5h1M249 434.5h1M565 434.5h1M249 435.5h1M565 435.5h1M250 436.5h1M564 436.5h1M250 437.5h1M564 437.5h1M250 438.5h1M564 438.5h1M250 439.5h1M564 439.5h1M250 440.5h1M564 440.5h1M251 441.5h1M563 441.5h1M251 442.5h1M563 442.5h1M251 443.5h1M563 443.5h1M251 444.5h1M563 444.5h1M252 445.5h1M562 445.5h1M252 446.5h1M562 446.5h1M252 447.5h1M562 447.5h1M252 448.5h1M562 448.5h1M253 449.5h1M561 449.5h1M253 450.5h1M561 450.5h1M253 451.5h1M561 451.5h1M253 452.5h1M561 452.5h1M254 453.5h1M560 453.5h1M254 454.5h1M560 454.5h1M254 455.5h1M560 455.5h1M255 456.5h1M559 456.5h1M255 457.5h1M559 457.5h1M255 458.5h1M559 458.5h1M256 459.5h1M558 459.5h1M256 460.5h1M558 460.5h1M256 461.5h1M558 461.5h1M257 462.5h1M557 462.5h1M257 463.5h1M557 463.5h1M257 464.5h1M557 464.5h1M258 465.5h1M556 465.5h1M258 466.5h1M556 466.5h1M259 467.5h1M555 467.5h1M259 468.5h1M555 468.5h1M260 469.5h1M554 469.5h1M260 470.5h1M554 470.5h1M260 471.5h1M554 471.5h1M261 472.5h1M553 472.5h1M261 473.5h1M553 473.5h1M262 474.5h1M552 474.5h1M262 475.5h1M552 475.5h1M263 476.5h1M551 476.5h1M263 477.5h1M551 477.5h1M264 478.5h1M550 478.5h1M264 479.5h1M550 479.5h1M265 480.5h1M549 480.5h1M265 481.5h1M549 481.5h1M266 482.5h1M548 482.5h1M266 483.5h1M548 483.5h1M267 484.5h1M547 484.5h1M267 485.5h1M547 485.5h1M268 486.5h1M546 486.5h1M268 487.5h1M546 487.5h1M269 488.5h1M545 488.5h1M270 489.5h1M544 489.5h1M270 490.5h1M544 490.5h1M271 491.5h1M543 491.5h1M271 492.5h1M543 492.5h1M272 493.5h1M542 493.5h1M273 494.5h1M541 494.5h1M273 495.5h1M541 495.5h1M274 496.5h1M540 496.5h1M275 497.5h1M539 497.5h1M275 498.5h1M539 498.5h1M276 499.5h1M538 499.5h1M277 500.5h1M537 500.5h1M278 501.5h1M536 501.5h1M278 502.5h1M536 502.5h1M279 503.5h1M535 503.5h1M280 504.5h1M534 504.5h1M281 505.5h1M533 505.5h1M281 506.5h1M533 506.5h1M282 507.5h1M532 507.5h1M283 508.5h1M531 508.5h1M284 509.5h1M530 509.5h1M285 510.5h1M529 510.5h1M285 511.5h1M529 511.5h1M286 512.5h1M528 512.5h1M287 513.5h1M527 513.5h1M288 514.5h1M526 514.5h1M289 515.5h1M525 515.5h1M290 516.5h1M524 516.5h1M291 517.5h1M523 517.5h1M292 518.5h1M522 518.5h1M293 519.5h1M521 519.5h1M294 520.5h1M520 520.5h1M295 521.5h1M519 521.5h1M296 522.5h1M518 522.5h1M297 523.5h1M517 523.5h1M298 524.5h1M516 524.5h1M299 525.5h1M515 525.5h1M300 526.5h1M514 526.5h1M301 527.5h1M513 527.5h1M302 528.5h1M512 528.5h1M303 529.5h2M510 529.5h2M305 530.5h1M509 530.5h1M306 531.5h1M508 531.5h1M307 532.5h1M507 532.5h1M308 533.5h2M505 533.5h2M310 534.5h1M504 534.5h1M311 535.5h1M503 535.5h1M312 536.5h2M501 536.5h2M314 537.5h1M500 537.5h1M315 538.5h1M499 538.5h1M316 539.5h2M497 539.5h2M318 540.5h1M496 540.5h1M319 541.5h2M494 541.5h2M321 542.5h1M493 542.5h1M322 543.5h2M491 543.5h2M324 544.5h2M489 544.5h2M326 545.5h1M488 545.5h1M327 546.5h2M486 546.5h2M329 547.5h2M484 547.5h2M331 548.5h2M482 548.5h2M333 549.5h2M480 549.5h2M335 550.5h2M478 550.5h2M337 551.5h2M476 551.5h2M339 552.5h2M474 552.5h2M341 553.5h2M472 553.5h2M343 554.5h3M469 554.5h3M346 555.5h2M467 555.5h2M348 556.5h2M465 556.5h2M350 557.5h3M462 557.5h3M353 558.5h3M459 558.5h3M356 559.5h3M456 559.5h3M359 560.5h3M453 560.5h3M362 561.5h4M449 561.5h4M366 562.5h4M445 562.5h4M370 563.5h4M441 563.5h4M374 564.5h5M436 564.5h5M379 565.5h7M429 565.5h7M386 566.5h9M420 566.5h9M395 567.5h25" fill="none" stroke="#dedede" stroke-width="1"/>
<path d="M391 127.5h33M379 128.5h12M424 128.5h12M370 129.5h9M436 129.5h9M363 130.5h7M445 130.5h7M358 131.5h5M452 131.5h5M352 132.5h6M457 132.5h6M348 133.5h4M463 133.5h4M343 134.5h5M467 134.5h5M339 135.5h4M472 135.5h4M335 136.5h4M476 136.5h4M332 137.5h3M480 137.5h3M328 138.5h4M483 138.5h4M325 139.5h3M487 139.5h3M322 140.5h3M490 140.5h3M319 141.5h3M493 141.5h3M316 142.5h3M496 142.5h3M313 143.5h3M499 143.5h3M310 144.5h3M502 144.5h3M307 145.5h3M505 145.5h3M305 146.5h2M508 146.5h2M302 147.5h3M510 147.5h3M300 148.5h2M513 148.5h2M298 149.5h2M515 149.5h2M295 150.5h3M517 150.5h3M293 151.5h2M520 151.5h2M291 152.5h2M522 152.5h2M289 153.5h2M524 153.5h2M286 154.5h3M526 154.5h3M284 155.5h2M529 155.5h2M282 156.5h2M531 156.5h2M280 157.5h2M533 157.5h2M278 158.5h2M535 158.5h2M277 159.5h1M537 159.5h1M275 160.5h2M538 160.5h2M273 161.5h2M540 161.5h2M271 162.5h2M542 162.5h2M269 163.5h2M544 163.5h2M268 164.5h1M546 164.5h1M266 165.5h2M547 165.5h2M264 166.5h2M549 166.5h2M262 167.5h2M551 167.5h2M261 168.5h1M553 168.5h1M259 169.5h2M554 169.5h2M258 170.5h1M556 170.5h1M256 171.5h2M557 171.5h2M254 172.5h2M559 172.5h2M253 173.5h1M561 173.5h1M251 174.5h2M562 174.5h2M250 175.5h1M564 175.5h1M249 176.5h1M565 176.5h1M247 177.5h2M566 177.5h2M246 178.5h1M568 178.5h1M244 179.5h2M569 179.5h2M243 180.5h1M571 180.5h1M242 181.5h1M572 181.5h1M240 182.5h2M573 182.5h2M239 183.5h1M575 183.5h1M238 184.5h1M576 184.5h1M236 185.5h2M577 185.5h2M235 186.5h1M579 186.5h1M234 187.5h1M580 187.5h1M232 188.5h2M581 188.5h2M231 189.5h1M583 189.5h1M230 190.5h1M584 190.5h1M229 191.5h1M585 191.5h1M228 192.5h1M586 192.5h1M226 193.5h2M587 193.5h2M225 194.5h1M589 194.5h1M224 195.5h1M590 195.5h1M223 196.5h1M591 196.5h1M222 197.5h1M592 197.5h1M221 198.5h1M593 198.5h1M220 199.5h1M594 199.5h1M218 200.5h2M595 200.5h2M217 201.5h1M597 201.5h1M216 202.5h1M598 202.5h1M215 203.5h1M599 203.5h1M214 204.5h1M600 204.5h1M213 205.5h1M601 205.5h1M212 206.5h1M602 206.5h1M211 207.5h1M603 207.5h1M210 208.5h1M604 208.5h1M209 209.5h1M605 209.5h1M208 210.5h1M606 210.5h1M207 211.5h1M607 211.5h1M206 212.5h1M608 212.5h1M205 213.5h1M609 213.5h1M204 214.5h1M610 214.5h1M203 215.5h1M611 215.5h1M202 216.5h1M612 216.5h1M201 217.5h1M613 217.5h1M200 218.5h1M614 218.5h1M200 219.5h1M614 219.5h1M199 220.5h1M615 220.5h1M198 221.5h1M616 221.5h1M197 222.5h1M617 222.5h1M196 223.5h1M618 223.5h1M195 224.5h1M619 224.5h1M194 225.5h1M620 225.5h1M193 226.5h1M621 226.5h1M193 227.5h1M621 227.5h1M192 228.5h1M622 228.5h1M191 229.5h1M623 229.5h1M190 230.5h1M624 230.5h1M189 231.5h1M625 231.5h1M188 232.5h1M626 232.5h1M188 233.5h1M626 233.5h1M187 234.5h1M627 234.5h1M186 235.5h1M628 235.5h1M185 236.5h1M629 236.5h1M185 237.5h1M629 237.5h1M184 238.5h1M630 238.5h1M183 239.5h1M631 239.5h1M182 240.5h1M632 240.5h1M182 241.5h1M632 241.5h1M181 242.5h1M633 242.5h1M180 243.5h1M634 243.5h1M179 244.5h1M635 244.5h1M179 245.5h1M635 245.5h1M178 246.5h1M636 246.5h1M177 247.5h1M637 247.5h1M177 248.5h1M637 248.5h1M176 249.5h1M638 249.5h1M175 250.5h1M639 250.5h1M174 251.5h1M640 251.5h1M174 252.5h1M640 252.5h1M173 253.5h1M641 253.5h1M172 254.5h1M642 254.5h1M172 255.5h1M642 255.5h1M171 256.5h1M643 256.5h1M171 257.5h1M643 257.5h1M170 258.5h1M644 258.5h1M169 259.5h1M645 259.5h1M169 260.5h1M645 260.5h1M168 261.5h1M646 261.5h1M167 262.5h1M647 262.5h1M167 263.5h1M647 263.5h1M166 264.5h1M648 264.5h1M166 265.5h1M648 265.5h1M165 266.5h1M649 266.5h1M165 267.5h1M649 267.5h1M164 268.5h1M650 268.5h1M163 269.5h1M651 269.5h1M163 270.5h1M651 270.5h1M162 271.5h1M652 271.5h1M162 272.5h1M652 272.5h1M161 273.5h1M653 273.5h1M161 274.5h1M653 274.5h1M160 275.5h1M654 275.5h1M160 276.5h1M654 276.5h1M159 277.5h1M655 277.5h1M158 278.5h1M656 278.5h1M158 279.5h1M656 279.5h1M157 280.5h1M657 280.5h1M157 281.5h1M657 281.5h1M156 282.5h1M658 282.5h1M156 283.5h1M658 283.5h1M155 284.5h1M659 284.5h1M155 285.5h1M659 285.5h1M154 286.5h1M660 286.5h1M154 287.5h1M660 287.5h1M154 288.5h1M660 288.5h1M153 289.5h1M661 289.5h1M153 290.5h1M661 290.5h1M152 291.5h1M662 291.5h1M152 292.5h1M662 292.5h1M151 293.5h1M663 293.5h1M151 294.5h1M663 294.5h1M150 295.5h1M664 295.5h1M150 296.5h1M664 296.5h1M150 297.5h1M664 297.5h1M149 298.5h1M665 298.5h1M149 299.5h1M665 299.5h1M148 300.5h1M666 300.5h1M148 301.5h1M666 301.5h1M147 302.5h1M667 302.5h1M147 303.5h1M667 303.5h1M147 304.5h1M667 304.5h1M146 305.5h1M668 305.5h1M146 306.5h1M668 306.5h1M145 307.5h1M669 307.5h1M145 308.5h1M669 308.5h1M145 309.5h1M669 309.5h1M144 310.5h1M670 310.5h1M144 311.5h1M670 311.5h1M144 312.5h1M670 312.5h1M143 313.5h1M671 313.5h1M143 314.5h1M671 314.5h1M143 315.5h1M671 315.5h1M142 316.5h1M672 316.5h1M142 317.5h1M672 317.5h1M142 318.5h1M672 318.5h1M141 319.5h1M673 319.5h1M141 320.5h1M673 320.5h1M141 321.5h1M673 321.5h1M140 322.5h1M674 322.5h1M140 323.5h1M674 323.5h1M140 324.5h1M674 324.5h1M139 325.5h1M675 325.5h1M139 326.5h1M675 326.5h1M139 327.5h1M675 327.5h1M138 328.5h1M676 328.5h1M138 329.5h1M676 329.5h1M138 330.5h1M676 330.5h1M138 331.5h1M676 331.5h1M137 332.5h1M677 332.5h1M137 333.5h1M677 333.5h1M137 334.5h1M677 334.5h1M136 335.5h1M678 335.5h1M136 336.5h1M678 336.5h1M136 337.5h1M678 337.5h1M136 338.5h1M678 338.5h1M135 339.5h1M679 339.5h1M135 340.5h1M679 340.5h1M135 341.5h1M679 341.5h1M135 342.5h1M679 342.5h1M134 343.5h1M680 343.5h1M134 344.5h1M680 344.5h1M134 345.5h1M680 345.5h1M134 346.5h1M680 346.5h1M134 347.5h1M680 347.5h1M133 348.5h1M681 348.5h1M133 349.5h1M681 349.5h1M133 350.5h1M681 350.5h1M133 351.5h1M681 351.5h1M132 352.5h1M682 352.5h1M132 353.5h1M682 353.5h1M132 354.5h1M682 354.5h1M132 355.5h1M682 355.5h1M132 356.5h1M682 356.5h1M132 357.5h1M682 357.5h1M131 358.5h1M683 358.5h1M131 359.5h1M683 359.5h1M131 360.5h1M683 360.5h1M131 361.5h1M683 361.5h1M131 362.5h1M683 362.5h1M130 363.5h1M684 363.5h1M130 364.5h1M684 364.5h1M130 365.5h1M684 365.5h1M130 366.5h1M684 366.5h1M130 367.5h1M684 367.5h1M130 368.5h1M684 368.5h1M130 369.5h1M684 369.5h1M129 370.5h1M685 370.5h1M129 371.5h1M685 371.5h1M129 372.5h1M685 372.5h1M129 373.5h1M685 373.5h1M129 374.5h1M685 374.5h1M129 375.5h1M685 375.5h1M129 376.5h1M685 376.5h1M129 377.5h1M685 377.5h1M129 378.5h1M685 378.5h1M128 379.5h1M686 379.5h1M128 380.5h1M686 380.5h1M128 381.5h1M686 381.5h1M128 382.5h1M686 382.5h1M128 383.5h1M686 383.5h1M128 384.5h1M686 384.5h1M128 385.5h1M686 385.5h1M128 386.5h1M686 386.5h1M128 387.5h1M686 387.5h1M128 388.5h1M686 388.5h1M128 389.5h1M686 389.5h1M128 390.5h1M686 390.5h1M127 391.5h1M687 391.5h1M127 392.5h1M687 392.5h1M127 393.5h1M687 393.5h1M127 394.5h1M687 394.5h1M127 395.5h1M687 395.5h1M127 396.5h1M687 396.5h1M127 397.5h1M687 397.5h1M127 398.5h1M687 398.5h1M127 399.5h1M687 399.5h1M127 400.5h1M687 400.5h1M127 401.5h1M687 401.5h1M127 402.5h1M687 402.5h1M127 403.5h1M687 403.5h1M127 404.5h1M687 404.5h1M127 405.5h1M687 405.5h1M127 406.5h1M687 406.5h1M127 407.5h1M687 407.5h1M127 408.5h1M687 408.5h1M127 409.5h1M687 409.5h1M127 410.5h1M687 410.5h1M127 411.5h1M687 411.5h1M127 412.5h1M687 412.5h1M127 413.5h1M687 413.5h1M127 414.5h1M687 414.5h1M127 415.5h1M687 415.5h1M127 416.5h1M687 416.5h1M127 417.5h1M687 417.5h1M127 418.5h1M687 418.5h1M127 419.5h1M687 419.5h1M127 420.5h1M687 420.5h1M127 421.5h1M687 421.5h1M127 422.5h1M687 422.5h1M127 423.5h1M687 423.5h1M128 424.5h1M686 424.5h1M128 425.5h1M686 425.5h1M128 426.5h1M686 426.5h1M128 427.5h1M686 427.5h1M128 428.5h1M686 428.5h1M128 429.5h1M686 429.5h1M128 430.5h1M686 430.5h1M128 431.5h1M686 431.5h1M128 432.5h1M686 432.5h1M128 433.5h1M686 433.5h1M128 434.5h1M686 434.5h1M128 435.5h1M686 435.5h1M129 436.5h1M685 436.5h1M129 437.5h1M685 437.5h1M129 438.5h1M685 438.5h1M129 439.5h1M685 439.5h1M129 440.5h1M685 440.5h1M129 441.5h1M685 441.5h1M129 442.5h1M685 442.5h1M129 443.5h1M685 443.5h1M129 444.5h1M685 444.5h1M130 445.5h1M684 445.5h1M130 446.5h1M684 446.5h1M130 447.5h1M684 447.5h1M130 448.5h1M684 448.5h1M130 449.5h1M684 449.5h1M130 450.5h1M684 450.5h1M130 451.5h1M684 451.5h1M131 452.5h1M683 452.5h1M131 453.5h1M683 453.5h1M131 454.5h1M683 454.5h1M131 455.5h1M683 455.5h1M131 456.5h1M683 456.5h1M132 457.5h1M682 457.5h1M132 458.5h1M682 458.5h1M132 459.5h1M682 459.5h1M132 460.5h1M682 460.5h1M132 461.5h1M682 461.5h1M132 462.5h1M682 462.5h1M133 463.5h1M681 463.5h1M133 464.5h1M681 464.5h1M133 465.5h1M681 465.5h1M133 466.5h1M681 466.5h1M134 467.5h1M680 467.5h1M134 468.5h1M680 468.5h1M134 469.5h1M680 469.5h1M134 470.5h1M680 470.5h1M134 471.5h1M680 471.5h1M135 472.5h1M679 472.5h1M135 473.5h1M679 473.5h1M135 474.5h1M679 474.5h1M135 475.5h1M679 475.5h1M136 476.5h1M678 476.5h1M136 477.5h1M678 477.5h1M136 478.5h1M678 478.5h1M136 479.5h1M678 479.5h1M137 480.5h1M677 480.5h1M137 481.5h1M677 481.5h1M137 482.5h1M677 482.5h1M138 483.5h1M676 483.5h1M138 484.5h1M676 484.5h1M138 485.5h1M676 485.5h1M138 486.5h1M676 486.5h1M139 487.5h1M675 487.5h1M139 488.5h1M675 488.5h1M139 489.5h1M675 489.5h1M140 490.5h1M674 490.5h1M140 491.5h1M674 491.5h1M140 492.5h1M674 492.5h1M141 493.5h1M673 493.5h1M141 494.5h1M673 494.5h1M141 495.5h1M673 495.5h1M142 496.5h1M672 496.5h1M142 497.5h1M672 497.5h1M142 498.5h1M672 498.5h1M143 499.5h1M671 499.5h1M143 500.5h1M671 500.5h1M143 501.5h1M671 501.5h1M144 502.5h1M670 502.5h1M144 503.5h1M670 503.5h1M144 504.5h1M670 504.5h1M145 505.5h1M669 505.5h1M145 506.5h1M669 506.5h1M145 507.5h1M669 507.5h1M146 508.5h1M668 508.5h1M146 509.5h1M668 509.5h1M147 510.5h1M667 510.5h1M147 511.5h1M667 511.5h1M147 512.5h1M667 512.5h1M148 513.5h1M666 513.5h1M148 514.5h1M666 514.5h1M149 515.5h1M665 515.5h1M149 516.5h1M665 516.5h1M150 517.5h1M664 517.5h1M150 518.5h1M664 518.5h1M150 519.5h1M664 519.5h1M151 520.5h1M663 520.5h1M151 521.5h1M663 521.5h1M152 522.5h1M662 522.5h1M152 523.5h1M662 523.5h1M153 524.5h1M661 524.5h1M153 525.5h1M661 525.5h1M154 526.5h1M660 526.5h1M154 527.5h1M660 527.5h1M154 528.5h1M660 528.5h1M155 529.5h1M659 529.5h1M155 530.5h1M659 530.5h1M156 531.5h1M658 531.5h1M156 532.5h1M658 532.5h1M157 533.5h1M657 533.5h1M157 534.5h1M657 534.5h1M158 535.5h1M656 535.5h1M158 536.5h1M656 536.5h1M159 537.5h1M655 537.5h1M160 538.5h1M654 538.5h1M160 539.5h1M654 539.5h1M161 540.5h1M653 540.5h1M161 541.5h1M653 541.5h1M162 542.5h1M652 542.5h1M162 543.5h1M652 543.5h1M163 544.5h1M651 544.5h1M163 545.5h1M651 545.5h1M164 546.5h1M650 546.5h1M165 547.5h1M649 547.5h1M165 548.5h1M649 548.5h1M166 549.5h1M648 549.5h1M166 550.5h1M648 550.5h1M167 551.5h1M647 551.5h1M167 552.5h1M647 552.5h1M168 553.5h1M646 553.5h1M169 554.5h1M645 554.5h1M169 555.5h1M645 555.5h1M170 556.5h1M644 556.5h1M171 557.5h1M643 557.5h1M171 558.5h1M643 558.5h1M172 559.5h1M642 559.5h1M172 560.5h1M642 560.5h1M173 561.5h1M641 561.5h1M174 562.5h1M640 562.5h1M174 563.5h1M640 563.5h1M175 564.5h1M639 564.5h1M176 565.5h1M638 565.5h1M177 566.5h1M637 566.5h1M177 567.5h1M637 567.5h1M178 568.5h1M636 568.5h1M179 569.5h1M635 569.5h1M179 570.5h1M635 570.5h1M180 571.5h1M634 571.5h1M181 572.5h1M633 572.5h1M182 573.5h1M632 573.5h1M182 574.5h1M632 574.5h1M183 575.5h1M631 575.5h1M184 576.5h1M630 576.5h1M185 577.5h1M629 577.5h1M185 578.5h1M629 578.5h1M186 579.5h1M628 579.5h1M187 580.5h1M627 580.5h1M188 581.5h1M626 581.5h1M188 582.5h1M626 582.5h1M189 583.5h1M625 583.5h1M190 584.5h1M624 584.5h1M191 585.5h1M623 585.5h1M192 586.5h1M622 586.5h1M193 587.5h1M621 587.5h1M193 588.5h1M621 588.5h1M194 589.5h1M620 589.5h1M195 590.5h1M619 590.5h1M196 591.5h1M618 591.5h1M197 592.5h1M617 592.5h1M198 593.5h1M616 593.5h1M199 594.5h1M615 594.5h1M200 595.5h1M614 595.5h1M200 596.5h1M614 596.5h1M201 597.5h1M613 597.5h1M202 598.5h1M612 598.5h1M203 599.5h1M611 599.5h1M204 600.5h1M610 600.5h1M205 601.5h1M609 601.5h1M206 602.5h1M608 602.5h1M207 603.5h1M607 603.5h1M208 604.5h1M606 604.5h1M209 605.5h1M605 605.5h1M210 606.5h1M604 606.5h1M211 607.5h1M603 607.5h1M212 608.5h1M602 608.5h1M213 609.5h1M601 609.5h1M214 610.5h1M600 610.5h1M215 611.5h1M599 611.5h1M216 612.5h1M598 612.5h1M217 613.5h1M597 613.5h1M218 614.5h2M595 614.5h2M220 615.5h1M594 615.5h1M221 616.5h1M593 616.5h1M222 617.5h1M592 617.5h1M223 618.5h1M591 618.5h1M224 619.5h1M590 619.5h1M225 620.5h1M589 620.5h1M226 621.5h2M587 621.5h2M228 622.5h1M586 622.5h1M229 623.5h1M585 623.5h1M230 624.5h1M584 624.5h1M231 625.5h1M583 625.5h1M232 626.5h2M581 626.5h2M234 627.5h1M580 627.5h1M235 628.5h1M579 628.5h1M236 629.5h2M577 629.5h2M238 630.5h1M576 630.5h1M239 631.5h1M575 631.5h1M240 632.5h2M573 632.5h2M242 633.5h1M572 633.5h1M243 634.5h1M571 634.5h1M244 635.5h2M569 635.5h2M246 636.5h1M568 636.5h1M247 637.5h2M566 637.5h2M249 638.5h1M565 638.5h1M250 639.5h1M564 639.5h1M251 640.5h2M562 640.5h2M253 641.5h1M561 641.5h1M254 642.5h2M559 642.5h2M256 643.5h2M557 643.5h2M258 644.5h1M556 644.5h1M259 645.5h2M554 645.5h2M261 646.5h1M553 646.5h1M262 647.5h2M551 647.5h2M264 648.5h2M549 648.5h2M266 649.5h2M547 649.5h2M268 650.5h1M546 650.5h1M269 651.5h2M544 651.5h2M271 652.5h2M542 652.5h2M273 653.5h2M540 653.5h2M275 654.5h2M538 654.5h2M277 655.5h1M537 655.5h1M278 656.5h2M535 656.5h2M280 657.5h2M533 657.5h2M282 658.5h2M531 658.5h2M284 659.5h2M529 659.5h2M286 660.5h3M526 660.5h3M289 661.5h2M524 661.5h2M291 662.5h2M522 662.5h2M293 663.5h2M520 663.5h2M295 664.5h3M517 664.5h3M298 665.5h2M515 665.5h2M300 666.5h2M513 666.5h2M302 667.5h3M510 667.5h3M305 668.5h2M508 668.5h2M307 669.5h3M505 669.5h3M310 670.5h3M502 670.5h3M313 671.5h3M499 671.5h3M316 672.5h3M496 672.5h3M319 673.5h3M493 673.5h3M322 674.5h3M490 674.5h3M325 675.5h3M487 675.5h3M328 676.5h4M483 676.5h4M332 677.5h3M480 677.5h3M335 678.5h4M476 678.5h4M339 679.5h4M472 679.5h4M343 680.5h5M467 680.5h5M348 681.5h4M463 681.5h4M352 682.5h6M457 682.5h6M358 683.5h5M452 683.5h5M363 684.5h7M445 684.5h7M370 685.5h9M436 685.5h9M379 686.5h12M424 686.5h12M391 687.5h33" fill="none" stroke="#dedede" stroke-width="1"/>
<path d="M388 7.5h39M373 8.5h15M427 8.5h15M363 9.5h10M442 9.5h10M355 10.5h8M452 10.5h8M348 11.5h7M460 11.5h7M341 12.5h7M467 12.5h7M336 13.5h5M474 13.5h5M330 14.5h6M479 14.5h6M325 15.5h5M485 15.5h5M321 16.5h4M490 16.5h4M316 17.5h5M494 17.5h5M312 18.5h4M499 18.5h4M308 19.5h4M503 19.5h4M304 20.5h4M507 20.5h4M301 21.5h3M511 21.5h3M297 22.5h4M514 22.5h4M294 23.5h3M518 23.5h3M290 24.5h4M521 24.5h4M287 25.5h3M525 25.5h3M284 26.5h3M528 26.5h3M281 27.5h3M531 27.5h3M278 28.5h3M534 28.5h3M275 29.5h3M537 29.5h3M272 30.5h3M540 30.5h3M270 31.5h2M543 31.5h2M267 32.5h3M545 32.5h3M264 33.5h3M548 33.5h3M262 34.5h2M551 34.5h2M259 35.5h3M553 35.5h3M257 36.5h2M556 36.5h2M254 37.5h3M558 37.5h3M252 38.5h2M561 38.5h2M250 39.5h2M563 39.5h2M247 40.5h3M565 40.5h3M245 41.5h2M568 41.5h2M243 42.5h2M570 42.5h2M241 43.5h2M572 43.5h2M238 44.5h3M574 44.5h3M236 45.5h2M577 45.5h2M234 46.5h2M579 46.5h2M232 47.5h2M581 47.5h2M230 48.5h2M583 48.5h2M228 49.5h2M585 49.5h2M226 50.5h2M587 50.5h2M224 51.5h2M589 51.5h2M222 52.5h2M591 52.5h2M220 53.5h2M593 53.5h2M218 54.5h2M595 54.5h2M217 55.5h1M597 55.5h1M215 56.5h2M598 56.5h2M213 57.5h2M600 57.5h2M211 58.5h2M602 58.5h2M209 59.5h2M604 59.5h2M208 60.5h1M606 60.5h1M206 61.5h2M607 61.5h2M204 62.5h2M609 62.5h2M203 63.5h1M611 63.5h1M201 64.5h2M612 64.5h2M199 65.5h2M614 65.5h2M198 66.5h1M616 66.5h1M196 67.5h2M617 67.5h2M194 68.5h2M619 68.5h2M193 69.5h1M621 69.5h1M191 70.5h2M622 70.5h2M190 71.5h1M624 71.5h1M188 72.5h2M625 72.5h2M187 73.5h1M627 73.5h1M185 74.5h2M628 74.5h2M184 75.5h1M630 75.5h1M182 76.5h2M631 76.5h2M181 77.5h1M633 77.5h1M179 78.5h2M634 78.5h2M178 79.5h1M636 79.5h1M176 80.5h2M637 80.5h2M175 81.5h1M639 81.5h1M174 82.5h1M640 82.5h1M172 83.5h2M641 83.5h2M171 84.5h1M643 84.5h1M170 85.5h1M644 85.5h1M168 86.5h2M645 86.5h2M167 87.5h1M647 87.5h1M166 88.5h1M648 88.5h1M164 89.5h2M649 89.5h2M163 90.5h1M651 90.5h1M162 91.5h1M652 91.5h1M160 92.5h2M653 92.5h2M159 93.5h1M655 93.5h1M158 94.5h1M656 94.5h1M157 95.5h1M657 95.5h1M155 96.5h2M658 96.5h2M154 97.5h1M660 97.5h1M153 98.5h1M661 98.5h1M152 99.5h1M662 99.5h1M150 100.5h2M663 100.5h2M149 101.5h1M665 101.5h1M148 102.5h1M666 102.5h1M147 103.5h1M667 103.5h1M146 104.5h1M668 104.5h1M145 105.5h1M669 105.5h1M143 106.5h2M670 106.5h2M142 107.5h1M672 107.5h1M141 108.5h1M673 108.5h1M140 109.5h1M674 109.5h1M139 110.5h1M675 110.5h1M138 111.5h1M676 111.5h1M137 112.5h1M677 112.5h1M136 113.5h1M678 113.5h1M135 114.5h1M679 114.5h1M134 115.5h1M680 115.5h1M133 116.5h1M681 116.5h1M131 117.5h2M682 117.5h2M130 118.5h1M684 118.5h1M129 119.5h1M685 119.5h1M128 120.5h1M686 120.5h1M127 121.5h1M687 121.5h1M126 122.5h1M688 122.5h1M125 123.5h1M689 123.5h1M124 124.5h1M690 124.5h1M123 125.5h1M691 125.5h1M122 126.5h1M692 126.5h1M121 127.5h1M693 127.5h1M120 128.5h1M694 128.5h1M119 129.5h1M695 129.5h1M118 130.5h1M696 130.5h1M117 131.5h1M697 131.5h1M117 132.5h1M697 132.5h1M116 133.5h1M698 133.5h1M115 134.5h1M699 134.5h1M114 135.5h1M700 135.5h1M113 136.5h1M701 136.5h1M112 137.5h1M702 137.5h1M111 138.5h1M703 138.5h1M110 139.5h1M704 139.5h1M109 140.5h1M705 140.5h1M108 141.5h1M706 141.5h1M107 142.5h1M707 142.5h1M106 143.5h1M708 143.5h1M106 144.5h1M708 144.5h1M105 145.5h1M709 145.5h1M104 146.5h1M710 146.5h1M103 147.5h1M711 147.5h1M102 148.5h1M712 148.5h1M101 149.5h1M713 149.5h1M100 150.5h1M714 150.5h1M100 151.5h1M714 151.5h1M99 152.5h1M715 152.5h1M98 153.5h1M716 153.5h1M97 154.5h1M717 154.5h1M96 155.5h1M718 155.5h1M96 156.5h1M718 156.5h1M95 157.5h1M719 157.5h1M94 158.5h1M720 158.5h1M93 159.5h1M721 159.5h1M92 160.5h1M722 160.5h1M92 161.5h1M722 161.5h1M91 162.5h1M723 162.5h1M90 163.5h1M724 163.5h1M89 164.5h1M725 164.5h1M89 165.5h1M725 165.5h1M88 166.5h1M726 166.5h1M87 167.5h1M727 167.5h1M86 168.5h1M728 168.5h1M86 169.5h1M728 169.5h1M85 170.5h1M729 170.5h1M84 171.5h1M730 171.5h1M83 172.5h1M731 172.5h1M83 173.5h1M731 173.5h1M82 174.5h1M732 174.5h1M81 175.5h1M733 175.5h1M80 176.5h1M734 176.5h1M80 177.5h1M734 177.5h1M79 178.5h1M735 178.5h1M78 179.5h1M736 179.5h1M78 180.5h1M736 180.5h1M77 181.5h1M737 181.5h1M76 182.5h1M738 182.5h1M76 183.5h1M738 183.5h1M75 184.5h1M739 184.5h1M74 185.5h1M740 185.5h1M74 186.5h1M740 186.5h1M73 187.5h1M741 187.5h1M72 188.5h1M742 188.5h1M72 189.5h1M742 189.5h1M71 190.5h1M743 190.5h1M70 191.5h1M744 191.5h1M70 192.5h1M744 192.5h1M69 193.5h1M745 193.5h1M68 194.5h1M746 194.5h1M68 195.5h1M746 195.5h1M67 196.5h1M747 196.5h1M67 197.5h1M747 197.5h1M66 198.5h1M748 198.5h1M65 199.5h1M749 199.5h1M65 200.5h1M749 200.5h1M64 201.5h1M750 201.5h1M64 202.5h1M750 202.5h1M63 203.5h1M751 203.5h1M62 204.5h1M752 204.5h1M62 205.5h1M752 205.5h1M61 206.5h1M753 206.5h1M61 207.5h1M753 207.5h1M60 208.5h1M754 208.5h1M59 209.5h1M755 209.5h1M59 210.5h1M755 210.5h1M58 211.5h1M756 211.5h1M58 212.5h1M756 212.5h1M57 213.5h1M757 213.5h1M57 214.5h1M757 214.5h1M56 215.5h1M758 215.5h1M56 216.5h1M758 216.5h1M55 217.5h1M759 217.5h1M54 218.5h1M760 218.5h1M54 219.5h1M760 219.5h1M53 220.5h1M761 220.5h1M53 221.5h1M761 221.5h1M52 222.5h1M762 222.5h1M52 223.5h1M762 223.5h1M51 224.5h1M763 224.5h1M51 225.5h1M763 225.5h1M50 226.5h1M764 226.5h1M50 227.5h1M764 227.5h1M49 228.5h1M765 228.5h1M49 229.5h1M765 229.5h1M48 230.5h1M766 230.5h1M48 231.5h1M766 231.5h1M47 232.5h1M767 232.5h1M47 233.5h1M767 233.5h1M46 234.5h1M768 234.5h1M46 235.5h1M768 235.5h1M45 236.5h1M769 236.5h1M45 237.5h1M769 237.5h1M44 238.5h1M770 238.5h1M44 239.5h1M770 239.5h1M44 240.5h1M770 240.5h1M43 241.5h1M771 241.5h1M43 242.5h1M771 242.5h1M42 243.5h1M772 243.5h1M42 244.5h1M772 244.5h1M41 245.5h1M773 245.5h1M41 246.5h1M773 246.5h1M40 247.5h1M774 247.5h1M40 248.5h1M774 248.5h1M40 249.5h1M774 249.5h1M39 250.5h1M775 250.5h1M39 251.5h1M775 251.5h1M38 252.5h1M776 252.5h1M38 253.5h1M776 253.5h1M37 254.5h1M777 254.5h1M37 255.5h1M777 255.5h1M37 256.5h1M777 256.5h1M36 257.5h1M778 257.5h1M36 258.5h1M778 258.5h1M35 259.5h1M779 259.5h1M35 260.5h1M779 260.5h1M35 261.5h1M779 261.5h1M34 262.5h1M780 262.5h1M34 263.5h1M780 263.5h1M33 264.5h1M781 264.5h1M33 265.5h1M781 265.5h1M33 266.5h1M781 266.5h1M32 267.5h1M782 267.5h1M32 268.5h1M782 268.5h1M32 269.5h1M782 269.5h1M31 270.5h1M783 270.5h1M31 271.5h1M783 271.5h1M30 272.5h1M784 272.5h1M30 273.5h1M784 273.5h1M30 274.5h1M784 274.5h1M29 275.5h1M785 275.5h1M29 276.5h1M785 276.5h1M29 277.5h1M785 277.5h1M28 278.5h1M786 278.5h1M28 279.5h1M786 279.5h1M28 280.5h1M786 280.5h1M27 281.5h1M787 281.5h1M27 282.5h1M787 282.5h1M27 283.5h1M787 283.5h1M26 284.5h1M788 284.5h1M26 285.5h1M788 285.5h1M26 286.5h1M788 286.5h1M25 287.5h1M789 287.5h1M25 288.5h1M789 288.5h1M25 289.5h1M789 289.5h1M24 290.5h1M790 290.5h1M24 291.5h1M790 291.5h1M24 292.5h1M790 292.5h1M24 293.5h1M790 293.5h1M23 294.5h1M791 294.5h1M23 295.5h1M791 295.5h1M23 296.5h1M791 296.5h1M22 297.5h1M792 297.5h1M22 298.5h1M792 298.5h1M22 299.5h1M792 299.5h1M22 300.5h1M792 300.5h1M21 301.5h1M793 301.5h1M21 302.5h1M793 302.5h1M21 303.5h1M793 303.5h1M20 304.5h1M794 304.5h1M20 305.5h1M794 305.5h1M20 306.5h1M794 306.5h1M20 307.5h1M794 307.5h1M19 308.5h1M795 308.5h1M19 309.5h1M795 309.5h1M19 310.5h1M795 310.5h1M19 311.5h1M795 311.5h1M18 312.5h1M796 312.5h1M18 313.5h1M796 313.5h1M18 314.5h1M796 314.5h1M18 315.5h1M796 315.5h1M17 316.5h1M797 316.5h1M17 317.5h1M797 317.5h1M17 318.5h1M797 318.5h1M17 319.5h1M797 319.5h1M17 320.5h1M797 320.5h1M16 321.5h1M798 321.5h1M16 322.5h1M798 322.5h1M16 323.5h1M798 323.5h1M16 324.5h1M798 324.5h1M15 325.5h1M799 325.5h1M15 326.5h1M799 326.5h1M15 327.5h1M799 327.5h1M15 328.5h1M799 328.5h1M15 329.5h1M799 329.5h1M14 330.5h1M800 330.5h1M14 331.5h1M800 331.5h1M14 332.5h1M800 332.5h1M14 333.5h1M800 333.5h1M14 334.5h1M800 334.5h1M14 335.5h1M800 335.5h1M13 336.5h1M801 336.5h1M13 337.5h1M801 337.5h1M13 338.5h1M801 338.5h1M13 339.5h1M801 339.5h1M13 340.5h1M801 340.5h1M12 341.5h1M802 341.5h1M12 342.5h1M802 342.5h1M12 343.5h1M802 343.5h1M12 344.5h1M802 344.5h1M12 345.5h1M802 345.5h1M12 346.5h1M802 346.5h1M12 347.5h1M802 347.5h1M11 348.5h1M803 348.5h1M11 349.5h1M803 349.5h1M11 350.5h1M803 350.5h1M11 351.5h1M803 351.5h1M11 352.5h1M803 352.5h1M11 353.5h1M803 353.5h1M11 354.5h1M803 354.5h1M10 355.5h1M804 355.5h1M10 356.5h1M804 356.5h1M10 357.5h1M804 357.5h1M10 358.5h1M804 358.5h1M10 359.5h1M804 359.5h1M10 360.5h1M804 360.5h1M10 361.5h1M804 361.5h1M10 362.5h1M804 362.5h1M9 363.5h1M805 363.5h1M9 364.5h1M805 364.5h1M9 365.5h1M805 365.5h1M9 366.5h1M805 366.5h1M9 367.5h1M805 367.5h1M9 368.5h1M805 368.5h1M9 369.5h1M805 369.5h1M9 370.5h1M805 370.5h1M9 371.5h1M805 371.5h1M9 372.5h1M805 372.5h1M8 373.5h1M8 374.5h1M8 375.5h1M8 376.5h1M8 377.5h1M8 378.5h1M8 379.5h1M8 380.5h1M8 381.5h1M8 382.5h1M8 383.5h1M8 384.5h1M8 385.5h1M8 386.5h1M8 387.5h1M7 388.5h1M7 389.5h1M7 390.5h1M7 391.5h1M7 392.5h1M7 393.5h1M7 394.5h1M7 395.5h1M7 396.5h1M7 397.5h1M7 398.5h1M7 399.5h1M7 400.5h1M7 401.5h1M7 402.5h1M7 403.5h1M7 404.5h1M7 405.5h1M7 406.5h1M7 407.5h1M7 408.5h1M7 409.5h1M7 410.5h1M7 411.5h1M7 412.5h1M7 413.5h1M7 414.5h1M7 415.5h1M7 416.5h1M7 417.5h1M7 418.5h1M7 419.5h1M7 420.5h1M7 421.5h1M7 422.5h1M7 423.5h1M7 424.5h1M7 425.5h1M7 426.5h1M8 427.5h1M8 428.5h1M8 429.5h1M8 430.5h1M8 431.5h1M8 432.5h1M8 433.5h1M8 434.5h1M8 435.5h1M8 436.5h1M8 437.5h1M8 438.5h1M8 439.5h1M8 440.5h1M8 441.5h1M9 442.5h1M805 442.5h1M9 443.5h1M805 443.5h1M9 444.5h1M805 444.5h1M9 445.5h1M805 445.5h1M9 446.5h1M805 446.5h1M9 447.5h1M805 447.5h1M9 448.5h1M805 448.5h1M9 449.5h1M805 449.5h1M9 450.5h1M805 450.5h1M9 451.5h1M805 451.5h1M10 452.5h1M804 452.5h1M10 453.5h1M804 453.5h1M10 454.5h1M804 454.5h1M10 455.5h1M804 455.5h1M10 456.5h1M804 456.5h1M10 457.5h1M804 457.5h1M10 458.5h1M804 458.5h1M10 459.5h1M804 459.5h1M11 460.5h1M803 460.5h1M11 461.5h1M803 461.5h1M11 462.5h1M803 462.5h1M11 463.5h1M803 463.5h1M11 464.5h1M803 464.5h1M11 465.5h1M803 465.5h1M11 466.5h1M803 466.5h1M12 467.5h1M802 467.5h1M12 468.5h1M802 468.5h1M12 469.5h1M802 469.5h1M12 470.5h1M802 470.5h1M12 471.5h1M802 471.5h1M12 472.5h1M802 472.5h1M12 473.5h1M802 473.5h1M13 474.5h1M801 474.5h1M13 475.5h1M801 475.5h1M13 476.5h1M801 476.5h1M13 477.5h1M801 477.5h1M13 478.5h1M801 478.5h1M14 479.5h1M800 479.5h1M14 480.5h1M800 480.5h1M14 481.5h1M800 481.5h1M14 482.5h1M800 482.5h1M14 483.5h1M800 483.5h1M14 484.5h1M800 484.5h1M15 485.5h1M799 485.5h1M15 486.5h1M799 486.5h1M15 487.5h1M799 487.5h1M15 488.5h1M799 488.5h1M15 489.5h1M799 489.5h1M16 490.5h1M798 490.5h1M16 491.5h1M798 491.5h1M16 492.5h1M798 492.5h1M16 493.5h1M798 493.5h1M17 494.5h1M797 494.5h1M17 495.5h1M797 495.5h1M17 496.5h1M797 496.5h1M17 497.5h1M797 497.5h1M17 498.5h1M797 498.5h1M18 499.5h1M796 499.5h1M18 500.5h1M796 500.5h1M18 501.5h1M796 501.5h1M18 502.5h1M796 502.5h1M19 503.5h1M795 503.5h1M19 504.5h1M795 504.5h1M19 505.5h1M795 505.5h1M19 506.5h1M795 506.5h1M20 507.5h1M794 507.5h1M20 508.5h1M794 508.5h1M20 509.5h1M794 509.5h1M20 510.5h1M794 510.5h1M21 511.5h1M793 511.5h1M21 512.5h1M793 512.5h1M21 513.5h1M793 513.5h1M22 514.5h1M792 514.5h1M22 515.5h1M792 515.5h1M22 516.5h1M792 516.5h1M22 517.5h1M792 517.5h1M23 518.5h1M791 518.5h1M23 519.5h1M791 519.5h1M23 520.5h1M791 520.5h1M24 521.5h1M790 521.5h1M24 522.5h1M790 522.5h1M24 523.5h1M790 523.5h1M24 524.5h1M790 524.5h1M25 525.5h1M789 525.5h1M25 526.5h1M789 526.5h1M25 527.5h1M789 527.5h1M26 528.5h1M788 528.5h1M26 529.5h1M788 529.5h1M26 530.5h1M788 530.5h1M27 531.5h1M787 531.5h1M27 532.5h1M787 532.5h1M27 533.5h1M787 533.5h1M28 534.5h1M786 534.5h1M28 535.5h1M786 535.5h1M28 536.5h1M786 536.5h1M29 537.5h1M785 537.5h1M29 538.5h1M785 538.5h1M29 539.5h1M785 539.5h1M30 540.5h1M784 540.5h1M30 541.5h1M784 541.5h1M30 542.5h1M784 542.5h1M31 543.5h1M783 543.5h1M31 544.5h1M783 544.5h1M32 545.5h1M782 545.5h1M32 546.5h1M782 546.5h1M32 547.5h1M782 547.5h1M33 548.5h1M781 548.5h1M33 549.5h1M781 549.5h1M33 550.5h1M781 550.5h1M34 551.5h1M780 551.5h1M34 552.5h1M780 552.5h1M35 553.5h1M779 553.5h1M35 554.5h1M779 554.5h1M35 555.5h1M779 555.5h1M36 556.5h1M778 556.5h1M36 557.5h1M778 557.5h1M37 558.5h1M777 558.5h1M37 559.5h1M777 559.5h1M37 560.5h1M777 560.5h1M38 561.5h1M776 561.5h1M38 562.5h1M776 562.5h1M39 563.5h1M775 563.5h1M39 564.5h1M775 564.5h1M40 565.5h1M774 565.5h1M40 566.5h1M774 566.5h1M40 567.5h1M774 567.5h1M41 568.5h1M773 568.5h1M41 569.5h1M773 569.5h1M42 570.5h1M772 570.5h1M42 571.5h1M772 571.5h1M43 572.5h1M771 572.5h1M43 573.5h1M771 573.5h1M44 574.5h1M770 574.5h1M44 575.5h1M770 575.5h1M44 576.5h1M770 576.5h1M45 577.5h1M769 577.5h1M45 578.5h1M769 578.5h1M46 579.5h1M768 579.5h1M46 580.5h1M768 580.5h1M47 581.5h1M767 581.5h1M47 582.5h1M767 582.5h1M48 583.5h1M766 583.5h1M48 584.5h1M766 584.5h1M49 585.5h1M765 585.5h1M49 586.5h1M765 586.5h1M50 587.5h1M764 587.5h1M50 588.5h1M764 588.5h1M51 589.5h1M763 589.5h1M51 590.5h1M763 590.5h1M52 591.5h1M762 591.5h1M52 592.5h1M762 592.5h1M53 593.5h1M761 593.5h1M53 594.5h1M761 594.5h1M54 595.5h1M760 595.5h1M54 596.5h1M760 596.5h1M55 597.5h1M759 597.5h1M56 598.5h1M758 598.5h1M56 599.5h1M758 599.5h1M57 600.5h1M757 600.5h1M57 601.5h1M757 601.5h1M58 602.5h1M756 602.5h1M58 603.5h1M756 603.5h1M59 604.5h1M755 604.5h1M59 605.5h1M755 605.5h1M60 606.5h1M754 606.5h1M61 607.5h1M753 607.5h1M61 608.5h1M753 608.5h1M62 609.5h1M752 609.5h1M62 610.5h1M752 610.5h1M63 611.5h1M751 611.5h1M64 612.5h1M750 612.5h1M64 613.5h1M750 613.5h1M65 614.5h1M749 614.5h1M65 615.5h1M749 615.5h1M66 616.5h1M748 616.5h1M67 617.5h1M747 617.5h1M67 618.5h1M747 618.5h1M68 619.5h1M746 619.5h1M68 620.5h1M746 620.5h1M69 621.5h1M745 621.5h1M70 622.5h1M744 622.5h1M70 623.5h1M744 623.5h1M71 624.5h1M743 624.5h1M72 625.5h1M742 625.5h1M72 626.5h1M742 626.5h1M73 627.5h1M741 627.5h1M74 628.5h1M740 628.5h1M74 629.5h1M740 629.5h1M75 630.5h1M739 630.5h1M76 631.5h1M738 631.5h1M76 632.5h1M738 632.5h1M77 633.5h1M737 633.5h1M78 634.5h1M736 634.5h1M78 635.5h1M736 635.5h1M79 636.5h1M735 636.5h1M80 637.5h1M734 637.5h1M80 638.5h1M734 638.5h1M81 639.5h1M733 639.5h1M82 640.5h1M732 640.5h1M83 641.5h1M731 641.5h1M83 642.5h1M731 642.5h1M84 643.5h1M730 643.5h1M85 644.5h1M729 644.5h1M86 645.5h1M728 645.5h1M86 646.5h1M728 646.5h1M87 647.5h1M727 647.5h1M88 648.5h1M726 648.5h1M89 649.5h1M725 649.5h1M89 650.5h1M725 650.5h1M90 651.5h1M724 651.5h1M91 652.5h1M723 652.5h1M92 653.5h1M722 653.5h1M92 654.5h1M722 654.5h1M93 655.5h1M721 655.5h1M94 656.5h1M720 656.5h1M95 657.5h1M719 657.5h1M96 658.5h1M718 658.5h1M96 659.5h1M718 659.5h1M97 660.5h1M717 660.5h1M98 661.5h1M716 661.5h1M99 662.5h1M715 662.5h1M100 663.5h1M714 663.5h1M100 664.5h1M714 664.5h1M101 665.5h1M713 665.5h1M102 666.5h1M712 666.5h1M103 667.5h1M711 667.5h1M104 668.5h1M710 668.5h1M105 669.5h1M709 669.5h1M106 670.5h1M708 670.5h1M106 671.5h1M708 671.5h1M107 672.5h1M707 672.5h1M108 673.5h1M706 673.5h1M109 674.5h1M705 674.5h1M110 675.5h1M704 675.5h1M111 676.5h1M703 676.5h1M112 677.5h1M702 677.5h1M113 678.5h1M701 678.5h1M114 679.5h1M700 679.5h1M115 680.5h1M699 680.5h1M116 681.5h1M698 681.5h1M117 682.5h1M697 682.5h1M117 683.5h1M697 683.5h1M118 684.5h1M696 684.5h1M119 685.5h1M695 685.5h1M120 686.5h1M694 686.5h1M121 687.5h1M693 687.5h1M122 688.5h1M692 688.5h1M123 689.5h1M691 689.5h1M124 690.5h1M690 690.5h1M125 691.5h1M689 691.5h1M126 692.5h1M688 692.5h1M127 693.5h1M687 693.5h1M128 694.5h1M686 694.5h1M129 695.5h1M685 695.5h1M130 696.5h1M684 696.5h1M131 697.5h2M682 697.5h2M133 698.5h1M681 698.5h1M134 699.5h1M680 699.5h1M135 700.5h1M679 700.5h1M136 701.5h1M678 701.5h1M137 702.5h1M677 702.5h1M138 703.5h1M676 703.5h1M139 704.5h1M675 704.5h1M140 705.5h1M674 705.5h1M141 706.5h1M673 706.5h1M142 707.5h1M672 707.5h1M143 708.5h2M670 708.5h2M145 709.5h1M669 709.5h1M146 710.5h1M668 710.5h1M147 711.5h1M667 711.5h1M148 712.5h1M666 712.5h1M149 713.5h1M665 713.5h1M150 714.5h2M663 714.5h2M152 715.5h1M662 715.5h1M153 716.5h1M661 716.5h1M154 717.5h1M660 717.5h1M155 718.5h2M658 718.5h2M157 719.5h1M657 719.5h1M158 720.5h1M656 720.5h1M159 721.5h1M655 721.5h1M160 722.5h2M653 722.5h2M162 723.5h1M652 723.5h1M163 724.5h1M651 724.5h1M164 725.5h2M649 725.5h2M166 726.5h1M648 726.5h1M167 727.5h1M647 727.5h1M168 728.5h2M645 728.5h2M170 729.5h1M644 729.5h1M171 730.5h1M643 730.5h1M172 731.5h2M641 731.5h2M174 732.5h1M640 732.5h1M175 733.5h1M639 733.5h1M176 734.5h2M637 734.5h2M178 735.5h1M636 735.5h1M179 736.5h2M634 736.5h2M181 737.5h1M633 737.5h1M182 738.5h2M631 738.5h2M184 739.5h1M630 739.5h1M185 740.5h2M628 740.5h2M187 741.5h1M627 741.5h1M188 742.5h2M625 742.5h2M190 743.5h1M624 743.5h1M191 744.5h2M622 744.5h2M193 745.5h1M621 745.5h1M194 746.5h2M619 746.5h2M196 747.5h2M617 747.5h2M198 748.5h1M616 748.5h1M199 749.5h2M614 749.5h2M201 750.5h2M612 750.5h2M203 751.5h1M611 751.5h1M204 752.5h2M609 752.5h2M206 753.5h2M607 753.5h2M208 754.5h1M606 754.5h1M209 755.5h2M604 755.5h2M211 756.5h2M602 756.5h2M213 757.5h2M600 757.5h2M215 758.5h2M598 758.5h2M217 759.5h1M597 759.5h1M218 760.5h2M595 760.5h2M220 761.5h2M593 761.5h2M222 762.5h2M591 762.5h2M224 763.5h2M589 763.5h2M226 764.5h2M587 764.5h2M228 765.5h2M585 765.5h2M230 766.5h2M583 766.5h2M232 767.5h2M581 767.5h2M234 768.5h2M579 768.5h2M236 769.5h2M577 769.5h2M238 770.5h3M574 770.5h3M241 771.5h2M572 771.5h2M243 772.5h2M570 772.5h2M245 773.5h2M568 773.5h2M247 774.5h3M565 774.5h3M250 775.5h2M563 775.5h2M252 776.5h2M561 776.5h2M254 777.5h3M558 777.5h3M257 778.5h2M556 778.5h2M259 779.5h3M553 779.5h3M262 780.5h2M551 780.5h2M264 781.5h3M548 781.5h3M267 782.5h3M545 782.5h3M270 783.5h2M543 783.5h2M272 784.5h3M540 784.5h3M275 785.5h3M537 785.5h3M278 786.5h3M534 786.5h3M281 787.5h3M531 787.5h3M284 788.5h3M528 788.5h3M287 789.5h3M525 789.5h3M290 790.5h4M521 790.5h4M294 791.5h3M518 791.5h3M297 792.5h4M514 792.5h4M301 793.5h3M511 793.5h3M304 794.5h4M507 794.5h4M308 795.5h4M503 795.5h4M312 796.5h4M499 796.5h4M316 797.5h5M494 797.5h5M321 798.5h4M490 798.5h4M325 799.5h5M485 799.5h5M330 800.5h6M479 800.5h6M336 801.5h5M474 801.5h5M341 802.5h7M467 802.5h7M348 803.5h7M460 803.5h7M355 804.5h8M452 804.5h8M363 805.5h10M442 805.5h10" fill="none" stroke="#dedede" stroke-width="1"/>
<path d="M77 6.5h2M736 6.5h2M76 7.5h1M738 7.5h1M75 8.5h1M739 8.5h1M74 9.5h1M740 9.5h1M73 10.5h1M741 10.5h1M71 11.5h2M742 11.5h2M70 12.5h1M744 12.5h1M69 13.5h1M745 13.5h1M68 14.5h1M746 14.5h1M67 15.5h1M747 15.5h1M66 16.5h1M748 16.5h1M64 17.5h2M749 17.5h2M63 18.5h1M751 18.5h1M62 19.5h1M752 19.5h1M61 20.5h1M753 20.5h1M60 21.5h1M754 21.5h1M59 22.5h1M755 22.5h1M58 23.5h1M756 23.5h1M57 24.5h1M757 24.5h1M56 25.5h1M758 25.5h1M55 26.5h1M759 26.5h1M53 27.5h2M760 27.5h2M52 28.5h1M762 28.5h1M51 29.5h1M763 29.5h1M50 30.5h1M764 30.5h1M49 31.5h1M765 31.5h1M48 32.5h1M766 32.5h1M47 33.5h1M767 33.5h1M46 34.5h1M768 34.5h1M45 35.5h1M769 35.5h1M44 36.5h1M770 36.5h1M43 37.5h1M771 37.5h1M42 38.5h1M772 38.5h1M41 39.5h1M773 39.5h1M40 40.5h1M774 40.5h1M39 41.5h1M775 41.5h1M38 42.5h1M776 42.5h1M37 43.5h1M777 43.5h1M36 44.5h1M778 44.5h1M35 45.5h1M779 45.5h1M34 46.5h1M780 46.5h1M33 47.5h1M781 47.5h1M32 48.5h1M782 48.5h1M31 49.5h1M783 49.5h1M30 50.5h1M784 50.5h1M29 51.5h1M785 51.5h1M28 52.5h1M786 52.5h1M27 53.5h1M787 53.5h1M27 54.5h1M787 54.5h1M26 55.5h1M788 55.5h1M25 56.5h1M789 56.5h1M24 57.5h1M790 57.5h1M23 58.5h1M791 58.5h1M22 59.5h1M792 59.5h1M21 60.5h1M793 60.5h1M20 61.5h1M794 61.5h1M19 62.5h1M795 62.5h1M18 63.5h1M796 63.5h1M17 64.5h1M797 64.5h1M17 65.5h1M797 65.5h1M16 66.5h1M798 66.5h1M15 67.5h1M799 67.5h1M14 68.5h1M800 68.5h1M13 69.5h1M801 69.5h1M12 70.5h1M802 70.5h1M11 71.5h1M803 71.5h1M11 72.5h1M803 72.5h1M10 73.5h1M804 73.5h1M9 74.5h1M805 74.5h1M8 75.5h1M7 76.5h1M6 77.5h1M6 78.5h1M6 736.5h1M6 737.5h1M7 738.5h1M8 739.5h1M9 740.5h1M805 740.5h1M10 741.5h1M804 741.5h1M11 742.5h1M803 742.5h1M11 743.5h1M803 743.5h1M12 744.5h1M802 744.5h1M13 745.5h1M801 745.5h1M14 746.5h1M800 746.5h1M15 747.5h1M799 747.5h1M16 748.5h1M798 748.5h1M17 749.5h1M797 749.5h1M17 750.5h1M797 750.5h1M18 751.5h1M796 751.5h1M19 752.5h1M795 752.5h1M20 753.5h1M794 753.5h1M21 754.5h1M793 754.5h1M22 755.5h1M792 755.5h1M23 756.5h1M791 756.5h1M24 757.5h1M790 757.5h1M25 758.5h1M789 758.5h1M26 759.5h1M788 759.5h1M27 760.5h1M787 760.5h1M27 761.5h1M787 761.5h1M28 762.5h1M786 762.5h1M29 763.5h1M785 763.5h1M30 764.5h1M784 764.5h1M31 765.5h1M783 765.5h1M32 766.5h1M782 766.5h1M33 767.5h1M781 767.5h1M34 768.5h1M780 768.5h1M35 769.5h1M779 769.5h1M36 770.5h1M778 770.5h1M37 771.5h1M777 771.5h1M38 772.5h1M776 772.5h1M39 773.5h1M775 773.5h1M40 774.5h1M774 774.5h1M41 775.5h1M773 775.5h1M42 776.5h1M772 776.5h1M43 777.5h1M771 777.5h1M44 778.5h1M770 778.5h1M45 779.5h1M769 779.5h1M46 780.5h1M768 780.5h1M47 781.5h1M767 781.5h1M48 782.5h1M766 782.5h1M49 783.5h1M765 783.5h1M50 784.5h1M764 784.5h1M51 785.5h1M763 785.5h1M52 786.5h1M762 786.5h1M53 787.5h2M760 787.5h2M55 788.5h1M759 788.5h1M56 789.5h1M758 789.5h1M57 790.5h1M757 790.5h1M58 791.5h1M756 791.5h1M59 792.5h1M755 792.5h1M60 793.5h1M754 793.5h1M61 794.5h1M753 794.5h1M62 795.5h1M752 795.5h1M63 796.5h1M751 796.5h1M64 797.5h2M749 797.5h2M66 798.5h1M748 798.5h1M67 799.5h1M747 799.5h1M68 800.5h1M746 800.5h1M69 801.5h1M745 801.5h1M70 802.5h1M744 802.5h1M71 803.5h2M742 803.5h2M73 804.5h1M741 804.5h1M74 805.5h1M740 805.5h1" fill="none" stroke="#dedede" stroke-width="1"/>
<path d="M401 367.5h13M397 368.5h4M414 368.5h4M394 369.5h3M418 369.5h3M391 370.5h3M421 370.5h3M389 371.5h2M424 371.5h2M387 372.5h2M426 372.5h2M386 373.5h1M428 373.5h1M384 374.5h2M429 374.5h2M383 375.5h1M431 375.5h1M382 376.5h1M432 376.5h1M380 377.5h2M433 377.5h2M379 378.5h1M435 378.5h1M378 379.5h1M436 379.5h1M377 380.5h1M437 380.5h1M377 381.5h1M437 381.5h1M376 382.5h1M438 382.5h1M375 383.5h1M439 383.5h1M374 384.5h1M440 384.5h1M374 385.5h1M440 385.5h1M373 386.5h1M441 386.5h1M372 387.5h1M442 387.5h1M372 388.5h1M442 388.5h1M371 389.5h1M443 389.5h1M371 390.5h1M443 390.5h1M370 391.5h1M444 391.5h1M370 392.5h1M444 392.5h1M370 393.5h1M444 393.5h1M369 394.5h1M445 394.5h1M369 395.5h1M445 395.5h1M369 396.5h1M445 396.5h1M368 397.5h1M446 397.5h1M368 398.5h1M446 398.5h1M368 399.5h1M446 399.5h1M368 400.5h1M446 400.5h1M367 401.5h1M447 401.5h1M367 402.5h1M447 402.5h1M367 403.5h1M447 403.5h1M367 404.5h1M447 404.5h1M367 405.5h1M447 405.5h1M367 406.5h1M447 406.5h1M367 407.5h1M447 407.5h1M367 408.5h1M447 408.5h1M367 409.5h1M447 409.5h1M367 410.5h1M447 410.5h1M367 411.5h1M447 411.5h1M367 412.5h1M447 412.5h1M367 413.5h1M447 413.5h1M368 414.5h1M446 414.5h1M368 415.5h1M446 415.5h1M368 416.5h1M446 416.5h1M368 417.5h1M446 417.5h1M369 418.5h1M445 418.5h1M369 419.5h1M445 419.5h1M369 420.5h1M445 420.5h1M370 421.5h1M444 421.5h1M370 422.5h1M444 422.5h1M370 423.5h1M444 423.5h1M371 424.5h1M443 424.5h1M371 425.5h1M443 425.5h1M372 426.5h1M442 426.5h1M372 427.5h1M442 427.5h1M373 428.5h1M441 428.5h1M374 429.5h1M440 429.5h1M374 430.5h1M440 430.5h1M375 431.5h1M439 431.5h1M376 432.5h1M438 432.5h1M377 433.5h1M437 433.5h1M377 434.5h1M437 434.5h1M378 435.5h1M436 435.5h1M379 436.5h1M435 436.5h1M380 437.5h2M433 437.5h2M382 438.5h1M432 438.5h1M383 439.5h1M431 439.5h1M384 440.5h2M429 440.5h2M386 441.5h1M428 441.5h1M387 442.5h2M426 442.5h2M389 443.5h2M424 443.5h2M391 444.5h3M421 444.5h3M394 445.5h3M418 445.5h3M397 446.5h4M414 446.5h4M401 447.5h13" fill="none" stroke="#e81010" stroke-width="1"/>
</g>
<g clip-path="url(#mc)">
<rect x="395.4" y="3" width="21.6" height="9" fill="#5c4f4a"/>
<text x="395.6" y="11" textLength="21.6" lengthAdjust="spacing" font-size="10.6" fill="#ffff99" style='font-family:"Liberation Mono","DejaVu Sans Mono",monospace'>313</text>
<rect x="395.4" y="123" width="21.6" height="9" fill="#5c4f4a"/>
<text x="395.6" y="131" textLength="21.6" lengthAdjust="spacing" font-size="10.6" fill="#ffff99" style='font-family:"Liberation Mono","DejaVu Sans Mono",monospace'>219</text>
<rect x="395.4" y="243" width="21.6" height="9" fill="#5c4f4a"/>
<text x="395.6" y="251" textLength="21.6" lengthAdjust="spacing" font-size="10.6" fill="#ffff99" style='font-family:"Liberation Mono","DejaVu Sans Mono",monospace'>125</text>
<rect x="399.0" y="363" width="14.4" height="9" fill="#5c4f4a"/>
<text x="399.2" y="371" textLength="14.4" lengthAdjust="spacing" font-size="10.6" fill="#ffff99" style='font-family:"Liberation Mono","DejaVu Sans Mono",monospace'>31</text>
</g>
<rect x="8" y="758" width="245" height="46" fill="#000"/>
<rect x="9.5" y="759.5" width="242" height="43" fill="#000" stroke="#909090"/>
<text x="13.1" y="771.0" textLength="36.0" lengthAdjust="spacingAndGlyphs" font-size="9.5" fill="#e8e8e8">Symbols</text>
<text x="53.4" y="771.0" textLength="16.8" lengthAdjust="spacingAndGlyphs" font-size="9.5" fill="#e8e8e8">-CG</text>
<text x="77.7" y="771.0" textLength="14.4" lengthAdjust="spacingAndGlyphs" font-size="9.5" fill="#e8e8e8">-IC</text>
<text x="99.3" y="771.0" textLength="19.6" lengthAdjust="spacingAndGlyphs" font-size="9.5" fill="#e8e8e8">+CG</text>
<text x="124.0" y="771.0" textLength="17.4" lengthAdjust="spacingAndGlyphs" font-size="9.5" fill="#e8e8e8">+IC</text>
<text x="153.2" y="771.0" textLength="90.0" lengthAdjust="spacingAndGlyphs" font-size="9.5" fill="#e8e8e8">Strike age color codes</text>
<text x="13.1" y="784.0" textLength="27.7" lengthAdjust="spacingAndGlyphs" font-size="9.5" fill="#e8e8e8">Recent</text>
<text x="13.1" y="796.7" textLength="14.6" lengthAdjust="spacingAndGlyphs" font-size="9.5" fill="#e8e8e8">Old</text>
<g stroke="#00f0ff" stroke-width="1.1" fill="none"><circle cx="60.5" cy="780.5" r="4.2"/><path d="M58 780.5H63 M82 780.5H89 M108 780.5H113 M110.5 778.0V783.0 M132 780.5H139.4 M135.7 776.8V784.2"/><circle cx="110.5" cy="780.5" r="4.2"/></g>
<g stroke="#ffff00" stroke-width="1.1" fill="none"><circle cx="60.5" cy="793.5" r="4.2"/><path d="M58 793.5H63 M82 793.5H89 M108 793.5H113 M110.5 791.0V796.0 M132 793.5H139.4 M135.7 789.8V797.2"/><circle cx="110.5" cy="793.5" r="4.2"/></g>
<text x="153.6" y="784.0" textLength="15.5" lengthAdjust="spacingAndGlyphs" font-size="9.5" fill="#ffd000">15+</text>
<text x="188.6" y="784.0" textLength="15.8" lengthAdjust="spacingAndGlyphs" font-size="9.5" fill="#ffa800">30+</text>
<text x="223.2" y="784.0" textLength="16.5" lengthAdjust="spacingAndGlyphs" font-size="9.5" fill="#ff8c00">45+</text>
<text x="153.6" y="796.7" textLength="15.5" lengthAdjust="spacingAndGlyphs" font-size="9.5" fill="#e87000">60+</text>
<text x="188.6" y="796.7" textLength="15.8" lengthAdjust="spacingAndGlyphs" font-size="9.5" fill="#e85000">75+</text>
<text x="223.2" y="796.7" textLength="16.5" lengthAdjust="spacingAndGlyphs" font-size="9.5" fill="#e82800">90+</text>
<rect x="685" y="792" width="121" height="14" fill="#000"/>
<text x="689.5" y="802.0" textLength="112.5" lengthAdjust="spacingAndGlyphs" font-size="10" fill="#f0f0f0">©2005 Astrogenic Systems</text>
<g id="panel">
<rect x="812.5" y="8.5" width="319" height="319" rx="5" ry="5" fill="#000" stroke="#c8c8c8" stroke-width="1"/>
<rect x="812.5" y="333.5" width="319" height="114" rx="5" ry="5" fill="#000" stroke="#c8c8c8" stroke-width="1"/>
<rect x="812.5" y="453.5" width="319" height="349" rx="5" ry="5" fill="#000" stroke="#c8c8c8" stroke-width="1"/>
<rect x="819.5" y="16.5" width="57" height="17" fill="#550000" stroke="#b0b0b0"/>
<rect x="883.5" y="16.5" width="57" height="17" fill="#333" stroke="#b0b0b0"/>
<rect x="994.5" y="16.5" width="127" height="17" fill="#333" stroke="#c8c8c8"/>
<text x="823.9" y="29.6" textLength="48.3" lengthAdjust="spacingAndGlyphs" font-size="12" fill="#e0d0d0" font-weight="bold" style='font-family:"DejaVu Serif", "Liberation Serif", serif'>STRIKE</text>
<text x="890.6" y="29.6" textLength="43.1" lengthAdjust="spacingAndGlyphs" font-size="12" fill="#b8b8b8" font-weight="bold" style='font-family:"DejaVu Serif", "Liberation Serif", serif'>NOISE</text>
<text x="998.6" y="29.6" textLength="61.7" lengthAdjust="spacingAndGlyphs" font-size="12" fill="#ffffff" font-weight="bold">Bng 156°</text>
<text x="1075.6" y="29.6" textLength="42.1" lengthAdjust="spacingAndGlyphs" font-size="12" fill="#00ee00" font-weight="bold">409mi</text>
<rect x="821.5" y="64.5" width="81" height="15" fill="#555" stroke="#c8c8c8"/>
<text x="829.7" y="75.7" textLength="64.7" lengthAdjust="spacingAndGlyphs" font-size="12" fill="#ffffff">Strikes/min</text>
<rect x="931.5" y="64.5" width="81" height="15" fill="#555" stroke="#c8c8c8"/>
<text x="943.5" y="75.7" textLength="57.3" lengthAdjust="spacingAndGlyphs" font-size="12" fill="#ffffff">Close/min</text>
<rect x="1041.5" y="64.5" width="81" height="15" fill="#555" stroke="#c8c8c8"/>
<text x="1050.4" y="75.7" textLength="62.0" lengthAdjust="spacingAndGlyphs" font-size="12" fill="#ffffff">Noises/min</text>
<text x="884.0" y="112.3" textLength="18.5" lengthAdjust="spacingAndGlyphs" font-size="28" fill="#ffffff" font-weight="bold">0</text>
<text x="994.0" y="112.3" textLength="18.6" lengthAdjust="spacingAndGlyphs" font-size="28" fill="#ffffff" font-weight="bold">0</text>
<text x="1103.8" y="112.3" textLength="18.4" lengthAdjust="spacingAndGlyphs" font-size="28" fill="#c0c0c0" font-weight="bold">0</text>
<text x="826.7" y="142.7" textLength="75.8" lengthAdjust="spacingAndGlyphs" font-size="12" fill="#ffffff">Total Strikes</text>
<text x="944.6" y="142.7" textLength="68.0" lengthAdjust="spacingAndGlyphs" font-size="12" fill="#ffffff">Total Close</text>
<text x="1047.4" y="142.7" textLength="74.8" lengthAdjust="spacingAndGlyphs" font-size="12" fill="#c0c0c0">Total Noises</text>
<text x="887.6" y="160.6" textLength="14.9" lengthAdjust="spacingAndGlyphs" font-size="12" fill="#ffffff">43</text>
<text x="1005.8" y="160.6" textLength="6.8" lengthAdjust="spacingAndGlyphs" font-size="12" fill="#ffffff">0</text>
<text x="1107.4" y="160.6" textLength="14.8" lengthAdjust="spacingAndGlyphs" font-size="12" fill="#c0c0c0">40</text>
<text x="821.2" y="215.0" textLength="164.8" lengthAdjust="spacingAndGlyphs" font-size="12" fill="#c0c0c0">Lightning type distribution</text>
<rect x="821" y="217" width="303" height="1" fill="#8c8c8c"/>
<text x="821.4" y="237.2" textLength="84.0" lengthAdjust="spacingAndGlyphs" font-size="12" fill="#ffffff" font-weight="bold">Cloud-ground</text>
<text x="821.4" y="260.9" textLength="37.4" lengthAdjust="spacingAndGlyphs" font-size="12" fill="#c0c0c0">Count</text>
<text x="821.4" y="291.2" textLength="63.2" lengthAdjust="spacingAndGlyphs" font-size="12" fill="#ffffff" font-weight="bold">Intracloud</text>
<text x="821.4" y="315.0" textLength="37.4" lengthAdjust="spacingAndGlyphs" font-size="12" fill="#c0c0c0">Count</text>
<text x="913.3" y="237.2" textLength="8.0" lengthAdjust="spacingAndGlyphs" font-size="12" fill="#ffffff">+</text>
<rect x="1016" y="231" width="7" height="2" fill="#d0d0d0"/>
<rect x="925.5" y="227.5" width="50" height="10" rx="2" fill="#000" stroke="#a0a0a0"/>
<rect x="926" y="228" width="17" height="9" fill="#ff0000"/>
<rect x="1028.5" y="227.5" width="50" height="10" rx="2" fill="#000" stroke="#a0a0a0"/>
<rect x="1029" y="228" width="27" height="9" fill="#99ccff"/>
<text x="979.6" y="237.2" textLength="28.4" lengthAdjust="spacingAndGlyphs" font-size="12" fill="#ffffff" font-weight="bold">35%</text>
<text x="1082.3" y="237.2" textLength="29.4" lengthAdjust="spacingAndGlyphs" font-size="12" fill="#ffffff" font-weight="bold">56%</text>
<text x="925.5" y="260.5" textLength="15.0" lengthAdjust="spacingAndGlyphs" font-size="12" fill="#ffffff" font-weight="bold">15</text>
<text x="1028.5" y="260.5" textLength="15.0" lengthAdjust="spacingAndGlyphs" font-size="12" fill="#ffffff" font-weight="bold">24</text>
<text x="913.3" y="291.2" textLength="8.0" lengthAdjust="spacingAndGlyphs" font-size="12" fill="#ffffff">+</text>
<rect x="1016" y="285" width="7" height="2" fill="#d0d0d0"/>
<rect x="925.5" y="281.5" width="50" height="10" rx="2" fill="#000" stroke="#a0a0a0"/>
<rect x="926" y="282" width="1" height="9" fill="#ff69b4"/>
<rect x="1028.5" y="281.5" width="50" height="10" rx="2" fill="#000" stroke="#a0a0a0"/>
<rect x="1029" y="282" width="3" height="9" fill="#00ee00"/>
<text x="979.6" y="291.2" textLength="20.6" lengthAdjust="spacingAndGlyphs" font-size="12" fill="#ffffff" font-weight="bold">2%</text>
<text x="1082.3" y="291.2" textLength="20.9" lengthAdjust="spacingAndGlyphs" font-size="12" fill="#ffffff" font-weight="bold">7%</text>
<text x="925.5" y="314.5" textLength="6.0" lengthAdjust="spacingAndGlyphs" font-size="12" fill="#ffffff" font-weight="bold">1</text>
<text x="1028.5" y="314.5" textLength="7.5" lengthAdjust="spacingAndGlyphs" font-size="12" fill="#ffffff" font-weight="bold">3</text>
<text x="821.4" y="352.8" textLength="201.9" lengthAdjust="spacingAndGlyphs" font-size="17" fill="#00ee00" font-weight="bold">3/21/2026 2:00:18 PM</text>
<rect x="821" y="358" width="303" height="1" fill="#8c8c8c"/>
<text x="821.4" y="388.0" textLength="48.1" lengthAdjust="spacingAndGlyphs" font-size="12" fill="#ffffff">Squelch</text>
<text x="909.3" y="388.0" textLength="7.1" lengthAdjust="spacingAndGlyphs" font-size="12" fill="#ffffff">0</text>
<text x="981.2" y="388.0" textLength="43.6" lengthAdjust="spacingAndGlyphs" font-size="12" fill="#ffffff">Upload</text>
<text x="1061.0" y="388.0" textLength="53.8" lengthAdjust="spacingAndGlyphs" font-size="12" fill="#c0c0c0">Disabled</text>
<text x="821.4" y="408.2" textLength="72.2" lengthAdjust="spacingAndGlyphs" font-size="12" fill="#ffffff">Persistence</text>
<text x="909.3" y="408.2" textLength="41.3" lengthAdjust="spacingAndGlyphs" font-size="12" fill="#ffffff">90 min</text>
<text x="981.2" y="408.2" textLength="50.2" lengthAdjust="spacingAndGlyphs" font-size="12" fill="#ffffff">Capture</text>
<text x="1061.0" y="408.2" textLength="36.3" lengthAdjust="spacingAndGlyphs" font-size="12" fill="#00ee00">Active</text>
<text x="821.4" y="428.0" textLength="39.2" lengthAdjust="spacingAndGlyphs" font-size="12" fill="#ffffff">Range</text>
<text x="909.3" y="428.0" textLength="41.3" lengthAdjust="spacingAndGlyphs" font-size="12" fill="#ffffff">313 mi</text>
<text x="981.2" y="428.0" textLength="52.5" lengthAdjust="spacingAndGlyphs" font-size="12" fill="#ffffff">Receiver</text>
<text x="1061.0" y="428.0" textLength="50.3" lengthAdjust="spacingAndGlyphs" font-size="12" fill="#00ee00">Enabled</text>
<text x="821.4" y="474.5" textLength="43.0" lengthAdjust="spacingAndGlyphs" font-size="12" fill="#c0c0c0">Uptime</text>
<text x="909.9" y="474.5" textLength="51.4" lengthAdjust="spacingAndGlyphs" font-size="12" fill="#ffffff">1633:45</text>
<text x="981.2" y="474.5" textLength="61.5" lengthAdjust="spacingAndGlyphs" font-size="12" fill="#c0c0c0">Peak time</text>
<text x="1061.0" y="474.5" textLength="23.8" lengthAdjust="spacingAndGlyphs" font-size="12" fill="#c0c0c0">Plot</text>
<text x="821.4" y="497.5" textLength="60.0" lengthAdjust="spacingAndGlyphs" font-size="12" fill="#c0c0c0">Peak rate</text>
<text x="909.3" y="497.5" textLength="34.2" lengthAdjust="spacingAndGlyphs" font-size="12" fill="#ffffff">2/min</text>
<text x="981.2" y="497.5" textLength="50.2" lengthAdjust="spacingAndGlyphs" font-size="12" fill="#ffffff">3:16 AM</text>
<text x="1061.0" y="497.5" textLength="35.7" lengthAdjust="spacingAndGlyphs" font-size="12" fill="#ffffff">Strike</text>
<text x="822.6" y="528.0" textLength="75.4" lengthAdjust="spacingAndGlyphs" font-size="12" fill="#c0c0c0">Trend graph</text>
<text x="908.4" y="528.0" textLength="41.0" lengthAdjust="spacingAndGlyphs" font-size="12" fill="#ffffff">60 min</text>
<rect x="1088" y="542" width="1" height="236" fill="#c8c8c8"/>
<rect x="822" y="777" width="267" height="1" fill="#c8c8c8"/>
<rect x="1083" y="542" width="5" height="1" fill="#c8c8c8"/>
<rect x="1083" y="620" width="5" height="1" fill="#c8c8c8"/>
<rect x="1083" y="699" width="5" height="1" fill="#c8c8c8"/>
<rect x="1085" y="581" width="3" height="1" fill="#c8c8c8"/>
<rect x="1085" y="660" width="3" height="1" fill="#c8c8c8"/>
<rect x="1085" y="738" width="3" height="1" fill="#c8c8c8"/>
<rect x="822" y="774" width="1" height="3" fill="#c8c8c8"/>
<rect x="866" y="774" width="1" height="3" fill="#c8c8c8"/>
<rect x="911" y="774" width="1" height="3" fill="#c8c8c8"/>
<rect x="955" y="774" width="1" height="3" fill="#c8c8c8"/>
<rect x="999" y="774" width="1" height="3" fill="#c8c8c8"/>
<rect x="1044" y="774" width="1" height="3" fill="#c8c8c8"/>
<text x="820.8" y="793.0" textLength="12.9" lengthAdjust="spacingAndGlyphs" font-size="11" fill="#d0d0d0">60</text>
<text x="864.6" y="793.0" textLength="12.5" lengthAdjust="spacingAndGlyphs" font-size="11" fill="#d0d0d0">50</text>
<text x="909.8" y="793.0" textLength="12.5" lengthAdjust="spacingAndGlyphs" font-size="11" fill="#d0d0d0">40</text>
<text x="953.2" y="793.0" textLength="12.8" lengthAdjust="spacingAndGlyphs" font-size="11" fill="#d0d0d0">30</text>
<text x="998.0" y="793.0" textLength="12.5" lengthAdjust="spacingAndGlyphs" font-size="11" fill="#d0d0d0">20</text>
<text x="1042.1" y="793.0" textLength="12.5" lengthAdjust="spacingAndGlyphs" font-size="11" fill="#d0d0d0">10</text>
<text x="1088.0" y="793.0" textLength="5.5" lengthAdjust="spacingAndGlyphs" font-size="11" fill="#d0d0d0">0</text>
<text x="1100.4" y="793.0" textLength="17.4" lengthAdjust="spacingAndGlyphs" font-size="11" fill="#d0d0d0">min</text>
<text x="1092.8" y="546.7" textLength="12.9" lengthAdjust="spacingAndGlyphs" font-size="11" fill="#d0d0d0">30</text>
<text x="1092.8" y="624.5" textLength="12.9" lengthAdjust="spacingAndGlyphs" font-size="11" fill="#d0d0d0">20</text>
<text x="1092.8" y="703.0" textLength="12.9" lengthAdjust="spacingAndGlyphs" font-size="11" fill="#d0d0d0">10</text>
<path d="M987.5 777.5 L989.5 770.5 L991.5 770.5 L993.5 777.5" fill="none" stroke="#fff" stroke-width="1"/>
<path d="M1013.5 777.5 L1014.5 770.5 L1018.5 770.5 L1019.5 777.5" fill="none" stroke="#fff" stroke-width="1"/>
</g>
</svg>
</body></html>
